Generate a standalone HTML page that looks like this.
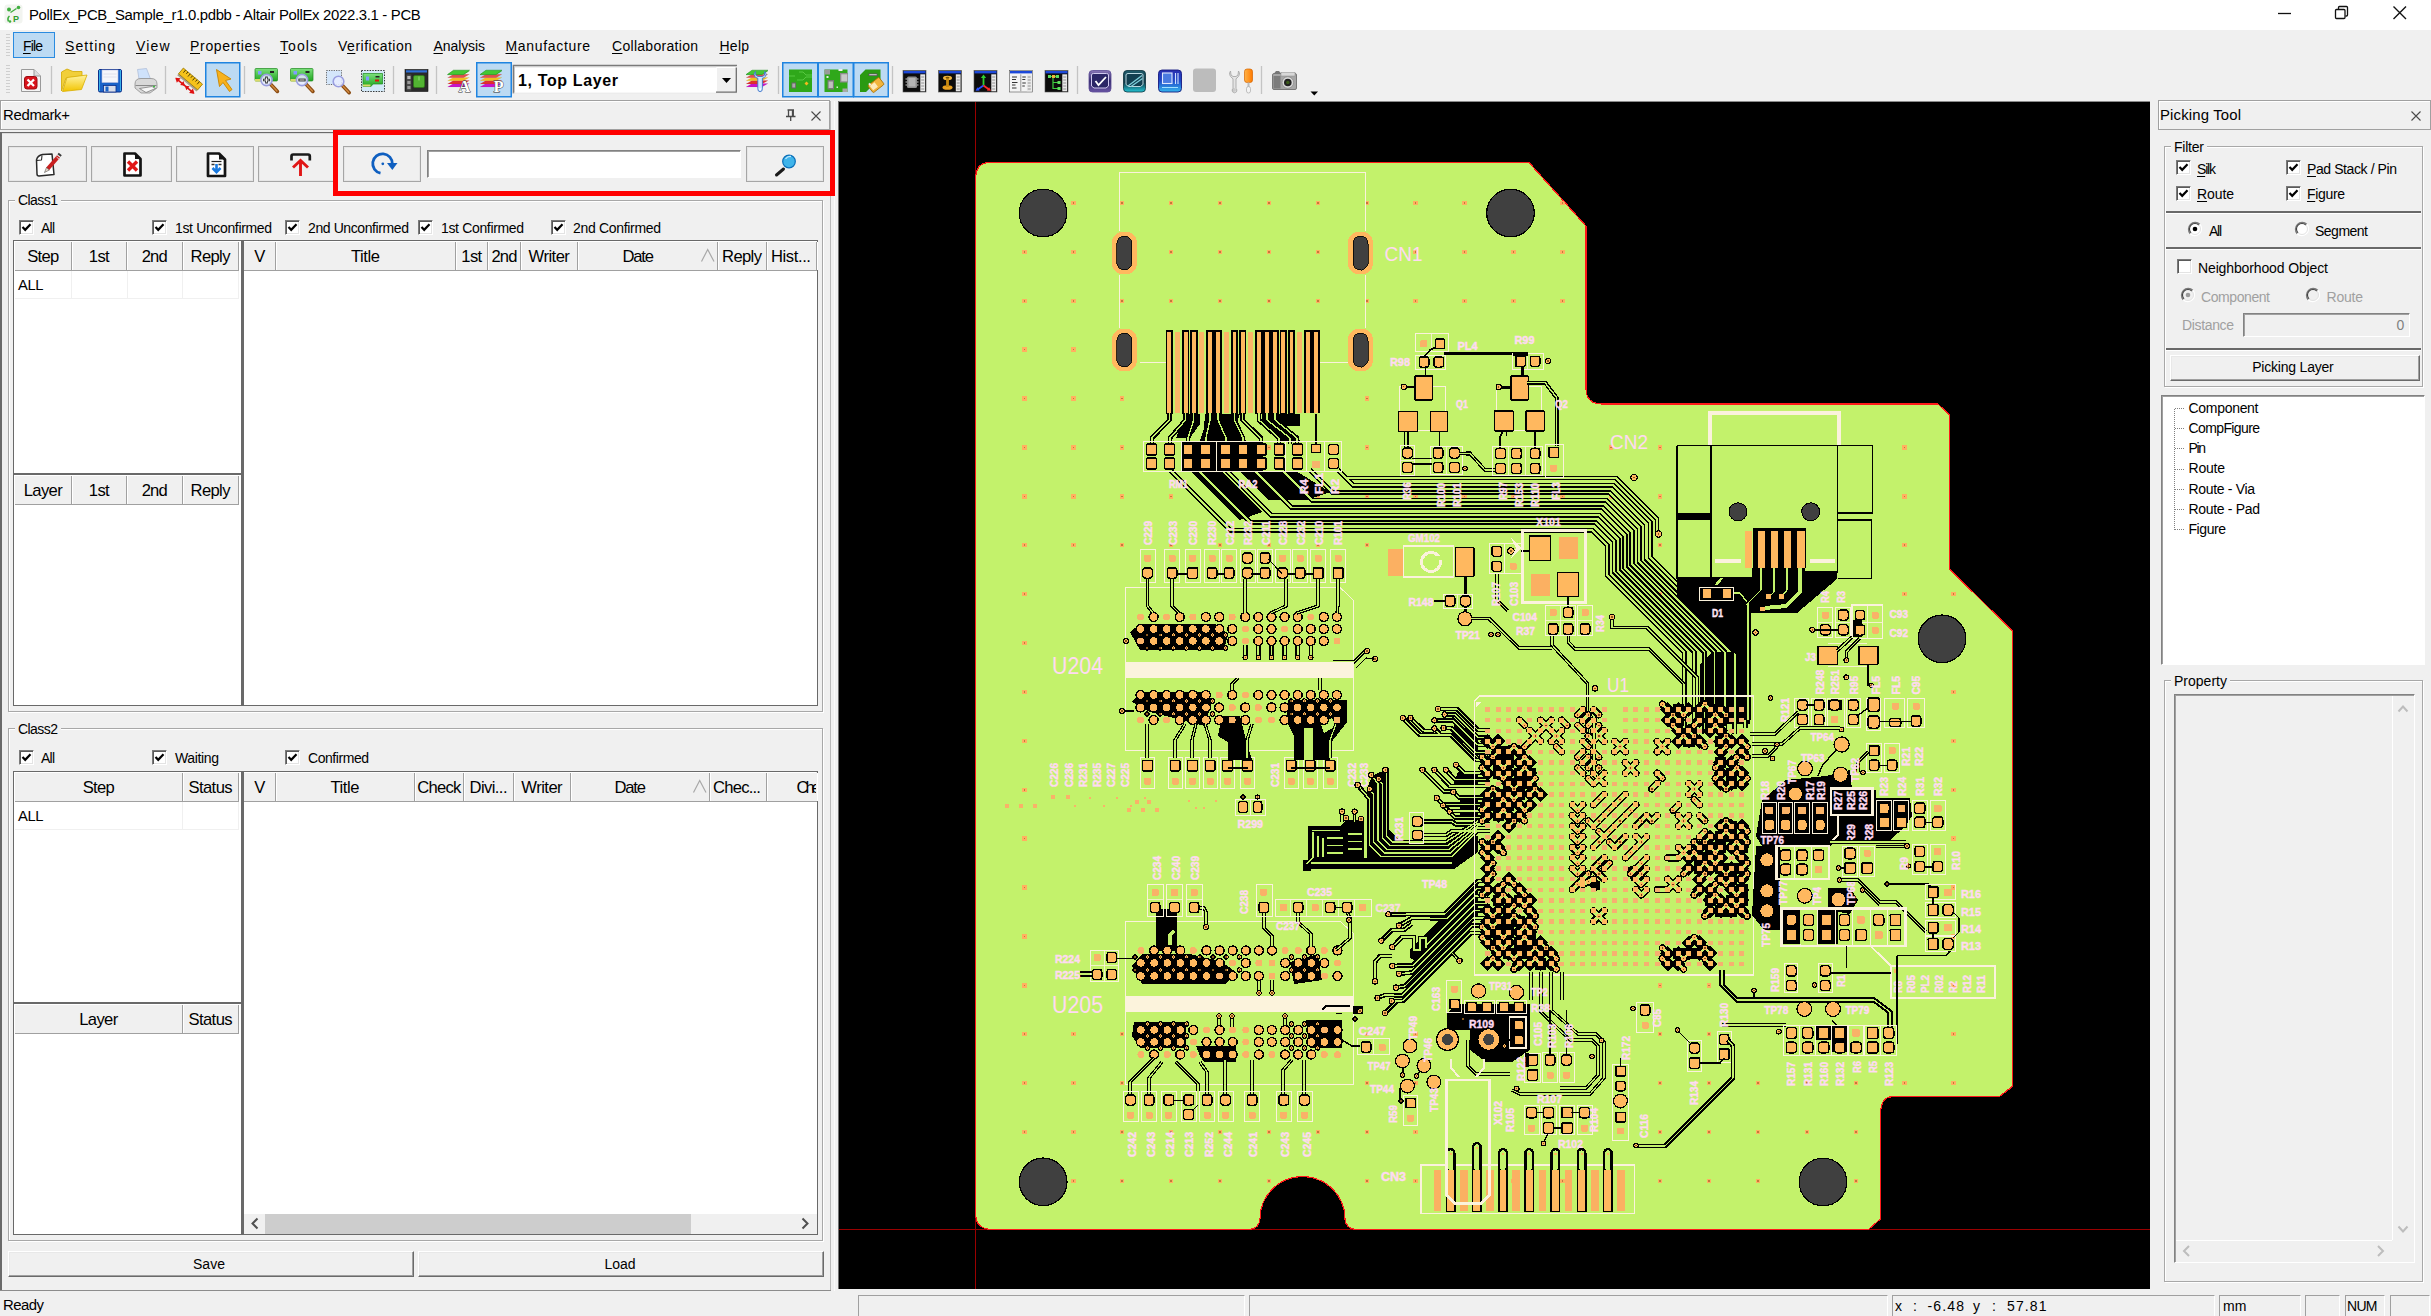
<!DOCTYPE html>
<html><head><meta charset="utf-8"><title>PollEx PCB</title>
<style>
html,body{margin:0;padding:0}
body{width:2431px;height:1316px;position:relative;overflow:hidden;background:#f0f0f0;font-family:"Liberation Sans",sans-serif}
.b{position:absolute;display:block}
.t{position:absolute;white-space:nowrap;line-height:1;font-family:"Liberation Sans",sans-serif}
u{text-decoration:underline;text-underline-offset:1.5px;text-decoration-thickness:1px}
</style></head><body>
<div class="b" style="left:0px;top:0px;width:2431px;height:30px;background:#fff"></div>
<svg class="b" style="left:4px;top:4px" width="20" height="21" viewBox="0 0 20 21">
<rect x="0.5" y="0.5" width="18" height="19" rx="3" fill="#f2f4f0"/>
<circle cx="5" cy="5.5" r="2" fill="#3fae3f"/><circle cx="14.5" cy="3.5" r="1.8" fill="#3fae3f"/>
<path d="M6.5 8.5 L12.5 4.5" stroke="#3fae3f" stroke-width="1.3" fill="none"/>
<path d="M4.5 17.5 q-1.5 -3.5 1 -5.5" stroke="#3fae3f" stroke-width="1.6" fill="none"/>
<circle cx="6" cy="17.5" r="1.3" fill="#3fae3f"/>
<text x="9" y="17.5" font-family="Liberation Sans" font-weight="bold" font-size="9" fill="#2e9e2e">P</text></svg>
<span class="t" style="left:29.00px;top:7.99px;font-size:14.9px;letter-spacing:-0.315px;color:#000;">PollEx_PCB_Sample_r1.0.pdbb - Altair PollEx 2022.3.1 - PCB</span>
<svg class="b" style="left:2270px;top:0" width="150" height="30" viewBox="2270 0 150 30">
<path d="M2278 13.5 H2291" stroke="#111" stroke-width="1.3"/>
<rect x="2335.5" y="9.5" width="9.5" height="9" fill="none" stroke="#111" stroke-width="1.3" rx="1"/>
<path d="M2338.5 9 V7.5 q0 -1 1 -1 H2346.5 q1 0 1 1 V15 q0 1 -1 1 H2345.5" fill="none" stroke="#111" stroke-width="1.3"/>
<path d="M2393.5 6.5 L2406 19 M2406 6.5 L2393.5 19" stroke="#111" stroke-width="1.4"/></svg>
<div class="b" style="left:0px;top:30px;width:2431px;height:71px;background:#f0f0f0"></div>
<div class="b" style="left:6px;top:34px;width:4px;height:22px;background:repeating-linear-gradient(#cfcfcf 0 1px,#f0f0f0 1px 3px)"></div>
<div class="b" style="left:6px;top:65px;width:4px;height:30px;background:repeating-linear-gradient(#cfcfcf 0 1px,#f0f0f0 1px 3px)"></div>
<div class="b" style="left:13px;top:32px;width:40px;height:24px;background:#bcdaf3;border:1px solid #2a8be0"></div>
<span class="t" style="left:23.00px;top:38.75px;font-size:14px;letter-spacing:-0.853px;color:#000;"><u>F</u>ile</span>
<span class="t" style="left:65.00px;top:38.75px;font-size:14px;letter-spacing:1.069px;color:#000;"><u>S</u>etting</span>
<span class="t" style="left:136.00px;top:38.75px;font-size:14px;letter-spacing:1.136px;color:#000;"><u>V</u>iew</span>
<span class="t" style="left:190.00px;top:38.75px;font-size:14px;letter-spacing:0.688px;color:#000;"><u>P</u>roperties</span>
<span class="t" style="left:280.00px;top:38.75px;font-size:14px;letter-spacing:1.079px;color:#000;"><u>T</u>ools</span>
<span class="t" style="left:338.00px;top:38.75px;font-size:14px;letter-spacing:0.502px;color:#000;">V<u>e</u>rification</span>
<span class="t" style="left:433.50px;top:38.75px;font-size:14px;letter-spacing:-0.090px;color:#000;"><u>A</u>nalysis</span>
<span class="t" style="left:505.50px;top:38.75px;font-size:14px;letter-spacing:0.668px;color:#000;"><u>M</u>anufacture</span>
<span class="t" style="left:612.00px;top:38.75px;font-size:14px;letter-spacing:0.292px;color:#000;"><u>C</u>ollaboration</span>
<span class="t" style="left:719.50px;top:38.75px;font-size:14px;letter-spacing:0.236px;color:#000;"><u>H</u>elp</span>
<svg class="b" style="left:0;top:60px" width="1340" height="41" viewBox="0 60 1340 41">
<defs><linearGradient id="gfold" x1="0" y1="0" x2="0" y2="1"><stop offset="0" stop-color="#fff3a0"/><stop offset="1" stop-color="#f2c400"/></linearGradient><linearGradient id="ggrn" x1="0" y1="0" x2="0" y2="1"><stop offset="0" stop-color="#7de07d"/><stop offset="1" stop-color="#1fa51f"/></linearGradient><linearGradient id="gpur" x1="0" y1="0" x2="0" y2="1"><stop offset="0" stop-color="#8a78b8"/><stop offset="0.5" stop-color="#2e2668"/><stop offset="1" stop-color="#6a55a5"/></linearGradient><linearGradient id="gteal" x1="0" y1="0" x2="0" y2="1"><stop offset="0" stop-color="#1f5a6a"/><stop offset="0.55" stop-color="#0e3846"/><stop offset="1" stop-color="#25c5d5"/></linearGradient><linearGradient id="gblue" x1="0" y1="0" x2="0" y2="1"><stop offset="0" stop-color="#2a2fb0"/><stop offset="0.5" stop-color="#1e49c8"/><stop offset="1" stop-color="#35b8ee"/></linearGradient><linearGradient id="gora" x1="0" y1="0" x2="1" y2="0"><stop offset="0" stop-color="#ffb347"/><stop offset="1" stop-color="#ff7a00"/></linearGradient></defs>
<path d="M51.5 66 V94" stroke="#c4c4c4" stroke-width="1.3"/>
<path d="M165.5 66 V94" stroke="#c4c4c4" stroke-width="1.3"/>
<path d="M244.5 66 V94" stroke="#c4c4c4" stroke-width="1.3"/>
<path d="M393.5 66 V94" stroke="#c4c4c4" stroke-width="1.3"/>
<path d="M436.5 66 V94" stroke="#c4c4c4" stroke-width="1.3"/>
<path d="M778.5 66 V94" stroke="#c4c4c4" stroke-width="1.3"/>
<path d="M892.5 66 V94" stroke="#c4c4c4" stroke-width="1.3"/>
<path d="M1077.5 66 V94" stroke="#c4c4c4" stroke-width="1.3"/>
<path d="M1261.5 66 V94" stroke="#c4c4c4" stroke-width="1.3"/>
<rect x="205.75" y="62.75" width="34.0" height="34" fill="#bcdaf3" stroke="#1f84e0" stroke-width="1.5"/>
<rect x="476.75" y="62.75" width="34.5" height="34" fill="#bcdaf3" stroke="#1f84e0" stroke-width="1.5"/>
<rect x="782.75" y="62.75" width="35.0" height="34" fill="#bcdaf3" stroke="#1f84e0" stroke-width="1.5"/>
<rect x="818.25" y="62.75" width="35.0" height="34" fill="#bcdaf3" stroke="#1f84e0" stroke-width="1.5"/>
<rect x="853.75" y="62.75" width="34.5" height="34" fill="#bcdaf3" stroke="#1f84e0" stroke-width="1.5"/>
<path d="M21.5 69.5 H34 L40.5 76 V91.5 H21.5 Z" fill="#f4f4f4" stroke="#9a9a9a"/><path d="M34 69.5 V76 H40.5" fill="#dcdcdc" stroke="#9a9a9a"/><rect x="24.5" y="76.5" width="12.5" height="12.5" rx="2.5" fill="#d9141c" stroke="#9c0a10"/><path d="M27.5 79.5 L34 86 M34 79.5 L27.5 86" stroke="#fff" stroke-width="2.3"/>
<path d="M61.5 91 L61.5 72 L67 69 L73 71.5 L82 71.5 L82 76 L66 78 Z" fill="#f1cf3a" stroke="#d3a800" stroke-width=".8"/><path d="M62.5 91.5 L67 77.5 L87 75 L81.5 89.5 Z" fill="url(#gfold)" stroke="#d9ae00" stroke-width=".8"/>
<rect x="98.5" y="69.5" width="23" height="22.5" rx="1.5" fill="#1a62c8" stroke="#0a2f8a"/><rect x="102" y="70" width="16" height="12.5" fill="#f6f6fb" stroke="#b9bde0" stroke-width=".6"/><path d="M103.5 74 H116.5 M103.5 77 H116.5" stroke="#dcdcea" stroke-width=".8"/><rect x="103.5" y="85.5" width="12.5" height="6.5" fill="#d9dde8" stroke="#0a2f8a" stroke-width=".8"/><rect x="105.5" y="86.5" width="3" height="5" fill="#1a62c8"/><path d="M99.5 70 V91 M120.5 70 V91" stroke="#38b0ea" stroke-width="1"/>
<path d="M139 79 L137.5 69.5 L146.5 68.5 L150.5 79 Z" fill="#cfe2fb" stroke="#a9b9d6" stroke-width=".7"/><path d="M135 84 Q135 78.5 141 78.5 H151 Q157 78.5 157 84 V88 L150 93 H141 L135 88 Z" fill="#d9d9d9" stroke="#8f8f8f" stroke-width=".8"/><path d="M135.5 85.5 H156.5" stroke="#8a8a8a" stroke-width="1"/><path d="M139.5 88.5 L152 86.5 L155.5 88.5 L146 92.5 Z" fill="#f7f7f7" stroke="#707070" stroke-width=".7"/><rect x="153" y="85.8" width="2" height="1.4" fill="#3fc03f"/>
<g transform="rotate(40 189 80)"><rect x="177" y="74.5" width="25" height="7.5" fill="#f5c21a" stroke="#9c7a00" stroke-width=".8"/><path d="M180 74.5 v3.5 M183 74.5 v2.5 M186 74.5 v3.5 M189 74.5 v2.5 M192 74.5 v3.5 M195 74.5 v2.5 M198 74.5 v3.5" stroke="#4a3a00" stroke-width=".9"/><rect x="177" y="82" width="25" height="2" fill="#7a6a4a" opacity=".6"/><path d="M178 87 H201" stroke="#e01010" stroke-width="1.6"/><path d="M177 87 l4.5 -3 v6z M202 87 l-4.5 -3 v6z M189.500 87 l-4 -2.600 v5.200z M189.500 87 l4 -2.600 v5.200z" fill="#e01010"/></g>
<path d="M216.5 69.500 L231 79 L225.500 80.500 L232 89.500 L229.500 91.500 L223 82.500 L219.500 86.500 Z" fill="#f7b21e" stroke="#c88400" stroke-width=".9" stroke-linejoin="round"/>
<rect x="255" y="68.5" width="22.5" height="12.5" rx="1" fill="url(#ggrn)" stroke="#1d8a1d" stroke-width=".7"/><rect x="255" y="79" width="9" height="2.500" fill="#d9d96a"/><rect x="258" y="71" width="3.500" height="3.500" fill="#7f9cff"/><rect x="270" y="71" width="4" height="2" fill="#222"/>
<path d="M270.42 83.92 L277.42 91.42" stroke="#8a4b12" stroke-width="3.6" stroke-linecap="round"/><path d="M271.42 84.92 L276.92 90.92" stroke="#d08a40" stroke-width="1.4" stroke-linecap="round"/><circle cx="266.5" cy="80" r="5.6" fill="#e6ecff" fill-opacity=".88" stroke="#9a9ee0" stroke-width="1.6"/>
<path d="M263.1 80 H269.9 M266.5 76.6 V83.4" stroke="#2b2b2b" stroke-width="2.6"/><path d="M264.1 80 H268.9 M266.5 77.6 V82.4" stroke="#fff" stroke-width=".9"/>
<rect x="290.5" y="68.5" width="22.5" height="12.5" rx="1" fill="url(#ggrn)" stroke="#1d8a1d" stroke-width=".7"/><rect x="290.5" y="79" width="9" height="2.500" fill="#d9d96a"/><rect x="293.5" y="71" width="3.500" height="3.500" fill="#7f9cff"/><rect x="305.5" y="71" width="4" height="2" fill="#222"/>
<path d="M305.92 83.92 L312.92 91.42" stroke="#8a4b12" stroke-width="3.6" stroke-linecap="round"/><path d="M306.92 84.92 L312.42 90.92" stroke="#d08a40" stroke-width="1.4" stroke-linecap="round"/><circle cx="302.0" cy="80" r="5.6" fill="#e6ecff" fill-opacity=".88" stroke="#9a9ee0" stroke-width="1.6"/>
<path d="M298.4 80 H305.6" stroke="#2b2b2b" stroke-width="2.8"/><path d="M299.4 80 H304.6" stroke="#fff" stroke-width=".9"/>
<rect x="326.5" y="70.5" width="15" height="14" fill="#d4e6fa" stroke="#444" stroke-width=".8" stroke-dasharray="1.2 1.200"/>
<path d="M342.21 85.21 L349.21 92.71" stroke="#8a4b12" stroke-width="3.6" stroke-linecap="round"/><path d="M343.21 86.21 L348.71 92.21" stroke="#d08a40" stroke-width="1.4" stroke-linecap="round"/><circle cx="338.5" cy="81.5" r="5.3" fill="#e6ecff" fill-opacity=".88" stroke="#9a9ee0" stroke-width="1.6"/>
<rect x="361.5" y="70.500" width="23" height="21" fill="#d3e9f8" stroke="#222" stroke-width=".9" stroke-dasharray="1.5 1.200"/><path d="M363 73.500 H382.500 V84 H373 L371 86.500 H363 Z" fill="url(#ggrn)" stroke="#1d8a1d" stroke-width=".7"/><rect x="363" y="84.500" width="7.500" height="2" fill="#d9d96a"/><rect x="366" y="76.500" width="3" height="4" fill="#7f9cff"/><rect x="375" y="79.500" width="4" height="2" fill="#e01010"/><rect x="375.500" y="76" width="4" height="1.500" fill="#222"/>
<rect x="405" y="69.500" width="23" height="22" fill="#2a2a2a" stroke="#111" stroke-width=".6"/><rect x="406" y="70.300" width="21" height="2.200" fill="#2f6fd6"/><rect x="406.500" y="74.500" width="4.800" height="16" fill="#4a4a4a"/><rect x="407.300" y="76" width="3.200" height="3" fill="#bbb"/><rect x="407.300" y="81" width="3.200" height="3" fill="#999"/><rect x="407.300" y="86" width="3.200" height="3" fill="#999"/><rect x="413.500" y="75.500" width="11" height="12" rx="1.500" fill="#52b432" stroke="#2c7a14" stroke-width=".7"/><path d="M419 76.500 v4" stroke="#9be07f" stroke-width=".9"/>
<path d="M447.5 87.0 L453.5 83.6 H469.5 L463.5 87.0 Z" fill="#c814c8" stroke="#00000022" stroke-width=".3"/>
<path d="M447.5 83.9 L453.5 80.5 H469.5 L463.5 83.9 Z" fill="#e03030" stroke="#00000022" stroke-width=".3"/>
<path d="M447.5 80.8 L453.5 77.39999999999999 H469.5 L463.5 80.8 Z" fill="#f0c020" stroke="#00000022" stroke-width=".3"/>
<path d="M447.5 77.7 L453.5 74.3 H469.5 L463.5 77.7 Z" fill="#e05050" stroke="#00000022" stroke-width=".3"/>
<path d="M447.5 74.6 L453.5 71.19999999999999 H469.5 L463.5 74.6 Z" fill="#42c832" stroke="#00000022" stroke-width=".3"/>
<path d="M447.5 74.6 L453.5 70.19999999999999 H469.5 L463.5 74.6 Z" fill="#42c832" stroke="#1d8a1d" stroke-width=".5"/>
<text x="458.500" y="92.300" font-family="Liberation Serif" font-weight="bold" font-size="16.500" fill="#fff" stroke="#333" stroke-width=".9" paint-order="stroke">A</text>
<path d="M480 87.0 L486 83.6 H502 L496 87.0 Z" fill="#c814c8" stroke="#00000022" stroke-width=".3"/>
<path d="M480 83.9 L486 80.5 H502 L496 83.9 Z" fill="#e03030" stroke="#00000022" stroke-width=".3"/>
<path d="M480 80.8 L486 77.39999999999999 H502 L496 80.8 Z" fill="#f0c020" stroke="#00000022" stroke-width=".3"/>
<path d="M480 77.7 L486 74.3 H502 L496 77.7 Z" fill="#e05050" stroke="#00000022" stroke-width=".3"/>
<path d="M480 74.6 L486 71.19999999999999 H502 L496 74.6 Z" fill="#42c832" stroke="#00000022" stroke-width=".3"/>
<path d="M480 74.6 L486 70.19999999999999 H502 L496 74.6 Z" fill="#42c832" stroke="#1d8a1d" stroke-width=".5"/>
<text x="493.500" y="92.300" font-family="Liberation Serif" font-weight="bold" font-size="16.500" fill="#fff" stroke="#333" stroke-width=".9" paint-order="stroke">P</text>
<path d="M746 87.0 L752 83.6 H768 L762 87.0 Z" fill="#c814c8" stroke="#00000022" stroke-width=".3"/>
<path d="M746 83.9 L752 80.5 H768 L762 83.9 Z" fill="#e03030" stroke="#00000022" stroke-width=".3"/>
<path d="M746 80.8 L752 77.39999999999999 H768 L762 80.8 Z" fill="#f0c020" stroke="#00000022" stroke-width=".3"/>
<path d="M746 77.7 L752 74.3 H768 L762 77.7 Z" fill="#e05050" stroke="#00000022" stroke-width=".3"/>
<path d="M746 74.6 L752 71.19999999999999 H768 L762 74.6 Z" fill="#42c832" stroke="#00000022" stroke-width=".3"/>
<path d="M746 74.6 L752 70.19999999999999 H768 L762 74.6 Z" fill="#42c832" stroke="#1d8a1d" stroke-width=".5"/>
<path d="M755.500 71.500 q-3 3 .5 6.200 l1.800 .5 v10.500 q0 3 2.300 3 q2.300 0 2.300 -3 v-10.500 l1.800 -.5 q3.500 -3.200 .5 -6.200 l-.3 3.800 -2.300 1.200 h-4 l-2.300 -1.200z" fill="#cfe9ff" stroke="#3f74c8" stroke-width=".9"/><circle cx="760.100" cy="89.200" r="1" fill="#fff"/>
<rect x="789" y="69.500" width="23" height="22.500" fill="#2fa81a"/><path d="M799 72 h4 l3 3 h6 M797 80 h6 l3 -3 h6 M789 76 h6" stroke="#57c840" stroke-width="1" fill="none"/><rect x="791.500" y="82.500" width="4.500" height="6" fill="#666"/><rect x="792.300" y="83.500" width="2.900" height="4" fill="#aaa"/><path d="M806.500 81.500 l2 2 -2 2 -2 -2z" fill="#f5b81e"/>
<rect x="824.500" y="69.500" width="23" height="22.500" fill="#2fa81a"/><rect x="824.500" y="69.500" width="5.500" height="5" fill="#9a9a9a"/><rect x="838.500" y="69" width="4" height="2" fill="#f0f0f0"/><rect x="840" y="73" width="8" height="9.500" fill="#8c8c8c"/><rect x="841.300" y="74.300" width="6" height="7" fill="#c8c8c8"/><rect x="827.500" y="80" width="6.500" height="9.500" fill="#7a7a7a"/><rect x="828.600" y="81.500" width="4.300" height="6.500" fill="#c0c0c0"/><rect x="842.500" y="88.500" width="5" height="3.500" fill="#a8a8a8"/><rect x="826.500" y="76" width="2" height="2" fill="#e8e8e8"/><rect x="836.500" y="86.500" width="1.500" height="1.500" fill="#d8f0d0"/>
<path d="M860 75 L865.500 69.500 H880.500 V86 H872 L866 92 H860 Z" fill="#2a9a12"/><rect x="868.500" y="73.500" width="9" height="2.500" fill="#555"/><rect x="869.300" y="74" width="7.400" height="1.300" fill="#bbb"/><g transform="rotate(-38 876 85)"><rect x="869" y="80.500" width="14" height="9" rx="1.200" fill="#f2b43c" stroke="#a86e00" stroke-width=".8"/><path d="M870.500 82 h6 v5.500 h-6z" fill="#fde9b8"/><rect x="870.500" y="79.500" width="2" height="2.200" fill="#eee"/></g>
<rect x="903" y="70.500" width="23" height="21.500" fill="#0c0c0c" stroke="#555" stroke-width=".6"/><rect x="903.5" y="71" width="22" height="2.400" fill="#1c48d8"/><rect x="920.3" y="74.300" width="4.800" height="17" fill="#e8e8e8"/><path d="M921.2 77 h3 M921.2 80 h3 M921.2 83 h3 M921.2 86 h3 M921.2 89 h3" stroke="#8a8a8a" stroke-width=".9"/>
<rect x="907" y="76.500" width="10" height="11.500" rx="1.500" fill="#8e8e8e"/><rect x="908.5" y="78" width="7" height="8.500" fill="#b4b4b4"/><path d="M905.5 79 h1.500 M905.5 82 h1.500 M905.5 85 h1.500 M917 79 h1.500 M917 82 h1.500 M917 85 h1.500" stroke="#ccc" stroke-width="1"/>
<rect x="938.5" y="70.500" width="23" height="21.500" fill="#0c0c0c" stroke="#555" stroke-width=".6"/><rect x="939.0" y="71" width="22" height="2.400" fill="#1c48d8"/><rect x="955.8" y="74.300" width="4.800" height="17" fill="#e8e8e8"/><path d="M956.7 77 h3 M956.7 80 h3 M956.7 83 h3 M956.7 86 h3 M956.7 89 h3" stroke="#8a8a8a" stroke-width=".9"/>
<ellipse cx="947.5" cy="78" rx="4.500" ry="2.200" fill="#f2b43c"/><ellipse cx="947.5" cy="87.500" rx="5" ry="2.300" fill="#e8a020"/><rect x="946.1" y="78" width="2.800" height="9" fill="#c88a10"/><ellipse cx="947.5" cy="77.600" rx="2" ry=".9" fill="#7a5200"/>
<rect x="974" y="70.500" width="23" height="21.500" fill="#0c0c0c" stroke="#555" stroke-width=".6"/><rect x="974.5" y="71" width="22" height="2.400" fill="#1c48d8"/><rect x="991.3" y="74.300" width="4.800" height="17" fill="#e8e8e8"/><path d="M992.2 77 h3 M992.2 80 h3 M992.2 83 h3 M992.2 86 h3 M992.2 89 h3" stroke="#8a8a8a" stroke-width=".9"/>
<path d="M983.5 85.500 V77" stroke="#2fd02f" stroke-width="1.800"/><path d="M983.5 74.500 l-2.600 3.600 h5.200z" fill="#2fd02f"/><path d="M983.5 85.500 L977.5 89.500" stroke="#2a50ff" stroke-width="1.800"/><path d="M975.5 90.800 l4.200 -.2 -2.300 -3.300z" fill="#2a50ff"/><path d="M983.5 85.500 L989 89.500" stroke="#ff2a2a" stroke-width="1.800"/><path d="M991 90.800 l-4.200 -.2 2.300 -3.300z" fill="#ff2a2a"/>
<rect x="1009.5" y="70.500" width="23" height="21.500" fill="#f4f4f4" stroke="#555" stroke-width=".6"/><rect x="1010.0" y="71" width="22" height="2.400" fill="#1c48d8"/><rect x="1026.8" y="74.300" width="4.800" height="17" fill="#e8e8e8"/><path d="M1027.7 77 h3 M1027.7 80 h3 M1027.7 83 h3 M1027.7 86 h3 M1027.7 89 h3" stroke="#8a8a8a" stroke-width=".9"/>
<rect x="1020.3" y="74.300" width="1" height="17" fill="#999"/><path d="M1012.0 77 h5 M1012.0 79.500 h4 M1012.0 82.500 h5.500 M1012.0 85 h3.500 M1012.0 88 h4.500 M1022.3 77 h3.500 M1022.3 79.500 h3 M1022.3 83 h3.500 M1022.3 86 h2.500" stroke="#333" stroke-width="1.100"/>
<rect x="1045" y="70.500" width="23" height="21.500" fill="#0c0c0c" stroke="#555" stroke-width=".6"/><rect x="1045.5" y="71" width="22" height="2.400" fill="#1c48d8"/><rect x="1062.3" y="74.300" width="4.800" height="17" fill="#e8e8e8"/><path d="M1063.2 77 h3 M1063.2 80 h3 M1063.2 83 h3 M1063.2 86 h3 M1063.2 89 h3" stroke="#8a8a8a" stroke-width=".9"/>
<path d="M1050 76.500 h6 M1053 76.500 v12 h5 M1053 82.500 h5" stroke="#3fd03f" stroke-width="1.200" fill="none"/><rect x="1048" y="75" width="3" height="3" fill="#5fe05f"/><rect x="1052" y="75" width="3.200" height="3" fill="#f2b43c"/><rect x="1056" y="75" width="3" height="3" fill="#5fe05f"/><rect x="1057.5" y="81" width="3" height="3" fill="#5fe05f"/><rect x="1057.5" y="87" width="3" height="3" fill="#5fe05f"/>
<rect x="1089" y="70.500" width="22" height="21.500" rx="3.500" fill="url(#gpur)" stroke="#5a4a95" stroke-width=".8"/><path d="M1091.500 75 q0 -1.500 2 -1.500 h13 q2 0 2 1.500 v11 l-2.500 2 h-12 l-2.500 -2z" fill="#2b2666" stroke="#cfc8ee" stroke-width="1"/><path d="M1095.500 81 l3 4 l7.500 -8" stroke="#fff" stroke-width="1.800" fill="none"/>
<rect x="1123.500" y="70.500" width="22" height="21.500" rx="3.500" fill="url(#gteal)" stroke="#0a2e3a" stroke-width=".8"/><path d="M1126 75 q0 -1.500 2 -1.500 h13 q2 0 2 1.500 v9.500 l-2.500 2 h-12 l-2.500 -2z" fill="#123f50" stroke="#b8d6de" stroke-width="1"/><path d="M1128 86 L1142 75.500 M1131 86.500 L1142.500 78.500" stroke="#7fd0dc" stroke-width="1.300"/>
<rect x="1158.500" y="70" width="23" height="22" rx="3.500" fill="url(#gblue)" stroke="#151a80" stroke-width=".9"/><rect x="1162.500" y="73" width="9.500" height="10.500" fill="#4a7ae0" stroke="#dfe8ff" stroke-width="1.100"/><path d="M1175.500 73 v11 M1178 73 v11" stroke="#cfe0ff" stroke-width="1.100"/><path d="M1162 87.500 h16" stroke="#9fe0ff" stroke-width="1"/>
<rect x="1193" y="68.500" width="23" height="23.500" rx="3" fill="#bcbcbc"/>
<path d="M1230.500 71 q-2.500 3.500 1.500 7 l1 .800 v9.500 q-1.500 1.500 -.5 3.500 q2 2 4 0 q1 -2 -.5 -3.500 v-9.500 l1 -.8 q4 -3.500 1.500 -7 l-.5 4 -2 1.500 h-3 l-2 -1.500z" fill="#e4e4e4" stroke="#a8a8a8" stroke-width=".9"/><circle cx="1234" cy="90" r="1.200" fill="#f0f0f0" stroke="#999" stroke-width=".6"/><rect x="1244.500" y="69" width="8" height="13.500" rx="2.500" fill="url(#gora)" stroke="#d46400" stroke-width=".7"/><rect x="1247.500" y="82.500" width="2" height="4.500" fill="#bbb"/><rect x="1246.500" y="86.500" width="4" height="6.500" rx="2" fill="#f4f4f4" stroke="#aaa" stroke-width=".7"/>
<path d="M1274 73.500 l2 -2.500 h3 l2 2.500z" fill="#777"/><rect x="1272.500" y="73.500" width="24" height="16" rx="1.500" fill="#a6a6a6" stroke="#6e6e6e" stroke-width=".9"/><rect x="1273.500" y="76" width="7" height="12.500" fill="#7c7c7c"/><rect x="1281" y="72.500" width="14" height="3.500" fill="#d8d8d8" stroke="#8a8a8a" stroke-width=".5"/><circle cx="1287.800" cy="82.500" r="5.800" fill="#d9d9d9" stroke="#8a8a8a" stroke-width=".8"/><circle cx="1287.800" cy="82.500" r="3.800" fill="#222"/><circle cx="1287.800" cy="82.500" r="1.800" fill="#3a5a1a"/>
<path d="M1310.500 91.500 h7.500 l-3.750 4z" fill="#000"/>
<rect x="513" y="65" width="224" height="28.500" fill="#fff"/><path d="M513.500 93.500 V65.500 H737" stroke="#7a7a7a" stroke-width="1.600" fill="none"/><path d="M514.500 92.500 V66.800 H736" stroke="#c8c8c8" stroke-width="1" fill="none"/><path d="M513.500 93.200 H737" stroke="#e6e6e6" stroke-width="1"/><rect x="716.500" y="67.500" width="19.500" height="24.500" fill="#f0f0f0"/><path d="M716.500 92 V67.500 H736" stroke="#fff" stroke-width="1" fill="none"/><path d="M716 92.200 H736.300 V67.500" stroke="#6e6e6e" stroke-width="1.300" fill="none"/><path d="M722 78 h9 l-4.500 5z" fill="#000"/>
</svg>
<span class="t" style="left:518.00px;top:73.06px;font-size:16px;letter-spacing:0.631px;color:#000;font-weight:bold;">1, Top Layer</span>
<div class="b" style="left:0px;top:100px;width:828px;height:28px;border:1px solid #a0a0a0;background:#f0f0f0;box-shadow:inset 1px 1px 0 #fff"></div>
<span class="t" style="left:3.00px;top:107.79px;font-size:14.9px;letter-spacing:-0.307px;color:#000;">Redmark+</span>
<svg class="b" style="left:780px;top:104px" width="46" height="22" viewBox="780 104 46 22">
<path d="M787.500 110 h6.500 M788.500 110 v6.500 M792.500 110 v6.500 M793.300 110 v6.500 M786 116.500 h9.500 M790.700 116.500 v4.500" stroke="#4a4a4a" stroke-width="1.300" fill="none"/>
<path d="M811.500 111.500 L820.500 120.500 M820.500 111.500 L811.500 120.500" stroke="#4a4a4a" stroke-width="1.100"/></svg>
<div class="b" style="left:0px;top:132px;width:830px;height:1px;background:#6a6a6a"></div>
<div class="b" style="left:0px;top:132px;width:1.5px;height:1158px;background:#6a6a6a"></div>
<div class="b" style="left:2px;top:133px;width:828px;height:1px;background:#dcdcdc"></div>
<div class="b" style="left:829.5px;top:101px;width:1px;height:1190px;background:#b8b8b8"></div>
<div class="b" style="left:0px;top:1290px;width:831px;height:1px;background:#8c8c8c"></div>
<div class="b" style="left:833.5px;top:101px;width:1px;height:1190px;background:#fafafa"></div>
<div class="b" style="left:8px;top:146px;width:77px;height:34px;border:1px solid #a6a6a6;background:#f0f0f0;box-shadow:inset 0 0 0 1px #e6e6e6"></div>
<div class="b" style="left:91px;top:146px;width:79px;height:34px;border:1px solid #a6a6a6;background:#f0f0f0;box-shadow:inset 0 0 0 1px #e6e6e6"></div>
<div class="b" style="left:176px;top:146px;width:76px;height:34px;border:1px solid #a6a6a6;background:#f0f0f0;box-shadow:inset 0 0 0 1px #e6e6e6"></div>
<div class="b" style="left:258px;top:146px;width:78px;height:34px;border:1px solid #a6a6a6;background:#f0f0f0;box-shadow:inset 0 0 0 1px #e6e6e6"></div>
<div class="b" style="left:343px;top:146px;width:76px;height:34px;border:1px solid #a6a6a6;background:#f0f0f0;box-shadow:inset 0 0 0 1px #e6e6e6"></div>
<div class="b" style="left:746px;top:146px;width:76px;height:34px;border:1px solid #a6a6a6;background:#f0f0f0;box-shadow:inset 0 0 0 1px #e6e6e6"></div>
<div class="b" style="left:427px;top:150px;width:312px;height:26px;border-top:1px solid #828282;border-left:1px solid #828282;border-right:1px solid #fff;border-bottom:1px solid #fff;background:#fff;box-shadow:inset 1px 1px 0 #a0a0a0"></div>
<svg class="b" style="left:0;top:140px" width="830" height="50" viewBox="0 140 830 50">
<g stroke-linejoin="round"><path d="M36.500 160 q1 -4.500 6 -5.500 l9.500 -.5 l2 20.500 l-15 1.500 q-2 0 -2 -2z" fill="#fff" stroke="#2a2a2a" stroke-width="1.500"/>
<path d="M37 160.500 l4.500 -.5 l.5 -4.500" fill="none" stroke="#2a2a2a" stroke-width="1.100"/>
<path d="M58.500 156.500 l-11 12.500" stroke="#c81e1e" stroke-width="4"/><path d="M59 155.500 l1.300 -1.500" stroke="#3a3a3a" stroke-width="4"/><path d="M56.500 157 l3 2.600" stroke="#ddd" stroke-width="1"/>
<path d="M46.500 167.500 l-2 5 l4.800 -2.500z" fill="#e8d8c8" stroke="#555" stroke-width=".6"/></g>
<path d="M124.500 153.500 h10.500 l5.500 5.500 v16.500 h-16z" fill="#fff" stroke="#151515" stroke-width="2.700" stroke-linejoin="round"/><path d="M135 153.500 v5.500 h5.500z" fill="#151515"/>
<path d="M128 161.500 l9 9 M137 161.500 l-9 9" stroke="#e01616" stroke-width="3.400"/>
<path d="M208 153.500 h11 l6 6 v16.500 h-17z" fill="#fff" stroke="#151515" stroke-width="2.700" stroke-linejoin="round"/><path d="M219 153.500 v6 h6z" fill="#151515"/>
<path d="M211.500 161.500 h10" stroke="#222" stroke-width="1.200"/><path d="M211.500 164.500 h3 M218.500 164.500 h3" stroke="#333" stroke-width="1.400"/>
<path d="M216.500 164 v7.500 M212.500 168 l4 4.200 l4 -4.200" stroke="#1a7ae0" stroke-width="2.600" fill="none"/>
<path d="M291.500 160.500 v-4.300 q0 -1.700 1.700 -1.700 h14.900 q1.700 0 1.700 1.700 v4.300" stroke="#1a1a1a" stroke-width="2.700" fill="none"/>
<path d="M300.500 176 v-15 M293 167.500 l7.500 -7 l7.500 7" stroke="#e01616" stroke-width="2.900" fill="none"/>
<path d="M380.500 173.200 A9.800 9.800 0 1 1 392.300 164" stroke="#0f5fc0" stroke-width="2.800" fill="none"/><path d="M387 163 h10.500 l-5.200 7z" fill="#0f5fc0"/><circle cx="382.800" cy="163.800" r="1.400" fill="#0f5fc0"/>
<path d="M776.500 175 l7 -6" stroke="#1a1a1a" stroke-width="3" stroke-linecap="round"/><circle cx="789" cy="161.500" r="6.300" fill="#3fb4ea" stroke="#0a6fb8" stroke-width="1.200"/><path d="M785.500 159 q2 -3 5.500 -2.500" stroke="#bfe8ff" stroke-width="1.300" fill="none"/>
</svg>
<div class="b" style="left:332.5px;top:130px;width:492.5px;height:56px;border:5px solid #ff0000"></div>
<div class="b" style="left:8px;top:200px;width:813px;height:510px;border:1px solid #d0d0d0;box-shadow:inset 1px 1px 0 #fff,1px 1px 0 #fff;border-color:#a8a8a8"></div><div class="b" style="left:15px;top:192px;width:46px;height:16px;background:#f0f0f0"></div><span class="t" style="left:18.00px;top:192.95px;font-size:14px;letter-spacing:-0.559px;color:#000;">Class1</span>
<div class="b" style="left:19px;top:219.5px;width:13px;height:13px;border-top:1px solid #7a7a7a;border-left:1px solid #7a7a7a;border-right:1px solid #fff;border-bottom:1px solid #fff;background:#fff;box-shadow:inset 1px 1px 0 #5a5a5a,inset -1px -1px 0 #e3e3e3"></div><svg class="b" style="left:19px;top:219.5px" width="15" height="15" viewBox="0 0 15 15"><path d="M3.500 7 L6.200 9.800 L11.500 4.300" stroke="#000" stroke-width="2.200" fill="none"/></svg>
<span class="t" style="left:41.00px;top:221.25px;font-size:14px;letter-spacing:-0.779px;color:#000;">All</span>
<div class="b" style="left:152px;top:219.5px;width:13px;height:13px;border-top:1px solid #7a7a7a;border-left:1px solid #7a7a7a;border-right:1px solid #fff;border-bottom:1px solid #fff;background:#fff;box-shadow:inset 1px 1px 0 #5a5a5a,inset -1px -1px 0 #e3e3e3"></div><svg class="b" style="left:152px;top:219.5px" width="15" height="15" viewBox="0 0 15 15"><path d="M3.500 7 L6.200 9.800 L11.500 4.300" stroke="#000" stroke-width="2.200" fill="none"/></svg>
<span class="t" style="left:175.00px;top:221.25px;font-size:14px;letter-spacing:-0.352px;color:#000;">1st Unconfirmed</span>
<div class="b" style="left:285px;top:219.5px;width:13px;height:13px;border-top:1px solid #7a7a7a;border-left:1px solid #7a7a7a;border-right:1px solid #fff;border-bottom:1px solid #fff;background:#fff;box-shadow:inset 1px 1px 0 #5a5a5a,inset -1px -1px 0 #e3e3e3"></div><svg class="b" style="left:285px;top:219.5px" width="15" height="15" viewBox="0 0 15 15"><path d="M3.500 7 L6.200 9.800 L11.500 4.300" stroke="#000" stroke-width="2.200" fill="none"/></svg>
<span class="t" style="left:308.00px;top:221.25px;font-size:14px;letter-spacing:-0.401px;color:#000;">2nd Unconfirmed</span>
<div class="b" style="left:418px;top:219.5px;width:13px;height:13px;border-top:1px solid #7a7a7a;border-left:1px solid #7a7a7a;border-right:1px solid #fff;border-bottom:1px solid #fff;background:#fff;box-shadow:inset 1px 1px 0 #5a5a5a,inset -1px -1px 0 #e3e3e3"></div><svg class="b" style="left:418px;top:219.5px" width="15" height="15" viewBox="0 0 15 15"><path d="M3.500 7 L6.200 9.800 L11.500 4.300" stroke="#000" stroke-width="2.200" fill="none"/></svg>
<span class="t" style="left:441.00px;top:221.25px;font-size:14px;letter-spacing:-0.345px;color:#000;">1st Confirmed</span>
<div class="b" style="left:551px;top:219.5px;width:13px;height:13px;border-top:1px solid #7a7a7a;border-left:1px solid #7a7a7a;border-right:1px solid #fff;border-bottom:1px solid #fff;background:#fff;box-shadow:inset 1px 1px 0 #5a5a5a,inset -1px -1px 0 #e3e3e3"></div><svg class="b" style="left:551px;top:219.5px" width="15" height="15" viewBox="0 0 15 15"><path d="M3.500 7 L6.200 9.800 L11.500 4.300" stroke="#000" stroke-width="2.200" fill="none"/></svg>
<span class="t" style="left:573.00px;top:221.25px;font-size:14px;letter-spacing:-0.319px;color:#000;">2nd Confirmed</span>
<div class="b" style="left:13px;top:240px;width:805px;height:466px;border:1px solid #696969;background:#fff;box-sizing:border-box"></div>
<div class="b" style="left:241px;top:241px;width:2.5px;height:465px;background:#696969"></div>
<div class="b" style="left:14px;top:472.5px;width:227px;height:2.5px;background:#696969"></div>
<div class="b" style="left:15px;top:241px;width:223.5px;height:29.5px;background:#f0f0f0;border-bottom:1px solid #a0a0a0;box-sizing:border-box;box-shadow:inset 0 1px 0 #fff"></div><div class="b" style="left:70.5px;top:242px;width:1px;height:27.5px;background:#a0a0a0"></div><div class="b" style="left:71.5px;top:242px;width:1px;height:27.5px;background:#fff"></div><span class="t" style="left:27.20px;top:248.55px;font-size:16.6px;letter-spacing:-0.683px;color:#000;">Step</span><div class="b" style="left:126px;top:242px;width:1px;height:27.5px;background:#a0a0a0"></div><div class="b" style="left:127px;top:242px;width:1px;height:27.5px;background:#fff"></div><span class="t" style="left:88.84px;top:248.55px;font-size:16.6px;letter-spacing:-0.664px;color:#000;">1st</span><div class="b" style="left:181.5px;top:242px;width:1px;height:27.5px;background:#a0a0a0"></div><div class="b" style="left:182.5px;top:242px;width:1px;height:27.5px;background:#fff"></div><span class="t" style="left:141.73px;top:248.55px;font-size:16.6px;letter-spacing:-0.831px;color:#000;">2nd</span><div class="b" style="left:237.5px;top:242px;width:1px;height:27.5px;background:#a0a0a0"></div><div class="b" style="left:238.5px;top:242px;width:1px;height:27.5px;background:#fff"></div><span class="t" style="left:190.55px;top:248.55px;font-size:16.6px;letter-spacing:-0.637px;color:#000;">Reply</span>
<div class="b" style="left:238.5px;top:241px;width:2.5px;height:30px;background:#fff"></div>
<div class="b" style="left:15px;top:475px;width:223.5px;height:29.5px;background:#f0f0f0;border-bottom:1px solid #a0a0a0;box-sizing:border-box;box-shadow:inset 0 1px 0 #fff"></div><div class="b" style="left:70.5px;top:476px;width:1px;height:27.5px;background:#a0a0a0"></div><div class="b" style="left:71.5px;top:476px;width:1px;height:27.5px;background:#fff"></div><span class="t" style="left:23.73px;top:483.05px;font-size:16.6px;letter-spacing:-0.623px;color:#000;">Layer</span><div class="b" style="left:126px;top:476px;width:1px;height:27.5px;background:#a0a0a0"></div><div class="b" style="left:127px;top:476px;width:1px;height:27.5px;background:#fff"></div><span class="t" style="left:88.84px;top:483.05px;font-size:16.6px;letter-spacing:-0.664px;color:#000;">1st</span><div class="b" style="left:181.5px;top:476px;width:1px;height:27.5px;background:#a0a0a0"></div><div class="b" style="left:182.5px;top:476px;width:1px;height:27.5px;background:#fff"></div><span class="t" style="left:141.73px;top:483.05px;font-size:16.6px;letter-spacing:-0.831px;color:#000;">2nd</span><div class="b" style="left:237.5px;top:476px;width:1px;height:27.5px;background:#a0a0a0"></div><div class="b" style="left:238.5px;top:476px;width:1px;height:27.5px;background:#fff"></div><span class="t" style="left:190.55px;top:483.05px;font-size:16.6px;letter-spacing:-0.637px;color:#000;">Reply</span>
<div class="b" style="left:238.5px;top:475px;width:2.5px;height:30px;background:#fff"></div>
<div class="b" style="left:243.5px;top:241px;width:573.5px;height:29.5px;background:#f0f0f0;border-bottom:1px solid #a0a0a0;box-sizing:border-box;box-shadow:inset 0 1px 0 #fff"></div><div class="b" style="left:274.5px;top:242px;width:1px;height:27.5px;background:#a0a0a0"></div><div class="b" style="left:275.5px;top:242px;width:1px;height:27.5px;background:#fff"></div><span class="t" style="left:254.30px;top:248.55px;font-size:16.6px;letter-spacing:0.000px;color:#000;">V</span><div class="b" style="left:454.5px;top:242px;width:1px;height:27.5px;background:#a0a0a0"></div><div class="b" style="left:455.5px;top:242px;width:1px;height:27.5px;background:#fff"></div><span class="t" style="left:351.05px;top:248.55px;font-size:16.6px;letter-spacing:-0.461px;color:#000;">Title</span><div class="b" style="left:487px;top:242px;width:1px;height:27.5px;background:#a0a0a0"></div><div class="b" style="left:488px;top:242px;width:1px;height:27.5px;background:#fff"></div><span class="t" style="left:461.34px;top:248.55px;font-size:16.6px;letter-spacing:-0.664px;color:#000;">1st</span><div class="b" style="left:520px;top:242px;width:1px;height:27.5px;background:#a0a0a0"></div><div class="b" style="left:521px;top:242px;width:1px;height:27.5px;background:#fff"></div><span class="t" style="left:491.48px;top:248.55px;font-size:16.6px;letter-spacing:-0.831px;color:#000;">2nd</span><div class="b" style="left:576.5px;top:242px;width:1px;height:27.5px;background:#a0a0a0"></div><div class="b" style="left:577.5px;top:242px;width:1px;height:27.5px;background:#fff"></div><span class="t" style="left:528.59px;top:248.55px;font-size:16.6px;letter-spacing:-0.527px;color:#000;">Writer</span><div class="b" style="left:716.5px;top:242px;width:1px;height:27.5px;background:#a0a0a0"></div><div class="b" style="left:717.5px;top:242px;width:1px;height:27.5px;background:#fff"></div><span class="t" style="left:622.50px;top:248.55px;font-size:16.6px;letter-spacing:-1.188px;color:#000;">Date</span><div class="b" style="left:765.5px;top:242px;width:1px;height:27.5px;background:#a0a0a0"></div><div class="b" style="left:766.5px;top:242px;width:1px;height:27.5px;background:#fff"></div><span class="t" style="left:722.05px;top:248.55px;font-size:16.6px;letter-spacing:-0.637px;color:#000;">Reply</span><div class="b" style="left:816px;top:242px;width:1px;height:27.5px;background:#a0a0a0"></div><div class="b" style="left:817px;top:242px;width:1px;height:27.5px;background:#fff"></div><span class="t" style="left:771.00px;top:248.55px;font-size:16.6px;letter-spacing:-0.404px;color:#000;">Hist...</span>
<svg class="b" style="left:700px;top:248px" width="16" height="16" viewBox="700 248 16 16"><path d="M701.500 261.500 L707.700 249.500 L714 261.500" stroke="#a8a8a8" stroke-width="1.200" fill="none"/></svg>
<span class="t" style="left:18.00px;top:277.57px;font-size:14.8px;letter-spacing:-0.417px;color:#000;">ALL</span>
<div class="b" style="left:15px;top:298px;width:224px;height:1px;background:#f0f0f0"></div>
<div class="b" style="left:71px;top:271px;width:1px;height:27px;background:#f0f0f0"></div>
<div class="b" style="left:126.5px;top:271px;width:1px;height:27px;background:#f0f0f0"></div>
<div class="b" style="left:182px;top:271px;width:1px;height:27px;background:#f0f0f0"></div>
<div class="b" style="left:238px;top:271px;width:1px;height:27px;background:#f0f0f0"></div>
<div class="b" style="left:8px;top:728px;width:813px;height:511px;border:1px solid #d0d0d0;box-shadow:inset 1px 1px 0 #fff,1px 1px 0 #fff;border-color:#a8a8a8"></div><div class="b" style="left:15px;top:720px;width:46px;height:16px;background:#f0f0f0"></div><span class="t" style="left:18.00px;top:721.95px;font-size:14px;letter-spacing:-0.559px;color:#000;">Class2</span>
<div class="b" style="left:19px;top:749.5px;width:13px;height:13px;border-top:1px solid #7a7a7a;border-left:1px solid #7a7a7a;border-right:1px solid #fff;border-bottom:1px solid #fff;background:#fff;box-shadow:inset 1px 1px 0 #5a5a5a,inset -1px -1px 0 #e3e3e3"></div><svg class="b" style="left:19px;top:749.5px" width="15" height="15" viewBox="0 0 15 15"><path d="M3.500 7 L6.200 9.800 L11.500 4.300" stroke="#000" stroke-width="2.200" fill="none"/></svg>
<span class="t" style="left:41.00px;top:751.45px;font-size:14px;letter-spacing:-0.779px;color:#000;">All</span>
<div class="b" style="left:152px;top:749.5px;width:13px;height:13px;border-top:1px solid #7a7a7a;border-left:1px solid #7a7a7a;border-right:1px solid #fff;border-bottom:1px solid #fff;background:#fff;box-shadow:inset 1px 1px 0 #5a5a5a,inset -1px -1px 0 #e3e3e3"></div><svg class="b" style="left:152px;top:749.5px" width="15" height="15" viewBox="0 0 15 15"><path d="M3.500 7 L6.200 9.800 L11.500 4.300" stroke="#000" stroke-width="2.200" fill="none"/></svg>
<span class="t" style="left:175.00px;top:751.45px;font-size:14px;letter-spacing:-0.361px;color:#000;">Waiting</span>
<div class="b" style="left:285px;top:749.5px;width:13px;height:13px;border-top:1px solid #7a7a7a;border-left:1px solid #7a7a7a;border-right:1px solid #fff;border-bottom:1px solid #fff;background:#fff;box-shadow:inset 1px 1px 0 #5a5a5a,inset -1px -1px 0 #e3e3e3"></div><svg class="b" style="left:285px;top:749.5px" width="15" height="15" viewBox="0 0 15 15"><path d="M3.500 7 L6.200 9.800 L11.500 4.300" stroke="#000" stroke-width="2.200" fill="none"/></svg>
<span class="t" style="left:308.00px;top:751.45px;font-size:14px;letter-spacing:-0.447px;color:#000;">Confirmed</span>
<div class="b" style="left:13px;top:771px;width:805px;height:464px;border:1px solid #696969;background:#fff;box-sizing:border-box"></div>
<div class="b" style="left:241px;top:772px;width:2.5px;height:462px;background:#696969"></div>
<div class="b" style="left:14px;top:1001.5px;width:227px;height:2.5px;background:#696969"></div>
<div class="b" style="left:15px;top:772px;width:223.5px;height:29.5px;background:#f0f0f0;border-bottom:1px solid #a0a0a0;box-sizing:border-box;box-shadow:inset 0 1px 0 #fff"></div><div class="b" style="left:181.5px;top:773px;width:1px;height:27.5px;background:#a0a0a0"></div><div class="b" style="left:182.5px;top:773px;width:1px;height:27.5px;background:#fff"></div><span class="t" style="left:82.70px;top:779.55px;font-size:16.6px;letter-spacing:-0.683px;color:#000;">Step</span><div class="b" style="left:237.5px;top:773px;width:1px;height:27.5px;background:#a0a0a0"></div><div class="b" style="left:238.5px;top:773px;width:1px;height:27.5px;background:#fff"></div><span class="t" style="left:188.38px;top:779.55px;font-size:16.6px;letter-spacing:-0.565px;color:#000;">Status</span>
<div class="b" style="left:238.5px;top:772px;width:2.5px;height:30px;background:#fff"></div>
<div class="b" style="left:15px;top:1004px;width:223.5px;height:29.5px;background:#f0f0f0;border-bottom:1px solid #a0a0a0;box-sizing:border-box;box-shadow:inset 0 1px 0 #fff"></div><div class="b" style="left:181.5px;top:1005px;width:1px;height:27.5px;background:#a0a0a0"></div><div class="b" style="left:182.5px;top:1005px;width:1px;height:27.5px;background:#fff"></div><span class="t" style="left:79.23px;top:1011.85px;font-size:16.6px;letter-spacing:-0.623px;color:#000;">Layer</span><div class="b" style="left:237.5px;top:1005px;width:1px;height:27.5px;background:#a0a0a0"></div><div class="b" style="left:238.5px;top:1005px;width:1px;height:27.5px;background:#fff"></div><span class="t" style="left:188.38px;top:1011.85px;font-size:16.6px;letter-spacing:-0.565px;color:#000;">Status</span>
<div class="b" style="left:238.5px;top:1004px;width:2.5px;height:30px;background:#fff"></div>
<div class="b" style="left:243.5px;top:772px;width:573.5px;height:29.5px;background:#f0f0f0;border-bottom:1px solid #a0a0a0;box-sizing:border-box;box-shadow:inset 0 1px 0 #fff"></div><div class="b" style="left:274.5px;top:773px;width:1px;height:27.5px;background:#a0a0a0"></div><div class="b" style="left:275.5px;top:773px;width:1px;height:27.5px;background:#fff"></div><span class="t" style="left:254.30px;top:779.55px;font-size:16.6px;letter-spacing:0.000px;color:#000;">V</span><div class="b" style="left:413.5px;top:773px;width:1px;height:27.5px;background:#a0a0a0"></div><div class="b" style="left:414.5px;top:773px;width:1px;height:27.5px;background:#fff"></div><span class="t" style="left:330.55px;top:779.55px;font-size:16.6px;letter-spacing:-0.461px;color:#000;">Title</span><div class="b" style="left:463px;top:773px;width:1px;height:27.5px;background:#a0a0a0"></div><div class="b" style="left:464px;top:773px;width:1px;height:27.5px;background:#fff"></div><span class="t" style="left:417.14px;top:779.55px;font-size:16.6px;letter-spacing:-0.706px;color:#000;">Check</span><div class="b" style="left:512.5px;top:773px;width:1px;height:27.5px;background:#a0a0a0"></div><div class="b" style="left:513.5px;top:773px;width:1px;height:27.5px;background:#fff"></div><span class="t" style="left:469.50px;top:779.55px;font-size:16.6px;letter-spacing:-0.583px;color:#000;">Divi...</span><div class="b" style="left:569.5px;top:773px;width:1px;height:27.5px;background:#a0a0a0"></div><div class="b" style="left:570.5px;top:773px;width:1px;height:27.5px;background:#fff"></div><span class="t" style="left:521.34px;top:779.55px;font-size:16.6px;letter-spacing:-0.527px;color:#000;">Writer</span><div class="b" style="left:708.5px;top:773px;width:1px;height:27.5px;background:#a0a0a0"></div><div class="b" style="left:709.5px;top:773px;width:1px;height:27.5px;background:#fff"></div><span class="t" style="left:614.50px;top:779.55px;font-size:16.6px;letter-spacing:-1.188px;color:#000;">Date</span><div class="b" style="left:765.5px;top:773px;width:1px;height:27.5px;background:#a0a0a0"></div><div class="b" style="left:766.5px;top:773px;width:1px;height:27.5px;background:#fff"></div><span class="t" style="left:713.00px;top:779.55px;font-size:16.6px;letter-spacing:-0.765px;color:#000;">Chec...</span><div class="b" style="left:816px;top:773px;width:1px;height:27.5px;background:#a0a0a0"></div><div class="b" style="left:817px;top:773px;width:1px;height:27.5px;background:#fff"></div>
<div class="b" style="left:790px;top:772px;width:27px;height:29px;overflow:hidden"><span class="t" style="left:6.50px;top:7.55px;font-size:16.6px;letter-spacing:-3.084px;color:#000;">Chec</span></div>
<div class="b" style="left:816px;top:772px;width:1px;height:29px;background:#f0f0f0"></div>
<svg class="b" style="left:692px;top:779px" width="16" height="16" viewBox="692 779 16 16"><path d="M693.500 792.500 L699.700 780.500 L706 792.500" stroke="#a8a8a8" stroke-width="1.200" fill="none"/></svg>
<span class="t" style="left:18.00px;top:809.07px;font-size:14.8px;letter-spacing:-0.417px;color:#000;">ALL</span>
<div class="b" style="left:15px;top:829px;width:224px;height:1px;background:#f0f0f0"></div>
<div class="b" style="left:182px;top:802px;width:1px;height:27px;background:#f0f0f0"></div>
<div class="b" style="left:238px;top:802px;width:1px;height:27px;background:#f0f0f0"></div>
<div class="b" style="left:243.5px;top:1213.5px;width:573.5px;height:20.5px;background:#f0f0f0"></div>
<div class="b" style="left:265px;top:1213.5px;width:426px;height:20.5px;background:#cdcdcd"></div>
<svg class="b" style="left:243px;top:1213px" width="575" height="21" viewBox="243 1213 575 21"><path d="M257.500 1218.500 L252.500 1223.500 L257.500 1228.500 M802.500 1218.500 L807.500 1223.500 L802.500 1228.500" stroke="#505050" stroke-width="2" fill="none"/></svg>
<div class="b" style="left:8px;top:1251px;width:404px;height:24px;border-top:1px solid #fff;border-left:1px solid #fff;border-right:1px solid #6a6a6a;border-bottom:1px solid #6a6a6a;background:#f0f0f0;box-shadow:inset -1px -1px 0 #a0a0a0,inset 1px 1px 0 #e8e8e8"></div>
<div class="b" style="left:418px;top:1251px;width:404px;height:24px;border-top:1px solid #fff;border-left:1px solid #fff;border-right:1px solid #6a6a6a;border-bottom:1px solid #6a6a6a;background:#f0f0f0;box-shadow:inset -1px -1px 0 #a0a0a0,inset 1px 1px 0 #e8e8e8"></div>
<span class="t" style="left:193.04px;top:1256.75px;font-size:14px;letter-spacing:-0.000px;color:#000;">Save</span>
<span class="t" style="left:604.43px;top:1256.75px;font-size:14px;letter-spacing:-0.000px;color:#000;">Load</span>
<div class="b" style="left:2158px;top:100px;width:271px;height:28px;border:1px solid #a0a0a0;background:#f0f0f0;box-shadow:inset 1px 1px 0 #fff"></div>
<span class="t" style="left:2160.00px;top:108.49px;font-size:14.9px;letter-spacing:0.160px;color:#000;">Picking Tool</span>
<svg class="b" style="left:2408px;top:108px" width="16" height="16" viewBox="2408 108 16 16"><path d="M2411.500 111.500 L2420.500 120.500 M2420.500 111.500 L2411.500 120.500" stroke="#4a4a4a" stroke-width="1.100"/></svg>
<div class="b" style="left:2164px;top:146px;width:257px;height:239px;border:1px solid #d0d0d0;box-shadow:inset 1px 1px 0 #fff,1px 1px 0 #fff;border-color:#a8a8a8"></div><div class="b" style="left:2171px;top:138px;width:36px;height:16px;background:#f0f0f0"></div><span class="t" style="left:2174.00px;top:139.65px;font-size:14px;letter-spacing:-0.222px;color:#000;">Filter</span>
<div class="b" style="left:2175.5px;top:160px;width:13px;height:13px;border-top:1px solid #7a7a7a;border-left:1px solid #7a7a7a;border-right:1px solid #fff;border-bottom:1px solid #fff;background:#fff;box-shadow:inset 1px 1px 0 #5a5a5a,inset -1px -1px 0 #e3e3e3"></div><svg class="b" style="left:2175.5px;top:160px" width="15" height="15" viewBox="0 0 15 15"><path d="M3.500 7 L6.200 9.800 L11.500 4.300" stroke="#000" stroke-width="2.200" fill="none"/></svg>
<span class="t" style="left:2197.00px;top:161.75px;font-size:14px;letter-spacing:-1.186px;color:#000;"><u>S</u>ilk</span>
<div class="b" style="left:2285.5px;top:160px;width:13px;height:13px;border-top:1px solid #7a7a7a;border-left:1px solid #7a7a7a;border-right:1px solid #fff;border-bottom:1px solid #fff;background:#fff;box-shadow:inset 1px 1px 0 #5a5a5a,inset -1px -1px 0 #e3e3e3"></div><svg class="b" style="left:2285.5px;top:160px" width="15" height="15" viewBox="0 0 15 15"><path d="M3.500 7 L6.200 9.800 L11.500 4.300" stroke="#000" stroke-width="2.200" fill="none"/></svg>
<span class="t" style="left:2307.00px;top:161.75px;font-size:14px;letter-spacing:-0.408px;color:#000;"><u>P</u>ad Stack / Pin</span>
<div class="b" style="left:2175.5px;top:185.5px;width:13px;height:13px;border-top:1px solid #7a7a7a;border-left:1px solid #7a7a7a;border-right:1px solid #fff;border-bottom:1px solid #fff;background:#fff;box-shadow:inset 1px 1px 0 #5a5a5a,inset -1px -1px 0 #e3e3e3"></div><svg class="b" style="left:2175.5px;top:185.5px" width="15" height="15" viewBox="0 0 15 15"><path d="M3.500 7 L6.200 9.800 L11.500 4.300" stroke="#000" stroke-width="2.200" fill="none"/></svg>
<span class="t" style="left:2197.00px;top:187.25px;font-size:14px;letter-spacing:-0.090px;color:#000;"><u>R</u>oute</span>
<div class="b" style="left:2285.5px;top:185.5px;width:13px;height:13px;border-top:1px solid #7a7a7a;border-left:1px solid #7a7a7a;border-right:1px solid #fff;border-bottom:1px solid #fff;background:#fff;box-shadow:inset 1px 1px 0 #5a5a5a,inset -1px -1px 0 #e3e3e3"></div><svg class="b" style="left:2285.5px;top:185.5px" width="15" height="15" viewBox="0 0 15 15"><path d="M3.500 7 L6.200 9.800 L11.500 4.300" stroke="#000" stroke-width="2.200" fill="none"/></svg>
<span class="t" style="left:2307.00px;top:187.25px;font-size:14px;letter-spacing:-0.337px;color:#000;"><u>F</u>igure</span>
<div class="b" style="left:2166px;top:211px;width:255px;height:2px;background:#696969"></div>
<div class="b" style="left:2166px;top:213px;width:255px;height:1px;background:#fff"></div>
<div class="b" style="left:2166px;top:247px;width:255px;height:2px;background:#696969"></div>
<div class="b" style="left:2166px;top:249px;width:255px;height:1px;background:#fff"></div>
<div class="b" style="left:2166px;top:348px;width:255px;height:2px;background:#696969"></div>
<div class="b" style="left:2166px;top:350px;width:255px;height:1px;background:#fff"></div>
<svg class="b" style="left:2187px;top:220.5px" width="16" height="16" viewBox="0 0 16 16"><circle cx="8" cy="8" r="6.300" fill="#fff"/><path d="M3.200 12.800 A6.800 6.800 0 0 1 12.800 3.200" stroke="#7a7a7a" stroke-width="1.300" fill="none"/><path d="M4.100 11.900 A5.500 5.500 0 0 1 11.900 4.100" stroke="#404040" stroke-width="1.100" fill="none"/><path d="M12.800 3.200 A6.800 6.800 0 0 1 3.200 12.800" stroke="#fff" stroke-width="1.300" fill="none"/><path d="M11.900 4.100 A5.500 5.500 0 0 1 4.100 11.900" stroke="#e3e3e3" stroke-width="1" fill="none"/><circle cx="8" cy="8" r="2.300" fill="#000"/></svg>
<span class="t" style="left:2209.00px;top:223.55px;font-size:14px;letter-spacing:-1.279px;color:#000;">All</span>
<svg class="b" style="left:2293.5px;top:220.5px" width="16" height="16" viewBox="0 0 16 16"><circle cx="8" cy="8" r="6.300" fill="#fff"/><path d="M3.200 12.800 A6.800 6.800 0 0 1 12.800 3.200" stroke="#7a7a7a" stroke-width="1.300" fill="none"/><path d="M4.100 11.900 A5.500 5.500 0 0 1 11.900 4.100" stroke="#404040" stroke-width="1.100" fill="none"/><path d="M12.800 3.200 A6.800 6.800 0 0 1 3.200 12.800" stroke="#fff" stroke-width="1.300" fill="none"/><path d="M11.900 4.100 A5.500 5.500 0 0 1 4.100 11.900" stroke="#e3e3e3" stroke-width="1" fill="none"/></svg>
<span class="t" style="left:2315.00px;top:223.55px;font-size:14px;letter-spacing:-0.506px;color:#000;">Segment</span>
<div class="b" style="left:2176.5px;top:258.5px;width:13px;height:13px;border-top:1px solid #7a7a7a;border-left:1px solid #7a7a7a;border-right:1px solid #fff;border-bottom:1px solid #fff;background:#fff;box-shadow:inset 1px 1px 0 #5a5a5a,inset -1px -1px 0 #e3e3e3"></div>
<span class="t" style="left:2198.00px;top:260.55px;font-size:14px;letter-spacing:-0.128px;color:#000;">Neighborhood Object</span>
<svg class="b" style="left:2179.5px;top:286.8px" width="16" height="16" viewBox="0 0 16 16"><circle cx="8" cy="8" r="6.300" fill="#f0f0f0"/><path d="M3.200 12.800 A6.800 6.800 0 0 1 12.800 3.200" stroke="#7a7a7a" stroke-width="1.300" fill="none"/><path d="M4.100 11.900 A5.500 5.500 0 0 1 11.900 4.100" stroke="#404040" stroke-width="1.100" fill="none"/><path d="M12.800 3.200 A6.800 6.800 0 0 1 3.200 12.800" stroke="#fff" stroke-width="1.300" fill="none"/><path d="M11.900 4.100 A5.500 5.500 0 0 1 4.100 11.900" stroke="#e3e3e3" stroke-width="1" fill="none"/><circle cx="8" cy="8" r="2.300" fill="#9a9a9a"/></svg>
<span class="t" style="left:2201.00px;top:289.75px;font-size:14px;letter-spacing:-0.422px;color:#a0a0a0;">Component</span>
<svg class="b" style="left:2305px;top:286.8px" width="16" height="16" viewBox="0 0 16 16"><circle cx="8" cy="8" r="6.300" fill="#f0f0f0"/><path d="M3.200 12.800 A6.800 6.800 0 0 1 12.800 3.200" stroke="#7a7a7a" stroke-width="1.300" fill="none"/><path d="M4.100 11.900 A5.500 5.500 0 0 1 11.900 4.100" stroke="#404040" stroke-width="1.100" fill="none"/><path d="M12.800 3.200 A6.800 6.800 0 0 1 3.200 12.800" stroke="#fff" stroke-width="1.300" fill="none"/><path d="M11.900 4.100 A5.500 5.500 0 0 1 4.100 11.900" stroke="#e3e3e3" stroke-width="1" fill="none"/></svg>
<span class="t" style="left:2326.50px;top:289.75px;font-size:14px;letter-spacing:-0.215px;color:#a0a0a0;">Route</span>
<span class="t" style="left:2182.00px;top:318.45px;font-size:14px;letter-spacing:-0.353px;color:#a0a0a0;">Distance</span>
<div class="b" style="left:2242.5px;top:313px;width:165.0px;height:22px;border-top:1px solid #828282;border-left:1px solid #828282;border-right:1px solid #fff;border-bottom:1px solid #fff;background:#f0f0f0;box-shadow:inset 1px 1px 0 #a0a0a0"></div>
<span class="t" style="left:2396.50px;top:318.45px;font-size:14px;letter-spacing:0.000px;color:#808080;">0</span>
<div class="b" style="left:2169.5px;top:355px;width:248.5px;height:24px;border-top:1px solid #fff;border-left:1px solid #fff;border-right:1px solid #6a6a6a;border-bottom:1px solid #6a6a6a;background:#f0f0f0;box-shadow:inset -1px -1px 0 #a0a0a0,inset 1px 1px 0 #e8e8e8"></div>
<span class="t" style="left:2252.24px;top:359.75px;font-size:14px;letter-spacing:-0.210px;color:#000;">Picking Layer</span>
<div class="b" style="left:2161px;top:395px;width:262px;height:268px;border-top:1px solid #828282;border-left:1px solid #828282;border-right:1px solid #fff;border-bottom:1px solid #fff;background:#fff;box-shadow:inset 1px 1px 0 #a0a0a0"></div>
<span class="t" style="left:2188.50px;top:400.75px;font-size:14px;letter-spacing:-0.297px;color:#000;">Component</span>
<div class="b" style="left:2175px;top:408.0px;width:10px;height:1px;background:repeating-linear-gradient(90deg,#808080 0 1px,transparent 1px 2px)"></div>
<span class="t" style="left:2188.50px;top:420.95px;font-size:14px;letter-spacing:-0.614px;color:#000;">CompFigure</span>
<div class="b" style="left:2175px;top:428.2px;width:10px;height:1px;background:repeating-linear-gradient(90deg,#808080 0 1px,transparent 1px 2px)"></div>
<span class="t" style="left:2188.50px;top:441.15px;font-size:14px;letter-spacing:-1.367px;color:#000;">Pin</span>
<div class="b" style="left:2175px;top:448.4px;width:10px;height:1px;background:repeating-linear-gradient(90deg,#808080 0 1px,transparent 1px 2px)"></div>
<span class="t" style="left:2188.50px;top:461.35px;font-size:14px;letter-spacing:-0.215px;color:#000;">Route</span>
<div class="b" style="left:2175px;top:468.6px;width:10px;height:1px;background:repeating-linear-gradient(90deg,#808080 0 1px,transparent 1px 2px)"></div>
<span class="t" style="left:2188.50px;top:481.55px;font-size:14px;letter-spacing:-0.328px;color:#000;">Route - Via</span>
<div class="b" style="left:2175px;top:488.8px;width:10px;height:1px;background:repeating-linear-gradient(90deg,#808080 0 1px,transparent 1px 2px)"></div>
<span class="t" style="left:2188.50px;top:501.75px;font-size:14px;letter-spacing:-0.321px;color:#000;">Route - Pad</span>
<div class="b" style="left:2175px;top:509.0px;width:10px;height:1px;background:repeating-linear-gradient(90deg,#808080 0 1px,transparent 1px 2px)"></div>
<span class="t" style="left:2188.50px;top:521.95px;font-size:14px;letter-spacing:-0.437px;color:#000;">Figure</span>
<div class="b" style="left:2175px;top:529.2px;width:10px;height:1px;background:repeating-linear-gradient(90deg,#808080 0 1px,transparent 1px 2px)"></div>
<div class="b" style="left:2174px;top:409px;width:1px;height:121px;background:repeating-linear-gradient(#808080 0 1px,transparent 1px 2px)"></div>
<div class="b" style="left:2164px;top:680px;width:257px;height:600px;border:1px solid #d0d0d0;box-shadow:inset 1px 1px 0 #fff,1px 1px 0 #fff;border-color:#a8a8a8"></div><div class="b" style="left:2171px;top:672px;width:59px;height:16px;background:#f0f0f0"></div><span class="t" style="left:2174.00px;top:674.35px;font-size:14px;letter-spacing:0.013px;color:#000;">Property</span>
<div class="b" style="left:2173.5px;top:694px;width:239.0px;height:567px;border-top:1px solid #828282;border-left:1px solid #828282;border-right:1px solid #fff;border-bottom:1px solid #fff;background:#f0f0f0;box-shadow:inset 1px 1px 0 #a0a0a0"></div>
<div class="b" style="left:2392px;top:696px;width:1px;height:544px;background:#fff"></div>
<div class="b" style="left:2176px;top:1240px;width:216px;height:1px;background:#fff"></div>
<svg class="b" style="left:2170px;top:696px" width="250" height="570" viewBox="2170 696 250 570">
<path d="M2398.500 711.500 L2403 706.500 L2407.500 711.500 M2398.500 1226.500 L2403 1231.500 L2407.500 1226.500 M2189 1246 L2184 1251 L2189 1256 M2378 1246 L2383 1251 L2378 1256" stroke="#bdbdbd" stroke-width="2" fill="none"/></svg>
<span class="t" style="left:3.00px;top:1297.99px;font-size:14.9px;letter-spacing:-0.518px;color:#000;">Ready</span>
<div class="b" style="left:858px;top:1295px;width:387px;height:21px;border-top:1px solid #a0a0a0;border-left:1px solid #a0a0a0;border-right:1px solid #fff;box-sizing:border-box"></div>
<div class="b" style="left:1249px;top:1295px;width:639px;height:21px;border-top:1px solid #a0a0a0;border-left:1px solid #a0a0a0;border-right:1px solid #fff;box-sizing:border-box"></div>
<div class="b" style="left:1891.5px;top:1295px;width:323.5px;height:21px;border-top:1px solid #a0a0a0;border-left:1px solid #a0a0a0;border-right:1px solid #fff;box-sizing:border-box"></div>
<div class="b" style="left:2219px;top:1295px;width:82px;height:21px;border-top:1px solid #a0a0a0;border-left:1px solid #a0a0a0;border-right:1px solid #fff;box-sizing:border-box"></div>
<div class="b" style="left:2305px;top:1295px;width:35px;height:21px;border-top:1px solid #a0a0a0;border-left:1px solid #a0a0a0;border-right:1px solid #fff;box-sizing:border-box"></div>
<div class="b" style="left:2344.5px;top:1295px;width:40.5px;height:21px;border-top:1px solid #a0a0a0;border-left:1px solid #a0a0a0;border-right:1px solid #fff;box-sizing:border-box"></div>
<div class="b" style="left:2389.5px;top:1295px;width:40.5px;height:21px;border-top:1px solid #a0a0a0;border-left:1px solid #a0a0a0;border-right:1px solid #fff;box-sizing:border-box"></div>
<span class="t" style="left:1895.00px;top:1298.75px;font-size:14px;letter-spacing:3.610px;color:#000;">x :</span>
<span class="t" style="left:1927.50px;top:1298.75px;font-size:14px;letter-spacing:1.147px;color:#000;">-6.48</span>
<span class="t" style="left:1973.00px;top:1298.75px;font-size:14px;letter-spacing:4.110px;color:#000;">y :</span>
<span class="t" style="left:2007.00px;top:1298.75px;font-size:14px;letter-spacing:1.116px;color:#000;">57.81</span>
<span class="t" style="left:2223.00px;top:1298.75px;font-size:14px;letter-spacing:0.176px;color:#000;">mm</span>
<span class="t" style="left:2347.00px;top:1298.75px;font-size:14px;letter-spacing:-0.692px;color:#000;">NUM</span>
<svg class="b" style="left:838px;top:101px" width="1312" height="1188" viewBox="838 101 1312 1188" shape-rendering="crispEdges" font-family="Liberation Sans, sans-serif">
<rect x="838" y="101" width="1312" height="1188" fill="#000"/>
<path d="M975.5 101 V1289" stroke="#9a0000" stroke-width="1"/>
<path d="M838 1229.5 H2150" stroke="#9a0000" stroke-width="1"/>
<path d="M989.5 162.5 H1529 L1586 226 V388 Q1586 404 1602 404 H1938 L1949.5 415 V569 L2012.5 631 V1086.5 L1999 1096.7 H1893 Q1880.7 1096.7 1880.7 1113 V1218.8 L1868.4 1229.5 H1356 Q1346 1229 1345 1219 A42.5 42.5 0 0 0 1260 1219 Q1259 1229 1249 1229.5 H992.5 Q975.5 1229.5 975.5 1213 V180 Q975.5 162.5 989.5 162.5 Z" fill="#c3f26b" stroke="#ff1a1a" stroke-width="1.2"/>
<clipPath id="bclip"><path d="M989.5 162.5 H1529 L1586 226 V388 Q1586 404 1602 404 H1938 L1949.5 415 V569 L2012.5 631 V1086.5 L1999 1096.7 H1893 Q1880.7 1096.7 1880.7 1113 V1218.8 L1868.4 1229.5 H1356 Q1346 1229 1345 1219 A42.5 42.5 0 0 0 1260 1219 Q1259 1229 1249 1229.5 H992.5 Q975.5 1229.5 975.5 1213 V180 Q975.5 162.5 989.5 162.5 Z"/></clipPath>
<g clip-path="url(#bclip)">
<path fill="#ffb060" d="M1022.2 200.7h4.4v4.4h-4.4zM1022.2 249.6h4.4v4.4h-4.4zM1022.2 298.5h4.4v4.4h-4.4zM1022.2 347.4h4.4v4.4h-4.4zM1022.2 396.3h4.4v4.4h-4.4zM1022.2 445.2h4.4v4.4h-4.4zM1022.2 494.1h4.4v4.4h-4.4zM1022.2 543h4.4v4.4h-4.4zM1022.2 591.9h4.4v4.4h-4.4zM1022.2 640.8h4.4v4.4h-4.4zM1022.2 689.7h4.4v4.4h-4.4zM1022.2 738.6h4.4v4.4h-4.4zM1022.2 787.5h4.4v4.4h-4.4zM1022.2 836.4h4.4v4.4h-4.4zM1022.2 885.3h4.4v4.4h-4.4zM1022.2 934.2h4.4v4.4h-4.4zM1022.2 983.1h4.4v4.4h-4.4zM1022.2 1032h4.4v4.4h-4.4zM1022.2 1080.9h4.4v4.4h-4.4zM1022.2 1129.8h4.4v4.4h-4.4zM1022.2 1178.7h4.4v4.4h-4.4zM1071.1 200.7h4.4v4.4h-4.4zM1071.1 249.6h4.4v4.4h-4.4zM1071.1 298.5h4.4v4.4h-4.4zM1071.1 347.4h4.4v4.4h-4.4zM1071.1 396.3h4.4v4.4h-4.4zM1071.1 445.2h4.4v4.4h-4.4zM1071.1 494.1h4.4v4.4h-4.4zM1071.1 543h4.4v4.4h-4.4zM1071.1 1032h4.4v4.4h-4.4zM1071.1 1080.9h4.4v4.4h-4.4zM1071.1 1129.8h4.4v4.4h-4.4zM1071.1 1178.7h4.4v4.4h-4.4zM1120 200.7h4.4v4.4h-4.4zM1120 249.6h4.4v4.4h-4.4zM1120 298.5h4.4v4.4h-4.4zM1120 347.4h4.4v4.4h-4.4zM1120 396.3h4.4v4.4h-4.4zM1120 445.2h4.4v4.4h-4.4zM1120 494.1h4.4v4.4h-4.4zM1120 543h4.4v4.4h-4.4zM1120 1032h4.4v4.4h-4.4zM1120 1080.9h4.4v4.4h-4.4zM1120 1129.8h4.4v4.4h-4.4zM1120 1178.7h4.4v4.4h-4.4zM1168.9 200.7h4.4v4.4h-4.4zM1168.9 249.6h4.4v4.4h-4.4zM1168.9 298.5h4.4v4.4h-4.4zM1168.9 347.4h4.4v4.4h-4.4zM1168.9 396.3h4.4v4.4h-4.4zM1168.9 445.2h4.4v4.4h-4.4zM1168.9 494.1h4.4v4.4h-4.4zM1168.9 543h4.4v4.4h-4.4zM1168.9 1129.8h4.4v4.4h-4.4zM1168.9 1178.7h4.4v4.4h-4.4zM1217.8 200.7h4.4v4.4h-4.4zM1217.8 249.6h4.4v4.4h-4.4zM1217.8 298.5h4.4v4.4h-4.4zM1217.8 347.4h4.4v4.4h-4.4zM1217.8 396.3h4.4v4.4h-4.4zM1217.8 445.2h4.4v4.4h-4.4zM1217.8 494.1h4.4v4.4h-4.4zM1217.8 543h4.4v4.4h-4.4zM1217.8 1129.8h4.4v4.4h-4.4zM1217.8 1178.7h4.4v4.4h-4.4zM1266.7 200.7h4.4v4.4h-4.4zM1266.7 249.6h4.4v4.4h-4.4zM1266.7 298.5h4.4v4.4h-4.4zM1266.7 347.4h4.4v4.4h-4.4zM1266.7 396.3h4.4v4.4h-4.4zM1266.7 445.2h4.4v4.4h-4.4zM1266.7 494.1h4.4v4.4h-4.4zM1266.7 543h4.4v4.4h-4.4zM1266.7 1129.8h4.4v4.4h-4.4zM1266.7 1178.7h4.4v4.4h-4.4zM1315.6 200.7h4.4v4.4h-4.4zM1315.6 249.6h4.4v4.4h-4.4zM1315.6 298.5h4.4v4.4h-4.4zM1315.6 347.4h4.4v4.4h-4.4zM1315.6 396.3h4.4v4.4h-4.4zM1315.6 445.2h4.4v4.4h-4.4zM1315.6 494.1h4.4v4.4h-4.4zM1315.6 543h4.4v4.4h-4.4zM1315.6 1129.8h4.4v4.4h-4.4zM1315.6 1178.7h4.4v4.4h-4.4zM1364.5 200.7h4.4v4.4h-4.4zM1364.5 249.6h4.4v4.4h-4.4zM1364.5 298.5h4.4v4.4h-4.4zM1364.5 347.4h4.4v4.4h-4.4zM1364.5 396.3h4.4v4.4h-4.4zM1364.5 445.2h4.4v4.4h-4.4zM1364.5 494.1h4.4v4.4h-4.4zM1364.5 543h4.4v4.4h-4.4zM1364.5 1032h4.4v4.4h-4.4zM1364.5 1080.9h4.4v4.4h-4.4zM1364.5 1129.8h4.4v4.4h-4.4zM1364.5 1178.7h4.4v4.4h-4.4zM1413.4 200.7h4.4v4.4h-4.4zM1413.4 249.6h4.4v4.4h-4.4zM1413.4 298.5h4.4v4.4h-4.4zM1413.4 494.1h4.4v4.4h-4.4zM1413.4 1032h4.4v4.4h-4.4zM1413.4 1080.9h4.4v4.4h-4.4zM1413.4 1129.8h4.4v4.4h-4.4zM1413.4 1178.7h4.4v4.4h-4.4zM1462.3 200.7h4.4v4.4h-4.4zM1462.3 249.6h4.4v4.4h-4.4zM1462.3 298.5h4.4v4.4h-4.4zM1462.3 494.1h4.4v4.4h-4.4zM1462.3 1178.7h4.4v4.4h-4.4zM1511.2 200.7h4.4v4.4h-4.4zM1511.2 249.6h4.4v4.4h-4.4zM1511.2 298.5h4.4v4.4h-4.4zM1511.2 494.1h4.4v4.4h-4.4zM1511.2 1178.7h4.4v4.4h-4.4zM1560.1 200.7h4.4v4.4h-4.4zM1560.1 249.6h4.4v4.4h-4.4zM1560.1 298.5h4.4v4.4h-4.4zM1560.1 494.1h4.4v4.4h-4.4zM1560.1 1178.7h4.4v4.4h-4.4zM1609 200.7h4.4v4.4h-4.4zM1609 249.6h4.4v4.4h-4.4zM1609 298.5h4.4v4.4h-4.4zM1609 347.4h4.4v4.4h-4.4zM1609 396.3h4.4v4.4h-4.4zM1609 445.2h4.4v4.4h-4.4zM1609 494.1h4.4v4.4h-4.4zM1609 1178.7h4.4v4.4h-4.4zM1657.9 200.7h4.4v4.4h-4.4zM1657.9 249.6h4.4v4.4h-4.4zM1657.9 298.5h4.4v4.4h-4.4zM1657.9 347.4h4.4v4.4h-4.4zM1657.9 396.3h4.4v4.4h-4.4zM1657.9 445.2h4.4v4.4h-4.4zM1657.9 494.1h4.4v4.4h-4.4zM1657.9 543h4.4v4.4h-4.4zM1657.9 591.9h4.4v4.4h-4.4zM1657.9 983.1h4.4v4.4h-4.4zM1657.9 1032h4.4v4.4h-4.4zM1657.9 1080.9h4.4v4.4h-4.4zM1657.9 1129.8h4.4v4.4h-4.4zM1657.9 1178.7h4.4v4.4h-4.4zM1706.8 200.7h4.4v4.4h-4.4zM1706.8 249.6h4.4v4.4h-4.4zM1706.8 298.5h4.4v4.4h-4.4zM1706.8 347.4h4.4v4.4h-4.4zM1706.8 396.3h4.4v4.4h-4.4zM1706.8 983.1h4.4v4.4h-4.4zM1706.8 1032h4.4v4.4h-4.4zM1706.8 1080.9h4.4v4.4h-4.4zM1706.8 1129.8h4.4v4.4h-4.4zM1706.8 1178.7h4.4v4.4h-4.4zM1755.7 200.7h4.4v4.4h-4.4zM1755.7 249.6h4.4v4.4h-4.4zM1755.7 298.5h4.4v4.4h-4.4zM1755.7 347.4h4.4v4.4h-4.4zM1755.7 396.3h4.4v4.4h-4.4zM1755.7 1080.9h4.4v4.4h-4.4zM1755.7 1129.8h4.4v4.4h-4.4zM1755.7 1178.7h4.4v4.4h-4.4zM1804.6 200.7h4.4v4.4h-4.4zM1804.6 249.6h4.4v4.4h-4.4zM1804.6 298.5h4.4v4.4h-4.4zM1804.6 347.4h4.4v4.4h-4.4zM1804.6 396.3h4.4v4.4h-4.4zM1804.6 1080.9h4.4v4.4h-4.4zM1804.6 1129.8h4.4v4.4h-4.4zM1804.6 1178.7h4.4v4.4h-4.4zM1853.5 200.7h4.4v4.4h-4.4zM1853.5 249.6h4.4v4.4h-4.4zM1853.5 298.5h4.4v4.4h-4.4zM1853.5 347.4h4.4v4.4h-4.4zM1853.5 396.3h4.4v4.4h-4.4zM1853.5 1080.9h4.4v4.4h-4.4zM1853.5 1129.8h4.4v4.4h-4.4zM1853.5 1178.7h4.4v4.4h-4.4zM1902.4 200.7h4.4v4.4h-4.4zM1902.4 249.6h4.4v4.4h-4.4zM1902.4 298.5h4.4v4.4h-4.4zM1902.4 347.4h4.4v4.4h-4.4zM1902.4 396.3h4.4v4.4h-4.4zM1902.4 445.2h4.4v4.4h-4.4zM1902.4 494.1h4.4v4.4h-4.4zM1902.4 543h4.4v4.4h-4.4zM1902.4 591.9h4.4v4.4h-4.4zM1902.4 1080.9h4.4v4.4h-4.4zM1902.4 1129.8h4.4v4.4h-4.4zM1902.4 1178.7h4.4v4.4h-4.4zM1951.3 200.7h4.4v4.4h-4.4zM1951.3 249.6h4.4v4.4h-4.4zM1951.3 298.5h4.4v4.4h-4.4zM1951.3 347.4h4.4v4.4h-4.4zM1951.3 396.3h4.4v4.4h-4.4zM1951.3 445.2h4.4v4.4h-4.4zM1951.3 494.1h4.4v4.4h-4.4zM1951.3 543h4.4v4.4h-4.4zM1951.3 591.9h4.4v4.4h-4.4zM1951.3 640.8h4.4v4.4h-4.4zM1951.3 689.7h4.4v4.4h-4.4zM1951.3 738.6h4.4v4.4h-4.4zM1951.3 787.5h4.4v4.4h-4.4zM1951.3 836.4h4.4v4.4h-4.4zM1951.3 885.3h4.4v4.4h-4.4zM1951.3 934.2h4.4v4.4h-4.4zM1951.3 983.1h4.4v4.4h-4.4zM1951.3 1032h4.4v4.4h-4.4zM1951.3 1080.9h4.4v4.4h-4.4zM1951.3 1129.8h4.4v4.4h-4.4zM1951.3 1178.7h4.4v4.4h-4.4z"/>
<path fill="#c47a3a" d="M1023.6 202.1h1.6v1.6h-1.6zM1023.6 251h1.6v1.6h-1.6zM1023.6 299.9h1.6v1.6h-1.6zM1023.6 348.8h1.6v1.6h-1.6zM1023.6 397.7h1.6v1.6h-1.6zM1023.6 446.6h1.6v1.6h-1.6zM1023.6 495.5h1.6v1.6h-1.6zM1023.6 544.4h1.6v1.6h-1.6zM1023.6 593.3h1.6v1.6h-1.6zM1023.6 642.2h1.6v1.6h-1.6zM1023.6 691.1h1.6v1.6h-1.6zM1023.6 740h1.6v1.6h-1.6zM1023.6 788.9h1.6v1.6h-1.6zM1023.6 837.8h1.6v1.6h-1.6zM1023.6 886.7h1.6v1.6h-1.6zM1023.6 935.6h1.6v1.6h-1.6zM1023.6 984.5h1.6v1.6h-1.6zM1023.6 1033.4h1.6v1.6h-1.6zM1023.6 1082.3h1.6v1.6h-1.6zM1023.6 1131.2h1.6v1.6h-1.6zM1023.6 1180.1h1.6v1.6h-1.6zM1072.5 202.1h1.6v1.6h-1.6zM1072.5 251h1.6v1.6h-1.6zM1072.5 299.9h1.6v1.6h-1.6zM1072.5 348.8h1.6v1.6h-1.6zM1072.5 397.7h1.6v1.6h-1.6zM1072.5 446.6h1.6v1.6h-1.6zM1072.5 495.5h1.6v1.6h-1.6zM1072.5 544.4h1.6v1.6h-1.6zM1072.5 1033.4h1.6v1.6h-1.6zM1072.5 1082.3h1.6v1.6h-1.6zM1072.5 1131.2h1.6v1.6h-1.6zM1072.5 1180.1h1.6v1.6h-1.6zM1121.4 202.1h1.6v1.6h-1.6zM1121.4 251h1.6v1.6h-1.6zM1121.4 299.9h1.6v1.6h-1.6zM1121.4 348.8h1.6v1.6h-1.6zM1121.4 397.7h1.6v1.6h-1.6zM1121.4 446.6h1.6v1.6h-1.6zM1121.4 495.5h1.6v1.6h-1.6zM1121.4 544.4h1.6v1.6h-1.6zM1121.4 1033.4h1.6v1.6h-1.6zM1121.4 1082.3h1.6v1.6h-1.6zM1121.4 1131.2h1.6v1.6h-1.6zM1121.4 1180.1h1.6v1.6h-1.6zM1170.3 202.1h1.6v1.6h-1.6zM1170.3 251h1.6v1.6h-1.6zM1170.3 299.9h1.6v1.6h-1.6zM1170.3 348.8h1.6v1.6h-1.6zM1170.3 397.7h1.6v1.6h-1.6zM1170.3 446.6h1.6v1.6h-1.6zM1170.3 495.5h1.6v1.6h-1.6zM1170.3 544.4h1.6v1.6h-1.6zM1170.3 1131.2h1.6v1.6h-1.6zM1170.3 1180.1h1.6v1.6h-1.6zM1219.2 202.1h1.6v1.6h-1.6zM1219.2 251h1.6v1.6h-1.6zM1219.2 299.9h1.6v1.6h-1.6zM1219.2 348.8h1.6v1.6h-1.6zM1219.2 397.7h1.6v1.6h-1.6zM1219.2 446.6h1.6v1.6h-1.6zM1219.2 495.5h1.6v1.6h-1.6zM1219.2 544.4h1.6v1.6h-1.6zM1219.2 1131.2h1.6v1.6h-1.6zM1219.2 1180.1h1.6v1.6h-1.6zM1268.1 202.1h1.6v1.6h-1.6zM1268.1 251h1.6v1.6h-1.6zM1268.1 299.9h1.6v1.6h-1.6zM1268.1 348.8h1.6v1.6h-1.6zM1268.1 397.7h1.6v1.6h-1.6zM1268.1 446.6h1.6v1.6h-1.6zM1268.1 495.5h1.6v1.6h-1.6zM1268.1 544.4h1.6v1.6h-1.6zM1268.1 1131.2h1.6v1.6h-1.6zM1268.1 1180.1h1.6v1.6h-1.6zM1317 202.1h1.6v1.6h-1.6zM1317 251h1.6v1.6h-1.6zM1317 299.9h1.6v1.6h-1.6zM1317 348.8h1.6v1.6h-1.6zM1317 397.7h1.6v1.6h-1.6zM1317 446.6h1.6v1.6h-1.6zM1317 495.5h1.6v1.6h-1.6zM1317 544.4h1.6v1.6h-1.6zM1317 1131.2h1.6v1.6h-1.6zM1317 1180.1h1.6v1.6h-1.6zM1365.9 202.1h1.6v1.6h-1.6zM1365.9 251h1.6v1.6h-1.6zM1365.9 299.9h1.6v1.6h-1.6zM1365.9 348.8h1.6v1.6h-1.6zM1365.9 397.7h1.6v1.6h-1.6zM1365.9 446.6h1.6v1.6h-1.6zM1365.9 495.5h1.6v1.6h-1.6zM1365.9 544.4h1.6v1.6h-1.6zM1365.9 1033.4h1.6v1.6h-1.6zM1365.9 1082.3h1.6v1.6h-1.6zM1365.9 1131.2h1.6v1.6h-1.6zM1365.9 1180.1h1.6v1.6h-1.6zM1414.8 202.1h1.6v1.6h-1.6zM1414.8 251h1.6v1.6h-1.6zM1414.8 299.9h1.6v1.6h-1.6zM1414.8 495.5h1.6v1.6h-1.6zM1414.8 1033.4h1.6v1.6h-1.6zM1414.8 1082.3h1.6v1.6h-1.6zM1414.8 1131.2h1.6v1.6h-1.6zM1414.8 1180.1h1.6v1.6h-1.6zM1463.7 202.1h1.6v1.6h-1.6zM1463.7 251h1.6v1.6h-1.6zM1463.7 299.9h1.6v1.6h-1.6zM1463.7 495.5h1.6v1.6h-1.6zM1463.7 1180.1h1.6v1.6h-1.6zM1512.6 202.1h1.6v1.6h-1.6zM1512.6 251h1.6v1.6h-1.6zM1512.6 299.9h1.6v1.6h-1.6zM1512.6 495.5h1.6v1.6h-1.6zM1512.6 1180.1h1.6v1.6h-1.6zM1561.5 202.1h1.6v1.6h-1.6zM1561.5 251h1.6v1.6h-1.6zM1561.5 299.9h1.6v1.6h-1.6zM1561.5 495.5h1.6v1.6h-1.6zM1561.5 1180.1h1.6v1.6h-1.6zM1610.4 202.1h1.6v1.6h-1.6zM1610.4 251h1.6v1.6h-1.6zM1610.4 299.9h1.6v1.6h-1.6zM1610.4 348.8h1.6v1.6h-1.6zM1610.4 397.7h1.6v1.6h-1.6zM1610.4 446.6h1.6v1.6h-1.6zM1610.4 495.5h1.6v1.6h-1.6zM1610.4 1180.1h1.6v1.6h-1.6zM1659.3 202.1h1.6v1.6h-1.6zM1659.3 251h1.6v1.6h-1.6zM1659.3 299.9h1.6v1.6h-1.6zM1659.3 348.8h1.6v1.6h-1.6zM1659.3 397.7h1.6v1.6h-1.6zM1659.3 446.6h1.6v1.6h-1.6zM1659.3 495.5h1.6v1.6h-1.6zM1659.3 544.4h1.6v1.6h-1.6zM1659.3 593.3h1.6v1.6h-1.6zM1659.3 984.5h1.6v1.6h-1.6zM1659.3 1033.4h1.6v1.6h-1.6zM1659.3 1082.3h1.6v1.6h-1.6zM1659.3 1131.2h1.6v1.6h-1.6zM1659.3 1180.1h1.6v1.6h-1.6zM1708.2 202.1h1.6v1.6h-1.6zM1708.2 251h1.6v1.6h-1.6zM1708.2 299.9h1.6v1.6h-1.6zM1708.2 348.8h1.6v1.6h-1.6zM1708.2 397.7h1.6v1.6h-1.6zM1708.2 984.5h1.6v1.6h-1.6zM1708.2 1033.4h1.6v1.6h-1.6zM1708.2 1082.3h1.6v1.6h-1.6zM1708.2 1131.2h1.6v1.6h-1.6zM1708.2 1180.1h1.6v1.6h-1.6zM1757.1 202.1h1.6v1.6h-1.6zM1757.1 251h1.6v1.6h-1.6zM1757.1 299.9h1.6v1.6h-1.6zM1757.1 348.8h1.6v1.6h-1.6zM1757.1 397.7h1.6v1.6h-1.6zM1757.1 1082.3h1.6v1.6h-1.6zM1757.1 1131.2h1.6v1.6h-1.6zM1757.1 1180.1h1.6v1.6h-1.6zM1806 202.1h1.6v1.6h-1.6zM1806 251h1.6v1.6h-1.6zM1806 299.9h1.6v1.6h-1.6zM1806 348.8h1.6v1.6h-1.6zM1806 397.7h1.6v1.6h-1.6zM1806 1082.3h1.6v1.6h-1.6zM1806 1131.2h1.6v1.6h-1.6zM1806 1180.1h1.6v1.6h-1.6zM1854.9 202.1h1.6v1.6h-1.6zM1854.9 251h1.6v1.6h-1.6zM1854.9 299.9h1.6v1.6h-1.6zM1854.9 348.8h1.6v1.6h-1.6zM1854.9 397.7h1.6v1.6h-1.6zM1854.9 1082.3h1.6v1.6h-1.6zM1854.9 1131.2h1.6v1.6h-1.6zM1854.9 1180.1h1.6v1.6h-1.6zM1903.8 202.1h1.6v1.6h-1.6zM1903.8 251h1.6v1.6h-1.6zM1903.8 299.9h1.6v1.6h-1.6zM1903.8 348.8h1.6v1.6h-1.6zM1903.8 397.7h1.6v1.6h-1.6zM1903.8 446.6h1.6v1.6h-1.6zM1903.8 495.5h1.6v1.6h-1.6zM1903.8 544.4h1.6v1.6h-1.6zM1903.8 593.3h1.6v1.6h-1.6zM1903.8 1082.3h1.6v1.6h-1.6zM1903.8 1131.2h1.6v1.6h-1.6zM1903.8 1180.1h1.6v1.6h-1.6zM1952.7 202.1h1.6v1.6h-1.6zM1952.7 251h1.6v1.6h-1.6zM1952.7 299.9h1.6v1.6h-1.6zM1952.7 348.8h1.6v1.6h-1.6zM1952.7 397.7h1.6v1.6h-1.6zM1952.7 446.6h1.6v1.6h-1.6zM1952.7 495.5h1.6v1.6h-1.6zM1952.7 544.4h1.6v1.6h-1.6zM1952.7 593.3h1.6v1.6h-1.6zM1952.7 642.2h1.6v1.6h-1.6zM1952.7 691.1h1.6v1.6h-1.6zM1952.7 740h1.6v1.6h-1.6zM1952.7 788.9h1.6v1.6h-1.6zM1952.7 837.8h1.6v1.6h-1.6zM1952.7 886.7h1.6v1.6h-1.6zM1952.7 935.6h1.6v1.6h-1.6zM1952.7 984.5h1.6v1.6h-1.6zM1952.7 1033.4h1.6v1.6h-1.6zM1952.7 1082.3h1.6v1.6h-1.6zM1952.7 1131.2h1.6v1.6h-1.6zM1952.7 1180.1h1.6v1.6h-1.6z"/>
</g>
<circle cx="1043" cy="213" r="23.8" fill="#404040" stroke="#000" stroke-width="1.2"/>
<circle cx="1510.5" cy="213" r="23.8" fill="#404040" stroke="#000" stroke-width="1.2"/>
<circle cx="1942" cy="638.8" r="23.8" fill="#404040" stroke="#000" stroke-width="1.2"/>
<circle cx="1043.2" cy="1181.8" r="23.8" fill="#404040" stroke="#000" stroke-width="1.2"/>
<circle cx="1823" cy="1182" r="23.8" fill="#404040" stroke="#000" stroke-width="1.2"/>
<polyline points="1119.7,231 1119.7,172.5 1365.5,172.5 1365.5,231" fill="none" stroke="#fbf2dc" stroke-width="1.3" />
<polyline points="1119.7,275 1119.7,328" fill="none" stroke="#fbf2dc" stroke-width="1.3" />
<polyline points="1365.5,275 1365.5,328" fill="none" stroke="#fbf2dc" stroke-width="1.3" />
<polyline points="1140,362.5 1166,362.5" fill="none" stroke="#fbf2dc" stroke-width="1.3" />
<polyline points="1320,362.5 1348,362.5" fill="none" stroke="#fbf2dc" stroke-width="1.3" />
<rect x="1111.9" y="231.7" width="25" height="42.600" rx="11" fill="#ffb85f"/>
<rect x="1116.9" y="236" width="15" height="34" rx="7.500" fill="#404040" stroke="#000" stroke-width=".8"/>
<rect x="1348" y="231.7" width="25" height="42.600" rx="11" fill="#ffb85f"/>
<rect x="1353" y="236" width="15" height="34" rx="7.500" fill="#404040" stroke="#000" stroke-width=".8"/>
<rect x="1111.9" y="328.7" width="25" height="42.600" rx="11" fill="#ffb85f"/>
<rect x="1116.9" y="333" width="15" height="34" rx="7.500" fill="#404040" stroke="#000" stroke-width=".8"/>
<rect x="1348" y="328.7" width="25" height="42.600" rx="11" fill="#ffb85f"/>
<rect x="1353" y="333" width="15" height="34" rx="7.500" fill="#404040" stroke="#000" stroke-width=".8"/>
<text x="1384.5" y="260.5" font-size="21" fill="#ffdaf2" text-anchor="start" textLength="38" lengthAdjust="spacingAndGlyphs" >CN1</text>
<rect x="1165.5" y="330" width="7.6" height="84" fill="#000"/>
<rect x="1167.4" y="331.5" width="3.8" height="81" fill="#ffb85f"/>
<rect x="1174.9" y="331.5" width="5" height="81" fill="#fbb668"/>
<rect x="1181.8" y="330" width="7.6" height="84" fill="#000"/>
<rect x="1183.7" y="331.5" width="3.8" height="81" fill="#ffb85f"/>
<rect x="1189.9" y="330" width="7.6" height="84" fill="#000"/>
<rect x="1191.8" y="331.5" width="3.8" height="81" fill="#ffb85f"/>
<rect x="1199.4" y="331.5" width="5" height="81" fill="#fbb668"/>
<rect x="1206.2" y="330" width="7.6" height="84" fill="#000"/>
<rect x="1208.1" y="331.5" width="3.8" height="81" fill="#ffb85f"/>
<rect x="1214.3" y="330" width="7.6" height="84" fill="#000"/>
<rect x="1216.2" y="331.5" width="3.8" height="81" fill="#ffb85f"/>
<rect x="1223.8" y="331.5" width="5" height="81" fill="#fbb668"/>
<rect x="1230.6" y="330" width="7.6" height="84" fill="#000"/>
<rect x="1232.5" y="331.5" width="3.8" height="81" fill="#ffb85f"/>
<rect x="1238.8" y="330" width="7.6" height="84" fill="#000"/>
<rect x="1240.7" y="331.5" width="3.8" height="81" fill="#ffb85f"/>
<rect x="1248.2" y="331.5" width="5" height="81" fill="#fbb668"/>
<rect x="1255" y="330" width="7.6" height="84" fill="#000"/>
<rect x="1256.9" y="331.5" width="3.8" height="81" fill="#ffb85f"/>
<rect x="1263.2" y="330" width="7.6" height="84" fill="#000"/>
<rect x="1265.1" y="331.5" width="3.8" height="81" fill="#ffb85f"/>
<rect x="1271.3" y="330" width="7.6" height="84" fill="#000"/>
<rect x="1273.2" y="331.5" width="3.8" height="81" fill="#ffb85f"/>
<rect x="1279.5" y="330" width="7.6" height="84" fill="#000"/>
<rect x="1281.4" y="331.5" width="3.8" height="81" fill="#ffb85f"/>
<rect x="1287.6" y="330" width="7.6" height="84" fill="#000"/>
<rect x="1289.5" y="331.5" width="3.8" height="81" fill="#ffb85f"/>
<rect x="1297" y="331.5" width="5" height="81" fill="#fbb668"/>
<rect x="1303.9" y="330" width="7.6" height="84" fill="#000"/>
<rect x="1305.8" y="331.5" width="3.8" height="81" fill="#ffb85f"/>
<rect x="1312" y="330" width="7.6" height="84" fill="#000"/>
<rect x="1313.9" y="331.5" width="3.8" height="81" fill="#ffb85f"/>
<rect x="1304" y="413" width="16" height="12" fill="#c3f26b"/>
<polyline points="1169.3,413 1169.3,420 1152,438 1152,444" fill="none" stroke="#000" stroke-width="4.6" stroke-linejoin="miter" stroke-linecap="butt"/>
<polyline points="1185.6,413 1185.6,420 1170,438 1170,444" fill="none" stroke="#000" stroke-width="4.6" stroke-linejoin="miter" stroke-linecap="butt"/>
<polyline points="1193.7,413 1193.7,420 1188,438 1188,444" fill="none" stroke="#000" stroke-width="4.6" stroke-linejoin="miter" stroke-linecap="butt"/>
<polyline points="1210,413 1210,420 1206,438 1206,444" fill="none" stroke="#000" stroke-width="4.6" stroke-linejoin="miter" stroke-linecap="butt"/>
<polyline points="1218.1,413 1218.1,420 1226,438 1226,444" fill="none" stroke="#000" stroke-width="4.6" stroke-linejoin="miter" stroke-linecap="butt"/>
<polyline points="1234.4,413 1234.4,420 1243,438 1243,444" fill="none" stroke="#000" stroke-width="4.6" stroke-linejoin="miter" stroke-linecap="butt"/>
<polyline points="1242.5,413 1242.5,420 1261,438 1261,444" fill="none" stroke="#000" stroke-width="4.6" stroke-linejoin="miter" stroke-linecap="butt"/>
<polyline points="1258.8,413 1258.8,420 1279,438 1279,444" fill="none" stroke="#000" stroke-width="4.6" stroke-linejoin="miter" stroke-linecap="butt"/>
<polyline points="1267,413 1267,420 1290,438 1290,444" fill="none" stroke="#000" stroke-width="4.6" stroke-linejoin="miter" stroke-linecap="butt"/>
<polyline points="1275.1,413 1275.1,420 1297,438 1297,444" fill="none" stroke="#000" stroke-width="4.6" stroke-linejoin="miter" stroke-linecap="butt"/>
<polygon points="1186,414 1200,414 1200,424 1190,438 1176,438" fill="#000" />
<polygon points="1205,414 1240,414 1236,426 1246,441 1200,441 1204,428" fill="#000" />
<polygon points="1262,414 1300,414 1300,426 1286,426 1300,441 1280,441 1262,424" fill="#000" />
<polyline points="1169.3,413 1169.3,420 1152,438 1152,444" fill="none" stroke="#c3f26b" stroke-width="1.4" stroke-linejoin="miter"/>
<polyline points="1185.6,413 1185.6,420 1170,438 1170,444" fill="none" stroke="#c3f26b" stroke-width="1.4" stroke-linejoin="miter"/>
<polyline points="1193.7,413 1193.7,420 1188,438 1188,444" fill="none" stroke="#c3f26b" stroke-width="1.4" stroke-linejoin="miter"/>
<polyline points="1210,413 1210,420 1206,438 1206,444" fill="none" stroke="#c3f26b" stroke-width="1.4" stroke-linejoin="miter"/>
<polyline points="1218.1,413 1218.1,420 1226,438 1226,444" fill="none" stroke="#c3f26b" stroke-width="1.4" stroke-linejoin="miter"/>
<polyline points="1234.4,413 1234.4,420 1243,438 1243,444" fill="none" stroke="#c3f26b" stroke-width="1.4" stroke-linejoin="miter"/>
<polyline points="1242.5,413 1242.5,420 1261,438 1261,444" fill="none" stroke="#c3f26b" stroke-width="1.4" stroke-linejoin="miter"/>
<polyline points="1258.8,413 1258.8,420 1279,438 1279,444" fill="none" stroke="#c3f26b" stroke-width="1.4" stroke-linejoin="miter"/>
<polyline points="1267,413 1267,420 1290,438 1290,444" fill="none" stroke="#c3f26b" stroke-width="1.4" stroke-linejoin="miter"/>
<polyline points="1275.1,413 1275.1,420 1297,438 1297,444" fill="none" stroke="#c3f26b" stroke-width="1.4" stroke-linejoin="miter"/>
<polygon points="1700,664 1712,652 1750,652 1750,724 1700,724" fill="#000" />
<polyline points="1338,470 1353,485 1613,485 1650,522 1650,557 1745,652 1745,728" fill="none" stroke="#000" stroke-width="5" stroke-linejoin="miter" stroke-linecap="butt"/>
<polyline points="1310,470 1332.5,492.5 1609.5,492.5 1642.8,525.8 1642.8,560 1734.8,652 1734.8,734" fill="none" stroke="#000" stroke-width="5" stroke-linejoin="miter" stroke-linecap="butt"/>
<polyline points="1282,470 1312,500 1606,500 1635.7,529.7 1635.7,563 1724.7,652 1724.7,740" fill="none" stroke="#000" stroke-width="5" stroke-linejoin="miter" stroke-linecap="butt"/>
<polyline points="1254,470 1291.5,507.5 1602.5,507.5 1628.5,533.5 1628.5,566 1714.5,652 1714.5,728" fill="none" stroke="#000" stroke-width="5" stroke-linejoin="miter" stroke-linecap="butt"/>
<polyline points="1226,470 1271,515 1599,515 1621.3,537.3 1621.3,569 1704.3,652 1704.3,734" fill="none" stroke="#000" stroke-width="5" stroke-linejoin="miter" stroke-linecap="butt"/>
<polyline points="1198,470 1250.5,522.5 1595.5,522.5 1614.2,541.2 1614.2,572 1694.2,652 1694.2,740" fill="none" stroke="#000" stroke-width="5" stroke-linejoin="miter" stroke-linecap="butt"/>
<polyline points="1170,470 1230,530 1592,530 1607,545 1607,575 1684,652 1684,728" fill="none" stroke="#000" stroke-width="5" stroke-linejoin="miter" stroke-linecap="butt"/>
<polygon points="1240,471 1296,471 1330,492 1306,500 1268,500" fill="#000" />
<polygon points="1190,471 1222,471 1262,512 1240,520" fill="#000" />
<polyline points="1345,478 1616,478 1657,519 1657,532" fill="none" stroke="#000" stroke-width="4.6" stroke-linejoin="miter" stroke-linecap="butt"/>
<polyline points="1338,470 1353,485 1613,485 1650,522 1650,557 1745,652 1745,728" fill="none" stroke="#c3f26b" stroke-width="1.6" stroke-linejoin="miter"/>
<polyline points="1310,470 1332.5,492.5 1609.5,492.5 1642.8,525.8 1642.8,560 1734.8,652 1734.8,734" fill="none" stroke="#c3f26b" stroke-width="1.6" stroke-linejoin="miter"/>
<polyline points="1282,470 1312,500 1606,500 1635.7,529.7 1635.7,563 1724.7,652 1724.7,740" fill="none" stroke="#c3f26b" stroke-width="1.6" stroke-linejoin="miter"/>
<polyline points="1254,470 1291.5,507.5 1602.5,507.5 1628.5,533.5 1628.5,566 1714.5,652 1714.5,728" fill="none" stroke="#c3f26b" stroke-width="1.6" stroke-linejoin="miter"/>
<polyline points="1226,470 1271,515 1599,515 1621.3,537.3 1621.3,569 1704.3,652 1704.3,734" fill="none" stroke="#c3f26b" stroke-width="1.6" stroke-linejoin="miter"/>
<polyline points="1198,470 1250.5,522.5 1595.5,522.5 1614.2,541.2 1614.2,572 1694.2,652 1694.2,740" fill="none" stroke="#c3f26b" stroke-width="1.6" stroke-linejoin="miter"/>
<polyline points="1170,470 1230,530 1592,530 1607,545 1607,575 1684,652 1684,728" fill="none" stroke="#c3f26b" stroke-width="1.6" stroke-linejoin="miter"/>
<polyline points="1345,478 1616,478 1657,519 1657,532" fill="none" stroke="#c3f26b" stroke-width="1.5" stroke-linejoin="miter"/>
<circle cx="1658.5" cy="534" r="3.7" fill="#000" />
<circle cx="1658.5" cy="534" r="2.6" fill="#ffb85f" />
<circle cx="1658.5" cy="534" r="0.8" fill="#8a5a20" />
<circle cx="1634" cy="477.5" r="3.7" fill="#000" />
<circle cx="1634" cy="477.5" r="2.6" fill="#ffb85f" />
<circle cx="1634" cy="477.5" r="0.8" fill="#8a5a20" />
<rect x="1181" y="441" width="82" height="31" fill="#000"/>
<rect x="1146" y="443.4" width="11.1" height="12.1" rx="1" fill="#000"/>
<rect x="1147.2" y="444.8" width="8.5" height="9.5" rx="0" fill="#ffb85f"/>
<rect x="1146" y="457.4" width="11.1" height="12.1" rx="1" fill="#000"/>
<rect x="1147.2" y="458.8" width="8.5" height="9.5" rx="0" fill="#ffb85f"/>
<rect x="1164" y="443.4" width="11.1" height="12.1" rx="1" fill="#000"/>
<rect x="1165.2" y="444.8" width="8.5" height="9.5" rx="0" fill="#ffb85f"/>
<rect x="1164" y="457.4" width="11.1" height="12.1" rx="1" fill="#000"/>
<rect x="1165.2" y="458.8" width="8.5" height="9.5" rx="0" fill="#ffb85f"/>
<rect x="1182.5" y="443.4" width="11.1" height="12.1" rx="1" fill="#000"/>
<rect x="1183.8" y="444.8" width="8.5" height="9.5" rx="0" fill="#ffb85f"/>
<rect x="1182.5" y="457.4" width="11.1" height="12.1" rx="1" fill="#000"/>
<rect x="1183.8" y="458.8" width="8.5" height="9.5" rx="0" fill="#ffb85f"/>
<rect x="1200" y="443.4" width="11.1" height="12.1" rx="1" fill="#000"/>
<rect x="1201.2" y="444.8" width="8.5" height="9.5" rx="0" fill="#ffb85f"/>
<rect x="1200" y="457.4" width="11.1" height="12.1" rx="1" fill="#000"/>
<rect x="1201.2" y="458.8" width="8.5" height="9.5" rx="0" fill="#ffb85f"/>
<rect x="1220" y="443.4" width="11.1" height="12.1" rx="1" fill="#000"/>
<rect x="1221.2" y="444.8" width="8.5" height="9.5" rx="0" fill="#ffb85f"/>
<rect x="1220" y="457.4" width="11.1" height="12.1" rx="1" fill="#000"/>
<rect x="1221.2" y="458.8" width="8.5" height="9.5" rx="0" fill="#ffb85f"/>
<rect x="1237.5" y="443.4" width="11.1" height="12.1" rx="1" fill="#000"/>
<rect x="1238.8" y="444.8" width="8.5" height="9.5" rx="0" fill="#ffb85f"/>
<rect x="1237.5" y="457.4" width="11.1" height="12.1" rx="1" fill="#000"/>
<rect x="1238.8" y="458.8" width="8.5" height="9.5" rx="0" fill="#ffb85f"/>
<rect x="1255.5" y="443.4" width="11.1" height="12.1" rx="1" fill="#000"/>
<rect x="1256.8" y="444.8" width="8.5" height="9.5" rx="0" fill="#ffb85f"/>
<rect x="1255.5" y="457.4" width="11.1" height="12.1" rx="1" fill="#000"/>
<rect x="1256.8" y="458.8" width="8.5" height="9.5" rx="0" fill="#ffb85f"/>
<rect x="1273.5" y="443.4" width="11.1" height="12.1" rx="1" fill="#000"/>
<rect x="1274.8" y="444.8" width="8.5" height="9.5" rx="0" fill="#ffb85f"/>
<rect x="1273.5" y="457.4" width="11.1" height="12.1" rx="1" fill="#000"/>
<rect x="1274.8" y="458.8" width="8.5" height="9.5" rx="0" fill="#ffb85f"/>
<rect x="1292" y="443.4" width="11.1" height="12.1" rx="1" fill="#000"/>
<rect x="1293.2" y="444.8" width="8.5" height="9.5" rx="0" fill="#ffb85f"/>
<rect x="1292" y="457.4" width="11.1" height="12.1" rx="1" fill="#000"/>
<rect x="1293.2" y="458.8" width="8.5" height="9.5" rx="0" fill="#ffb85f"/>
<rect x="1310.7" y="443.7" width="10.6" height="9.6" rx="1" fill="#000"/>
<rect x="1312" y="445" width="8" height="7" rx="0" fill="#ffb85f"/>
<rect x="1312" y="460.5" width="8" height="7" rx="0" fill="#f7b46c"/>
<rect x="1328" y="443.7" width="11.1" height="11.6" rx="3.5" fill="#000"/>
<rect x="1329.2" y="445" width="8.5" height="9" rx="2.5" fill="#ffb85f"/>
<rect x="1328" y="457.7" width="11.1" height="11.6" rx="3.5" fill="#000"/>
<rect x="1329.2" y="459" width="8.5" height="9" rx="2.5" fill="#ffb85f"/>
<polyline points="1316,414 1316,444" fill="none" stroke="#000" stroke-width="1.5" />
<rect x="1143.5" y="441" width="37.5" height="30.5" fill="none" stroke="#fbf2dc" stroke-width="1"/>
<rect x="1181" y="441" width="35" height="30.5" fill="none" stroke="#fbf2dc" stroke-width="1"/>
<rect x="1216" y="441" width="69" height="30.5" fill="none" stroke="#fbf2dc" stroke-width="1"/>
<rect x="1285" y="441" width="21" height="30.5" fill="none" stroke="#fbf2dc" stroke-width="1"/>
<rect x="1306" y="441" width="18.5" height="30.5" fill="none" stroke="#fbf2dc" stroke-width="1"/>
<rect x="1324.5" y="441" width="16.5" height="30.5" fill="none" stroke="#fbf2dc" stroke-width="1"/>
<text x="1169" y="488" font-size="11.5" fill="#ffdaf2" text-anchor="start" textLength="19" lengthAdjust="spacingAndGlyphs" font-weight="bold" stroke="#ffdaf2" stroke-width=".45" >RM1</text>
<text x="1238.5" y="488" font-size="11.5" fill="#ffdaf2" text-anchor="start" textLength="19" lengthAdjust="spacingAndGlyphs" font-weight="bold" stroke="#ffdaf2" stroke-width=".45" >RA2</text>
<text x="1308" y="494" font-size="10.5" fill="#ffdaf2" text-anchor="start" textLength="15" lengthAdjust="spacingAndGlyphs" transform="rotate(-90 1308 494)" font-weight="bold" stroke="#ffdaf2" stroke-width=".45" >R4</text>
<text x="1323" y="494" font-size="10.5" fill="#ffdaf2" text-anchor="start" textLength="21" lengthAdjust="spacingAndGlyphs" transform="rotate(-90 1323 494)" font-weight="bold" stroke="#ffdaf2" stroke-width=".45" >FL1</text>
<text x="1339" y="494" font-size="10.5" fill="#ffdaf2" text-anchor="start" textLength="15" lengthAdjust="spacingAndGlyphs" transform="rotate(-90 1339 494)" font-weight="bold" stroke="#ffdaf2" stroke-width=".45" >R2</text>
<polyline points="1710,445 1710,413 1839,413 1839,445" fill="none" stroke="#fbf2dc" stroke-width="4" />
<path d="M1677 445.5 H1872.5 V513 H1837.5 V445.5 M1711 445.5 V578 M1677 445.5 V578 H1752 M1677 513.5 H1711 M1677 519.500 H1711 M1837.500 513 V572 H1805 M1838 520 H1871.500 V578.500 H1837.500" stroke="#000" stroke-width="1.300" fill="none"/>
<rect x="1677" y="513.5" width="34" height="6" fill="#000"/>
<circle cx="1738" cy="511.8" r="9" fill="#404040" stroke="#000" stroke-width="1"/>
<circle cx="1810.7" cy="511.8" r="9" fill="#404040" stroke="#000" stroke-width="1"/>
<rect x="1752.5" y="528" width="53" height="40" fill="#000"/>
<path fill="#ffb85f" d="M1745 531h6.5v37h-6.5zM1757.5 530.5h7.3v37h-7.3zM1770.8 530.5h7.3v37h-7.3zM1784 530.5h7.3v37h-7.3zM1797.2 530.5h7.3v37h-7.3z"/>
<path fill="#fbf2dc" d="M1715 559h26v3.6h-26zM1810 559h25v3.6h-25z"/>
<text x="1610" y="449" font-size="21" fill="#ffdaf2" text-anchor="start" textLength="38" lengthAdjust="spacingAndGlyphs" >CN2</text>
<polygon points="1677,578 1752,578 1752,568 1805,568 1805,572 1837,572 1837,579 1797,613 1751,613 1751,720 1741,720 1741,660 1677,596" fill="#000" />
<polyline points="1761,568 1761,590 1748,603 1748,720" fill="none" stroke="#c3f26b" stroke-width="1.3" />
<polyline points="1761,590 1746,605" fill="none" stroke="#c3f26b" stroke-width="1.3" />
<polyline points="1774,568 1774,592 1770,596" fill="none" stroke="#c3f26b" stroke-width="1.3" />
<polyline points="1787,568 1787,590 1783,595" fill="none" stroke="#c3f26b" stroke-width="1.3" />
<polyline points="1800,568 1800,592 1786,606 1765,608" fill="none" stroke="#c3f26b" stroke-width="4" />
<polyline points="1722,578 1716,585" fill="none" stroke="#c3f26b" stroke-width="2.5" />
<path fill="#ffb85f" d="M1766.3 594.3h4.4v4.4h-4.4zM1779.3 594.3h4.4v4.4h-4.4zM1760.3 606.8h4.4v4.4h-4.4z"/>
<rect x="1700" y="587" width="34" height="13" fill="#000"/>
<rect x="1703.2" y="589" width="7.5" height="9" rx="0" fill="#ffb85f"/>
<rect x="1723.2" y="589" width="7.5" height="9" rx="0" fill="#ffb85f"/>
<rect x="1699.5" y="587" width="34" height="13.5" fill="none" stroke="#fbf2dc" stroke-width="1"/>
<polyline points="1733.5,593 1740,593 1747,602" fill="none" stroke="#c3f26b" stroke-width="1.3" />
<text x="1712" y="616.5" font-size="11" fill="#ffe6f5" text-anchor="start" textLength="11" lengthAdjust="spacingAndGlyphs" font-weight="bold" stroke="#ffe6f5" stroke-width=".45" >D1</text>
<circle cx="1755.5" cy="632.5" r="3.4" fill="#000" />
<circle cx="1755.5" cy="632.5" r="2.3" fill="#ffb85f" />
<circle cx="1755.5" cy="632.5" r="0.8" fill="#8a5a20" />
<rect x="1415.5" y="333" width="32.5" height="18" fill="none" stroke="#fbf2dc" stroke-width="1"/>
<polyline points="1431.5,333 1431.5,351" fill="none" stroke="#fbf2dc" stroke-width="0.8" />
<rect x="1420.3" y="340.2" width="7" height="7" rx="1" fill="#f9b268"/>
<rect x="1434.7" y="338.4" width="10.6" height="10.6" rx="1.5" fill="#000"/>
<rect x="1436" y="339.7" width="8" height="8" rx="0.5" fill="#ffb85f"/>
<rect x="1415.5" y="355.5" width="30" height="13.5" fill="none" stroke="#fbf2dc" stroke-width="1"/>
<rect x="1418.5" y="356.2" width="11.1" height="11.6" rx="3.6" fill="#000"/>
<rect x="1419.8" y="357.5" width="8.5" height="9" rx="2.6" fill="#ffb85f"/>
<rect x="1433.2" y="356.2" width="11.1" height="11.6" rx="3.6" fill="#000"/>
<rect x="1434.5" y="357.5" width="8.5" height="9" rx="2.6" fill="#ffb85f"/>
<polyline points="1424,357 1430,350 1436,347" fill="none" stroke="#000" stroke-width="1.5" />
<text x="1457.5" y="350" font-size="11.5" fill="#ffdaf2" text-anchor="start" textLength="20" lengthAdjust="spacingAndGlyphs" font-weight="bold" stroke="#ffdaf2" stroke-width=".45" >PL4</text>
<text x="1390" y="366" font-size="11.5" fill="#ffdaf2" text-anchor="start" textLength="20" lengthAdjust="spacingAndGlyphs" font-weight="bold" stroke="#ffdaf2" stroke-width=".45" >R98</text>
<polyline points="1444,353.5 1514,353.5" fill="none" stroke="#000" stroke-width="2.2" />
<polyline points="1425.5,366 1425.5,378" fill="none" stroke="#000" stroke-width="1.6" />
<rect x="1399" y="386" width="46.8" height="44" fill="none" stroke="#fbf2dc" stroke-width="1"/>
<rect x="1414.2" y="375.4" width="19.1" height="25.1" rx="1" fill="#000"/>
<rect x="1415.5" y="376.8" width="16.5" height="22.5" rx="0" fill="#ffb85f"/>
<circle cx="1403.8" cy="386.8" r="3.3" fill="#000" />
<circle cx="1403.8" cy="386.8" r="2.2" fill="#ffb85f" />
<circle cx="1403.8" cy="386.8" r="0.8" fill="#8a5a20" />
<polyline points="1406,387 1416,387" fill="none" stroke="#000" stroke-width="2.5" />
<rect x="1398" y="410.9" width="20.1" height="21.1" rx="1" fill="#000"/>
<rect x="1399.2" y="412.2" width="17.5" height="18.5" rx="0" fill="#ffb85f"/>
<rect x="1429.5" y="410.9" width="18.6" height="21.1" rx="1" fill="#000"/>
<rect x="1430.8" y="412.2" width="16" height="18.5" rx="0" fill="#ffb85f"/>
<text x="1456" y="407.5" font-size="11.5" fill="#ffdaf2" text-anchor="start" textLength="12" lengthAdjust="spacingAndGlyphs" font-weight="bold" stroke="#ffdaf2" stroke-width=".45" >Q1</text>
<polyline points="1408,431 1408,448" fill="none" stroke="#000" stroke-width="1.6" />
<polyline points="1404.5,431 1404.5,448" fill="none" stroke="#000" stroke-width="1.2" />
<polyline points="1439.5,431 1439.5,448" fill="none" stroke="#000" stroke-width="1.6" />
<rect x="1512" y="353" width="31" height="16" fill="none" stroke="#fbf2dc" stroke-width="1"/>
<polyline points="1527.5,353 1527.5,369" fill="none" stroke="#fbf2dc" stroke-width="0.8" />
<rect x="1515.2" y="355.5" width="10.6" height="11.6" rx="1.5" fill="#000"/>
<rect x="1516.5" y="356.8" width="8" height="9" rx="0.5" fill="#ffb85f"/>
<rect x="1529.5" y="355.5" width="11.1" height="11.6" rx="3.6" fill="#000"/>
<rect x="1530.8" y="356.8" width="8.5" height="9" rx="2.6" fill="#ffb85f"/>
<circle cx="1548" cy="361" r="3.1" fill="#000" />
<circle cx="1548" cy="361" r="2" fill="#ffb85f" />
<circle cx="1548" cy="361" r="0.8" fill="#8a5a20" />
<rect x="1513" y="352" width="15" height="4" fill="#000"/>
<text x="1514.5" y="343.8" font-size="11.5" fill="#ffdaf2" text-anchor="start" textLength="20" lengthAdjust="spacingAndGlyphs" font-weight="bold" stroke="#ffdaf2" stroke-width=".45" >R99</text>
<polyline points="1522.5,366 1522.5,377" fill="none" stroke="#000" stroke-width="2.2" />
<rect x="1496" y="386" width="45" height="44" fill="none" stroke="#fbf2dc" stroke-width="1"/>
<rect x="1510.2" y="375.4" width="18.6" height="25.1" rx="1" fill="#000"/>
<rect x="1511.5" y="376.8" width="16" height="22.5" rx="0" fill="#ffb85f"/>
<circle cx="1498.8" cy="387" r="3.3" fill="#000" />
<circle cx="1498.8" cy="387" r="2.2" fill="#ffb85f" />
<circle cx="1498.8" cy="387" r="0.8" fill="#8a5a20" />
<polyline points="1501,387.3 1512,387.3" fill="none" stroke="#000" stroke-width="2.5" />
<polyline points="1527,382.5 1545,382.5 1556.5,397.5 1556.5,446" fill="none" stroke="#000" stroke-width="4" stroke-linejoin="miter" stroke-linecap="butt"/>
<polyline points="1527,382.5 1545,382.5 1556.5,397.5 1556.5,446" fill="none" stroke="#c3f26b" stroke-width="1.4" stroke-linejoin="miter"/>
<rect x="1493.5" y="410.4" width="20.6" height="21.1" rx="1" fill="#000"/>
<rect x="1494.8" y="411.8" width="18" height="18.5" rx="0" fill="#ffb85f"/>
<rect x="1525.2" y="410.4" width="19.6" height="21.1" rx="1" fill="#000"/>
<rect x="1526.5" y="411.8" width="17" height="18.5" rx="0" fill="#ffb85f"/>
<text x="1555" y="407.5" font-size="11.5" fill="#ffdaf2" text-anchor="start" textLength="13" lengthAdjust="spacingAndGlyphs" font-weight="bold" stroke="#ffdaf2" stroke-width=".45" >Q2</text>
<polyline points="1503,431 1500,437 1500,448" fill="none" stroke="#000" stroke-width="1.5" />
<polyline points="1506.5,431 1506.5,436" fill="none" stroke="#000" stroke-width="1.2" />
<polyline points="1535,431 1535,448" fill="none" stroke="#000" stroke-width="1.6" />
<rect x="1400.5" y="445.5" width="14" height="29.5" fill="none" stroke="#fbf2dc" stroke-width="1"/>
<polyline points="1400.5,460.2 1414.5,460.2" fill="none" stroke="#fbf2dc" stroke-width="0.8" />
<rect x="1402" y="447.2" width="11.1" height="11.6" rx="3.6" fill="#000"/>
<rect x="1403.2" y="448.5" width="8.5" height="9" rx="2.6" fill="#ffb85f"/>
<rect x="1402" y="461.7" width="11.1" height="11.6" rx="3.6" fill="#000"/>
<rect x="1403.2" y="463" width="8.5" height="9" rx="2.6" fill="#ffb85f"/>
<rect x="1430.5" y="446" width="31.5" height="28.5" fill="none" stroke="#fbf2dc" stroke-width="1"/>
<polyline points="1446.5,446 1446.5,474.5" fill="none" stroke="#fbf2dc" stroke-width="0.8" />
<rect x="1432.5" y="447.2" width="11.1" height="11.6" rx="3.6" fill="#000"/>
<rect x="1433.8" y="448.5" width="8.5" height="9" rx="2.6" fill="#ffb85f"/>
<rect x="1432.5" y="461.7" width="11.1" height="11.6" rx="3.6" fill="#000"/>
<rect x="1433.8" y="463" width="8.5" height="9" rx="2.6" fill="#ffb85f"/>
<rect x="1449" y="447.2" width="11.1" height="11.6" rx="3.6" fill="#000"/>
<rect x="1450.2" y="448.5" width="8.5" height="9" rx="2.6" fill="#ffb85f"/>
<rect x="1449" y="461.7" width="11.1" height="11.6" rx="3.6" fill="#000"/>
<rect x="1450.2" y="463" width="8.5" height="9" rx="2.6" fill="#ffb85f"/>
<circle cx="1468.5" cy="453.5" r="2.9" fill="#000" />
<circle cx="1468.5" cy="453.5" r="1.8" fill="#ffb85f" />
<circle cx="1468.5" cy="453.5" r="0.8" fill="#8a5a20" />
<circle cx="1465" cy="468.5" r="2.9" fill="#000" />
<circle cx="1465" cy="468.5" r="1.8" fill="#ffb85f" />
<circle cx="1465" cy="468.5" r="0.8" fill="#8a5a20" />
<polyline points="1412,458.5 1432,458.5" fill="none" stroke="#000" stroke-width="1.6" />
<polyline points="1412,464 1432,464" fill="none" stroke="#000" stroke-width="1.3" />
<polyline points="1459,453.5 1470,453.5 1485,470 1497,470" fill="none" stroke="#000" stroke-width="3.6" stroke-linejoin="miter" stroke-linecap="butt"/>
<polyline points="1459,453.5 1470,453.5 1485,470 1497,470" fill="none" stroke="#c3f26b" stroke-width="1.2" stroke-linejoin="miter"/>
<rect x="1492.5" y="446" width="50" height="29" fill="none" stroke="#fbf2dc" stroke-width="1"/>
<polyline points="1508.5,446 1508.5,475" fill="none" stroke="#fbf2dc" stroke-width="0.8" />
<polyline points="1525.5,446 1525.5,475" fill="none" stroke="#fbf2dc" stroke-width="0.8" />
<rect x="1495" y="447.7" width="11.1" height="11.6" rx="3.6" fill="#000"/>
<rect x="1496.2" y="449" width="8.5" height="9" rx="2.6" fill="#ffb85f"/>
<rect x="1495" y="462.7" width="11.1" height="11.6" rx="3.6" fill="#000"/>
<rect x="1496.2" y="464" width="8.5" height="9" rx="2.6" fill="#ffb85f"/>
<rect x="1510.8" y="447.7" width="11.1" height="11.6" rx="3.6" fill="#000"/>
<rect x="1512" y="449" width="8.5" height="9" rx="2.6" fill="#ffb85f"/>
<rect x="1510.8" y="462.7" width="11.1" height="11.6" rx="3.6" fill="#000"/>
<rect x="1512" y="464" width="8.5" height="9" rx="2.6" fill="#ffb85f"/>
<rect x="1529.5" y="447.7" width="11.1" height="11.6" rx="3.6" fill="#000"/>
<rect x="1530.8" y="449" width="8.5" height="9" rx="2.6" fill="#ffb85f"/>
<rect x="1529.5" y="462.7" width="11.1" height="11.6" rx="3.6" fill="#000"/>
<rect x="1530.8" y="464" width="8.5" height="9" rx="2.6" fill="#ffb85f"/>
<rect x="1545" y="444.5" width="18.8" height="32.5" fill="none" stroke="#fbf2dc" stroke-width="1"/>
<rect x="1548.2" y="446.9" width="11.1" height="11.1" rx="1.5" fill="#000"/>
<rect x="1549.5" y="448.2" width="8.5" height="8.5" rx="0.5" fill="#ffb85f"/>
<rect x="1550.3" y="464.5" width="7" height="7" rx="1" fill="#f9b268"/>
<text x="1411" y="500" font-size="11" fill="#ffdaf2" text-anchor="start" textLength="18" lengthAdjust="spacingAndGlyphs" transform="rotate(-90 1411 500)" font-weight="bold" stroke="#ffdaf2" stroke-width=".45" >R36</text>
<text x="1444.5" y="507" font-size="11" fill="#ffdaf2" text-anchor="start" textLength="24" lengthAdjust="spacingAndGlyphs" transform="rotate(-90 1444.5 507)" font-weight="bold" stroke="#ffdaf2" stroke-width=".45" >R100</text>
<text x="1460.5" y="507" font-size="11" fill="#ffdaf2" text-anchor="start" textLength="24" lengthAdjust="spacingAndGlyphs" transform="rotate(-90 1460.5 507)" font-weight="bold" stroke="#ffdaf2" stroke-width=".45" >R101</text>
<text x="1507" y="500" font-size="11" fill="#ffdaf2" text-anchor="start" textLength="18" lengthAdjust="spacingAndGlyphs" transform="rotate(-90 1507 500)" font-weight="bold" stroke="#ffdaf2" stroke-width=".45" >R97</text>
<text x="1523" y="507" font-size="11" fill="#ffdaf2" text-anchor="start" textLength="24" lengthAdjust="spacingAndGlyphs" transform="rotate(-90 1523 507)" font-weight="bold" stroke="#ffdaf2" stroke-width=".45" >R153</text>
<text x="1539" y="507" font-size="11" fill="#ffdaf2" text-anchor="start" textLength="24" lengthAdjust="spacingAndGlyphs" transform="rotate(-90 1539 507)" font-weight="bold" stroke="#ffdaf2" stroke-width=".45" >R110</text>
<text x="1560" y="500" font-size="11" fill="#ffdaf2" text-anchor="start" textLength="18" lengthAdjust="spacingAndGlyphs" transform="rotate(-90 1560 500)" font-weight="bold" stroke="#ffdaf2" stroke-width=".45" >FL3</text>
<rect x="1388" y="548.8" width="15.8" height="27.5" fill="#fbb062"/>
<rect x="1403.8" y="546" width="50" height="31" fill="none" stroke="#fbf2dc" stroke-width="1.1"/>
<circle cx="1431" cy="562" r="9.5" fill="none" stroke="#fbf2dc" stroke-width="3"/>
<rect x="1437" y="556" width="6" height="4" fill="#c3f26b"/>
<rect x="1454.5" y="547" width="20.1" height="30.1" rx="1" fill="#000"/>
<rect x="1455.8" y="548.2" width="17.5" height="27.5" rx="0" fill="#ffb85f"/>
<text x="1408" y="542" font-size="11.5" fill="#ffdaf2" text-anchor="start" textLength="32" lengthAdjust="spacingAndGlyphs" font-weight="bold" stroke="#ffdaf2" stroke-width=".45" >GM102</text>
<polyline points="1465.5,576 1465.5,613" fill="none" stroke="#000" stroke-width="2.2" />
<rect x="1443" y="594.5" width="29.5" height="13.5" fill="none" stroke="#fbf2dc" stroke-width="1"/>
<polyline points="1457.5,594.5 1457.5,608" fill="none" stroke="#fbf2dc" stroke-width="0.8" />
<rect x="1444.5" y="595.2" width="11.1" height="11.6" rx="3.6" fill="#000"/>
<rect x="1445.8" y="596.5" width="8.5" height="9" rx="2.6" fill="#ffb85f"/>
<rect x="1460" y="595.2" width="11.1" height="11.6" rx="3.6" fill="#000"/>
<rect x="1461.2" y="596.5" width="8.5" height="9" rx="2.6" fill="#ffb85f"/>
<polyline points="1434,601 1445,601" fill="none" stroke="#000" stroke-width="1.2" />
<text x="1408.5" y="606" font-size="11.5" fill="#ffdaf2" text-anchor="start" textLength="25" lengthAdjust="spacingAndGlyphs" font-weight="bold" stroke="#ffdaf2" stroke-width=".45" >R148</text>
<circle cx="1465" cy="618.8" r="7.7" fill="#000" />
<circle cx="1465" cy="618.8" r="6.5" fill="#ffb85f" />
<text x="1455.5" y="638.8" font-size="11.5" fill="#ffdaf2" text-anchor="start" textLength="24.5" lengthAdjust="spacingAndGlyphs" font-weight="bold" stroke="#ffdaf2" stroke-width=".45" >TP21</text>
<circle cx="1491" cy="634.5" r="2.9" fill="#000" />
<circle cx="1491" cy="634.5" r="1.8" fill="#ffb85f" />
<circle cx="1491" cy="634.5" r="0.8" fill="#8a5a20" />
<circle cx="1498" cy="634.5" r="2.9" fill="#000" />
<circle cx="1498" cy="634.5" r="1.8" fill="#ffb85f" />
<circle cx="1498" cy="634.5" r="0.8" fill="#8a5a20" />
<polyline points="1471,618.5 1489,618.5 1519,648 1552,648" fill="none" stroke="#000" stroke-width="3.6" stroke-linejoin="miter" stroke-linecap="butt"/>
<polyline points="1552,634 1552,645 1587.5,683.5 1587.5,748" fill="none" stroke="#000" stroke-width="3.6" stroke-linejoin="miter" stroke-linecap="butt"/>
<polyline points="1568.5,634 1568.5,642 1575,649 1649,649 1684,684 1684,712" fill="none" stroke="#000" stroke-width="3.6" stroke-linejoin="miter" stroke-linecap="butt"/>
<polyline points="1612,620 1612,627.5 1647,627.5 1697,677.5 1697,712" fill="none" stroke="#000" stroke-width="3.6" stroke-linejoin="miter" stroke-linecap="butt"/>
<polyline points="1497,573 1497,600 1508,611" fill="none" stroke="#000" stroke-width="3.2" stroke-linejoin="miter" stroke-linecap="butt"/>
<polyline points="1471,618.5 1489,618.5 1519,648 1552,648" fill="none" stroke="#c3f26b" stroke-width="1.2" stroke-linejoin="miter"/>
<polyline points="1552,634 1552,645 1587.5,683.5 1587.5,748" fill="none" stroke="#c3f26b" stroke-width="1.2" stroke-linejoin="miter"/>
<polyline points="1568.5,634 1568.5,642 1575,649 1649,649 1684,684 1684,712" fill="none" stroke="#c3f26b" stroke-width="1.2" stroke-linejoin="miter"/>
<polyline points="1612,620 1612,627.5 1647,627.5 1697,677.5 1697,712" fill="none" stroke="#c3f26b" stroke-width="1.2" stroke-linejoin="miter"/>
<polyline points="1497,573 1497,600 1508,611" fill="none" stroke="#c3f26b" stroke-width="1.2" stroke-linejoin="miter"/>
<circle cx="1612" cy="617" r="3.3" fill="#000" />
<circle cx="1612" cy="617" r="2.2" fill="#ffb85f" />
<circle cx="1612" cy="617" r="0.8" fill="#8a5a20" />
<circle cx="1595" cy="688.3" r="3.3" fill="#000" />
<circle cx="1595" cy="688.3" r="2.2" fill="#ffb85f" />
<circle cx="1595" cy="688.3" r="0.8" fill="#8a5a20" />
<rect x="1522.5" y="530" width="62.5" height="72" fill="none" stroke="#fbf2dc" stroke-width="3"/>
<rect x="1528.7" y="535.2" width="22.6" height="25.6" rx="1" fill="#000"/>
<rect x="1530" y="536.5" width="20" height="23" rx="0" fill="#ffb85f"/>
<rect x="1558.5" y="537" width="19" height="22" rx="0" fill="#fbb062"/>
<rect x="1530.5" y="573.5" width="19" height="22" rx="0" fill="#fbb062"/>
<rect x="1556.7" y="571.7" width="22.6" height="25.6" rx="1" fill="#000"/>
<rect x="1558" y="573" width="20" height="23" rx="0" fill="#ffb85f"/>
<text x="1536" y="526" font-size="11.5" fill="#ffdaf2" text-anchor="start" textLength="25" lengthAdjust="spacingAndGlyphs" font-weight="bold" stroke="#ffdaf2" stroke-width=".45" >X101</text>
<polyline points="1568,596 1568,608" fill="none" stroke="#000" stroke-width="1.8" />
<polyline points="1521,551 1530,551" fill="none" stroke="#000" stroke-width="1.4" />
<rect x="1489.5" y="543.8" width="15" height="30" fill="none" stroke="#fbf2dc" stroke-width="1"/>
<rect x="1504.5" y="543.8" width="17.5" height="30" fill="none" stroke="#fbf2dc" stroke-width="1"/>
<rect x="1491.2" y="545.5" width="11.1" height="11.6" rx="3.6" fill="#000"/>
<rect x="1492.5" y="546.8" width="8.5" height="9" rx="2.6" fill="#ffb85f"/>
<rect x="1491.2" y="560.5" width="11.1" height="11.6" rx="3.6" fill="#000"/>
<rect x="1492.5" y="561.8" width="8.5" height="9" rx="2.6" fill="#ffb85f"/>
<circle cx="1511" cy="551" r="3.7" fill="#000" />
<circle cx="1511" cy="551" r="2.6" fill="#ffb85f" />
<circle cx="1511" cy="551" r="0.8" fill="#8a5a20" />
<rect x="1509.5" y="562.5" width="7" height="7" rx="1" fill="#f9b268"/>
<polygon points="1511,538 1521,548 1511,558 1516,548" fill="#fbf2dc" />
<text x="1500" y="606" font-size="11" fill="#ffdaf2" text-anchor="start" textLength="24" lengthAdjust="spacingAndGlyphs" transform="rotate(-90 1500 606)" font-weight="bold" stroke="#ffdaf2" stroke-width=".45" >R107</text>
<text x="1518" y="606" font-size="11" fill="#ffdaf2" text-anchor="start" textLength="24" lengthAdjust="spacingAndGlyphs" transform="rotate(-90 1518 606)" font-weight="bold" stroke="#ffdaf2" stroke-width=".45" >C103</text>
<rect x="1545" y="605" width="30" height="30" fill="none" stroke="#fbf2dc" stroke-width="1"/>
<polyline points="1545,620 1575,620" fill="none" stroke="#fbf2dc" stroke-width="0.8" />
<polyline points="1560.5,605 1560.5,635" fill="none" stroke="#fbf2dc" stroke-width="0.8" />
<rect x="1577.5" y="605" width="15" height="30" fill="none" stroke="#fbf2dc" stroke-width="1"/>
<polyline points="1577.5,620 1592.5,620" fill="none" stroke="#fbf2dc" stroke-width="0.8" />
<rect x="1549.5" y="609" width="7" height="7" rx="1" fill="#f9b268"/>
<rect x="1562.5" y="606.7" width="11.1" height="11.6" rx="3.6" fill="#000"/>
<rect x="1563.8" y="608" width="8.5" height="9" rx="2.6" fill="#ffb85f"/>
<rect x="1581.5" y="609" width="7" height="7" rx="1" fill="#f9b268"/>
<rect x="1547.5" y="623.2" width="11.1" height="11.6" rx="3.6" fill="#000"/>
<rect x="1548.8" y="624.5" width="8.5" height="9" rx="2.6" fill="#ffb85f"/>
<rect x="1562.5" y="623.2" width="11.1" height="11.6" rx="3.6" fill="#000"/>
<rect x="1563.8" y="624.5" width="8.5" height="9" rx="2.6" fill="#ffb85f"/>
<rect x="1579.5" y="623.2" width="11.1" height="11.6" rx="3.6" fill="#000"/>
<rect x="1580.8" y="624.5" width="8.5" height="9" rx="2.6" fill="#ffb85f"/>
<text x="1512.5" y="620.5" font-size="11.5" fill="#ffdaf2" text-anchor="start" textLength="24.5" lengthAdjust="spacingAndGlyphs" font-weight="bold" stroke="#ffdaf2" stroke-width=".45" >C104</text>
<text x="1516" y="635" font-size="11.5" fill="#ffdaf2" text-anchor="start" textLength="19" lengthAdjust="spacingAndGlyphs" font-weight="bold" stroke="#ffdaf2" stroke-width=".45" >R37</text>
<text x="1604" y="632" font-size="11" fill="#ffdaf2" text-anchor="start" textLength="17" lengthAdjust="spacingAndGlyphs" transform="rotate(-90 1604 632)" font-weight="bold" stroke="#ffdaf2" stroke-width=".45" >R34</text>
<text x="1607" y="692" font-size="21" fill="#ffdaf2" text-anchor="start" textLength="22" lengthAdjust="spacingAndGlyphs" >U1</text>
<rect x="1140" y="549.5" width="15" height="32.5" fill="none" stroke="#fbf2dc" stroke-width="1"/>
<rect x="1144" y="554.5" width="7" height="7" rx="1" fill="#f9b268"/>
<rect x="1142" y="567.2" width="11.1" height="11.6" rx="3.6" fill="#000"/>
<rect x="1143.2" y="568.5" width="8.5" height="9" rx="2.6" fill="#ffb85f"/>
<rect x="1164.5" y="549.5" width="15" height="32.5" fill="none" stroke="#fbf2dc" stroke-width="1"/>
<rect x="1168.5" y="554.5" width="7" height="7" rx="1" fill="#f9b268"/>
<rect x="1166.5" y="567.2" width="11.1" height="11.6" rx="3.6" fill="#000"/>
<rect x="1167.8" y="568.5" width="8.5" height="9" rx="2.6" fill="#ffb85f"/>
<rect x="1185" y="549.5" width="15" height="32.5" fill="none" stroke="#fbf2dc" stroke-width="1"/>
<rect x="1189" y="554.5" width="7" height="7" rx="1" fill="#f9b268"/>
<rect x="1187" y="567.2" width="11.1" height="11.6" rx="1.5" fill="#000"/>
<rect x="1188.2" y="568.5" width="8.5" height="9" rx="0.5" fill="#ffb85f"/>
<rect x="1204.5" y="549.5" width="15" height="32.5" fill="none" stroke="#fbf2dc" stroke-width="1"/>
<rect x="1208.5" y="554.5" width="7" height="7" rx="1" fill="#f9b268"/>
<rect x="1206.5" y="567.2" width="11.1" height="11.6" rx="3.6" fill="#000"/>
<rect x="1207.8" y="568.5" width="8.5" height="9" rx="2.6" fill="#ffb85f"/>
<rect x="1221.5" y="549.5" width="15" height="32.5" fill="none" stroke="#fbf2dc" stroke-width="1"/>
<rect x="1225.5" y="554.5" width="7" height="7" rx="1" fill="#f9b268"/>
<rect x="1223.5" y="567.2" width="11.1" height="11.6" rx="3.6" fill="#000"/>
<rect x="1224.8" y="568.5" width="8.5" height="9" rx="2.6" fill="#ffb85f"/>
<rect x="1240" y="549.5" width="15" height="32.5" fill="none" stroke="#fbf2dc" stroke-width="1"/>
<rect x="1242" y="552.2" width="11.1" height="11.6" rx="3.6" fill="#000"/>
<rect x="1243.2" y="553.5" width="8.5" height="9" rx="2.6" fill="#ffb85f"/>
<rect x="1242" y="567.2" width="11.1" height="11.6" rx="3.6" fill="#000"/>
<rect x="1243.2" y="568.5" width="8.5" height="9" rx="2.6" fill="#ffb85f"/>
<rect x="1257.5" y="549.5" width="15" height="32.5" fill="none" stroke="#fbf2dc" stroke-width="1"/>
<rect x="1259.5" y="552.2" width="11.1" height="11.6" rx="3.6" fill="#000"/>
<rect x="1260.8" y="553.5" width="8.5" height="9" rx="2.6" fill="#ffb85f"/>
<rect x="1259.5" y="567.2" width="11.1" height="11.6" rx="3.6" fill="#000"/>
<rect x="1260.8" y="568.5" width="8.5" height="9" rx="2.6" fill="#ffb85f"/>
<rect x="1275" y="549.5" width="15" height="32.5" fill="none" stroke="#fbf2dc" stroke-width="1"/>
<rect x="1279" y="554.5" width="7" height="7" rx="1" fill="#f9b268"/>
<rect x="1277" y="567.2" width="11.1" height="11.6" rx="3.6" fill="#000"/>
<rect x="1278.2" y="568.5" width="8.5" height="9" rx="2.6" fill="#ffb85f"/>
<rect x="1292.5" y="549.5" width="15" height="32.5" fill="none" stroke="#fbf2dc" stroke-width="1"/>
<rect x="1296.5" y="554.5" width="7" height="7" rx="1" fill="#f9b268"/>
<rect x="1294.5" y="567.2" width="11.1" height="11.6" rx="3.6" fill="#000"/>
<rect x="1295.8" y="568.5" width="8.5" height="9" rx="2.6" fill="#ffb85f"/>
<rect x="1310.5" y="549.5" width="15" height="32.5" fill="none" stroke="#fbf2dc" stroke-width="1"/>
<rect x="1314.5" y="554.5" width="7" height="7" rx="1" fill="#f9b268"/>
<rect x="1312.5" y="567.2" width="11.1" height="11.6" rx="1.5" fill="#000"/>
<rect x="1313.8" y="568.5" width="8.5" height="9" rx="0.5" fill="#ffb85f"/>
<rect x="1330.5" y="549.5" width="15" height="32.5" fill="none" stroke="#fbf2dc" stroke-width="1"/>
<rect x="1334.5" y="554.5" width="7" height="7" rx="1" fill="#f9b268"/>
<rect x="1332.5" y="567.2" width="11.1" height="11.6" rx="1.5" fill="#000"/>
<rect x="1333.8" y="568.5" width="8.5" height="9" rx="0.5" fill="#ffb85f"/>
<polyline points="1176,574 1188,574" fill="none" stroke="#000" stroke-width="2" />
<polyline points="1216,574 1225,574" fill="none" stroke="#000" stroke-width="1.6" />
<polyline points="1251,574 1261,574" fill="none" stroke="#000" stroke-width="1.6" />
<polyline points="1287,574 1296,574" fill="none" stroke="#000" stroke-width="1.6" />
<polyline points="1304,574 1314,574" fill="none" stroke="#000" stroke-width="1.6" />
<polyline points="1268,559 1275,566 1282,574" fill="none" stroke="#000" stroke-width="1.3" />
<text x="1152" y="545" font-size="11" fill="#ffdaf2" text-anchor="start" textLength="24" lengthAdjust="spacingAndGlyphs" transform="rotate(-90 1152 545)" font-weight="bold" stroke="#ffdaf2" stroke-width=".45" >C229</text>
<text x="1177" y="545" font-size="11" fill="#ffdaf2" text-anchor="start" textLength="24" lengthAdjust="spacingAndGlyphs" transform="rotate(-90 1177 545)" font-weight="bold" stroke="#ffdaf2" stroke-width=".45" >C233</text>
<text x="1197" y="545" font-size="11" fill="#ffdaf2" text-anchor="start" textLength="24" lengthAdjust="spacingAndGlyphs" transform="rotate(-90 1197 545)" font-weight="bold" stroke="#ffdaf2" stroke-width=".45" >C230</text>
<text x="1216" y="545" font-size="11" fill="#ffdaf2" text-anchor="start" textLength="24" lengthAdjust="spacingAndGlyphs" transform="rotate(-90 1216 545)" font-weight="bold" stroke="#ffdaf2" stroke-width=".45" >R230</text>
<text x="1234" y="545" font-size="11" fill="#ffdaf2" text-anchor="start" textLength="24" lengthAdjust="spacingAndGlyphs" transform="rotate(-90 1234 545)" font-weight="bold" stroke="#ffdaf2" stroke-width=".45" >C212</text>
<text x="1252" y="545" font-size="11" fill="#ffdaf2" text-anchor="start" textLength="24" lengthAdjust="spacingAndGlyphs" transform="rotate(-90 1252 545)" font-weight="bold" stroke="#ffdaf2" stroke-width=".45" >R232</text>
<text x="1270" y="545" font-size="11" fill="#ffdaf2" text-anchor="start" textLength="24" lengthAdjust="spacingAndGlyphs" transform="rotate(-90 1270 545)" font-weight="bold" stroke="#ffdaf2" stroke-width=".45" >C211</text>
<text x="1287" y="545" font-size="11" fill="#ffdaf2" text-anchor="start" textLength="24" lengthAdjust="spacingAndGlyphs" transform="rotate(-90 1287 545)" font-weight="bold" stroke="#ffdaf2" stroke-width=".45" >C228</text>
<text x="1305" y="545" font-size="11" fill="#ffdaf2" text-anchor="start" textLength="24" lengthAdjust="spacingAndGlyphs" transform="rotate(-90 1305 545)" font-weight="bold" stroke="#ffdaf2" stroke-width=".45" >C232</text>
<text x="1323" y="545" font-size="11" fill="#ffdaf2" text-anchor="start" textLength="24" lengthAdjust="spacingAndGlyphs" transform="rotate(-90 1323 545)" font-weight="bold" stroke="#ffdaf2" stroke-width=".45" >C210</text>
<text x="1342" y="545" font-size="11" fill="#ffdaf2" text-anchor="start" textLength="24" lengthAdjust="spacingAndGlyphs" transform="rotate(-90 1342 545)" font-weight="bold" stroke="#ffdaf2" stroke-width=".45" >R101</text>
<rect x="1140.5" y="757" width="14" height="31" fill="none" stroke="#fbf2dc" stroke-width="1"/>
<rect x="1142" y="759.5" width="11.1" height="12.1" rx="1.5" fill="#000"/>
<rect x="1143.2" y="760.8" width="8.5" height="9.5" rx="0.5" fill="#ffb85f"/>
<rect x="1144" y="777.5" width="7" height="7" rx="1" fill="#f9b268"/>
<rect x="1168" y="757" width="14" height="31" fill="none" stroke="#fbf2dc" stroke-width="1"/>
<rect x="1169.5" y="759.5" width="11.1" height="12.1" rx="1.5" fill="#000"/>
<rect x="1170.8" y="760.8" width="8.5" height="9.5" rx="0.5" fill="#ffb85f"/>
<rect x="1171.5" y="777.5" width="7" height="7" rx="1" fill="#f9b268"/>
<rect x="1185.5" y="757" width="14" height="31" fill="none" stroke="#fbf2dc" stroke-width="1"/>
<rect x="1187" y="759.5" width="11.1" height="12.1" rx="1.5" fill="#000"/>
<rect x="1188.2" y="760.8" width="8.5" height="9.5" rx="0.5" fill="#ffb85f"/>
<rect x="1189" y="777.5" width="7" height="7" rx="1" fill="#f9b268"/>
<rect x="1203" y="757" width="14" height="31" fill="none" stroke="#fbf2dc" stroke-width="1"/>
<rect x="1204.5" y="759.5" width="11.1" height="12.1" rx="1.5" fill="#000"/>
<rect x="1205.8" y="760.8" width="8.5" height="9.5" rx="0.5" fill="#ffb85f"/>
<rect x="1206.5" y="777.5" width="7" height="7" rx="1" fill="#f9b268"/>
<rect x="1220.5" y="757" width="14" height="31" fill="none" stroke="#fbf2dc" stroke-width="1"/>
<rect x="1222" y="759.5" width="11.1" height="12.1" rx="1.5" fill="#000"/>
<rect x="1223.2" y="760.8" width="8.5" height="9.5" rx="0.5" fill="#ffb85f"/>
<rect x="1224" y="777.5" width="7" height="7" rx="1" fill="#f9b268"/>
<rect x="1240.5" y="757" width="14" height="31" fill="none" stroke="#fbf2dc" stroke-width="1"/>
<rect x="1242" y="759.5" width="11.1" height="12.1" rx="1.5" fill="#000"/>
<rect x="1243.2" y="760.8" width="8.5" height="9.5" rx="0.5" fill="#ffb85f"/>
<rect x="1244" y="777.5" width="7" height="7" rx="1" fill="#f9b268"/>
<rect x="1284" y="757" width="14" height="31" fill="none" stroke="#fbf2dc" stroke-width="1"/>
<rect x="1285.5" y="759.5" width="11.1" height="12.1" rx="1.5" fill="#000"/>
<rect x="1286.8" y="760.8" width="8.5" height="9.5" rx="0.5" fill="#ffb85f"/>
<rect x="1287.5" y="777.5" width="7" height="7" rx="1" fill="#f9b268"/>
<rect x="1303" y="757" width="14" height="31" fill="none" stroke="#fbf2dc" stroke-width="1"/>
<rect x="1304.5" y="759.5" width="11.1" height="12.1" rx="1.5" fill="#000"/>
<rect x="1305.8" y="760.8" width="8.5" height="9.5" rx="0.5" fill="#ffb85f"/>
<rect x="1306.5" y="777.5" width="7" height="7" rx="1" fill="#f9b268"/>
<rect x="1323" y="757" width="14" height="31" fill="none" stroke="#fbf2dc" stroke-width="1"/>
<rect x="1324.5" y="759.5" width="11.1" height="12.1" rx="1.5" fill="#000"/>
<rect x="1325.8" y="760.8" width="8.5" height="9.5" rx="0.5" fill="#ffb85f"/>
<rect x="1326.5" y="777.5" width="7" height="7" rx="1" fill="#f9b268"/>
<polyline points="1227.5,768 1247.5,768" fill="none" stroke="#000" stroke-width="2" />
<polyline points="1291,768 1330,768" fill="none" stroke="#000" stroke-width="2" />
<text x="1058" y="787" font-size="11" fill="#ffdaf2" text-anchor="start" textLength="24" lengthAdjust="spacingAndGlyphs" transform="rotate(-90 1058 787)" font-weight="bold" stroke="#ffdaf2" stroke-width=".45" >C226</text>
<text x="1073" y="787" font-size="11" fill="#ffdaf2" text-anchor="start" textLength="24" lengthAdjust="spacingAndGlyphs" transform="rotate(-90 1073 787)" font-weight="bold" stroke="#ffdaf2" stroke-width=".45" >C236</text>
<text x="1087" y="787" font-size="11" fill="#ffdaf2" text-anchor="start" textLength="24" lengthAdjust="spacingAndGlyphs" transform="rotate(-90 1087 787)" font-weight="bold" stroke="#ffdaf2" stroke-width=".45" >R231</text>
<text x="1101" y="787" font-size="11" fill="#ffdaf2" text-anchor="start" textLength="24" lengthAdjust="spacingAndGlyphs" transform="rotate(-90 1101 787)" font-weight="bold" stroke="#ffdaf2" stroke-width=".45" >R235</text>
<text x="1115" y="787" font-size="11" fill="#ffdaf2" text-anchor="start" textLength="24" lengthAdjust="spacingAndGlyphs" transform="rotate(-90 1115 787)" font-weight="bold" stroke="#ffdaf2" stroke-width=".45" >C227</text>
<text x="1129" y="787" font-size="11" fill="#ffdaf2" text-anchor="start" textLength="24" lengthAdjust="spacingAndGlyphs" transform="rotate(-90 1129 787)" font-weight="bold" stroke="#ffdaf2" stroke-width=".45" >C225</text>
<text x="1278.5" y="787" font-size="11" fill="#ffdaf2" text-anchor="start" textLength="24" lengthAdjust="spacingAndGlyphs" transform="rotate(-90 1278.5 787)" font-weight="bold" stroke="#ffdaf2" stroke-width=".45" >C231</text>
<text x="1356" y="787" font-size="11" fill="#ffdaf2" text-anchor="start" textLength="24" lengthAdjust="spacingAndGlyphs" transform="rotate(-90 1356 787)" font-weight="bold" stroke="#ffdaf2" stroke-width=".45" >C232</text>
<text x="1368" y="787" font-size="11" fill="#ffdaf2" text-anchor="start" textLength="24" lengthAdjust="spacingAndGlyphs" transform="rotate(-90 1368 787)" font-weight="bold" stroke="#ffdaf2" stroke-width=".45" >C233</text>
<rect x="1235" y="799" width="15" height="16" fill="none" stroke="#fbf2dc" stroke-width="1"/>
<rect x="1250" y="799" width="15" height="16" fill="none" stroke="#fbf2dc" stroke-width="1"/>
<rect x="1238" y="800.7" width="10.1" height="12.6" rx="3.6" fill="#000"/>
<rect x="1239.2" y="802" width="7.5" height="10" rx="2.6" fill="#ffb85f"/>
<rect x="1252.5" y="800.7" width="10.1" height="12.6" rx="3.6" fill="#000"/>
<rect x="1253.8" y="802" width="7.5" height="10" rx="2.6" fill="#ffb85f"/>
<circle cx="1243" cy="797" r="2.6" fill="#000" />
<circle cx="1243" cy="797" r="1.5" fill="#ffb85f" />
<circle cx="1243" cy="797" r="0.8" fill="#8a5a20" />
<circle cx="1257.5" cy="797" r="2.6" fill="#000" />
<circle cx="1257.5" cy="797" r="1.5" fill="#ffb85f" />
<circle cx="1257.5" cy="797" r="0.8" fill="#8a5a20" />
<text x="1237.5" y="827.5" font-size="11.5" fill="#ffdaf2" text-anchor="start" textLength="25.5" lengthAdjust="spacingAndGlyphs" font-weight="bold" stroke="#ffdaf2" stroke-width=".45" >R299</text>
<path fill="#f9b268" d="M1051.4 795.4h3.2v3.2h-3.2zM1066.4 795.4h3.2v3.2h-3.2zM1005.4 804.4h3.2v3.2h-3.2zM1019.4 804.4h3.2v3.2h-3.2zM1033.4 804.4h3.2v3.2h-3.2zM1135.4 800.4h3.2v3.2h-3.2zM1147.4 800.4h3.2v3.2h-3.2zM1127.4 808.4h3.2v3.2h-3.2zM1141.4 808.4h3.2v3.2h-3.2zM1155.4 808.4h3.2v3.2h-3.2zM1073.6 804.6h2.8v2.8h-2.8zM1088.6 796.6h2.8v2.8h-2.8zM1102.6 804.6h2.8v2.8h-2.8zM1115.6 796.6h2.8v2.8h-2.8zM1129.6 804.6h2.8v2.8h-2.8zM1143.6 796.6h2.8v2.8h-2.8zM1187.6 799.6h2.8v2.8h-2.8zM1202.6 806.6h2.8v2.8h-2.8zM1214.6 799.6h2.8v2.8h-2.8zM1194.6 806.6h2.8v2.8h-2.8z"/>
<path d="M1125 587.5 H1340 L1353.8 600.5 V750.5 H1125 Z" fill="none" stroke="#fbf2dc" stroke-width="1"/>
<text x="1052" y="674" font-size="23" fill="#ffdaf2" text-anchor="start" textLength="51" lengthAdjust="spacingAndGlyphs" >U204</text>
<polygon points="1130,632 1140,624 1215,624 1228,634 1224,650 1140,650" fill="#000" />
<polygon points="1252,612 1350,612 1350,646 1310,646 1300,636 1252,636" fill="#000" opacity="0"/>
<circle cx="1153.6" cy="617" r="5.2" fill="#000" />
<circle cx="1179.8" cy="617" r="5.2" fill="#000" />
<circle cx="1206" cy="617" r="5.2" fill="#000" />
<circle cx="1219.1" cy="617" r="5.2" fill="#000" />
<circle cx="1245.3" cy="617" r="5.2" fill="#000" />
<circle cx="1258.4" cy="617" r="5.2" fill="#000" />
<circle cx="1271.5" cy="617" r="5.2" fill="#000" />
<circle cx="1284.6" cy="617" r="5.2" fill="#000" />
<circle cx="1297.7" cy="617" r="5.2" fill="#000" />
<circle cx="1323.9" cy="617" r="5.2" fill="#000" />
<circle cx="1337" cy="617" r="5.2" fill="#000" />
<circle cx="1140.5" cy="617" r="3.5" fill="#f9b268" />
<circle cx="1153.6" cy="617" r="3.7" fill="#ffb85f" />
<circle cx="1166.7" cy="617" r="3.5" fill="#f9b268" />
<circle cx="1179.8" cy="617" r="3.7" fill="#ffb85f" />
<circle cx="1192.9" cy="617" r="3.5" fill="#f9b268" />
<circle cx="1206" cy="617" r="3.7" fill="#ffb85f" />
<circle cx="1219.1" cy="617" r="3.7" fill="#ffb85f" />
<circle cx="1232.2" cy="617" r="3.5" fill="#f9b268" />
<circle cx="1245.3" cy="617" r="3.7" fill="#ffb85f" />
<circle cx="1258.4" cy="617" r="3.7" fill="#ffb85f" />
<circle cx="1271.5" cy="617" r="3.7" fill="#ffb85f" />
<circle cx="1284.6" cy="617" r="3.7" fill="#ffb85f" />
<circle cx="1297.7" cy="617" r="3.7" fill="#ffb85f" />
<circle cx="1310.8" cy="617" r="3.5" fill="#f9b268" />
<circle cx="1323.9" cy="617" r="3.7" fill="#ffb85f" />
<circle cx="1337" cy="617" r="3.7" fill="#ffb85f" />
<circle cx="1140.5" cy="629" r="5.2" fill="#000" />
<circle cx="1153.6" cy="629" r="5.2" fill="#000" />
<circle cx="1166.7" cy="629" r="5.2" fill="#000" />
<circle cx="1179.8" cy="629" r="5.2" fill="#000" />
<circle cx="1192.9" cy="629" r="5.2" fill="#000" />
<circle cx="1206" cy="629" r="5.2" fill="#000" />
<circle cx="1219.1" cy="629" r="5.2" fill="#000" />
<circle cx="1232.2" cy="629" r="5.2" fill="#000" />
<circle cx="1258.4" cy="629" r="5.2" fill="#000" />
<circle cx="1271.5" cy="629" r="5.2" fill="#000" />
<circle cx="1297.7" cy="629" r="5.2" fill="#000" />
<circle cx="1310.8" cy="629" r="5.2" fill="#000" />
<circle cx="1323.9" cy="629" r="5.2" fill="#000" />
<circle cx="1337" cy="629" r="5.2" fill="#000" />
<circle cx="1140.5" cy="629" r="3.7" fill="#ffb85f" />
<circle cx="1153.6" cy="629" r="3.7" fill="#ffb85f" />
<circle cx="1166.7" cy="629" r="3.7" fill="#ffb85f" />
<circle cx="1179.8" cy="629" r="3.7" fill="#ffb85f" />
<circle cx="1192.9" cy="629" r="3.7" fill="#ffb85f" />
<circle cx="1206" cy="629" r="3.7" fill="#ffb85f" />
<circle cx="1219.1" cy="629" r="3.7" fill="#ffb85f" />
<circle cx="1232.2" cy="629" r="3.7" fill="#ffb85f" />
<circle cx="1245.3" cy="629" r="3.5" fill="#f9b268" />
<circle cx="1258.4" cy="629" r="3.7" fill="#ffb85f" />
<circle cx="1271.5" cy="629" r="3.7" fill="#ffb85f" />
<circle cx="1284.6" cy="629" r="3.5" fill="#f9b268" />
<circle cx="1297.7" cy="629" r="3.7" fill="#ffb85f" />
<circle cx="1310.8" cy="629" r="3.7" fill="#ffb85f" />
<circle cx="1323.9" cy="629" r="3.7" fill="#ffb85f" />
<circle cx="1337" cy="629" r="3.7" fill="#ffb85f" />
<circle cx="1153.6" cy="641" r="5.2" fill="#000" />
<circle cx="1166.7" cy="641" r="5.2" fill="#000" />
<circle cx="1179.8" cy="641" r="5.2" fill="#000" />
<circle cx="1192.9" cy="641" r="5.2" fill="#000" />
<circle cx="1206" cy="641" r="5.2" fill="#000" />
<circle cx="1219.1" cy="641" r="5.2" fill="#000" />
<circle cx="1232.2" cy="641" r="5.2" fill="#000" />
<circle cx="1258.4" cy="641" r="5.2" fill="#000" />
<circle cx="1271.5" cy="641" r="5.2" fill="#000" />
<circle cx="1284.6" cy="641" r="5.2" fill="#000" />
<circle cx="1297.7" cy="641" r="5.2" fill="#000" />
<circle cx="1310.8" cy="641" r="5.2" fill="#000" />
<circle cx="1323.9" cy="641" r="5.2" fill="#000" />
<circle cx="1140.5" cy="641" r="3.5" fill="#f9b268" />
<circle cx="1153.6" cy="641" r="3.7" fill="#ffb85f" />
<circle cx="1166.7" cy="641" r="3.7" fill="#ffb85f" />
<circle cx="1179.8" cy="641" r="3.7" fill="#ffb85f" />
<circle cx="1192.9" cy="641" r="3.7" fill="#ffb85f" />
<circle cx="1206" cy="641" r="3.7" fill="#ffb85f" />
<circle cx="1219.1" cy="641" r="3.7" fill="#ffb85f" />
<circle cx="1232.2" cy="641" r="3.7" fill="#ffb85f" />
<circle cx="1245.3" cy="641" r="3.5" fill="#f9b268" />
<circle cx="1258.4" cy="641" r="3.7" fill="#ffb85f" />
<circle cx="1271.5" cy="641" r="3.7" fill="#ffb85f" />
<circle cx="1284.6" cy="641" r="3.7" fill="#ffb85f" />
<circle cx="1297.7" cy="641" r="3.7" fill="#ffb85f" />
<circle cx="1310.8" cy="641" r="3.7" fill="#ffb85f" />
<circle cx="1323.9" cy="641" r="3.7" fill="#ffb85f" />
<circle cx="1337" cy="641" r="3.5" fill="#f9b268" />
<circle cx="1147" cy="635" r="2.7" fill="#000" />
<circle cx="1147" cy="635" r="1.6" fill="#ffb85f" />
<circle cx="1147" cy="635" r="0.8" fill="#8a5a20" />
<circle cx="1147" cy="648" r="2.7" fill="#000" />
<circle cx="1147" cy="648" r="1.6" fill="#ffb85f" />
<circle cx="1147" cy="648" r="0.8" fill="#8a5a20" />
<circle cx="1160.1" cy="635" r="2.7" fill="#000" />
<circle cx="1160.1" cy="635" r="1.6" fill="#ffb85f" />
<circle cx="1160.1" cy="635" r="0.8" fill="#8a5a20" />
<circle cx="1160.1" cy="648" r="2.7" fill="#000" />
<circle cx="1160.1" cy="648" r="1.6" fill="#ffb85f" />
<circle cx="1160.1" cy="648" r="0.8" fill="#8a5a20" />
<circle cx="1173.2" cy="635" r="2.7" fill="#000" />
<circle cx="1173.2" cy="635" r="1.6" fill="#ffb85f" />
<circle cx="1173.2" cy="635" r="0.8" fill="#8a5a20" />
<circle cx="1173.2" cy="648" r="2.7" fill="#000" />
<circle cx="1173.2" cy="648" r="1.6" fill="#ffb85f" />
<circle cx="1173.2" cy="648" r="0.8" fill="#8a5a20" />
<circle cx="1186.3" cy="635" r="2.7" fill="#000" />
<circle cx="1186.3" cy="635" r="1.6" fill="#ffb85f" />
<circle cx="1186.3" cy="635" r="0.8" fill="#8a5a20" />
<circle cx="1186.3" cy="648" r="2.7" fill="#000" />
<circle cx="1186.3" cy="648" r="1.6" fill="#ffb85f" />
<circle cx="1186.3" cy="648" r="0.8" fill="#8a5a20" />
<circle cx="1199.4" cy="635" r="2.7" fill="#000" />
<circle cx="1199.4" cy="635" r="1.6" fill="#ffb85f" />
<circle cx="1199.4" cy="635" r="0.8" fill="#8a5a20" />
<circle cx="1199.4" cy="648" r="2.7" fill="#000" />
<circle cx="1199.4" cy="648" r="1.6" fill="#ffb85f" />
<circle cx="1199.4" cy="648" r="0.8" fill="#8a5a20" />
<circle cx="1212.5" cy="635" r="2.7" fill="#000" />
<circle cx="1212.5" cy="635" r="1.6" fill="#ffb85f" />
<circle cx="1212.5" cy="635" r="0.8" fill="#8a5a20" />
<circle cx="1212.5" cy="648" r="2.7" fill="#000" />
<circle cx="1212.5" cy="648" r="1.6" fill="#ffb85f" />
<circle cx="1212.5" cy="648" r="0.8" fill="#8a5a20" />
<circle cx="1225.6" cy="635" r="2.7" fill="#000" />
<circle cx="1225.6" cy="635" r="1.6" fill="#ffb85f" />
<circle cx="1225.6" cy="635" r="0.8" fill="#8a5a20" />
<circle cx="1225.6" cy="648" r="2.7" fill="#000" />
<circle cx="1225.6" cy="648" r="1.6" fill="#ffb85f" />
<circle cx="1225.6" cy="648" r="0.8" fill="#8a5a20" />
<circle cx="1126" cy="641" r="2.9" fill="#000" />
<circle cx="1126" cy="641" r="1.8" fill="#ffb85f" />
<circle cx="1126" cy="641" r="0.8" fill="#8a5a20" />
<polyline points="1243.7,645 1243.7,657" fill="none" stroke="#000" stroke-width="1.3" />
<polyline points="1246.9,645 1246.9,657" fill="none" stroke="#000" stroke-width="1.3" />
<circle cx="1245.3" cy="657.5" r="2.8" fill="#000" />
<circle cx="1245.3" cy="657.5" r="1.7" fill="#ffb85f" />
<circle cx="1245.3" cy="657.5" r="0.8" fill="#8a5a20" />
<polyline points="1256.8,645 1256.8,657" fill="none" stroke="#000" stroke-width="1.3" />
<polyline points="1260,645 1260,657" fill="none" stroke="#000" stroke-width="1.3" />
<circle cx="1258.4" cy="657.5" r="2.8" fill="#000" />
<circle cx="1258.4" cy="657.5" r="1.7" fill="#ffb85f" />
<circle cx="1258.4" cy="657.5" r="0.8" fill="#8a5a20" />
<polyline points="1269.9,645 1269.9,657" fill="none" stroke="#000" stroke-width="1.3" />
<polyline points="1273.1,645 1273.1,657" fill="none" stroke="#000" stroke-width="1.3" />
<circle cx="1271.5" cy="657.5" r="2.8" fill="#000" />
<circle cx="1271.5" cy="657.5" r="1.7" fill="#ffb85f" />
<circle cx="1271.5" cy="657.5" r="0.8" fill="#8a5a20" />
<polyline points="1283,645 1283,657" fill="none" stroke="#000" stroke-width="1.3" />
<polyline points="1286.2,645 1286.2,657" fill="none" stroke="#000" stroke-width="1.3" />
<circle cx="1284.6" cy="657.5" r="2.8" fill="#000" />
<circle cx="1284.6" cy="657.5" r="1.7" fill="#ffb85f" />
<circle cx="1284.6" cy="657.5" r="0.8" fill="#8a5a20" />
<polyline points="1296.1,645 1296.1,657" fill="none" stroke="#000" stroke-width="1.3" />
<polyline points="1299.3,645 1299.3,657" fill="none" stroke="#000" stroke-width="1.3" />
<circle cx="1297.7" cy="657.5" r="2.8" fill="#000" />
<circle cx="1297.7" cy="657.5" r="1.7" fill="#ffb85f" />
<circle cx="1297.7" cy="657.5" r="0.8" fill="#8a5a20" />
<polyline points="1309.2,645 1309.2,657" fill="none" stroke="#000" stroke-width="1.3" />
<polyline points="1312.4,645 1312.4,657" fill="none" stroke="#000" stroke-width="1.3" />
<circle cx="1310.8" cy="657.5" r="2.8" fill="#000" />
<circle cx="1310.8" cy="657.5" r="1.7" fill="#ffb85f" />
<circle cx="1310.8" cy="657.5" r="0.8" fill="#8a5a20" />
<polyline points="1147.5,579 1147.5,606 1153,613" fill="none" stroke="#000" stroke-width="3.4" stroke-linejoin="miter" stroke-linecap="butt"/>
<polyline points="1172,579 1172,606 1179,613" fill="none" stroke="#000" stroke-width="3.4" stroke-linejoin="miter" stroke-linecap="butt"/>
<polyline points="1245,579 1245,606 1245,613" fill="none" stroke="#000" stroke-width="3.4" stroke-linejoin="miter" stroke-linecap="butt"/>
<polyline points="1286,579 1286,606 1271,613" fill="none" stroke="#000" stroke-width="3.4" stroke-linejoin="miter" stroke-linecap="butt"/>
<polyline points="1318,579 1318,606 1297,613" fill="none" stroke="#000" stroke-width="3.4" stroke-linejoin="miter" stroke-linecap="butt"/>
<polyline points="1338,579 1338,606 1337,613" fill="none" stroke="#000" stroke-width="3.4" stroke-linejoin="miter" stroke-linecap="butt"/>
<polyline points="1147.5,579 1147.5,606 1153,613" fill="none" stroke="#c3f26b" stroke-width="1.1" stroke-linejoin="miter"/>
<polyline points="1172,579 1172,606 1179,613" fill="none" stroke="#c3f26b" stroke-width="1.1" stroke-linejoin="miter"/>
<polyline points="1245,579 1245,606 1245,613" fill="none" stroke="#c3f26b" stroke-width="1.1" stroke-linejoin="miter"/>
<polyline points="1286,579 1286,606 1271,613" fill="none" stroke="#c3f26b" stroke-width="1.1" stroke-linejoin="miter"/>
<polyline points="1318,579 1318,606 1297,613" fill="none" stroke="#c3f26b" stroke-width="1.1" stroke-linejoin="miter"/>
<polyline points="1338,579 1338,606 1337,613" fill="none" stroke="#c3f26b" stroke-width="1.1" stroke-linejoin="miter"/>
<polygon points="1132,702 1140,692 1205,692 1212,700 1205,726 1150,712" fill="#000" />
<polygon points="1222,716 1240,716 1246,740 1252,760 1228,760 1228,742 1218,736" fill="#000" />
<polygon points="1288,700 1347,700 1347,722 1330,744 1330,760 1294,760 1294,736 1286,720" fill="#000" />
<polygon points="1304,728 1313,728 1313,760 1304,760" fill="#c3f26b" />
<polygon points="1320,722 1332,718 1336,726 1324,733" fill="#c3f26b" />
<circle cx="1140.5" cy="695" r="5.2" fill="#000" />
<circle cx="1153.6" cy="695" r="5.2" fill="#000" />
<circle cx="1166.7" cy="695" r="5.2" fill="#000" />
<circle cx="1179.8" cy="695" r="5.2" fill="#000" />
<circle cx="1192.9" cy="695" r="5.2" fill="#000" />
<circle cx="1206" cy="695" r="5.2" fill="#000" />
<circle cx="1232.2" cy="695" r="5.2" fill="#000" />
<circle cx="1258.4" cy="695" r="5.2" fill="#000" />
<circle cx="1271.5" cy="695" r="5.2" fill="#000" />
<circle cx="1284.6" cy="695" r="5.2" fill="#000" />
<circle cx="1297.7" cy="695" r="5.2" fill="#000" />
<circle cx="1310.8" cy="695" r="5.2" fill="#000" />
<circle cx="1323.9" cy="695" r="5.2" fill="#000" />
<circle cx="1337" cy="695" r="5.2" fill="#000" />
<circle cx="1140.5" cy="695" r="3.7" fill="#ffb85f" />
<circle cx="1153.6" cy="695" r="3.7" fill="#ffb85f" />
<circle cx="1166.7" cy="695" r="3.7" fill="#ffb85f" />
<circle cx="1179.8" cy="695" r="3.7" fill="#ffb85f" />
<circle cx="1192.9" cy="695" r="3.7" fill="#ffb85f" />
<circle cx="1206" cy="695" r="3.7" fill="#ffb85f" />
<circle cx="1219.1" cy="695" r="3.5" fill="#f9b268" />
<circle cx="1232.2" cy="695" r="3.7" fill="#ffb85f" />
<circle cx="1245.3" cy="695" r="3.5" fill="#f9b268" />
<circle cx="1258.4" cy="695" r="3.7" fill="#ffb85f" />
<circle cx="1271.5" cy="695" r="3.7" fill="#ffb85f" />
<circle cx="1284.6" cy="695" r="3.7" fill="#ffb85f" />
<circle cx="1297.7" cy="695" r="3.7" fill="#ffb85f" />
<circle cx="1310.8" cy="695" r="3.7" fill="#ffb85f" />
<circle cx="1323.9" cy="695" r="3.7" fill="#ffb85f" />
<circle cx="1337" cy="695" r="3.7" fill="#ffb85f" />
<circle cx="1140.5" cy="707.5" r="5.2" fill="#000" />
<circle cx="1153.6" cy="707.5" r="5.2" fill="#000" />
<circle cx="1166.7" cy="707.5" r="5.2" fill="#000" />
<circle cx="1179.8" cy="707.5" r="5.2" fill="#000" />
<circle cx="1192.9" cy="707.5" r="5.2" fill="#000" />
<circle cx="1206" cy="707.5" r="5.2" fill="#000" />
<circle cx="1219.1" cy="707.5" r="5.2" fill="#000" />
<circle cx="1245.3" cy="707.5" r="5.2" fill="#000" />
<circle cx="1271.5" cy="707.5" r="5.2" fill="#000" />
<circle cx="1284.6" cy="707.5" r="5.2" fill="#000" />
<circle cx="1297.7" cy="707.5" r="5.2" fill="#000" />
<circle cx="1310.8" cy="707.5" r="5.2" fill="#000" />
<circle cx="1323.9" cy="707.5" r="5.2" fill="#000" />
<circle cx="1337" cy="707.5" r="5.2" fill="#000" />
<circle cx="1140.5" cy="707.5" r="3.7" fill="#ffb85f" />
<circle cx="1153.6" cy="707.5" r="3.7" fill="#ffb85f" />
<circle cx="1166.7" cy="707.5" r="3.7" fill="#ffb85f" />
<circle cx="1179.8" cy="707.5" r="3.7" fill="#ffb85f" />
<circle cx="1192.9" cy="707.5" r="3.7" fill="#ffb85f" />
<circle cx="1206" cy="707.5" r="3.7" fill="#ffb85f" />
<circle cx="1219.1" cy="707.5" r="3.7" fill="#ffb85f" />
<circle cx="1232.2" cy="707.5" r="3.5" fill="#f9b268" />
<circle cx="1245.3" cy="707.5" r="3.7" fill="#ffb85f" />
<circle cx="1258.4" cy="707.5" r="3.5" fill="#f9b268" />
<circle cx="1271.5" cy="707.5" r="3.7" fill="#ffb85f" />
<circle cx="1284.6" cy="707.5" r="3.7" fill="#ffb85f" />
<circle cx="1297.7" cy="707.5" r="3.7" fill="#ffb85f" />
<circle cx="1310.8" cy="707.5" r="3.7" fill="#ffb85f" />
<circle cx="1323.9" cy="707.5" r="3.7" fill="#ffb85f" />
<circle cx="1337" cy="707.5" r="3.7" fill="#ffb85f" />
<circle cx="1153.6" cy="720" r="5.2" fill="#000" />
<circle cx="1179.8" cy="720" r="5.2" fill="#000" />
<circle cx="1192.9" cy="720" r="5.2" fill="#000" />
<circle cx="1206" cy="720" r="5.2" fill="#000" />
<circle cx="1219.1" cy="720" r="5.2" fill="#000" />
<circle cx="1245.3" cy="720" r="5.2" fill="#000" />
<circle cx="1284.6" cy="720" r="5.2" fill="#000" />
<circle cx="1297.7" cy="720" r="5.2" fill="#000" />
<circle cx="1310.8" cy="720" r="5.2" fill="#000" />
<circle cx="1323.9" cy="720" r="5.2" fill="#000" />
<circle cx="1140.5" cy="720" r="3.5" fill="#f9b268" />
<circle cx="1153.6" cy="720" r="3.7" fill="#ffb85f" />
<circle cx="1166.7" cy="720" r="3.5" fill="#f9b268" />
<circle cx="1179.8" cy="720" r="3.7" fill="#ffb85f" />
<circle cx="1192.9" cy="720" r="3.7" fill="#ffb85f" />
<circle cx="1206" cy="720" r="3.7" fill="#ffb85f" />
<circle cx="1219.1" cy="720" r="3.7" fill="#ffb85f" />
<circle cx="1232.2" cy="720" r="3.5" fill="#f9b268" />
<circle cx="1245.3" cy="720" r="3.7" fill="#ffb85f" />
<circle cx="1258.4" cy="720" r="3.5" fill="#f9b268" />
<circle cx="1271.5" cy="720" r="3.5" fill="#f9b268" />
<circle cx="1284.6" cy="720" r="3.7" fill="#ffb85f" />
<circle cx="1297.7" cy="720" r="3.7" fill="#ffb85f" />
<circle cx="1310.8" cy="720" r="3.7" fill="#ffb85f" />
<circle cx="1323.9" cy="720" r="3.7" fill="#ffb85f" />
<circle cx="1337" cy="720" r="3.5" fill="#f9b268" />
<circle cx="1147" cy="701" r="2.7" fill="#000" />
<circle cx="1147" cy="701" r="1.6" fill="#ffb85f" />
<circle cx="1147" cy="701" r="0.8" fill="#8a5a20" />
<circle cx="1147" cy="714" r="2.7" fill="#000" />
<circle cx="1147" cy="714" r="1.6" fill="#ffb85f" />
<circle cx="1147" cy="714" r="0.8" fill="#8a5a20" />
<circle cx="1160.1" cy="701" r="2.7" fill="#000" />
<circle cx="1160.1" cy="701" r="1.6" fill="#ffb85f" />
<circle cx="1160.1" cy="701" r="0.8" fill="#8a5a20" />
<circle cx="1160.1" cy="714" r="2.7" fill="#000" />
<circle cx="1160.1" cy="714" r="1.6" fill="#ffb85f" />
<circle cx="1160.1" cy="714" r="0.8" fill="#8a5a20" />
<circle cx="1173.2" cy="701" r="2.7" fill="#000" />
<circle cx="1173.2" cy="701" r="1.6" fill="#ffb85f" />
<circle cx="1173.2" cy="701" r="0.8" fill="#8a5a20" />
<circle cx="1173.2" cy="714" r="2.7" fill="#000" />
<circle cx="1173.2" cy="714" r="1.6" fill="#ffb85f" />
<circle cx="1173.2" cy="714" r="0.8" fill="#8a5a20" />
<circle cx="1186.3" cy="701" r="2.7" fill="#000" />
<circle cx="1186.3" cy="701" r="1.6" fill="#ffb85f" />
<circle cx="1186.3" cy="701" r="0.8" fill="#8a5a20" />
<circle cx="1186.3" cy="714" r="2.7" fill="#000" />
<circle cx="1186.3" cy="714" r="1.6" fill="#ffb85f" />
<circle cx="1186.3" cy="714" r="0.8" fill="#8a5a20" />
<circle cx="1199.4" cy="701" r="2.7" fill="#000" />
<circle cx="1199.4" cy="701" r="1.6" fill="#ffb85f" />
<circle cx="1199.4" cy="701" r="0.8" fill="#8a5a20" />
<circle cx="1199.4" cy="714" r="2.7" fill="#000" />
<circle cx="1199.4" cy="714" r="1.6" fill="#ffb85f" />
<circle cx="1199.4" cy="714" r="0.8" fill="#8a5a20" />
<circle cx="1212.5" cy="701" r="2.7" fill="#000" />
<circle cx="1212.5" cy="701" r="1.6" fill="#ffb85f" />
<circle cx="1212.5" cy="701" r="0.8" fill="#8a5a20" />
<circle cx="1212.5" cy="714" r="2.7" fill="#000" />
<circle cx="1212.5" cy="714" r="1.6" fill="#ffb85f" />
<circle cx="1212.5" cy="714" r="0.8" fill="#8a5a20" />
<circle cx="1291.1" cy="701" r="2.7" fill="#000" />
<circle cx="1291.1" cy="701" r="1.6" fill="#ffb85f" />
<circle cx="1291.1" cy="701" r="0.8" fill="#8a5a20" />
<circle cx="1291.1" cy="714" r="2.7" fill="#000" />
<circle cx="1291.1" cy="714" r="1.6" fill="#ffb85f" />
<circle cx="1291.1" cy="714" r="0.8" fill="#8a5a20" />
<circle cx="1304.2" cy="701" r="2.7" fill="#000" />
<circle cx="1304.2" cy="701" r="1.6" fill="#ffb85f" />
<circle cx="1304.2" cy="701" r="0.8" fill="#8a5a20" />
<circle cx="1304.2" cy="714" r="2.7" fill="#000" />
<circle cx="1304.2" cy="714" r="1.6" fill="#ffb85f" />
<circle cx="1304.2" cy="714" r="0.8" fill="#8a5a20" />
<circle cx="1317.3" cy="701" r="2.7" fill="#000" />
<circle cx="1317.3" cy="701" r="1.6" fill="#ffb85f" />
<circle cx="1317.3" cy="701" r="0.8" fill="#8a5a20" />
<circle cx="1317.3" cy="714" r="2.7" fill="#000" />
<circle cx="1317.3" cy="714" r="1.6" fill="#ffb85f" />
<circle cx="1317.3" cy="714" r="0.8" fill="#8a5a20" />
<circle cx="1330.4" cy="701" r="2.7" fill="#000" />
<circle cx="1330.4" cy="701" r="1.6" fill="#ffb85f" />
<circle cx="1330.4" cy="701" r="0.8" fill="#8a5a20" />
<circle cx="1330.4" cy="714" r="2.7" fill="#000" />
<circle cx="1330.4" cy="714" r="1.6" fill="#ffb85f" />
<circle cx="1330.4" cy="714" r="0.8" fill="#8a5a20" />
<circle cx="1122" cy="711" r="2.9" fill="#000" />
<circle cx="1122" cy="711" r="1.8" fill="#ffb85f" />
<circle cx="1122" cy="711" r="0.8" fill="#8a5a20" />
<polyline points="1124,711 1134,711" fill="none" stroke="#000" stroke-width="1.2" />
<polyline points="1147,724 1147,740 1147,758" fill="none" stroke="#000" stroke-width="3.4" stroke-linejoin="miter" stroke-linecap="butt"/>
<polyline points="1185,724 1175,740 1175,758" fill="none" stroke="#000" stroke-width="3.4" stroke-linejoin="miter" stroke-linecap="butt"/>
<polyline points="1196,724 1192,740 1192,758" fill="none" stroke="#000" stroke-width="3.4" stroke-linejoin="miter" stroke-linecap="butt"/>
<polyline points="1205,724 1210,740 1210,758" fill="none" stroke="#000" stroke-width="3.4" stroke-linejoin="miter" stroke-linecap="butt"/>
<polyline points="1252,724 1247,740 1247,758" fill="none" stroke="#000" stroke-width="3.4" stroke-linejoin="miter" stroke-linecap="butt"/>
<polyline points="1336,724 1330,740 1330,758" fill="none" stroke="#000" stroke-width="3.4" stroke-linejoin="miter" stroke-linecap="butt"/>
<polyline points="1222,662 1222,678" fill="none" stroke="#000" stroke-width="3.2" stroke-linejoin="miter" stroke-linecap="butt"/>
<polyline points="1238,678 1232,684 1232,690" fill="none" stroke="#000" stroke-width="3.2" stroke-linejoin="miter" stroke-linecap="butt"/>
<polyline points="1320,678 1320,690" fill="none" stroke="#000" stroke-width="3.2" stroke-linejoin="miter" stroke-linecap="butt"/>
<polyline points="1147,724 1147,740 1147,758" fill="none" stroke="#c3f26b" stroke-width="1.1" stroke-linejoin="miter"/>
<polyline points="1185,724 1175,740 1175,758" fill="none" stroke="#c3f26b" stroke-width="1.1" stroke-linejoin="miter"/>
<polyline points="1196,724 1192,740 1192,758" fill="none" stroke="#c3f26b" stroke-width="1.1" stroke-linejoin="miter"/>
<polyline points="1205,724 1210,740 1210,758" fill="none" stroke="#c3f26b" stroke-width="1.1" stroke-linejoin="miter"/>
<polyline points="1252,724 1247,740 1247,758" fill="none" stroke="#c3f26b" stroke-width="1.1" stroke-linejoin="miter"/>
<polyline points="1336,724 1330,740 1330,758" fill="none" stroke="#c3f26b" stroke-width="1.1" stroke-linejoin="miter"/>
<polyline points="1222,662 1222,678" fill="none" stroke="#c3f26b" stroke-width="1.1" stroke-linejoin="miter"/>
<polyline points="1238,678 1232,684 1232,690" fill="none" stroke="#c3f26b" stroke-width="1.1" stroke-linejoin="miter"/>
<polyline points="1320,678 1320,690" fill="none" stroke="#c3f26b" stroke-width="1.1" stroke-linejoin="miter"/>
<polyline points="1333,662 1354,662 1366,650" fill="none" stroke="#000" stroke-width="3.2" stroke-linejoin="miter" stroke-linecap="butt"/>
<polyline points="1333,662 1354,662 1366,650" fill="none" stroke="#c3f26b" stroke-width="1.1" stroke-linejoin="miter"/>
<circle cx="1367" cy="651" r="3.1" fill="#000" />
<circle cx="1367" cy="651" r="2" fill="#ffb85f" />
<circle cx="1367" cy="651" r="0.8" fill="#8a5a20" />
<circle cx="1375" cy="659" r="3.1" fill="#000" />
<circle cx="1375" cy="659" r="2" fill="#ffb85f" />
<circle cx="1375" cy="659" r="0.8" fill="#8a5a20" />
<polyline points="1356,668 1366,658 1374,659" fill="none" stroke="#000" stroke-width="1.3" />
<rect x="1125" y="662" width="229" height="16" fill="#fcf3dc"/>
<path d="M1125 921 H1340 L1353.8 934 V1084 H1125 Z" fill="none" stroke="#fbf2dc" stroke-width="1"/>
<text x="1052" y="1012.5" font-size="23" fill="#ffdaf2" text-anchor="start" textLength="51" lengthAdjust="spacingAndGlyphs" >U205</text>
<polygon points="1132,966 1142,954 1190,954 1222,962 1236,972 1226,984 1142,984" fill="#000" />
<polygon points="1290,962 1318,954 1322,980 1294,984" fill="#000" />
<rect x="1156" y="909" width="21" height="42" fill="#000"/>
<polyline points="1170,945 1170,935 1174,931" fill="none" stroke="#c3f26b" stroke-width="4" />
<circle cx="1154.1" cy="950.5" r="5.2" fill="#000" />
<circle cx="1167.2" cy="950.5" r="5.2" fill="#000" />
<circle cx="1180.3" cy="950.5" r="5.2" fill="#000" />
<circle cx="1206.5" cy="950.5" r="5.2" fill="#000" />
<circle cx="1219.6" cy="950.5" r="5.2" fill="#000" />
<circle cx="1232.7" cy="950.5" r="5.2" fill="#000" />
<circle cx="1245.8" cy="950.5" r="5.2" fill="#000" />
<circle cx="1258.9" cy="950.5" r="5.2" fill="#000" />
<circle cx="1272" cy="950.5" r="5.2" fill="#000" />
<circle cx="1311.3" cy="950.5" r="5.2" fill="#000" />
<circle cx="1337.5" cy="950.5" r="5.2" fill="#000" />
<circle cx="1141" cy="950.5" r="3.5" fill="#f9b268" />
<circle cx="1154.1" cy="950.5" r="3.7" fill="#ffb85f" />
<circle cx="1167.2" cy="950.5" r="3.7" fill="#ffb85f" />
<circle cx="1180.3" cy="950.5" r="3.7" fill="#ffb85f" />
<circle cx="1193.4" cy="950.5" r="3.5" fill="#f9b268" />
<circle cx="1206.5" cy="950.5" r="3.7" fill="#ffb85f" />
<circle cx="1219.6" cy="950.5" r="3.7" fill="#ffb85f" />
<circle cx="1232.7" cy="950.5" r="3.7" fill="#ffb85f" />
<circle cx="1245.8" cy="950.5" r="3.7" fill="#ffb85f" />
<circle cx="1258.9" cy="950.5" r="3.7" fill="#ffb85f" />
<circle cx="1272" cy="950.5" r="3.7" fill="#ffb85f" />
<circle cx="1285.1" cy="950.5" r="3.5" fill="#f9b268" />
<circle cx="1298.2" cy="950.5" r="3.5" fill="#f9b268" />
<circle cx="1311.3" cy="950.5" r="3.7" fill="#ffb85f" />
<circle cx="1324.4" cy="950.5" r="3.5" fill="#f9b268" />
<circle cx="1337.5" cy="950.5" r="3.7" fill="#ffb85f" />
<circle cx="1141" cy="963" r="5.2" fill="#000" />
<circle cx="1154.1" cy="963" r="5.2" fill="#000" />
<circle cx="1167.2" cy="963" r="5.2" fill="#000" />
<circle cx="1180.3" cy="963" r="5.2" fill="#000" />
<circle cx="1193.4" cy="963" r="5.2" fill="#000" />
<circle cx="1206.5" cy="963" r="5.2" fill="#000" />
<circle cx="1219.6" cy="963" r="5.2" fill="#000" />
<circle cx="1245.8" cy="963" r="5.2" fill="#000" />
<circle cx="1285.1" cy="963" r="5.2" fill="#000" />
<circle cx="1298.2" cy="963" r="5.2" fill="#000" />
<circle cx="1311.3" cy="963" r="5.2" fill="#000" />
<circle cx="1324.4" cy="963" r="5.2" fill="#000" />
<circle cx="1141" cy="963" r="3.7" fill="#ffb85f" />
<circle cx="1154.1" cy="963" r="3.7" fill="#ffb85f" />
<circle cx="1167.2" cy="963" r="3.7" fill="#ffb85f" />
<circle cx="1180.3" cy="963" r="3.7" fill="#ffb85f" />
<circle cx="1193.4" cy="963" r="3.7" fill="#ffb85f" />
<circle cx="1206.5" cy="963" r="3.7" fill="#ffb85f" />
<circle cx="1219.6" cy="963" r="3.7" fill="#ffb85f" />
<circle cx="1232.7" cy="963" r="3.5" fill="#f9b268" />
<circle cx="1245.8" cy="963" r="3.7" fill="#ffb85f" />
<circle cx="1258.9" cy="963" r="3.5" fill="#f9b268" />
<circle cx="1272" cy="963" r="3.5" fill="#f9b268" />
<circle cx="1285.1" cy="963" r="3.7" fill="#ffb85f" />
<circle cx="1298.2" cy="963" r="3.7" fill="#ffb85f" />
<circle cx="1311.3" cy="963" r="3.7" fill="#ffb85f" />
<circle cx="1324.4" cy="963" r="3.7" fill="#ffb85f" />
<circle cx="1337.5" cy="963" r="3.5" fill="#f9b268" />
<circle cx="1141" cy="976" r="5.2" fill="#000" />
<circle cx="1154.1" cy="976" r="5.2" fill="#000" />
<circle cx="1167.2" cy="976" r="5.2" fill="#000" />
<circle cx="1180.3" cy="976" r="5.2" fill="#000" />
<circle cx="1193.4" cy="976" r="5.2" fill="#000" />
<circle cx="1206.5" cy="976" r="5.2" fill="#000" />
<circle cx="1232.7" cy="976" r="5.2" fill="#000" />
<circle cx="1245.8" cy="976" r="5.2" fill="#000" />
<circle cx="1258.9" cy="976" r="5.2" fill="#000" />
<circle cx="1285.1" cy="976" r="5.2" fill="#000" />
<circle cx="1298.2" cy="976" r="5.2" fill="#000" />
<circle cx="1311.3" cy="976" r="5.2" fill="#000" />
<circle cx="1337.5" cy="976" r="5.2" fill="#000" />
<circle cx="1141" cy="976" r="3.7" fill="#ffb85f" />
<circle cx="1154.1" cy="976" r="3.7" fill="#ffb85f" />
<circle cx="1167.2" cy="976" r="3.7" fill="#ffb85f" />
<circle cx="1180.3" cy="976" r="3.7" fill="#ffb85f" />
<circle cx="1193.4" cy="976" r="3.7" fill="#ffb85f" />
<circle cx="1206.5" cy="976" r="3.7" fill="#ffb85f" />
<circle cx="1219.6" cy="976" r="3.5" fill="#f9b268" />
<circle cx="1232.7" cy="976" r="3.7" fill="#ffb85f" />
<circle cx="1245.8" cy="976" r="3.7" fill="#ffb85f" />
<circle cx="1258.9" cy="976" r="3.7" fill="#ffb85f" />
<circle cx="1272" cy="976" r="3.5" fill="#f9b268" />
<circle cx="1285.1" cy="976" r="3.7" fill="#ffb85f" />
<circle cx="1298.2" cy="976" r="3.7" fill="#ffb85f" />
<circle cx="1311.3" cy="976" r="3.7" fill="#ffb85f" />
<circle cx="1324.4" cy="976" r="3.5" fill="#f9b268" />
<circle cx="1337.5" cy="976" r="3.7" fill="#ffb85f" />
<circle cx="1147.5" cy="957" r="2.7" fill="#000" />
<circle cx="1147.5" cy="957" r="1.6" fill="#ffb85f" />
<circle cx="1147.5" cy="957" r="0.8" fill="#8a5a20" />
<circle cx="1147.5" cy="970" r="2.7" fill="#000" />
<circle cx="1147.5" cy="970" r="1.6" fill="#ffb85f" />
<circle cx="1147.5" cy="970" r="0.8" fill="#8a5a20" />
<circle cx="1160.6" cy="957" r="2.7" fill="#000" />
<circle cx="1160.6" cy="957" r="1.6" fill="#ffb85f" />
<circle cx="1160.6" cy="957" r="0.8" fill="#8a5a20" />
<circle cx="1160.6" cy="970" r="2.7" fill="#000" />
<circle cx="1160.6" cy="970" r="1.6" fill="#ffb85f" />
<circle cx="1160.6" cy="970" r="0.8" fill="#8a5a20" />
<circle cx="1173.7" cy="957" r="2.7" fill="#000" />
<circle cx="1173.7" cy="957" r="1.6" fill="#ffb85f" />
<circle cx="1173.7" cy="957" r="0.8" fill="#8a5a20" />
<circle cx="1173.7" cy="970" r="2.7" fill="#000" />
<circle cx="1173.7" cy="970" r="1.6" fill="#ffb85f" />
<circle cx="1173.7" cy="970" r="0.8" fill="#8a5a20" />
<circle cx="1186.8" cy="957" r="2.7" fill="#000" />
<circle cx="1186.8" cy="957" r="1.6" fill="#ffb85f" />
<circle cx="1186.8" cy="957" r="0.8" fill="#8a5a20" />
<circle cx="1186.8" cy="970" r="2.7" fill="#000" />
<circle cx="1186.8" cy="970" r="1.6" fill="#ffb85f" />
<circle cx="1186.8" cy="970" r="0.8" fill="#8a5a20" />
<circle cx="1199.9" cy="957" r="2.7" fill="#000" />
<circle cx="1199.9" cy="957" r="1.6" fill="#ffb85f" />
<circle cx="1199.9" cy="957" r="0.8" fill="#8a5a20" />
<circle cx="1199.9" cy="970" r="2.7" fill="#000" />
<circle cx="1199.9" cy="970" r="1.6" fill="#ffb85f" />
<circle cx="1199.9" cy="970" r="0.8" fill="#8a5a20" />
<circle cx="1213" cy="957" r="2.7" fill="#000" />
<circle cx="1213" cy="957" r="1.6" fill="#ffb85f" />
<circle cx="1213" cy="957" r="0.8" fill="#8a5a20" />
<circle cx="1213" cy="970" r="2.7" fill="#000" />
<circle cx="1213" cy="970" r="1.6" fill="#ffb85f" />
<circle cx="1213" cy="970" r="0.8" fill="#8a5a20" />
<circle cx="1226.1" cy="957" r="2.7" fill="#000" />
<circle cx="1226.1" cy="957" r="1.6" fill="#ffb85f" />
<circle cx="1226.1" cy="957" r="0.8" fill="#8a5a20" />
<circle cx="1226.1" cy="970" r="2.7" fill="#000" />
<circle cx="1226.1" cy="970" r="1.6" fill="#ffb85f" />
<circle cx="1226.1" cy="970" r="0.8" fill="#8a5a20" />
<circle cx="1239.2" cy="957" r="2.7" fill="#000" />
<circle cx="1239.2" cy="957" r="1.6" fill="#ffb85f" />
<circle cx="1239.2" cy="957" r="0.8" fill="#8a5a20" />
<circle cx="1239.2" cy="970" r="2.7" fill="#000" />
<circle cx="1239.2" cy="970" r="1.6" fill="#ffb85f" />
<circle cx="1239.2" cy="970" r="0.8" fill="#8a5a20" />
<circle cx="1291.6" cy="957" r="2.7" fill="#000" />
<circle cx="1291.6" cy="957" r="1.6" fill="#ffb85f" />
<circle cx="1291.6" cy="957" r="0.8" fill="#8a5a20" />
<circle cx="1291.6" cy="970" r="2.7" fill="#000" />
<circle cx="1291.6" cy="970" r="1.6" fill="#ffb85f" />
<circle cx="1291.6" cy="970" r="0.8" fill="#8a5a20" />
<circle cx="1304.7" cy="957" r="2.7" fill="#000" />
<circle cx="1304.7" cy="957" r="1.6" fill="#ffb85f" />
<circle cx="1304.7" cy="957" r="0.8" fill="#8a5a20" />
<circle cx="1304.7" cy="970" r="2.7" fill="#000" />
<circle cx="1304.7" cy="970" r="1.6" fill="#ffb85f" />
<circle cx="1304.7" cy="970" r="0.8" fill="#8a5a20" />
<circle cx="1317.8" cy="957" r="2.7" fill="#000" />
<circle cx="1317.8" cy="957" r="1.6" fill="#ffb85f" />
<circle cx="1317.8" cy="957" r="0.8" fill="#8a5a20" />
<circle cx="1317.8" cy="970" r="2.7" fill="#000" />
<circle cx="1317.8" cy="970" r="1.6" fill="#ffb85f" />
<circle cx="1317.8" cy="970" r="0.8" fill="#8a5a20" />
<circle cx="1135" cy="957" r="2.7" fill="#000" />
<circle cx="1135" cy="957" r="1.6" fill="#ffb85f" />
<circle cx="1135" cy="957" r="0.8" fill="#8a5a20" />
<circle cx="1135" cy="970" r="2.7" fill="#000" />
<circle cx="1135" cy="970" r="1.6" fill="#ffb85f" />
<circle cx="1135" cy="970" r="0.8" fill="#8a5a20" />
<polyline points="1257.4,980 1257.4,992" fill="none" stroke="#000" stroke-width="1.3" />
<polyline points="1260.6,980 1260.6,992" fill="none" stroke="#000" stroke-width="1.3" />
<circle cx="1259" cy="993" r="2.8" fill="#000" />
<circle cx="1259" cy="993" r="1.7" fill="#ffb85f" />
<circle cx="1259" cy="993" r="0.8" fill="#8a5a20" />
<polyline points="1270.4,980 1270.4,992" fill="none" stroke="#000" stroke-width="1.3" />
<polyline points="1273.6,980 1273.6,992" fill="none" stroke="#000" stroke-width="1.3" />
<circle cx="1272" cy="993" r="2.8" fill="#000" />
<circle cx="1272" cy="993" r="1.7" fill="#ffb85f" />
<circle cx="1272" cy="993" r="0.8" fill="#8a5a20" />
<polyline points="1194,908 1204,908 1206,912 1206,924" fill="none" stroke="#000" stroke-width="3.4" stroke-linejoin="miter" stroke-linecap="butt"/>
<polyline points="1264,912 1264,928 1272,936 1272,946" fill="none" stroke="#000" stroke-width="3.4" stroke-linejoin="miter" stroke-linecap="butt"/>
<polyline points="1298,912 1298,922 1311,934 1311,947" fill="none" stroke="#000" stroke-width="3.4" stroke-linejoin="miter" stroke-linecap="butt"/>
<polyline points="1347,912 1350,918 1350,938 1336,950" fill="none" stroke="#000" stroke-width="3.4" stroke-linejoin="miter" stroke-linecap="butt"/>
<polyline points="1194,908 1204,908 1206,912 1206,924" fill="none" stroke="#c3f26b" stroke-width="1.1" stroke-linejoin="miter"/>
<polyline points="1264,912 1264,928 1272,936 1272,946" fill="none" stroke="#c3f26b" stroke-width="1.1" stroke-linejoin="miter"/>
<polyline points="1298,912 1298,922 1311,934 1311,947" fill="none" stroke="#c3f26b" stroke-width="1.1" stroke-linejoin="miter"/>
<polyline points="1347,912 1350,918 1350,938 1336,950" fill="none" stroke="#c3f26b" stroke-width="1.1" stroke-linejoin="miter"/>
<circle cx="1206" cy="927" r="3.1" fill="#000" />
<circle cx="1206" cy="927" r="2" fill="#ffb85f" />
<circle cx="1206" cy="927" r="0.8" fill="#8a5a20" />
<circle cx="1349" cy="920" r="2.9" fill="#000" />
<circle cx="1349" cy="920" r="1.8" fill="#ffb85f" />
<circle cx="1349" cy="920" r="0.8" fill="#8a5a20" />
<polygon points="1134,1022 1186,1022 1186,1048 1140,1048 1132,1036" fill="#000" />
<polygon points="1196,1046 1236,1046 1236,1062 1204,1062 1200,1056" fill="#000" />
<polygon points="1306,1020 1342,1020 1342,1048 1310,1048" fill="#000" />
<circle cx="1141" cy="1030" r="5.2" fill="#000" />
<circle cx="1154.1" cy="1030" r="5.2" fill="#000" />
<circle cx="1167.2" cy="1030" r="5.2" fill="#000" />
<circle cx="1180.3" cy="1030" r="5.2" fill="#000" />
<circle cx="1193.4" cy="1030" r="5.2" fill="#000" />
<circle cx="1219.6" cy="1030" r="5.2" fill="#000" />
<circle cx="1258.9" cy="1030" r="5.2" fill="#000" />
<circle cx="1272" cy="1030" r="5.2" fill="#000" />
<circle cx="1285.1" cy="1030" r="5.2" fill="#000" />
<circle cx="1298.2" cy="1030" r="5.2" fill="#000" />
<circle cx="1311.3" cy="1030" r="5.2" fill="#000" />
<circle cx="1337.5" cy="1030" r="5.2" fill="#000" />
<circle cx="1141" cy="1030" r="3.7" fill="#ffb85f" />
<circle cx="1154.1" cy="1030" r="3.7" fill="#ffb85f" />
<circle cx="1167.2" cy="1030" r="3.7" fill="#ffb85f" />
<circle cx="1180.3" cy="1030" r="3.7" fill="#ffb85f" />
<circle cx="1193.4" cy="1030" r="3.7" fill="#ffb85f" />
<circle cx="1206.5" cy="1030" r="3.5" fill="#f9b268" />
<circle cx="1219.6" cy="1030" r="3.7" fill="#ffb85f" />
<circle cx="1232.7" cy="1030" r="3.5" fill="#f9b268" />
<circle cx="1245.8" cy="1030" r="3.5" fill="#f9b268" />
<circle cx="1258.9" cy="1030" r="3.7" fill="#ffb85f" />
<circle cx="1272" cy="1030" r="3.7" fill="#ffb85f" />
<circle cx="1285.1" cy="1030" r="3.7" fill="#ffb85f" />
<circle cx="1298.2" cy="1030" r="3.7" fill="#ffb85f" />
<circle cx="1311.3" cy="1030" r="3.7" fill="#ffb85f" />
<circle cx="1324.4" cy="1030" r="3.5" fill="#f9b268" />
<circle cx="1337.5" cy="1030" r="3.7" fill="#ffb85f" />
<circle cx="1141" cy="1042" r="5.2" fill="#000" />
<circle cx="1154.1" cy="1042" r="5.2" fill="#000" />
<circle cx="1167.2" cy="1042" r="5.2" fill="#000" />
<circle cx="1180.3" cy="1042" r="5.2" fill="#000" />
<circle cx="1206.5" cy="1042" r="5.2" fill="#000" />
<circle cx="1219.6" cy="1042" r="5.2" fill="#000" />
<circle cx="1232.7" cy="1042" r="5.2" fill="#000" />
<circle cx="1258.9" cy="1042" r="5.2" fill="#000" />
<circle cx="1272" cy="1042" r="5.2" fill="#000" />
<circle cx="1285.1" cy="1042" r="5.2" fill="#000" />
<circle cx="1298.2" cy="1042" r="5.2" fill="#000" />
<circle cx="1311.3" cy="1042" r="5.2" fill="#000" />
<circle cx="1324.4" cy="1042" r="5.2" fill="#000" />
<circle cx="1337.5" cy="1042" r="5.2" fill="#000" />
<circle cx="1141" cy="1042" r="3.7" fill="#ffb85f" />
<circle cx="1154.1" cy="1042" r="3.7" fill="#ffb85f" />
<circle cx="1167.2" cy="1042" r="3.7" fill="#ffb85f" />
<circle cx="1180.3" cy="1042" r="3.7" fill="#ffb85f" />
<circle cx="1193.4" cy="1042" r="3.5" fill="#f9b268" />
<circle cx="1206.5" cy="1042" r="3.7" fill="#ffb85f" />
<circle cx="1219.6" cy="1042" r="3.7" fill="#ffb85f" />
<circle cx="1232.7" cy="1042" r="3.7" fill="#ffb85f" />
<circle cx="1245.8" cy="1042" r="3.5" fill="#f9b268" />
<circle cx="1258.9" cy="1042" r="3.7" fill="#ffb85f" />
<circle cx="1272" cy="1042" r="3.7" fill="#ffb85f" />
<circle cx="1285.1" cy="1042" r="3.7" fill="#ffb85f" />
<circle cx="1298.2" cy="1042" r="3.7" fill="#ffb85f" />
<circle cx="1311.3" cy="1042" r="3.7" fill="#ffb85f" />
<circle cx="1324.4" cy="1042" r="3.7" fill="#ffb85f" />
<circle cx="1337.5" cy="1042" r="3.7" fill="#ffb85f" />
<circle cx="1154.1" cy="1054.5" r="5.2" fill="#000" />
<circle cx="1180.3" cy="1054.5" r="5.2" fill="#000" />
<circle cx="1206.5" cy="1054.5" r="5.2" fill="#000" />
<circle cx="1219.6" cy="1054.5" r="5.2" fill="#000" />
<circle cx="1232.7" cy="1054.5" r="5.2" fill="#000" />
<circle cx="1258.9" cy="1054.5" r="5.2" fill="#000" />
<circle cx="1285.1" cy="1054.5" r="5.2" fill="#000" />
<circle cx="1298.2" cy="1054.5" r="5.2" fill="#000" />
<circle cx="1311.3" cy="1054.5" r="5.2" fill="#000" />
<circle cx="1141" cy="1054.5" r="3.5" fill="#f9b268" />
<circle cx="1154.1" cy="1054.5" r="3.7" fill="#ffb85f" />
<circle cx="1167.2" cy="1054.5" r="3.5" fill="#f9b268" />
<circle cx="1180.3" cy="1054.5" r="3.7" fill="#ffb85f" />
<circle cx="1193.4" cy="1054.5" r="3.5" fill="#f9b268" />
<circle cx="1206.5" cy="1054.5" r="3.7" fill="#ffb85f" />
<circle cx="1219.6" cy="1054.5" r="3.7" fill="#ffb85f" />
<circle cx="1232.7" cy="1054.5" r="3.7" fill="#ffb85f" />
<circle cx="1245.8" cy="1054.5" r="3.5" fill="#f9b268" />
<circle cx="1258.9" cy="1054.5" r="3.7" fill="#ffb85f" />
<circle cx="1272" cy="1054.5" r="3.5" fill="#f9b268" />
<circle cx="1285.1" cy="1054.5" r="3.7" fill="#ffb85f" />
<circle cx="1298.2" cy="1054.5" r="3.7" fill="#ffb85f" />
<circle cx="1311.3" cy="1054.5" r="3.7" fill="#ffb85f" />
<circle cx="1324.4" cy="1054.5" r="3.5" fill="#f9b268" />
<circle cx="1337.5" cy="1054.5" r="3.5" fill="#f9b268" />
<circle cx="1147.5" cy="1024" r="2.7" fill="#000" />
<circle cx="1147.5" cy="1024" r="1.6" fill="#ffb85f" />
<circle cx="1147.5" cy="1024" r="0.8" fill="#8a5a20" />
<circle cx="1147.5" cy="1036" r="2.7" fill="#000" />
<circle cx="1147.5" cy="1036" r="1.6" fill="#ffb85f" />
<circle cx="1147.5" cy="1036" r="0.8" fill="#8a5a20" />
<circle cx="1147.5" cy="1048" r="2.7" fill="#000" />
<circle cx="1147.5" cy="1048" r="1.6" fill="#ffb85f" />
<circle cx="1147.5" cy="1048" r="0.8" fill="#8a5a20" />
<circle cx="1160.6" cy="1024" r="2.7" fill="#000" />
<circle cx="1160.6" cy="1024" r="1.6" fill="#ffb85f" />
<circle cx="1160.6" cy="1024" r="0.8" fill="#8a5a20" />
<circle cx="1160.6" cy="1036" r="2.7" fill="#000" />
<circle cx="1160.6" cy="1036" r="1.6" fill="#ffb85f" />
<circle cx="1160.6" cy="1036" r="0.8" fill="#8a5a20" />
<circle cx="1160.6" cy="1048" r="2.7" fill="#000" />
<circle cx="1160.6" cy="1048" r="1.6" fill="#ffb85f" />
<circle cx="1160.6" cy="1048" r="0.8" fill="#8a5a20" />
<circle cx="1173.7" cy="1024" r="2.7" fill="#000" />
<circle cx="1173.7" cy="1024" r="1.6" fill="#ffb85f" />
<circle cx="1173.7" cy="1024" r="0.8" fill="#8a5a20" />
<circle cx="1173.7" cy="1036" r="2.7" fill="#000" />
<circle cx="1173.7" cy="1036" r="1.6" fill="#ffb85f" />
<circle cx="1173.7" cy="1036" r="0.8" fill="#8a5a20" />
<circle cx="1173.7" cy="1048" r="2.7" fill="#000" />
<circle cx="1173.7" cy="1048" r="1.6" fill="#ffb85f" />
<circle cx="1173.7" cy="1048" r="0.8" fill="#8a5a20" />
<circle cx="1186.8" cy="1024" r="2.7" fill="#000" />
<circle cx="1186.8" cy="1024" r="1.6" fill="#ffb85f" />
<circle cx="1186.8" cy="1024" r="0.8" fill="#8a5a20" />
<circle cx="1186.8" cy="1036" r="2.7" fill="#000" />
<circle cx="1186.8" cy="1036" r="1.6" fill="#ffb85f" />
<circle cx="1186.8" cy="1036" r="0.8" fill="#8a5a20" />
<circle cx="1186.8" cy="1048" r="2.7" fill="#000" />
<circle cx="1186.8" cy="1048" r="1.6" fill="#ffb85f" />
<circle cx="1186.8" cy="1048" r="0.8" fill="#8a5a20" />
<circle cx="1291.6" cy="1024" r="2.7" fill="#000" />
<circle cx="1291.6" cy="1024" r="1.6" fill="#ffb85f" />
<circle cx="1291.6" cy="1024" r="0.8" fill="#8a5a20" />
<circle cx="1291.6" cy="1036" r="2.7" fill="#000" />
<circle cx="1291.6" cy="1036" r="1.6" fill="#ffb85f" />
<circle cx="1291.6" cy="1036" r="0.8" fill="#8a5a20" />
<circle cx="1291.6" cy="1048" r="2.7" fill="#000" />
<circle cx="1291.6" cy="1048" r="1.6" fill="#ffb85f" />
<circle cx="1291.6" cy="1048" r="0.8" fill="#8a5a20" />
<circle cx="1304.7" cy="1024" r="2.7" fill="#000" />
<circle cx="1304.7" cy="1024" r="1.6" fill="#ffb85f" />
<circle cx="1304.7" cy="1024" r="0.8" fill="#8a5a20" />
<circle cx="1304.7" cy="1036" r="2.7" fill="#000" />
<circle cx="1304.7" cy="1036" r="1.6" fill="#ffb85f" />
<circle cx="1304.7" cy="1036" r="0.8" fill="#8a5a20" />
<circle cx="1304.7" cy="1048" r="2.7" fill="#000" />
<circle cx="1304.7" cy="1048" r="1.6" fill="#ffb85f" />
<circle cx="1304.7" cy="1048" r="0.8" fill="#8a5a20" />
<circle cx="1317.8" cy="1024" r="2.7" fill="#000" />
<circle cx="1317.8" cy="1024" r="1.6" fill="#ffb85f" />
<circle cx="1317.8" cy="1024" r="0.8" fill="#8a5a20" />
<circle cx="1317.8" cy="1036" r="2.7" fill="#000" />
<circle cx="1317.8" cy="1036" r="1.6" fill="#ffb85f" />
<circle cx="1317.8" cy="1036" r="0.8" fill="#8a5a20" />
<circle cx="1317.8" cy="1048" r="2.7" fill="#000" />
<circle cx="1317.8" cy="1048" r="1.6" fill="#ffb85f" />
<circle cx="1317.8" cy="1048" r="0.8" fill="#8a5a20" />
<polyline points="1217.4,1016 1217.4,1027" fill="none" stroke="#000" stroke-width="1.3" />
<polyline points="1220.6,1016 1220.6,1027" fill="none" stroke="#000" stroke-width="1.3" />
<circle cx="1219" cy="1016" r="2.8" fill="#000" />
<circle cx="1219" cy="1016" r="1.7" fill="#ffb85f" />
<circle cx="1219" cy="1016" r="0.8" fill="#8a5a20" />
<polyline points="1230.4,1016 1230.4,1027" fill="none" stroke="#000" stroke-width="1.3" />
<polyline points="1233.6,1016 1233.6,1027" fill="none" stroke="#000" stroke-width="1.3" />
<circle cx="1232" cy="1016" r="2.8" fill="#000" />
<circle cx="1232" cy="1016" r="1.7" fill="#ffb85f" />
<circle cx="1232" cy="1016" r="0.8" fill="#8a5a20" />
<polyline points="1283.4,1016 1283.4,1027" fill="none" stroke="#000" stroke-width="1.3" />
<polyline points="1286.6,1016 1286.6,1027" fill="none" stroke="#000" stroke-width="1.3" />
<circle cx="1285" cy="1016" r="2.8" fill="#000" />
<circle cx="1285" cy="1016" r="1.7" fill="#ffb85f" />
<circle cx="1285" cy="1016" r="0.8" fill="#8a5a20" />
<polyline points="1154,1058 1130,1082 1130,1094" fill="none" stroke="#000" stroke-width="3.4" stroke-linejoin="miter" stroke-linecap="butt"/>
<polyline points="1162,1062 1149,1078 1149,1094" fill="none" stroke="#000" stroke-width="3.4" stroke-linejoin="miter" stroke-linecap="butt"/>
<polyline points="1176,1062 1198,1084 1198,1094" fill="none" stroke="#000" stroke-width="3.4" stroke-linejoin="miter" stroke-linecap="butt"/>
<polyline points="1200,1062 1207,1072 1207,1094" fill="none" stroke="#000" stroke-width="3.4" stroke-linejoin="miter" stroke-linecap="butt"/>
<polyline points="1225,1060 1225,1094" fill="none" stroke="#000" stroke-width="3.4" stroke-linejoin="miter" stroke-linecap="butt"/>
<polyline points="1252,1060 1252,1094" fill="none" stroke="#000" stroke-width="3.4" stroke-linejoin="miter" stroke-linecap="butt"/>
<polyline points="1292,1060 1283,1070 1283,1094" fill="none" stroke="#000" stroke-width="3.4" stroke-linejoin="miter" stroke-linecap="butt"/>
<polyline points="1304,1060 1304,1094" fill="none" stroke="#000" stroke-width="3.4" stroke-linejoin="miter" stroke-linecap="butt"/>
<polyline points="1336,1012 1342,1012" fill="none" stroke="#000" stroke-width="3" stroke-linejoin="miter" stroke-linecap="butt"/>
<polyline points="1154,1058 1130,1082 1130,1094" fill="none" stroke="#c3f26b" stroke-width="1.1" stroke-linejoin="miter"/>
<polyline points="1162,1062 1149,1078 1149,1094" fill="none" stroke="#c3f26b" stroke-width="1.1" stroke-linejoin="miter"/>
<polyline points="1176,1062 1198,1084 1198,1094" fill="none" stroke="#c3f26b" stroke-width="1.1" stroke-linejoin="miter"/>
<polyline points="1200,1062 1207,1072 1207,1094" fill="none" stroke="#c3f26b" stroke-width="1.1" stroke-linejoin="miter"/>
<polyline points="1225,1060 1225,1094" fill="none" stroke="#c3f26b" stroke-width="1.1" stroke-linejoin="miter"/>
<polyline points="1252,1060 1252,1094" fill="none" stroke="#c3f26b" stroke-width="1.1" stroke-linejoin="miter"/>
<polyline points="1292,1060 1283,1070 1283,1094" fill="none" stroke="#c3f26b" stroke-width="1.1" stroke-linejoin="miter"/>
<polyline points="1304,1060 1304,1094" fill="none" stroke="#c3f26b" stroke-width="1.1" stroke-linejoin="miter"/>
<polyline points="1336,1012 1342,1012" fill="none" stroke="#c3f26b" stroke-width="1" stroke-linejoin="miter"/>
<rect x="1125" y="995.5" width="229" height="16" fill="#fcf3dc"/>
<rect x="1353" y="1006" width="10" height="8" fill="#000"/>
<circle cx="1360" cy="1011" r="3.1" fill="#000" />
<circle cx="1360" cy="1011" r="2" fill="#ffb85f" />
<circle cx="1360" cy="1011" r="0.8" fill="#8a5a20" />
<circle cx="1355" cy="1019" r="2.7" fill="#000" />
<circle cx="1355" cy="1019" r="1.6" fill="#ffb85f" />
<circle cx="1355" cy="1019" r="0.8" fill="#8a5a20" />
<polyline points="1322,1010 1326,1006 1350,1006" fill="none" stroke="#000" stroke-width="2" />
<rect x="1147" y="884" width="16" height="32" fill="none" stroke="#fbf2dc" stroke-width="1"/>
<polyline points="1147,899 1163,899" fill="none" stroke="#fbf2dc" stroke-width="0.8" />
<rect x="1151.5" y="889" width="7" height="7" rx="1" fill="#f9b268"/>
<rect x="1149.5" y="901.7" width="11.1" height="11.6" rx="3.6" fill="#000"/>
<rect x="1150.8" y="903" width="8.5" height="9" rx="2.6" fill="#ffb85f"/>
<rect x="1166.5" y="884" width="16" height="32" fill="none" stroke="#fbf2dc" stroke-width="1"/>
<polyline points="1166.5,899 1182.5,899" fill="none" stroke="#fbf2dc" stroke-width="0.8" />
<rect x="1171" y="889" width="7" height="7" rx="1" fill="#f9b268"/>
<rect x="1169" y="901.7" width="11.1" height="11.6" rx="3.6" fill="#000"/>
<rect x="1170.2" y="903" width="8.5" height="9" rx="2.6" fill="#ffb85f"/>
<rect x="1186" y="884" width="16" height="32" fill="none" stroke="#fbf2dc" stroke-width="1"/>
<polyline points="1186,899 1202,899" fill="none" stroke="#fbf2dc" stroke-width="0.8" />
<rect x="1190.5" y="889" width="7" height="7" rx="1" fill="#f9b268"/>
<rect x="1188.5" y="901.7" width="11.1" height="11.6" rx="3.6" fill="#000"/>
<rect x="1189.8" y="903" width="8.5" height="9" rx="2.6" fill="#ffb85f"/>
<rect x="1256" y="884" width="16" height="32" fill="none" stroke="#fbf2dc" stroke-width="1"/>
<rect x="1260.3" y="888.5" width="7" height="7" rx="1" fill="#f9b268"/>
<rect x="1258.2" y="901.7" width="11.1" height="11.6" rx="3.6" fill="#000"/>
<rect x="1259.5" y="903" width="8.5" height="9" rx="2.6" fill="#ffb85f"/>
<rect x="1275" y="899" width="96" height="17" fill="none" stroke="#fbf2dc" stroke-width="1"/>
<polyline points="1290.5,899 1290.5,916" fill="none" stroke="#fbf2dc" stroke-width="0.8" />
<polyline points="1306.5,899 1306.5,916" fill="none" stroke="#fbf2dc" stroke-width="0.8" />
<polyline points="1322.5,899 1322.5,916" fill="none" stroke="#fbf2dc" stroke-width="0.8" />
<polyline points="1338.5,899 1338.5,916" fill="none" stroke="#fbf2dc" stroke-width="0.8" />
<polyline points="1354.5,899 1354.5,916" fill="none" stroke="#fbf2dc" stroke-width="0.8" />
<rect x="1280.3" y="904" width="7" height="7" rx="1" fill="#f9b268"/>
<rect x="1292.5" y="901.7" width="11.1" height="11.6" rx="3.6" fill="#000"/>
<rect x="1293.8" y="903" width="8.5" height="9" rx="2.6" fill="#ffb85f"/>
<rect x="1311.5" y="904" width="7" height="7" rx="1" fill="#f9b268"/>
<rect x="1324.5" y="901.7" width="11.1" height="11.6" rx="3.6" fill="#000"/>
<rect x="1325.8" y="903" width="8.5" height="9" rx="2.6" fill="#ffb85f"/>
<rect x="1341.5" y="901.7" width="11.1" height="11.6" rx="3.6" fill="#000"/>
<rect x="1342.8" y="903" width="8.5" height="9" rx="2.6" fill="#ffb85f"/>
<rect x="1359" y="904" width="7" height="7" rx="1" fill="#f9b268"/>
<polyline points="1334,907.5 1343,907.5" fill="none" stroke="#000" stroke-width="1.6" />
<text x="1307" y="896" font-size="11.5" fill="#ffdaf2" text-anchor="start" textLength="25" lengthAdjust="spacingAndGlyphs" font-weight="bold" stroke="#ffdaf2" stroke-width=".45" >C235</text>
<text x="1375.5" y="912" font-size="11.5" fill="#ffdaf2" text-anchor="start" textLength="25" lengthAdjust="spacingAndGlyphs" font-weight="bold" stroke="#ffdaf2" stroke-width=".45" opacity=".9">C237</text>
<text x="1276" y="930" font-size="11" fill="#ffdaf2" text-anchor="start" textLength="24" lengthAdjust="spacingAndGlyphs" font-weight="bold" stroke="#ffdaf2" stroke-width=".45" >C237</text>
<text x="1248" y="914" font-size="11" fill="#ffdaf2" text-anchor="start" textLength="24" lengthAdjust="spacingAndGlyphs" transform="rotate(-90 1248 914)" font-weight="bold" stroke="#ffdaf2" stroke-width=".45" >C238</text>
<text x="1161" y="880" font-size="11" fill="#ffdaf2" text-anchor="start" textLength="24" lengthAdjust="spacingAndGlyphs" transform="rotate(-90 1161 880)" font-weight="bold" stroke="#ffdaf2" stroke-width=".45" >C234</text>
<text x="1180" y="880" font-size="11" fill="#ffdaf2" text-anchor="start" textLength="24" lengthAdjust="spacingAndGlyphs" transform="rotate(-90 1180 880)" font-weight="bold" stroke="#ffdaf2" stroke-width=".45" >C240</text>
<text x="1199" y="880" font-size="11" fill="#ffdaf2" text-anchor="start" textLength="24" lengthAdjust="spacingAndGlyphs" transform="rotate(-90 1199 880)" font-weight="bold" stroke="#ffdaf2" stroke-width=".45" >C239</text>
<rect x="1090" y="950" width="28.8" height="31" fill="none" stroke="#fbf2dc" stroke-width="1"/>
<polyline points="1090,965.5 1118.8,965.5" fill="none" stroke="#fbf2dc" stroke-width="0.8" />
<polyline points="1104.5,950 1104.5,981" fill="none" stroke="#fbf2dc" stroke-width="0.8" />
<rect x="1093.5" y="954" width="7" height="7" rx="1" fill="#f9b268"/>
<rect x="1106.2" y="951.7" width="11.1" height="11.6" rx="3.6" fill="#000"/>
<rect x="1107.5" y="953" width="8.5" height="9" rx="2.6" fill="#ffb85f"/>
<rect x="1091.5" y="968.7" width="11.1" height="11.6" rx="3.6" fill="#000"/>
<rect x="1092.8" y="970" width="8.5" height="9" rx="2.6" fill="#ffb85f"/>
<rect x="1106.2" y="968.7" width="11.1" height="11.6" rx="3.6" fill="#000"/>
<rect x="1107.5" y="970" width="8.5" height="9" rx="2.6" fill="#ffb85f"/>
<polyline points="1116,958.5 1135,958.5" fill="none" stroke="#000" stroke-width="1.6" />
<polyline points="1080,972 1092,972" fill="none" stroke="#000" stroke-width="1.2" />
<polyline points="1080,976 1092,976" fill="none" stroke="#000" stroke-width="1.2" />
<text x="1055" y="962.5" font-size="11.5" fill="#ffdaf2" text-anchor="start" textLength="25" lengthAdjust="spacingAndGlyphs" font-weight="bold" stroke="#ffdaf2" stroke-width=".45" >R224</text>
<text x="1055" y="978.8" font-size="11.5" fill="#ffdaf2" text-anchor="start" textLength="25" lengthAdjust="spacingAndGlyphs" font-weight="bold" stroke="#ffdaf2" stroke-width=".45" >R225</text>
<rect x="1123" y="1091" width="15" height="30.5" fill="none" stroke="#fbf2dc" stroke-width="1"/>
<rect x="1125" y="1094.2" width="11.1" height="11.6" rx="3.6" fill="#000"/>
<rect x="1126.2" y="1095.5" width="8.5" height="9" rx="2.6" fill="#ffb85f"/>
<rect x="1127" y="1111.5" width="7" height="7" rx="1" fill="#f9b268"/>
<rect x="1141.5" y="1091" width="15" height="30.5" fill="none" stroke="#fbf2dc" stroke-width="1"/>
<rect x="1143.5" y="1094.2" width="11.1" height="11.6" rx="3.6" fill="#000"/>
<rect x="1144.8" y="1095.5" width="8.5" height="9" rx="2.6" fill="#ffb85f"/>
<rect x="1145.5" y="1111.5" width="7" height="7" rx="1" fill="#f9b268"/>
<rect x="1161.3" y="1091" width="15" height="30.5" fill="none" stroke="#fbf2dc" stroke-width="1"/>
<rect x="1163.2" y="1094.2" width="11.1" height="11.6" rx="3.6" fill="#000"/>
<rect x="1164.5" y="1095.5" width="8.5" height="9" rx="2.6" fill="#ffb85f"/>
<rect x="1165.3" y="1111.5" width="7" height="7" rx="1" fill="#f9b268"/>
<rect x="1181.3" y="1091" width="15" height="30.5" fill="none" stroke="#fbf2dc" stroke-width="1"/>
<rect x="1183.2" y="1094.2" width="11.1" height="11.6" rx="3.6" fill="#000"/>
<rect x="1184.5" y="1095.5" width="8.5" height="9" rx="2.6" fill="#ffb85f"/>
<rect x="1185.3" y="1111.5" width="7" height="7" rx="1" fill="#f9b268"/>
<rect x="1199.5" y="1091" width="15" height="30.5" fill="none" stroke="#fbf2dc" stroke-width="1"/>
<rect x="1201.5" y="1094.2" width="11.1" height="11.6" rx="3.6" fill="#000"/>
<rect x="1202.8" y="1095.5" width="8.5" height="9" rx="2.6" fill="#ffb85f"/>
<rect x="1203.5" y="1111.5" width="7" height="7" rx="1" fill="#f9b268"/>
<rect x="1218" y="1091" width="15" height="30.5" fill="none" stroke="#fbf2dc" stroke-width="1"/>
<rect x="1220" y="1094.2" width="11.1" height="11.6" rx="3.6" fill="#000"/>
<rect x="1221.2" y="1095.5" width="8.5" height="9" rx="2.6" fill="#ffb85f"/>
<rect x="1222" y="1111.5" width="7" height="7" rx="1" fill="#f9b268"/>
<rect x="1244.5" y="1091" width="15" height="30.5" fill="none" stroke="#fbf2dc" stroke-width="1"/>
<rect x="1246.5" y="1094.2" width="11.1" height="11.6" rx="3.6" fill="#000"/>
<rect x="1247.8" y="1095.5" width="8.5" height="9" rx="2.6" fill="#ffb85f"/>
<rect x="1248.5" y="1111.5" width="7" height="7" rx="1" fill="#f9b268"/>
<rect x="1276.3" y="1091" width="15" height="30.5" fill="none" stroke="#fbf2dc" stroke-width="1"/>
<rect x="1278.2" y="1094.2" width="11.1" height="11.6" rx="3.6" fill="#000"/>
<rect x="1279.5" y="1095.5" width="8.5" height="9" rx="2.6" fill="#ffb85f"/>
<rect x="1280.3" y="1111.5" width="7" height="7" rx="1" fill="#f9b268"/>
<rect x="1297" y="1091" width="15" height="30.5" fill="none" stroke="#fbf2dc" stroke-width="1"/>
<rect x="1299" y="1094.2" width="11.1" height="11.6" rx="3.6" fill="#000"/>
<rect x="1300.2" y="1095.5" width="8.5" height="9" rx="2.6" fill="#ffb85f"/>
<rect x="1301" y="1111.5" width="7" height="7" rx="1" fill="#f9b268"/>
<polyline points="1174,1100.5 1184,1100.5" fill="none" stroke="#000" stroke-width="1.6" />
<rect x="1183" y="1108.7" width="11.1" height="11.6" rx="3.6" fill="#000"/>
<rect x="1184.2" y="1110" width="8.5" height="9" rx="2.6" fill="#ffb85f"/>
<polyline points="1192,1111 1198,1105" fill="none" stroke="#000" stroke-width="1.3" />
<text x="1136" y="1157" font-size="11" fill="#ffdaf2" text-anchor="start" textLength="25" lengthAdjust="spacingAndGlyphs" transform="rotate(-90 1136 1157)" font-weight="bold" stroke="#ffdaf2" stroke-width=".45" >C242</text>
<text x="1155" y="1157" font-size="11" fill="#ffdaf2" text-anchor="start" textLength="25" lengthAdjust="spacingAndGlyphs" transform="rotate(-90 1155 1157)" font-weight="bold" stroke="#ffdaf2" stroke-width=".45" >C243</text>
<text x="1174" y="1157" font-size="11" fill="#ffdaf2" text-anchor="start" textLength="25" lengthAdjust="spacingAndGlyphs" transform="rotate(-90 1174 1157)" font-weight="bold" stroke="#ffdaf2" stroke-width=".45" >C214</text>
<text x="1193" y="1157" font-size="11" fill="#ffdaf2" text-anchor="start" textLength="25" lengthAdjust="spacingAndGlyphs" transform="rotate(-90 1193 1157)" font-weight="bold" stroke="#ffdaf2" stroke-width=".45" >C213</text>
<text x="1213" y="1157" font-size="11" fill="#ffdaf2" text-anchor="start" textLength="25" lengthAdjust="spacingAndGlyphs" transform="rotate(-90 1213 1157)" font-weight="bold" stroke="#ffdaf2" stroke-width=".45" >R252</text>
<text x="1232" y="1157" font-size="11" fill="#ffdaf2" text-anchor="start" textLength="25" lengthAdjust="spacingAndGlyphs" transform="rotate(-90 1232 1157)" font-weight="bold" stroke="#ffdaf2" stroke-width=".45" >C244</text>
<text x="1257" y="1157" font-size="11" fill="#ffdaf2" text-anchor="start" textLength="25" lengthAdjust="spacingAndGlyphs" transform="rotate(-90 1257 1157)" font-weight="bold" stroke="#ffdaf2" stroke-width=".45" >C241</text>
<text x="1288.5" y="1157" font-size="11" fill="#ffdaf2" text-anchor="start" textLength="25" lengthAdjust="spacingAndGlyphs" transform="rotate(-90 1288.5 1157)" font-weight="bold" stroke="#ffdaf2" stroke-width=".45" >C243</text>
<text x="1311" y="1157" font-size="11" fill="#ffdaf2" text-anchor="start" textLength="25" lengthAdjust="spacingAndGlyphs" transform="rotate(-90 1311 1157)" font-weight="bold" stroke="#ffdaf2" stroke-width=".45" >C245</text>
<rect x="1357.5" y="1038.8" width="32" height="15.7" fill="none" stroke="#fbf2dc" stroke-width="1"/>
<polyline points="1373.5,1038.8 1373.5,1054.5" fill="none" stroke="#fbf2dc" stroke-width="0.8" />
<rect x="1360.5" y="1041.2" width="11.1" height="11.6" rx="3.6" fill="#000"/>
<rect x="1361.8" y="1042.5" width="8.5" height="9" rx="2.6" fill="#ffb85f"/>
<rect x="1378.5" y="1043.5" width="7" height="7" rx="1" fill="#f9b268"/>
<polyline points="1342,1040 1352,1046 1360,1046" fill="none" stroke="#000" stroke-width="1.4" />
<text x="1358.8" y="1035" font-size="11.5" fill="#ffdaf2" text-anchor="start" textLength="27" lengthAdjust="spacingAndGlyphs" font-weight="bold" stroke="#ffdaf2" stroke-width=".45" >C247</text>
<circle cx="1410" cy="1046" r="7.5" fill="#000" />
<circle cx="1410" cy="1046" r="6.3" fill="#ffb85f" />
<circle cx="1402.5" cy="1061" r="7.5" fill="#000" />
<circle cx="1402.5" cy="1061" r="6.3" fill="#ffb85f" />
<circle cx="1424" cy="1065.5" r="7.5" fill="#000" />
<circle cx="1424" cy="1065.5" r="6.3" fill="#ffb85f" />
<circle cx="1407.5" cy="1086" r="7.5" fill="#000" />
<circle cx="1407.5" cy="1086" r="6.3" fill="#ffb85f" />
<circle cx="1433.8" cy="1082" r="7.5" fill="#000" />
<circle cx="1433.8" cy="1082" r="6.3" fill="#ffb85f" />
<polyline points="1403,1068 1403,1078" fill="none" stroke="#000" stroke-width="1.4" />
<polyline points="1420,1071 1416,1076" fill="none" stroke="#000" stroke-width="1.4" />
<circle cx="1402.5" cy="1075" r="2.7" fill="#000" />
<circle cx="1402.5" cy="1075" r="1.6" fill="#ffb85f" />
<circle cx="1402.5" cy="1075" r="0.8" fill="#8a5a20" />
<circle cx="1416.5" cy="1076" r="2.7" fill="#000" />
<circle cx="1416.5" cy="1076" r="1.6" fill="#ffb85f" />
<circle cx="1416.5" cy="1076" r="0.8" fill="#8a5a20" />
<text x="1367.5" y="1069.5" font-size="11.5" fill="#ffdaf2" text-anchor="start" textLength="23" lengthAdjust="spacingAndGlyphs" font-weight="bold" stroke="#ffdaf2" stroke-width=".45" >TP47</text>
<text x="1370" y="1092.5" font-size="11.5" fill="#ffdaf2" text-anchor="start" textLength="24" lengthAdjust="spacingAndGlyphs" font-weight="bold" stroke="#ffdaf2" stroke-width=".45" >TP44</text>
<text x="1417" y="1040" font-size="11" fill="#ffdaf2" text-anchor="start" textLength="24" lengthAdjust="spacingAndGlyphs" transform="rotate(-90 1417 1040)" font-weight="bold" stroke="#ffdaf2" stroke-width=".45" >TP49</text>
<text x="1432" y="1062" font-size="11" fill="#ffdaf2" text-anchor="start" textLength="24" lengthAdjust="spacingAndGlyphs" transform="rotate(-90 1432 1062)" font-weight="bold" stroke="#ffdaf2" stroke-width=".45" >TP46</text>
<text x="1438" y="1112" font-size="11" fill="#ffdaf2" text-anchor="start" textLength="24" lengthAdjust="spacingAndGlyphs" transform="rotate(-90 1438 1112)" font-weight="bold" stroke="#ffdaf2" stroke-width=".45" >TP43</text>
<rect x="1403.5" y="1095" width="14" height="30.5" fill="none" stroke="#fbf2dc" stroke-width="1"/>
<rect x="1405.2" y="1097.7" width="10.6" height="10.6" rx="1.5" fill="#000"/>
<rect x="1406.5" y="1099" width="8" height="8" rx="0.5" fill="#ffb85f"/>
<rect x="1407" y="1114.5" width="7" height="7" rx="1" fill="#f9b268"/>
<circle cx="1401" cy="1101" r="2.7" fill="#000" />
<circle cx="1401" cy="1101" r="1.6" fill="#ffb85f" />
<circle cx="1401" cy="1101" r="0.8" fill="#8a5a20" />
<polyline points="1400,1088 1400,1100" fill="none" stroke="#000" stroke-width="1.3" />
<text x="1397" y="1123" font-size="11" fill="#ffdaf2" text-anchor="start" textLength="18" lengthAdjust="spacingAndGlyphs" transform="rotate(-90 1397 1123)" font-weight="bold" stroke="#ffdaf2" stroke-width=".45" >R59</text>
<polyline points="1438,709 1457,709 1478,730 1490,730" fill="none" stroke="#000" stroke-width="4.6" stroke-linejoin="miter" stroke-linecap="butt"/>
<polyline points="1444.7,714.5 1455,714.5 1478,737.5 1490,737.5" fill="none" stroke="#000" stroke-width="4.6" stroke-linejoin="miter" stroke-linecap="butt"/>
<polyline points="1434.4,720.4 1453,720.4 1478,745 1490,745" fill="none" stroke="#000" stroke-width="4.6" stroke-linejoin="miter" stroke-linecap="butt"/>
<polyline points="1443.5,728 1451,728 1476,752.5 1490,752.5" fill="none" stroke="#000" stroke-width="4.6" stroke-linejoin="miter" stroke-linecap="butt"/>
<polyline points="1402.8,718 1420,735 1451,735 1476,760 1490,760" fill="none" stroke="#000" stroke-width="4.6" stroke-linejoin="miter" stroke-linecap="butt"/>
<polyline points="1410.5,718 1424,731 1434,731" fill="none" stroke="#000" stroke-width="4.6" stroke-linejoin="miter" stroke-linecap="butt"/>
<polyline points="1434.4,728.5 1440,734" fill="none" stroke="#000" stroke-width="4.6" stroke-linejoin="miter" stroke-linecap="butt"/>
<polygon points="1452,716 1478,740 1478,758 1456,736" fill="#000" />
<polyline points="1456,764.8 1464,773 1490,773" fill="none" stroke="#000" stroke-width="4.6" stroke-linejoin="miter" stroke-linecap="butt"/>
<polyline points="1445.8,769.8 1455,779.5 1490,779.5" fill="none" stroke="#000" stroke-width="4.6" stroke-linejoin="miter" stroke-linecap="butt"/>
<polyline points="1434.4,769.8 1450,786 1490,786" fill="none" stroke="#000" stroke-width="4.6" stroke-linejoin="miter" stroke-linecap="butt"/>
<polyline points="1422.5,769.8 1444,791.5 1452,791.5" fill="none" stroke="#000" stroke-width="4.6" stroke-linejoin="miter" stroke-linecap="butt"/>
<polygon points="1458,772 1478,772 1478,788 1452,788" fill="#000" />
<polyline points="1453.4,792 1459,797.5 1490,797.5" fill="none" stroke="#000" stroke-width="4.6" stroke-linejoin="miter" stroke-linecap="butt"/>
<polyline points="1436.7,798 1443,804.5 1490,804.5" fill="none" stroke="#000" stroke-width="4.6" stroke-linejoin="miter" stroke-linecap="butt"/>
<polyline points="1443.2,805.5 1449,811 1490,811" fill="none" stroke="#000" stroke-width="4.6" stroke-linejoin="miter" stroke-linecap="butt"/>
<polyline points="1449.6,811.6 1455,817.5 1490,817.5" fill="none" stroke="#000" stroke-width="4.6" stroke-linejoin="miter" stroke-linecap="butt"/>
<polygon points="1460,799 1478,799 1478,816 1460,816" fill="#000" />
<polyline points="1421,821.5 1452,821.5 1456,824.5 1490,824.5" fill="none" stroke="#000" stroke-width="4.6" stroke-linejoin="miter" stroke-linecap="butt"/>
<polyline points="1421,835 1446,835 1452,831 1490,831" fill="none" stroke="#000" stroke-width="4.6" stroke-linejoin="miter" stroke-linecap="butt"/>
<polygon points="1366.5,790 1372,776 1389,768 1389,830 1400,841 1452,841 1470,836 1478,836 1478,852 1454,869 1308,869 1308,858 1366.5,858" fill="#000" />
<polyline points="1357.6,785 1369.3,798.7 1369.3,844.4 1381.3,856.4 1452,856.4 1478,830.4 1490,830.4" fill="none" stroke="#000" stroke-width="4.6" stroke-linejoin="miter" stroke-linecap="butt"/>
<polyline points="1369.8,789 1373.6,794.8 1373.6,842.3 1384.1,852.8 1450.5,852.8 1478,828 1490,828" fill="none" stroke="#000" stroke-width="4.6" stroke-linejoin="miter" stroke-linecap="butt"/>
<polyline points="1371.3,775 1378,783.7 1378,840.2 1387,849.2 1449,849.2 1478,825.6 1490,825.6" fill="none" stroke="#000" stroke-width="4.6" stroke-linejoin="miter" stroke-linecap="butt"/>
<polyline points="1378.9,779 1382.4,784.5 1382.4,838.1 1389.9,845.6 1447.5,845.6 1478,823.2 1490,823.2" fill="none" stroke="#000" stroke-width="4.6" stroke-linejoin="miter" stroke-linecap="butt"/>
<polyline points="1385.3,770 1386.7,773.4 1386.7,836 1392.7,842 1446,842 1478,820.8 1490,820.8" fill="none" stroke="#000" stroke-width="4.6" stroke-linejoin="miter" stroke-linecap="butt"/>
<polygon points="1308,826 1340,826 1346,820 1364,820 1364,869 1308,869" fill="#000" />
<rect x="1303" y="860" width="8" height="11" fill="#000"/>
<polyline points="1342,811.6 1342,822" fill="none" stroke="#000" stroke-width="3.6" stroke-linejoin="miter" stroke-linecap="butt"/>
<polyline points="1354.6,811.6 1354.6,822" fill="none" stroke="#000" stroke-width="3.6" stroke-linejoin="miter" stroke-linecap="butt"/>
<polygon points="1478,884 1478,916 1428,966 1410,958 1410,949 1438,921 1452,921 1452,910" fill="#000" />
<polyline points="1490,881 1478,881 1445,914 1388.4,914.3" fill="none" stroke="#000" stroke-width="4.6" stroke-linejoin="miter" stroke-linecap="butt"/>
<polyline points="1490,888.4 1477,888.4 1447,918.4 1412,918 1399,925.6" fill="none" stroke="#000" stroke-width="4.6" stroke-linejoin="miter" stroke-linecap="butt"/>
<polyline points="1490,895.8 1476,895.8 1426,945.8 1426,948 1426,938 1420,938 1420,950 1414,950 1414,937 1402,937 1392.3,947.2" fill="none" stroke="#000" stroke-width="4.6" stroke-linejoin="miter" stroke-linecap="butt"/>
<polyline points="1490,903.2 1475,903.2 1413,965.2 1392.3,966" fill="none" stroke="#000" stroke-width="4.6" stroke-linejoin="miter" stroke-linecap="butt"/>
<polyline points="1490,910.6 1474,910.6 1412,972.6 1399,973.7" fill="none" stroke="#000" stroke-width="4.6" stroke-linejoin="miter" stroke-linecap="butt"/>
<polyline points="1490,918 1473,918 1405,986 1396,987.6" fill="none" stroke="#000" stroke-width="4.6" stroke-linejoin="miter" stroke-linecap="butt"/>
<polyline points="1490,925.4 1472,925.4 1402,995.4 1385,995 1377.5,998" fill="none" stroke="#000" stroke-width="4.6" stroke-linejoin="miter" stroke-linecap="butt"/>
<polyline points="1490,932.8 1471,932.8 1403,1000.8 1391.7,1001" fill="none" stroke="#000" stroke-width="4.6" stroke-linejoin="miter" stroke-linecap="butt"/>
<polyline points="1385,1013 1397,1001" fill="none" stroke="#000" stroke-width="4.6" stroke-linejoin="miter" stroke-linecap="butt"/>
<polyline points="1381.3,940.7 1392,930 1404,930 1412,924" fill="none" stroke="#000" stroke-width="4.6" stroke-linejoin="miter" stroke-linecap="butt"/>
<polyline points="1375,981.4 1375,962 1380,956 1392,956" fill="none" stroke="#000" stroke-width="4.6" stroke-linejoin="miter" stroke-linecap="butt"/>
<polyline points="1459.5,960.8 1452,953" fill="none" stroke="#000" stroke-width="3.6" stroke-linejoin="miter" stroke-linecap="butt"/>
<polyline points="1438,709 1457,709 1478,730 1490,730" fill="none" stroke="#c3f26b" stroke-width="1.4" stroke-linejoin="miter"/>
<polyline points="1444.7,714.5 1455,714.5 1478,737.5 1490,737.5" fill="none" stroke="#c3f26b" stroke-width="1.4" stroke-linejoin="miter"/>
<polyline points="1434.4,720.4 1453,720.4 1478,745 1490,745" fill="none" stroke="#c3f26b" stroke-width="1.4" stroke-linejoin="miter"/>
<polyline points="1443.5,728 1451,728 1476,752.5 1490,752.5" fill="none" stroke="#c3f26b" stroke-width="1.4" stroke-linejoin="miter"/>
<polyline points="1402.8,718 1420,735 1451,735 1476,760 1490,760" fill="none" stroke="#c3f26b" stroke-width="1.4" stroke-linejoin="miter"/>
<polyline points="1410.5,718 1424,731 1434,731" fill="none" stroke="#c3f26b" stroke-width="1.4" stroke-linejoin="miter"/>
<polyline points="1434.4,728.5 1440,734" fill="none" stroke="#c3f26b" stroke-width="1.4" stroke-linejoin="miter"/>
<polyline points="1456,764.8 1464,773 1490,773" fill="none" stroke="#c3f26b" stroke-width="1.4" stroke-linejoin="miter"/>
<polyline points="1445.8,769.8 1455,779.5 1490,779.5" fill="none" stroke="#c3f26b" stroke-width="1.4" stroke-linejoin="miter"/>
<polyline points="1434.4,769.8 1450,786 1490,786" fill="none" stroke="#c3f26b" stroke-width="1.4" stroke-linejoin="miter"/>
<polyline points="1422.5,769.8 1444,791.5 1452,791.5" fill="none" stroke="#c3f26b" stroke-width="1.4" stroke-linejoin="miter"/>
<polyline points="1453.4,792 1459,797.5 1490,797.5" fill="none" stroke="#c3f26b" stroke-width="1.4" stroke-linejoin="miter"/>
<polyline points="1436.7,798 1443,804.5 1490,804.5" fill="none" stroke="#c3f26b" stroke-width="1.4" stroke-linejoin="miter"/>
<polyline points="1443.2,805.5 1449,811 1490,811" fill="none" stroke="#c3f26b" stroke-width="1.4" stroke-linejoin="miter"/>
<polyline points="1449.6,811.6 1455,817.5 1490,817.5" fill="none" stroke="#c3f26b" stroke-width="1.4" stroke-linejoin="miter"/>
<polyline points="1421,821.5 1452,821.5 1456,824.5 1490,824.5" fill="none" stroke="#c3f26b" stroke-width="1.4" stroke-linejoin="miter"/>
<polyline points="1421,835 1446,835 1452,831 1490,831" fill="none" stroke="#c3f26b" stroke-width="1.4" stroke-linejoin="miter"/>
<polyline points="1357.6,785 1369.3,798.7 1369.3,844.4 1381.3,856.4 1452,856.4 1478,830.4 1490,830.4" fill="none" stroke="#c3f26b" stroke-width="1.4" stroke-linejoin="miter"/>
<polyline points="1369.8,789 1373.6,794.8 1373.6,842.3 1384.1,852.8 1450.5,852.8 1478,828 1490,828" fill="none" stroke="#c3f26b" stroke-width="1.4" stroke-linejoin="miter"/>
<polyline points="1371.3,775 1378,783.7 1378,840.2 1387,849.2 1449,849.2 1478,825.6 1490,825.6" fill="none" stroke="#c3f26b" stroke-width="1.4" stroke-linejoin="miter"/>
<polyline points="1378.9,779 1382.4,784.5 1382.4,838.1 1389.9,845.6 1447.5,845.6 1478,823.2 1490,823.2" fill="none" stroke="#c3f26b" stroke-width="1.4" stroke-linejoin="miter"/>
<polyline points="1385.3,770 1386.7,773.4 1386.7,836 1392.7,842 1446,842 1478,820.8 1490,820.8" fill="none" stroke="#c3f26b" stroke-width="1.4" stroke-linejoin="miter"/>
<polyline points="1312,830.5 1340,830.5" fill="none" stroke="#c3f26b" stroke-width="1.3" stroke-linejoin="miter"/>
<polyline points="1327,838 1343,838" fill="none" stroke="#c3f26b" stroke-width="1.3" stroke-linejoin="miter"/>
<polyline points="1327,845.5 1343,845.5" fill="none" stroke="#c3f26b" stroke-width="1.3" stroke-linejoin="miter"/>
<polyline points="1327,853 1343,853" fill="none" stroke="#c3f26b" stroke-width="1.3" stroke-linejoin="miter"/>
<polyline points="1348,834 1362,834" fill="none" stroke="#c3f26b" stroke-width="1.3" stroke-linejoin="miter"/>
<polyline points="1348,841.5 1362,841.5" fill="none" stroke="#c3f26b" stroke-width="1.3" stroke-linejoin="miter"/>
<polyline points="1348,849 1362,849" fill="none" stroke="#c3f26b" stroke-width="1.3" stroke-linejoin="miter"/>
<polyline points="1311,863 1452,863" fill="none" stroke="#c3f26b" stroke-width="1.3" stroke-linejoin="miter"/>
<polyline points="1313,832 1313,858 1306,864" fill="none" stroke="#c3f26b" stroke-width="1.3" stroke-linejoin="miter"/>
<polyline points="1318,836 1318,857" fill="none" stroke="#c3f26b" stroke-width="1.3" stroke-linejoin="miter"/>
<polyline points="1323,838 1323,857" fill="none" stroke="#c3f26b" stroke-width="1.3" stroke-linejoin="miter"/>
<polyline points="1342,811.6 1342,822" fill="none" stroke="#c3f26b" stroke-width="1.2" stroke-linejoin="miter"/>
<polyline points="1354.6,811.6 1354.6,822" fill="none" stroke="#c3f26b" stroke-width="1.2" stroke-linejoin="miter"/>
<polyline points="1490,881 1478,881 1445,914 1388.4,914.3" fill="none" stroke="#c3f26b" stroke-width="1.4" stroke-linejoin="miter"/>
<polyline points="1490,888.4 1477,888.4 1447,918.4 1412,918 1399,925.6" fill="none" stroke="#c3f26b" stroke-width="1.4" stroke-linejoin="miter"/>
<polyline points="1490,895.8 1476,895.8 1426,945.8 1426,948 1426,938 1420,938 1420,950 1414,950 1414,937 1402,937 1392.3,947.2" fill="none" stroke="#c3f26b" stroke-width="1.4" stroke-linejoin="miter"/>
<polyline points="1490,903.2 1475,903.2 1413,965.2 1392.3,966" fill="none" stroke="#c3f26b" stroke-width="1.4" stroke-linejoin="miter"/>
<polyline points="1490,910.6 1474,910.6 1412,972.6 1399,973.7" fill="none" stroke="#c3f26b" stroke-width="1.4" stroke-linejoin="miter"/>
<polyline points="1490,918 1473,918 1405,986 1396,987.6" fill="none" stroke="#c3f26b" stroke-width="1.4" stroke-linejoin="miter"/>
<polyline points="1490,925.4 1472,925.4 1402,995.4 1385,995 1377.5,998" fill="none" stroke="#c3f26b" stroke-width="1.4" stroke-linejoin="miter"/>
<polyline points="1490,932.8 1471,932.8 1403,1000.8 1391.7,1001" fill="none" stroke="#c3f26b" stroke-width="1.4" stroke-linejoin="miter"/>
<polyline points="1385,1013 1397,1001" fill="none" stroke="#c3f26b" stroke-width="1.4" stroke-linejoin="miter"/>
<polyline points="1381.3,940.7 1392,930 1404,930 1412,924" fill="none" stroke="#c3f26b" stroke-width="1.4" stroke-linejoin="miter"/>
<polyline points="1375,981.4 1375,962 1380,956 1392,956" fill="none" stroke="#c3f26b" stroke-width="1.4" stroke-linejoin="miter"/>
<polyline points="1459.5,960.8 1452,953" fill="none" stroke="#c3f26b" stroke-width="1.2" stroke-linejoin="miter"/>
<circle cx="1438" cy="709" r="3.2" fill="#000" />
<circle cx="1438" cy="709" r="2.1" fill="#ffb85f" />
<circle cx="1438" cy="709" r="0.8" fill="#8a5a20" />
<circle cx="1444.7" cy="714.5" r="3.2" fill="#000" />
<circle cx="1444.7" cy="714.5" r="2.1" fill="#ffb85f" />
<circle cx="1444.7" cy="714.5" r="0.8" fill="#8a5a20" />
<circle cx="1434.4" cy="720.4" r="3.2" fill="#000" />
<circle cx="1434.4" cy="720.4" r="2.1" fill="#ffb85f" />
<circle cx="1434.4" cy="720.4" r="0.8" fill="#8a5a20" />
<circle cx="1443.5" cy="728" r="3.2" fill="#000" />
<circle cx="1443.5" cy="728" r="2.1" fill="#ffb85f" />
<circle cx="1443.5" cy="728" r="0.8" fill="#8a5a20" />
<circle cx="1402.8" cy="718" r="3.2" fill="#000" />
<circle cx="1402.8" cy="718" r="2.1" fill="#ffb85f" />
<circle cx="1402.8" cy="718" r="0.8" fill="#8a5a20" />
<circle cx="1410.5" cy="718" r="3.2" fill="#000" />
<circle cx="1410.5" cy="718" r="2.1" fill="#ffb85f" />
<circle cx="1410.5" cy="718" r="0.8" fill="#8a5a20" />
<circle cx="1434.4" cy="728.5" r="3.2" fill="#000" />
<circle cx="1434.4" cy="728.5" r="2.1" fill="#ffb85f" />
<circle cx="1434.4" cy="728.5" r="0.8" fill="#8a5a20" />
<circle cx="1456" cy="764.8" r="3.2" fill="#000" />
<circle cx="1456" cy="764.8" r="2.1" fill="#ffb85f" />
<circle cx="1456" cy="764.8" r="0.8" fill="#8a5a20" />
<circle cx="1445.8" cy="769.8" r="3.2" fill="#000" />
<circle cx="1445.8" cy="769.8" r="2.1" fill="#ffb85f" />
<circle cx="1445.8" cy="769.8" r="0.8" fill="#8a5a20" />
<circle cx="1434.4" cy="769.8" r="3.2" fill="#000" />
<circle cx="1434.4" cy="769.8" r="2.1" fill="#ffb85f" />
<circle cx="1434.4" cy="769.8" r="0.8" fill="#8a5a20" />
<circle cx="1422.5" cy="769.8" r="3.2" fill="#000" />
<circle cx="1422.5" cy="769.8" r="2.1" fill="#ffb85f" />
<circle cx="1422.5" cy="769.8" r="0.8" fill="#8a5a20" />
<circle cx="1453.4" cy="792" r="3.2" fill="#000" />
<circle cx="1453.4" cy="792" r="2.1" fill="#ffb85f" />
<circle cx="1453.4" cy="792" r="0.8" fill="#8a5a20" />
<circle cx="1436.7" cy="798" r="3.2" fill="#000" />
<circle cx="1436.7" cy="798" r="2.1" fill="#ffb85f" />
<circle cx="1436.7" cy="798" r="0.8" fill="#8a5a20" />
<circle cx="1443.2" cy="805.5" r="3.2" fill="#000" />
<circle cx="1443.2" cy="805.5" r="2.1" fill="#ffb85f" />
<circle cx="1443.2" cy="805.5" r="0.8" fill="#8a5a20" />
<circle cx="1449.6" cy="811.6" r="3.2" fill="#000" />
<circle cx="1449.6" cy="811.6" r="2.1" fill="#ffb85f" />
<circle cx="1449.6" cy="811.6" r="0.8" fill="#8a5a20" />
<circle cx="1357.6" cy="785" r="3.2" fill="#000" />
<circle cx="1357.6" cy="785" r="2.1" fill="#ffb85f" />
<circle cx="1357.6" cy="785" r="0.8" fill="#8a5a20" />
<circle cx="1369.8" cy="789" r="3.2" fill="#000" />
<circle cx="1369.8" cy="789" r="2.1" fill="#ffb85f" />
<circle cx="1369.8" cy="789" r="0.8" fill="#8a5a20" />
<circle cx="1371.3" cy="775" r="3.2" fill="#000" />
<circle cx="1371.3" cy="775" r="2.1" fill="#ffb85f" />
<circle cx="1371.3" cy="775" r="0.8" fill="#8a5a20" />
<circle cx="1378.9" cy="779" r="3.2" fill="#000" />
<circle cx="1378.9" cy="779" r="2.1" fill="#ffb85f" />
<circle cx="1378.9" cy="779" r="0.8" fill="#8a5a20" />
<circle cx="1385.3" cy="770" r="3.2" fill="#000" />
<circle cx="1385.3" cy="770" r="2.1" fill="#ffb85f" />
<circle cx="1385.3" cy="770" r="0.8" fill="#8a5a20" />
<circle cx="1342" cy="811.6" r="3.2" fill="#000" />
<circle cx="1342" cy="811.6" r="2.1" fill="#ffb85f" />
<circle cx="1342" cy="811.6" r="0.8" fill="#8a5a20" />
<circle cx="1354.6" cy="811.6" r="3.2" fill="#000" />
<circle cx="1354.6" cy="811.6" r="2.1" fill="#ffb85f" />
<circle cx="1354.6" cy="811.6" r="0.8" fill="#8a5a20" />
<circle cx="1346" cy="818" r="3.2" fill="#000" />
<circle cx="1346" cy="818" r="2.1" fill="#ffb85f" />
<circle cx="1346" cy="818" r="0.8" fill="#8a5a20" />
<circle cx="1361" cy="819" r="3.2" fill="#000" />
<circle cx="1361" cy="819" r="2.1" fill="#ffb85f" />
<circle cx="1361" cy="819" r="0.8" fill="#8a5a20" />
<circle cx="1388.4" cy="914.3" r="3.2" fill="#000" />
<circle cx="1388.4" cy="914.3" r="2.1" fill="#ffb85f" />
<circle cx="1388.4" cy="914.3" r="0.8" fill="#8a5a20" />
<circle cx="1399" cy="925.6" r="3.2" fill="#000" />
<circle cx="1399" cy="925.6" r="2.1" fill="#ffb85f" />
<circle cx="1399" cy="925.6" r="0.8" fill="#8a5a20" />
<circle cx="1392.3" cy="947.2" r="3.2" fill="#000" />
<circle cx="1392.3" cy="947.2" r="2.1" fill="#ffb85f" />
<circle cx="1392.3" cy="947.2" r="0.8" fill="#8a5a20" />
<circle cx="1392.3" cy="966" r="3.2" fill="#000" />
<circle cx="1392.3" cy="966" r="2.1" fill="#ffb85f" />
<circle cx="1392.3" cy="966" r="0.8" fill="#8a5a20" />
<circle cx="1399" cy="973.7" r="3.2" fill="#000" />
<circle cx="1399" cy="973.7" r="2.1" fill="#ffb85f" />
<circle cx="1399" cy="973.7" r="0.8" fill="#8a5a20" />
<circle cx="1396" cy="987.6" r="3.2" fill="#000" />
<circle cx="1396" cy="987.6" r="2.1" fill="#ffb85f" />
<circle cx="1396" cy="987.6" r="0.8" fill="#8a5a20" />
<circle cx="1377.5" cy="998" r="3.2" fill="#000" />
<circle cx="1377.5" cy="998" r="2.1" fill="#ffb85f" />
<circle cx="1377.5" cy="998" r="0.8" fill="#8a5a20" />
<circle cx="1391.7" cy="1001" r="3.2" fill="#000" />
<circle cx="1391.7" cy="1001" r="2.1" fill="#ffb85f" />
<circle cx="1391.7" cy="1001" r="0.8" fill="#8a5a20" />
<circle cx="1385" cy="1013" r="3.2" fill="#000" />
<circle cx="1385" cy="1013" r="2.1" fill="#ffb85f" />
<circle cx="1385" cy="1013" r="0.8" fill="#8a5a20" />
<circle cx="1381.3" cy="940.7" r="3.2" fill="#000" />
<circle cx="1381.3" cy="940.7" r="2.1" fill="#ffb85f" />
<circle cx="1381.3" cy="940.7" r="0.8" fill="#8a5a20" />
<circle cx="1375" cy="981.4" r="3.2" fill="#000" />
<circle cx="1375" cy="981.4" r="2.1" fill="#ffb85f" />
<circle cx="1375" cy="981.4" r="0.8" fill="#8a5a20" />
<circle cx="1459.5" cy="960.8" r="3.2" fill="#000" />
<circle cx="1459.5" cy="960.8" r="2.1" fill="#ffb85f" />
<circle cx="1459.5" cy="960.8" r="0.8" fill="#8a5a20" />
<text x="1422" y="888" font-size="11.5" fill="#ffdaf2" text-anchor="start" textLength="25" lengthAdjust="spacingAndGlyphs" font-weight="bold" stroke="#ffdaf2" stroke-width=".45" >TP48</text>
<text x="1403" y="841" font-size="11" fill="#ffdaf2" text-anchor="start" textLength="24" lengthAdjust="spacingAndGlyphs" transform="rotate(-90 1403 841)" font-weight="bold" stroke="#ffdaf2" stroke-width=".45" >R231</text>
<rect x="1409.8" y="812.8" width="13.9" height="30.7" fill="none" stroke="#fbf2dc" stroke-width="1.2"/>
<rect x="1411.6" y="816" width="11.6" height="11.1" rx="4" fill="#000"/>
<rect x="1412.9" y="817.2" width="9" height="8.5" rx="3" fill="#ffb85f"/>
<rect x="1411.6" y="829.5" width="11.6" height="11.1" rx="4" fill="#000"/>
<rect x="1412.9" y="830.8" width="9" height="8.5" rx="3" fill="#ffb85f"/>
<path d="M1479.5 696 H1753.8 V975 H1474.5 V701 Z" fill="none" stroke="#fbf2dc" stroke-width="1.1"/>
<polygon points="1476,702 1481,702 1476,707" fill="#fbf2dc" />
<polygon points="1660.2,709.5 1667.7,702 1675.2,709.5 1667.7,717" fill="#000" />
<polygon points="1670.8,709.5 1678.3,702 1685.8,709.5 1678.3,717" fill="#000" />
<rect x="1672.7" y="703.9" width="11.2" height="11.2" fill="#000"/>
<polygon points="1681.4,709.5 1688.9,702 1696.4,709.5 1688.9,717" fill="#000" />
<polygon points="1692,709.5 1699.5,702 1707,709.5 1699.5,717" fill="#000" />
<polygon points="1702.6,709.5 1710.1,702 1717.6,709.5 1710.1,717" fill="#000" />
<rect x="1704.5" y="703.9" width="11.2" height="11.2" fill="#000"/>
<polygon points="1713.2,709.5 1720.7,702 1728.2,709.5 1720.7,717" fill="#000" />
<polygon points="1660.2,720.1 1667.7,712.6 1675.2,720.1 1667.7,727.6" fill="#000" />
<polygon points="1670.8,720.1 1678.3,712.6 1685.8,720.1 1678.3,727.6" fill="#000" />
<rect x="1672.7" y="714.5" width="11.2" height="11.2" fill="#000"/>
<polygon points="1692,720.1 1699.5,712.6 1707,720.1 1699.5,727.6" fill="#000" />
<polygon points="1702.6,720.1 1710.1,712.6 1717.6,720.1 1710.1,727.6" fill="#000" />
<rect x="1704.5" y="714.5" width="11.2" height="11.2" fill="#000"/>
<polygon points="1713.2,720.1 1720.7,712.6 1728.2,720.1 1720.7,727.6" fill="#000" />
<rect x="1715.1" y="714.5" width="11.2" height="11.2" fill="#000"/>
<polygon points="1670.8,730.7 1678.3,723.2 1685.8,730.7 1678.3,738.2" fill="#000" />
<polygon points="1681.4,730.7 1688.9,723.2 1696.4,730.7 1688.9,738.2" fill="#000" />
<polygon points="1702.6,730.7 1710.1,723.2 1717.6,730.7 1710.1,738.2" fill="#000" />
<polygon points="1713.2,730.7 1720.7,723.2 1728.2,730.7 1720.7,738.2" fill="#000" />
<polygon points="1480,741.3 1487.5,733.8 1495,741.3 1487.5,748.8" fill="#000" />
<polygon points="1490.6,741.3 1498.1,733.8 1505.6,741.3 1498.1,748.8" fill="#000" />
<polygon points="1670.8,741.3 1678.3,733.8 1685.8,741.3 1678.3,748.8" fill="#000" />
<polygon points="1681.4,741.3 1688.9,733.8 1696.4,741.3 1688.9,748.8" fill="#000" />
<rect x="1683.3" y="735.7" width="11.2" height="11.2" fill="#000"/>
<polygon points="1692,741.3 1699.5,733.8 1707,741.3 1699.5,748.8" fill="#000" />
<polygon points="1713.2,741.3 1720.7,733.8 1728.2,741.3 1720.7,748.8" fill="#000" />
<rect x="1715.1" y="735.7" width="11.2" height="11.2" fill="#000"/>
<polygon points="1723.8,741.3 1731.3,733.8 1738.8,741.3 1731.3,748.8" fill="#000" />
<polygon points="1734.4,741.3 1741.9,733.8 1749.4,741.3 1741.9,748.8" fill="#000" />
<polygon points="1490.6,751.9 1498.1,744.4 1505.6,751.9 1498.1,759.4" fill="#000" />
<rect x="1492.5" y="746.3" width="11.2" height="11.2" fill="#000"/>
<polygon points="1501.2,751.9 1508.7,744.4 1516.2,751.9 1508.7,759.4" fill="#000" />
<rect x="1503.1" y="746.3" width="11.2" height="11.2" fill="#000"/>
<polygon points="1511.8,751.9 1519.3,744.4 1526.8,751.9 1519.3,759.4" fill="#000" />
<polygon points="1713.2,751.9 1720.7,744.4 1728.2,751.9 1720.7,759.4" fill="#000" />
<polygon points="1734.4,751.9 1741.9,744.4 1749.4,751.9 1741.9,759.4" fill="#000" />
<polygon points="1480,762.5 1487.5,755 1495,762.5 1487.5,770" fill="#000" />
<polygon points="1490.6,762.5 1498.1,755 1505.6,762.5 1498.1,770" fill="#000" />
<rect x="1492.5" y="756.9" width="11.2" height="11.2" fill="#000"/>
<polygon points="1501.2,762.5 1508.7,755 1516.2,762.5 1508.7,770" fill="#000" />
<rect x="1503.1" y="756.9" width="11.2" height="11.2" fill="#000"/>
<polygon points="1511.8,762.5 1519.3,755 1526.8,762.5 1519.3,770" fill="#000" />
<polygon points="1522.4,762.5 1529.9,755 1537.4,762.5 1529.9,770" fill="#000" />
<polygon points="1713.2,762.5 1720.7,755 1728.2,762.5 1720.7,770" fill="#000" />
<rect x="1715.1" y="756.9" width="11.2" height="11.2" fill="#000"/>
<polygon points="1723.8,762.5 1731.3,755 1738.8,762.5 1731.3,770" fill="#000" />
<polygon points="1480,773.1 1487.5,765.6 1495,773.1 1487.5,780.6" fill="#000" />
<polygon points="1490.6,773.1 1498.1,765.6 1505.6,773.1 1498.1,780.6" fill="#000" />
<rect x="1492.5" y="767.5" width="11.2" height="11.2" fill="#000"/>
<polygon points="1501.2,773.1 1508.7,765.6 1516.2,773.1 1508.7,780.6" fill="#000" />
<polygon points="1511.8,773.1 1519.3,765.6 1526.8,773.1 1519.3,780.6" fill="#000" />
<rect x="1513.7" y="767.5" width="11.2" height="11.2" fill="#000"/>
<polygon points="1522.4,773.1 1529.9,765.6 1537.4,773.1 1529.9,780.6" fill="#000" />
<rect x="1524.3" y="767.5" width="11.2" height="11.2" fill="#000"/>
<polygon points="1713.2,773.1 1720.7,765.6 1728.2,773.1 1720.7,780.6" fill="#000" />
<polygon points="1723.8,773.1 1731.3,765.6 1738.8,773.1 1731.3,780.6" fill="#000" />
<rect x="1725.7" y="767.5" width="11.2" height="11.2" fill="#000"/>
<polygon points="1734.4,773.1 1741.9,765.6 1749.4,773.1 1741.9,780.6" fill="#000" />
<polygon points="1501.2,783.7 1508.7,776.2 1516.2,783.7 1508.7,791.2" fill="#000" />
<rect x="1503.1" y="778.1" width="11.2" height="11.2" fill="#000"/>
<polygon points="1511.8,783.7 1519.3,776.2 1526.8,783.7 1519.3,791.2" fill="#000" />
<rect x="1513.7" y="778.1" width="11.2" height="11.2" fill="#000"/>
<polygon points="1522.4,783.7 1529.9,776.2 1537.4,783.7 1529.9,791.2" fill="#000" />
<rect x="1524.3" y="778.1" width="11.2" height="11.2" fill="#000"/>
<polygon points="1713.2,783.7 1720.7,776.2 1728.2,783.7 1720.7,791.2" fill="#000" />
<polygon points="1723.8,783.7 1731.3,776.2 1738.8,783.7 1731.3,791.2" fill="#000" />
<rect x="1725.7" y="778.1" width="11.2" height="11.2" fill="#000"/>
<polygon points="1734.4,783.7 1741.9,776.2 1749.4,783.7 1741.9,791.2" fill="#000" />
<polygon points="1480,794.3 1487.5,786.8 1495,794.3 1487.5,801.8" fill="#000" />
<polygon points="1490.6,794.3 1498.1,786.8 1505.6,794.3 1498.1,801.8" fill="#000" />
<rect x="1492.5" y="788.7" width="11.2" height="11.2" fill="#000"/>
<polygon points="1501.2,794.3 1508.7,786.8 1516.2,794.3 1508.7,801.8" fill="#000" />
<rect x="1503.1" y="788.7" width="11.2" height="11.2" fill="#000"/>
<polygon points="1511.8,794.3 1519.3,786.8 1526.8,794.3 1519.3,801.8" fill="#000" />
<rect x="1513.7" y="788.7" width="11.2" height="11.2" fill="#000"/>
<polygon points="1522.4,794.3 1529.9,786.8 1537.4,794.3 1529.9,801.8" fill="#000" />
<polygon points="1533,794.3 1540.5,786.8 1548,794.3 1540.5,801.8" fill="#000" />
<polygon points="1480,804.9 1487.5,797.4 1495,804.9 1487.5,812.4" fill="#000" />
<rect x="1481.9" y="799.3" width="11.2" height="11.2" fill="#000"/>
<polygon points="1490.6,804.9 1498.1,797.4 1505.6,804.9 1498.1,812.4" fill="#000" />
<rect x="1492.5" y="799.3" width="11.2" height="11.2" fill="#000"/>
<polygon points="1501.2,804.9 1508.7,797.4 1516.2,804.9 1508.7,812.4" fill="#000" />
<rect x="1503.1" y="799.3" width="11.2" height="11.2" fill="#000"/>
<polygon points="1511.8,804.9 1519.3,797.4 1526.8,804.9 1519.3,812.4" fill="#000" />
<polygon points="1522.4,804.9 1529.9,797.4 1537.4,804.9 1529.9,812.4" fill="#000" />
<polygon points="1480,815.5 1487.5,808 1495,815.5 1487.5,823" fill="#000" />
<polygon points="1490.6,815.5 1498.1,808 1505.6,815.5 1498.1,823" fill="#000" />
<rect x="1492.5" y="809.9" width="11.2" height="11.2" fill="#000"/>
<polygon points="1501.2,815.5 1508.7,808 1516.2,815.5 1508.7,823" fill="#000" />
<polygon points="1511.8,815.5 1519.3,808 1526.8,815.5 1519.3,823" fill="#000" />
<polygon points="1501.2,826.1 1508.7,818.6 1516.2,826.1 1508.7,833.6" fill="#000" />
<polygon points="1713.2,826.1 1720.7,818.6 1728.2,826.1 1720.7,833.6" fill="#000" />
<polygon points="1723.8,826.1 1731.3,818.6 1738.8,826.1 1731.3,833.6" fill="#000" />
<rect x="1725.7" y="820.5" width="11.2" height="11.2" fill="#000"/>
<polygon points="1734.4,826.1 1741.9,818.6 1749.4,826.1 1741.9,833.6" fill="#000" />
<polygon points="1490.6,836.7 1498.1,829.2 1505.6,836.7 1498.1,844.2" fill="#000" />
<polygon points="1702.6,836.7 1710.1,829.2 1717.6,836.7 1710.1,844.2" fill="#000" />
<polygon points="1713.2,836.7 1720.7,829.2 1728.2,836.7 1720.7,844.2" fill="#000" />
<rect x="1715.1" y="831.1" width="11.2" height="11.2" fill="#000"/>
<polygon points="1723.8,836.7 1731.3,829.2 1738.8,836.7 1731.3,844.2" fill="#000" />
<rect x="1725.7" y="831.1" width="11.2" height="11.2" fill="#000"/>
<polygon points="1734.4,836.7 1741.9,829.2 1749.4,836.7 1741.9,844.2" fill="#000" />
<polygon points="1480,847.3 1487.5,839.8 1495,847.3 1487.5,854.8" fill="#000" />
<polygon points="1490.6,847.3 1498.1,839.8 1505.6,847.3 1498.1,854.8" fill="#000" />
<polygon points="1692,847.3 1699.5,839.8 1707,847.3 1699.5,854.8" fill="#000" />
<polygon points="1702.6,847.3 1710.1,839.8 1717.6,847.3 1710.1,854.8" fill="#000" />
<rect x="1704.5" y="841.7" width="11.2" height="11.2" fill="#000"/>
<polygon points="1713.2,847.3 1720.7,839.8 1728.2,847.3 1720.7,854.8" fill="#000" />
<rect x="1715.1" y="841.7" width="11.2" height="11.2" fill="#000"/>
<polygon points="1723.8,847.3 1731.3,839.8 1738.8,847.3 1731.3,854.8" fill="#000" />
<polygon points="1734.4,847.3 1741.9,839.8 1749.4,847.3 1741.9,854.8" fill="#000" />
<rect x="1736.3" y="841.7" width="11.2" height="11.2" fill="#000"/>
<polygon points="1480,857.9 1487.5,850.4 1495,857.9 1487.5,865.4" fill="#000" />
<polygon points="1681.4,857.9 1688.9,850.4 1696.4,857.9 1688.9,865.4" fill="#000" />
<polygon points="1692,857.9 1699.5,850.4 1707,857.9 1699.5,865.4" fill="#000" />
<rect x="1693.9" y="852.3" width="11.2" height="11.2" fill="#000"/>
<polygon points="1702.6,857.9 1710.1,850.4 1717.6,857.9 1710.1,865.4" fill="#000" />
<rect x="1704.5" y="852.3" width="11.2" height="11.2" fill="#000"/>
<polygon points="1713.2,857.9 1720.7,850.4 1728.2,857.9 1720.7,865.4" fill="#000" />
<polygon points="1734.4,857.9 1741.9,850.4 1749.4,857.9 1741.9,865.4" fill="#000" />
<polygon points="1480,868.5 1487.5,861 1495,868.5 1487.5,876" fill="#000" />
<polygon points="1681.4,868.5 1688.9,861 1696.4,868.5 1688.9,876" fill="#000" />
<polygon points="1692,868.5 1699.5,861 1707,868.5 1699.5,876" fill="#000" />
<rect x="1693.9" y="862.9" width="11.2" height="11.2" fill="#000"/>
<polygon points="1702.6,868.5 1710.1,861 1717.6,868.5 1710.1,876" fill="#000" />
<polygon points="1713.2,868.5 1720.7,861 1728.2,868.5 1720.7,876" fill="#000" />
<rect x="1715.1" y="862.9" width="11.2" height="11.2" fill="#000"/>
<polygon points="1723.8,868.5 1731.3,861 1738.8,868.5 1731.3,876" fill="#000" />
<rect x="1725.7" y="862.9" width="11.2" height="11.2" fill="#000"/>
<polygon points="1734.4,868.5 1741.9,861 1749.4,868.5 1741.9,876" fill="#000" />
<rect x="1736.3" y="862.9" width="11.2" height="11.2" fill="#000"/>
<polygon points="1480,879.1 1487.5,871.6 1495,879.1 1487.5,886.6" fill="#000" />
<polygon points="1501.2,879.1 1508.7,871.6 1516.2,879.1 1508.7,886.6" fill="#000" />
<polygon points="1692,879.1 1699.5,871.6 1707,879.1 1699.5,886.6" fill="#000" />
<polygon points="1713.2,879.1 1720.7,871.6 1728.2,879.1 1720.7,886.6" fill="#000" />
<polygon points="1723.8,879.1 1731.3,871.6 1738.8,879.1 1731.3,886.6" fill="#000" />
<rect x="1725.7" y="873.5" width="11.2" height="11.2" fill="#000"/>
<polygon points="1734.4,879.1 1741.9,871.6 1749.4,879.1 1741.9,886.6" fill="#000" />
<polygon points="1480,889.7 1487.5,882.2 1495,889.7 1487.5,897.2" fill="#000" />
<polygon points="1490.6,889.7 1498.1,882.2 1505.6,889.7 1498.1,897.2" fill="#000" />
<polygon points="1511.8,889.7 1519.3,882.2 1526.8,889.7 1519.3,897.2" fill="#000" />
<polygon points="1692,889.7 1699.5,882.2 1707,889.7 1699.5,897.2" fill="#000" />
<polygon points="1702.6,889.7 1710.1,882.2 1717.6,889.7 1710.1,897.2" fill="#000" />
<polygon points="1723.8,889.7 1731.3,882.2 1738.8,889.7 1731.3,897.2" fill="#000" />
<polygon points="1734.4,889.7 1741.9,882.2 1749.4,889.7 1741.9,897.2" fill="#000" />
<rect x="1736.3" y="884.1" width="11.2" height="11.2" fill="#000"/>
<polygon points="1490.6,900.3 1498.1,892.8 1505.6,900.3 1498.1,907.8" fill="#000" />
<rect x="1492.5" y="894.7" width="11.2" height="11.2" fill="#000"/>
<polygon points="1501.2,900.3 1508.7,892.8 1516.2,900.3 1508.7,907.8" fill="#000" />
<polygon points="1511.8,900.3 1519.3,892.8 1526.8,900.3 1519.3,907.8" fill="#000" />
<rect x="1513.7" y="894.7" width="11.2" height="11.2" fill="#000"/>
<polygon points="1522.4,900.3 1529.9,892.8 1537.4,900.3 1529.9,907.8" fill="#000" />
<polygon points="1702.6,900.3 1710.1,892.8 1717.6,900.3 1710.1,907.8" fill="#000" />
<rect x="1704.5" y="894.7" width="11.2" height="11.2" fill="#000"/>
<polygon points="1713.2,900.3 1720.7,892.8 1728.2,900.3 1720.7,907.8" fill="#000" />
<polygon points="1723.8,900.3 1731.3,892.8 1738.8,900.3 1731.3,907.8" fill="#000" />
<rect x="1725.7" y="894.7" width="11.2" height="11.2" fill="#000"/>
<polygon points="1734.4,900.3 1741.9,892.8 1749.4,900.3 1741.9,907.8" fill="#000" />
<rect x="1736.3" y="894.7" width="11.2" height="11.2" fill="#000"/>
<polygon points="1480,910.9 1487.5,903.4 1495,910.9 1487.5,918.4" fill="#000" />
<polygon points="1490.6,910.9 1498.1,903.4 1505.6,910.9 1498.1,918.4" fill="#000" />
<polygon points="1501.2,910.9 1508.7,903.4 1516.2,910.9 1508.7,918.4" fill="#000" />
<rect x="1503.1" y="905.3" width="11.2" height="11.2" fill="#000"/>
<polygon points="1522.4,910.9 1529.9,903.4 1537.4,910.9 1529.9,918.4" fill="#000" />
<polygon points="1702.6,910.9 1710.1,903.4 1717.6,910.9 1710.1,918.4" fill="#000" />
<polygon points="1713.2,910.9 1720.7,903.4 1728.2,910.9 1720.7,918.4" fill="#000" />
<rect x="1715.1" y="905.3" width="11.2" height="11.2" fill="#000"/>
<polygon points="1723.8,910.9 1731.3,903.4 1738.8,910.9 1731.3,918.4" fill="#000" />
<rect x="1725.7" y="905.3" width="11.2" height="11.2" fill="#000"/>
<polygon points="1734.4,910.9 1741.9,903.4 1749.4,910.9 1741.9,918.4" fill="#000" />
<polygon points="1480,921.5 1487.5,914 1495,921.5 1487.5,929" fill="#000" />
<polygon points="1490.6,921.5 1498.1,914 1505.6,921.5 1498.1,929" fill="#000" />
<rect x="1492.5" y="915.9" width="11.2" height="11.2" fill="#000"/>
<polygon points="1501.2,921.5 1508.7,914 1516.2,921.5 1508.7,929" fill="#000" />
<rect x="1503.1" y="915.9" width="11.2" height="11.2" fill="#000"/>
<polygon points="1511.8,921.5 1519.3,914 1526.8,921.5 1519.3,929" fill="#000" />
<rect x="1513.7" y="915.9" width="11.2" height="11.2" fill="#000"/>
<polygon points="1522.4,921.5 1529.9,914 1537.4,921.5 1529.9,929" fill="#000" />
<polygon points="1480,932.1 1487.5,924.6 1495,932.1 1487.5,939.6" fill="#000" />
<rect x="1481.9" y="926.5" width="11.2" height="11.2" fill="#000"/>
<polygon points="1490.6,932.1 1498.1,924.6 1505.6,932.1 1498.1,939.6" fill="#000" />
<rect x="1492.5" y="926.5" width="11.2" height="11.2" fill="#000"/>
<polygon points="1501.2,932.1 1508.7,924.6 1516.2,932.1 1508.7,939.6" fill="#000" />
<rect x="1503.1" y="926.5" width="11.2" height="11.2" fill="#000"/>
<polygon points="1511.8,932.1 1519.3,924.6 1526.8,932.1 1519.3,939.6" fill="#000" />
<polygon points="1522.4,932.1 1529.9,924.6 1537.4,932.1 1529.9,939.6" fill="#000" />
<rect x="1524.3" y="926.5" width="11.2" height="11.2" fill="#000"/>
<polygon points="1480,942.7 1487.5,935.2 1495,942.7 1487.5,950.2" fill="#000" />
<polygon points="1490.6,942.7 1498.1,935.2 1505.6,942.7 1498.1,950.2" fill="#000" />
<rect x="1492.5" y="937.1" width="11.2" height="11.2" fill="#000"/>
<polygon points="1501.2,942.7 1508.7,935.2 1516.2,942.7 1508.7,950.2" fill="#000" />
<polygon points="1511.8,942.7 1519.3,935.2 1526.8,942.7 1519.3,950.2" fill="#000" />
<rect x="1513.7" y="937.1" width="11.2" height="11.2" fill="#000"/>
<polygon points="1522.4,942.7 1529.9,935.2 1537.4,942.7 1529.9,950.2" fill="#000" />
<rect x="1524.3" y="937.1" width="11.2" height="11.2" fill="#000"/>
<polygon points="1533,942.7 1540.5,935.2 1548,942.7 1540.5,950.2" fill="#000" />
<polygon points="1681.4,942.7 1688.9,935.2 1696.4,942.7 1688.9,950.2" fill="#000" />
<polygon points="1692,942.7 1699.5,935.2 1707,942.7 1699.5,950.2" fill="#000" />
<polygon points="1490.6,953.3 1498.1,945.8 1505.6,953.3 1498.1,960.8" fill="#000" />
<polygon points="1501.2,953.3 1508.7,945.8 1516.2,953.3 1508.7,960.8" fill="#000" />
<rect x="1503.1" y="947.7" width="11.2" height="11.2" fill="#000"/>
<polygon points="1511.8,953.3 1519.3,945.8 1526.8,953.3 1519.3,960.8" fill="#000" />
<rect x="1513.7" y="947.7" width="11.2" height="11.2" fill="#000"/>
<polygon points="1522.4,953.3 1529.9,945.8 1537.4,953.3 1529.9,960.8" fill="#000" />
<rect x="1524.3" y="947.7" width="11.2" height="11.2" fill="#000"/>
<polygon points="1533,953.3 1540.5,945.8 1548,953.3 1540.5,960.8" fill="#000" />
<polygon points="1543.6,953.3 1551.1,945.8 1558.6,953.3 1551.1,960.8" fill="#000" />
<polygon points="1660.2,953.3 1667.7,945.8 1675.2,953.3 1667.7,960.8" fill="#000" />
<polygon points="1670.8,953.3 1678.3,945.8 1685.8,953.3 1678.3,960.8" fill="#000" />
<rect x="1672.7" y="947.7" width="11.2" height="11.2" fill="#000"/>
<polygon points="1681.4,953.3 1688.9,945.8 1696.4,953.3 1688.9,960.8" fill="#000" />
<rect x="1683.3" y="947.7" width="11.2" height="11.2" fill="#000"/>
<polygon points="1692,953.3 1699.5,945.8 1707,953.3 1699.5,960.8" fill="#000" />
<rect x="1693.9" y="947.7" width="11.2" height="11.2" fill="#000"/>
<polygon points="1702.6,953.3 1710.1,945.8 1717.6,953.3 1710.1,960.8" fill="#000" />
<polygon points="1480,963.9 1487.5,956.4 1495,963.9 1487.5,971.4" fill="#000" />
<polygon points="1490.6,963.9 1498.1,956.4 1505.6,963.9 1498.1,971.4" fill="#000" />
<polygon points="1511.8,963.9 1519.3,956.4 1526.8,963.9 1519.3,971.4" fill="#000" />
<polygon points="1522.4,963.9 1529.9,956.4 1537.4,963.9 1529.9,971.4" fill="#000" />
<polygon points="1533,963.9 1540.5,956.4 1548,963.9 1540.5,971.4" fill="#000" />
<rect x="1534.9" y="958.3" width="11.2" height="11.2" fill="#000"/>
<polygon points="1543.6,963.9 1551.1,956.4 1558.6,963.9 1551.1,971.4" fill="#000" />
<polygon points="1660.2,963.9 1667.7,956.4 1675.2,963.9 1667.7,971.4" fill="#000" />
<polygon points="1670.8,963.9 1678.3,956.4 1685.8,963.9 1678.3,971.4" fill="#000" />
<polygon points="1702.6,963.9 1710.1,956.4 1717.6,963.9 1710.1,971.4" fill="#000" />
<polygon points="1593.5,879.1 1599.9,881.2 1599.9,889.7 1593.5,891.8 1589.3,885.5" fill="#000" />
<polygon points="1625.3,868.5 1635.9,864.3 1642.3,872.7 1631.7,881.2" fill="#000" />
<path d="M1667.7 709.5 L1662.4 704.2" stroke="#000" stroke-width="7.4" stroke-linecap="round"/>
<path d="M1678.3 709.5 L1683.6 714.8" stroke="#000" stroke-width="7.4" stroke-linecap="round"/>
<path d="M1688.9 709.5 L1683.6 714.8" stroke="#000" stroke-width="7.4" stroke-linecap="round"/>
<path d="M1699.5 709.5 L1704.8 704.2" stroke="#000" stroke-width="7.4" stroke-linecap="round"/>
<path d="M1710.1 709.5 L1704.8 704.2" stroke="#000" stroke-width="7.4" stroke-linecap="round"/>
<path d="M1720.7 709.5 L1726 714.8" stroke="#000" stroke-width="7.4" stroke-linecap="round"/>
<path d="M1667.7 720.1 L1673 714.8" stroke="#000" stroke-width="7.4" stroke-linecap="round"/>
<path d="M1678.3 720.1 L1673 714.8" stroke="#000" stroke-width="7.4" stroke-linecap="round"/>
<path d="M1699.5 720.1 L1694.2 725.4" stroke="#000" stroke-width="7.4" stroke-linecap="round"/>
<path d="M1710.1 720.1 L1715.4 714.8" stroke="#000" stroke-width="7.4" stroke-linecap="round"/>
<path d="M1720.7 720.1 L1715.4 714.8" stroke="#000" stroke-width="7.4" stroke-linecap="round"/>
<path d="M1678.3 730.7 L1673 725.4" stroke="#000" stroke-width="7.4" stroke-linecap="round"/>
<path d="M1688.9 730.7 L1694.2 736" stroke="#000" stroke-width="7.4" stroke-linecap="round"/>
<path d="M1710.1 730.7 L1715.4 725.4" stroke="#000" stroke-width="7.4" stroke-linecap="round"/>
<path d="M1720.7 730.7 L1715.4 725.4" stroke="#000" stroke-width="7.4" stroke-linecap="round"/>
<path d="M1487.5 741.3 L1492.8 746.6" stroke="#000" stroke-width="7.4" stroke-linecap="round"/>
<path d="M1498.1 741.3 L1492.8 746.6" stroke="#000" stroke-width="7.4" stroke-linecap="round"/>
<path d="M1678.3 741.3 L1683.6 736" stroke="#000" stroke-width="7.4" stroke-linecap="round"/>
<path d="M1688.9 741.3 L1683.6 736" stroke="#000" stroke-width="7.4" stroke-linecap="round"/>
<path d="M1699.5 741.3 L1704.8 746.6" stroke="#000" stroke-width="7.4" stroke-linecap="round"/>
<path d="M1720.7 741.3 L1726 736" stroke="#000" stroke-width="7.4" stroke-linecap="round"/>
<path d="M1731.3 741.3 L1726 736" stroke="#000" stroke-width="7.4" stroke-linecap="round"/>
<path d="M1741.9 741.3 L1747.2 746.6" stroke="#000" stroke-width="7.4" stroke-linecap="round"/>
<path d="M1498.1 751.9 L1492.8 757.2" stroke="#000" stroke-width="7.4" stroke-linecap="round"/>
<path d="M1508.7 751.9 L1514 746.6" stroke="#000" stroke-width="7.4" stroke-linecap="round"/>
<path d="M1519.3 751.9 L1514 746.6" stroke="#000" stroke-width="7.4" stroke-linecap="round"/>
<path d="M1720.7 751.9 L1726 746.6" stroke="#000" stroke-width="7.4" stroke-linecap="round"/>
<path d="M1741.9 751.9 L1747.2 757.2" stroke="#000" stroke-width="7.4" stroke-linecap="round"/>
<path d="M1487.5 762.5 L1482.2 757.2" stroke="#000" stroke-width="7.4" stroke-linecap="round"/>
<path d="M1498.1 762.5 L1503.4 767.8" stroke="#000" stroke-width="7.4" stroke-linecap="round"/>
<path d="M1508.7 762.5 L1503.4 767.8" stroke="#000" stroke-width="7.4" stroke-linecap="round"/>
<path d="M1519.3 762.5 L1524.6 757.2" stroke="#000" stroke-width="7.4" stroke-linecap="round"/>
<path d="M1529.9 762.5 L1524.6 757.2" stroke="#000" stroke-width="7.4" stroke-linecap="round"/>
<path d="M1720.7 762.5 L1715.4 767.8" stroke="#000" stroke-width="7.4" stroke-linecap="round"/>
<path d="M1731.3 762.5 L1736.6 757.2" stroke="#000" stroke-width="7.4" stroke-linecap="round"/>
<path d="M1487.5 773.1 L1482.2 767.8" stroke="#000" stroke-width="7.4" stroke-linecap="round"/>
<path d="M1498.1 773.1 L1503.4 778.4" stroke="#000" stroke-width="7.4" stroke-linecap="round"/>
<path d="M1508.7 773.1 L1503.4 778.4" stroke="#000" stroke-width="7.4" stroke-linecap="round"/>
<path d="M1519.3 773.1 L1524.6 767.8" stroke="#000" stroke-width="7.4" stroke-linecap="round"/>
<path d="M1529.9 773.1 L1524.6 767.8" stroke="#000" stroke-width="7.4" stroke-linecap="round"/>
<path d="M1720.7 773.1 L1715.4 778.4" stroke="#000" stroke-width="7.4" stroke-linecap="round"/>
<path d="M1731.3 773.1 L1736.6 767.8" stroke="#000" stroke-width="7.4" stroke-linecap="round"/>
<path d="M1741.9 773.1 L1736.6 767.8" stroke="#000" stroke-width="7.4" stroke-linecap="round"/>
<path d="M1508.7 783.7 L1514 789" stroke="#000" stroke-width="7.4" stroke-linecap="round"/>
<path d="M1519.3 783.7 L1514 789" stroke="#000" stroke-width="7.4" stroke-linecap="round"/>
<path d="M1529.9 783.7 L1535.2 778.4" stroke="#000" stroke-width="7.4" stroke-linecap="round"/>
<path d="M1720.7 783.7 L1726 789" stroke="#000" stroke-width="7.4" stroke-linecap="round"/>
<path d="M1731.3 783.7 L1726 789" stroke="#000" stroke-width="7.4" stroke-linecap="round"/>
<path d="M1741.9 783.7 L1747.2 778.4" stroke="#000" stroke-width="7.4" stroke-linecap="round"/>
<path d="M1487.5 794.3 L1492.8 789" stroke="#000" stroke-width="7.4" stroke-linecap="round"/>
<path d="M1498.1 794.3 L1492.8 789" stroke="#000" stroke-width="7.4" stroke-linecap="round"/>
<path d="M1508.7 794.3 L1514 799.6" stroke="#000" stroke-width="7.4" stroke-linecap="round"/>
<path d="M1519.3 794.3 L1514 799.6" stroke="#000" stroke-width="7.4" stroke-linecap="round"/>
<path d="M1529.9 794.3 L1535.2 789" stroke="#000" stroke-width="7.4" stroke-linecap="round"/>
<path d="M1540.5 794.3 L1535.2 789" stroke="#000" stroke-width="7.4" stroke-linecap="round"/>
<path d="M1487.5 804.9 L1482.2 810.2" stroke="#000" stroke-width="7.4" stroke-linecap="round"/>
<path d="M1498.1 804.9 L1503.4 799.6" stroke="#000" stroke-width="7.4" stroke-linecap="round"/>
<path d="M1508.7 804.9 L1503.4 799.6" stroke="#000" stroke-width="7.4" stroke-linecap="round"/>
<path d="M1519.3 804.9 L1524.6 810.2" stroke="#000" stroke-width="7.4" stroke-linecap="round"/>
<path d="M1529.9 804.9 L1524.6 810.2" stroke="#000" stroke-width="7.4" stroke-linecap="round"/>
<path d="M1487.5 815.5 L1482.2 820.8" stroke="#000" stroke-width="7.4" stroke-linecap="round"/>
<path d="M1498.1 815.5 L1503.4 810.2" stroke="#000" stroke-width="7.4" stroke-linecap="round"/>
<path d="M1508.7 815.5 L1503.4 810.2" stroke="#000" stroke-width="7.4" stroke-linecap="round"/>
<path d="M1519.3 815.5 L1524.6 820.8" stroke="#000" stroke-width="7.4" stroke-linecap="round"/>
<path d="M1508.7 826.1 L1514 820.8" stroke="#000" stroke-width="7.4" stroke-linecap="round"/>
<path d="M1720.7 826.1 L1726 820.8" stroke="#000" stroke-width="7.4" stroke-linecap="round"/>
<path d="M1731.3 826.1 L1726 820.8" stroke="#000" stroke-width="7.4" stroke-linecap="round"/>
<path d="M1741.9 826.1 L1747.2 831.4" stroke="#000" stroke-width="7.4" stroke-linecap="round"/>
<path d="M1498.1 836.7 L1492.8 842" stroke="#000" stroke-width="7.4" stroke-linecap="round"/>
<path d="M1710.1 836.7 L1704.8 842" stroke="#000" stroke-width="7.4" stroke-linecap="round"/>
<path d="M1720.7 836.7 L1726 831.4" stroke="#000" stroke-width="7.4" stroke-linecap="round"/>
<path d="M1731.3 836.7 L1726 831.4" stroke="#000" stroke-width="7.4" stroke-linecap="round"/>
<path d="M1741.9 836.7 L1747.2 842" stroke="#000" stroke-width="7.4" stroke-linecap="round"/>
<path d="M1487.5 847.3 L1482.2 842" stroke="#000" stroke-width="7.4" stroke-linecap="round"/>
<path d="M1498.1 847.3 L1503.4 852.6" stroke="#000" stroke-width="7.4" stroke-linecap="round"/>
<path d="M1699.5 847.3 L1694.2 842" stroke="#000" stroke-width="7.4" stroke-linecap="round"/>
<path d="M1710.1 847.3 L1715.4 852.6" stroke="#000" stroke-width="7.4" stroke-linecap="round"/>
<path d="M1720.7 847.3 L1715.4 852.6" stroke="#000" stroke-width="7.4" stroke-linecap="round"/>
<path d="M1731.3 847.3 L1736.6 842" stroke="#000" stroke-width="7.4" stroke-linecap="round"/>
<path d="M1741.9 847.3 L1736.6 842" stroke="#000" stroke-width="7.4" stroke-linecap="round"/>
<path d="M1487.5 857.9 L1482.2 852.6" stroke="#000" stroke-width="7.4" stroke-linecap="round"/>
<path d="M1688.9 857.9 L1694.2 852.6" stroke="#000" stroke-width="7.4" stroke-linecap="round"/>
<path d="M1699.5 857.9 L1694.2 852.6" stroke="#000" stroke-width="7.4" stroke-linecap="round"/>
<path d="M1710.1 857.9 L1715.4 863.2" stroke="#000" stroke-width="7.4" stroke-linecap="round"/>
<path d="M1720.7 857.9 L1715.4 863.2" stroke="#000" stroke-width="7.4" stroke-linecap="round"/>
<path d="M1741.9 857.9 L1736.6 852.6" stroke="#000" stroke-width="7.4" stroke-linecap="round"/>
<path d="M1487.5 868.5 L1492.8 863.2" stroke="#000" stroke-width="7.4" stroke-linecap="round"/>
<path d="M1688.9 868.5 L1683.6 873.8" stroke="#000" stroke-width="7.4" stroke-linecap="round"/>
<path d="M1699.5 868.5 L1704.8 863.2" stroke="#000" stroke-width="7.4" stroke-linecap="round"/>
<path d="M1710.1 868.5 L1704.8 863.2" stroke="#000" stroke-width="7.4" stroke-linecap="round"/>
<path d="M1720.7 868.5 L1726 873.8" stroke="#000" stroke-width="7.4" stroke-linecap="round"/>
<path d="M1731.3 868.5 L1726 873.8" stroke="#000" stroke-width="7.4" stroke-linecap="round"/>
<path d="M1741.9 868.5 L1747.2 863.2" stroke="#000" stroke-width="7.4" stroke-linecap="round"/>
<path d="M1487.5 879.1 L1492.8 873.8" stroke="#000" stroke-width="7.4" stroke-linecap="round"/>
<path d="M1508.7 879.1 L1514 884.4" stroke="#000" stroke-width="7.4" stroke-linecap="round"/>
<path d="M1699.5 879.1 L1704.8 873.8" stroke="#000" stroke-width="7.4" stroke-linecap="round"/>
<path d="M1720.7 879.1 L1726 884.4" stroke="#000" stroke-width="7.4" stroke-linecap="round"/>
<path d="M1731.3 879.1 L1726 884.4" stroke="#000" stroke-width="7.4" stroke-linecap="round"/>
<path d="M1741.9 879.1 L1747.2 873.8" stroke="#000" stroke-width="7.4" stroke-linecap="round"/>
<path d="M1487.5 889.7 L1482.2 895" stroke="#000" stroke-width="7.4" stroke-linecap="round"/>
<path d="M1498.1 889.7 L1503.4 884.4" stroke="#000" stroke-width="7.4" stroke-linecap="round"/>
<path d="M1519.3 889.7 L1524.6 895" stroke="#000" stroke-width="7.4" stroke-linecap="round"/>
<path d="M1699.5 889.7 L1694.2 895" stroke="#000" stroke-width="7.4" stroke-linecap="round"/>
<path d="M1710.1 889.7 L1715.4 884.4" stroke="#000" stroke-width="7.4" stroke-linecap="round"/>
<path d="M1731.3 889.7 L1736.6 895" stroke="#000" stroke-width="7.4" stroke-linecap="round"/>
<path d="M1741.9 889.7 L1736.6 895" stroke="#000" stroke-width="7.4" stroke-linecap="round"/>
<path d="M1498.1 900.3 L1503.4 895" stroke="#000" stroke-width="7.4" stroke-linecap="round"/>
<path d="M1508.7 900.3 L1503.4 895" stroke="#000" stroke-width="7.4" stroke-linecap="round"/>
<path d="M1519.3 900.3 L1524.6 905.6" stroke="#000" stroke-width="7.4" stroke-linecap="round"/>
<path d="M1529.9 900.3 L1524.6 905.6" stroke="#000" stroke-width="7.4" stroke-linecap="round"/>
<path d="M1710.1 900.3 L1715.4 895" stroke="#000" stroke-width="7.4" stroke-linecap="round"/>
<path d="M1720.7 900.3 L1715.4 895" stroke="#000" stroke-width="7.4" stroke-linecap="round"/>
<path d="M1731.3 900.3 L1736.6 905.6" stroke="#000" stroke-width="7.4" stroke-linecap="round"/>
<path d="M1741.9 900.3 L1736.6 905.6" stroke="#000" stroke-width="7.4" stroke-linecap="round"/>
<path d="M1487.5 910.9 L1492.8 916.2" stroke="#000" stroke-width="7.4" stroke-linecap="round"/>
<path d="M1498.1 910.9 L1492.8 916.2" stroke="#000" stroke-width="7.4" stroke-linecap="round"/>
<path d="M1508.7 910.9 L1514 905.6" stroke="#000" stroke-width="7.4" stroke-linecap="round"/>
<path d="M1529.9 910.9 L1535.2 916.2" stroke="#000" stroke-width="7.4" stroke-linecap="round"/>
<path d="M1710.1 910.9 L1704.8 916.2" stroke="#000" stroke-width="7.4" stroke-linecap="round"/>
<path d="M1720.7 910.9 L1726 905.6" stroke="#000" stroke-width="7.4" stroke-linecap="round"/>
<path d="M1731.3 910.9 L1726 905.6" stroke="#000" stroke-width="7.4" stroke-linecap="round"/>
<path d="M1741.9 910.9 L1747.2 916.2" stroke="#000" stroke-width="7.4" stroke-linecap="round"/>
<path d="M1487.5 921.5 L1492.8 926.8" stroke="#000" stroke-width="7.4" stroke-linecap="round"/>
<path d="M1498.1 921.5 L1492.8 926.8" stroke="#000" stroke-width="7.4" stroke-linecap="round"/>
<path d="M1508.7 921.5 L1514 916.2" stroke="#000" stroke-width="7.4" stroke-linecap="round"/>
<path d="M1519.3 921.5 L1514 916.2" stroke="#000" stroke-width="7.4" stroke-linecap="round"/>
<path d="M1529.9 921.5 L1535.2 926.8" stroke="#000" stroke-width="7.4" stroke-linecap="round"/>
<path d="M1487.5 932.1 L1482.2 926.8" stroke="#000" stroke-width="7.4" stroke-linecap="round"/>
<path d="M1498.1 932.1 L1503.4 937.4" stroke="#000" stroke-width="7.4" stroke-linecap="round"/>
<path d="M1508.7 932.1 L1503.4 937.4" stroke="#000" stroke-width="7.4" stroke-linecap="round"/>
<path d="M1519.3 932.1 L1524.6 926.8" stroke="#000" stroke-width="7.4" stroke-linecap="round"/>
<path d="M1529.9 932.1 L1524.6 926.8" stroke="#000" stroke-width="7.4" stroke-linecap="round"/>
<path d="M1487.5 942.7 L1482.2 937.4" stroke="#000" stroke-width="7.4" stroke-linecap="round"/>
<path d="M1498.1 942.7 L1503.4 948" stroke="#000" stroke-width="7.4" stroke-linecap="round"/>
<path d="M1508.7 942.7 L1503.4 948" stroke="#000" stroke-width="7.4" stroke-linecap="round"/>
<path d="M1519.3 942.7 L1524.6 937.4" stroke="#000" stroke-width="7.4" stroke-linecap="round"/>
<path d="M1529.9 942.7 L1524.6 937.4" stroke="#000" stroke-width="7.4" stroke-linecap="round"/>
<path d="M1540.5 942.7 L1545.8 948" stroke="#000" stroke-width="7.4" stroke-linecap="round"/>
<path d="M1688.9 942.7 L1694.2 937.4" stroke="#000" stroke-width="7.4" stroke-linecap="round"/>
<path d="M1699.5 942.7 L1694.2 937.4" stroke="#000" stroke-width="7.4" stroke-linecap="round"/>
<path d="M1498.1 953.3 L1492.8 948" stroke="#000" stroke-width="7.4" stroke-linecap="round"/>
<path d="M1508.7 953.3 L1514 958.6" stroke="#000" stroke-width="7.4" stroke-linecap="round"/>
<path d="M1519.3 953.3 L1514 958.6" stroke="#000" stroke-width="7.4" stroke-linecap="round"/>
<path d="M1529.9 953.3 L1535.2 948" stroke="#000" stroke-width="7.4" stroke-linecap="round"/>
<path d="M1540.5 953.3 L1535.2 948" stroke="#000" stroke-width="7.4" stroke-linecap="round"/>
<path d="M1551.1 953.3 L1556.4 958.6" stroke="#000" stroke-width="7.4" stroke-linecap="round"/>
<path d="M1667.7 953.3 L1662.4 948" stroke="#000" stroke-width="7.4" stroke-linecap="round"/>
<path d="M1678.3 953.3 L1683.6 958.6" stroke="#000" stroke-width="7.4" stroke-linecap="round"/>
<path d="M1688.9 953.3 L1683.6 958.6" stroke="#000" stroke-width="7.4" stroke-linecap="round"/>
<path d="M1699.5 953.3 L1704.8 948" stroke="#000" stroke-width="7.4" stroke-linecap="round"/>
<path d="M1710.1 953.3 L1704.8 948" stroke="#000" stroke-width="7.4" stroke-linecap="round"/>
<path d="M1487.5 963.9 L1492.8 958.6" stroke="#000" stroke-width="7.4" stroke-linecap="round"/>
<path d="M1498.1 963.9 L1492.8 958.6" stroke="#000" stroke-width="7.4" stroke-linecap="round"/>
<path d="M1519.3 963.9 L1514 969.2" stroke="#000" stroke-width="7.4" stroke-linecap="round"/>
<path d="M1529.9 963.9 L1535.2 958.6" stroke="#000" stroke-width="7.4" stroke-linecap="round"/>
<path d="M1540.5 963.9 L1535.2 958.6" stroke="#000" stroke-width="7.4" stroke-linecap="round"/>
<path d="M1551.1 963.9 L1556.4 969.2" stroke="#000" stroke-width="7.4" stroke-linecap="round"/>
<path d="M1667.7 963.9 L1662.4 958.6" stroke="#000" stroke-width="7.4" stroke-linecap="round"/>
<path d="M1678.3 963.9 L1683.6 969.2" stroke="#000" stroke-width="7.4" stroke-linecap="round"/>
<path d="M1710.1 963.9 L1704.8 958.6" stroke="#000" stroke-width="7.4" stroke-linecap="round"/>
<path d="M1572.3 804.9 L1577.6 810.2" stroke="#000" stroke-width="7.2" stroke-linecap="round"/>
<path d="M1582.9 804.9 L1577.6 810.2" stroke="#000" stroke-width="7.2" stroke-linecap="round"/>
<path d="M1572.3 815.5 L1577.6 820.8" stroke="#000" stroke-width="7.2" stroke-linecap="round"/>
<path d="M1582.9 815.5 L1577.6 820.8" stroke="#000" stroke-width="7.2" stroke-linecap="round"/>
<path d="M1572.3 826.1 L1577.6 831.4" stroke="#000" stroke-width="7.2" stroke-linecap="round"/>
<path d="M1582.9 826.1 L1577.6 831.4" stroke="#000" stroke-width="7.2" stroke-linecap="round"/>
<path d="M1572.3 836.7 L1577.6 842" stroke="#000" stroke-width="7.2" stroke-linecap="round"/>
<path d="M1582.9 836.7 L1577.6 842" stroke="#000" stroke-width="7.2" stroke-linecap="round"/>
<path d="M1572.3 847.3 L1577.6 852.6" stroke="#000" stroke-width="7.2" stroke-linecap="round"/>
<path d="M1582.9 847.3 L1577.6 852.6" stroke="#000" stroke-width="7.2" stroke-linecap="round"/>
<path d="M1572.3 857.9 L1577.6 863.2" stroke="#000" stroke-width="7.2" stroke-linecap="round"/>
<path d="M1582.9 857.9 L1577.6 863.2" stroke="#000" stroke-width="7.2" stroke-linecap="round"/>
<path d="M1572.3 868.5 L1577.6 873.8" stroke="#000" stroke-width="7.2" stroke-linecap="round"/>
<path d="M1582.9 868.5 L1577.6 873.8" stroke="#000" stroke-width="7.2" stroke-linecap="round"/>
<path d="M1593.5 804.9 L1604.1 794.3" stroke="#000" stroke-width="7.2" stroke-linecap="round"/>
<path d="M1593.5 826.1 L1625.3 794.3" stroke="#000" stroke-width="7.2" stroke-linecap="round"/>
<path d="M1593.5 847.3 L1635.9 804.9" stroke="#000" stroke-width="7.2" stroke-linecap="round"/>
<path d="M1614.7 847.3 L1625.3 836.7" stroke="#000" stroke-width="7.2" stroke-linecap="round"/>
<path d="M1635.9 826.1 L1646.5 815.5" stroke="#000" stroke-width="7.2" stroke-linecap="round"/>
<path d="M1625.3 857.9 L1646.5 836.7" stroke="#000" stroke-width="7.2" stroke-linecap="round"/>
<path d="M1635.9 868.5 L1646.5 857.9" stroke="#000" stroke-width="7.2" stroke-linecap="round"/>
<path d="M1630.6 873.8 L1646.5 857.9" stroke="#000" stroke-width="7.2" stroke-linecap="round"/>
<path d="M1635.9 879.1 L1646.5 868.5" stroke="#000" stroke-width="7.2" stroke-linecap="round"/>
<path d="M1593.5 868.5 L1604.1 857.9" stroke="#000" stroke-width="7.2" stroke-linecap="round"/>
<path d="M1593.5 868.5 L1604.1 879.1" stroke="#000" stroke-width="7.2" stroke-linecap="round"/>
<path d="M1572.3 889.7 L1588.2 873.8" stroke="#000" stroke-width="7.2" stroke-linecap="round"/>
<path d="M1582.9 884.4 L1593.5 879.1" stroke="#000" stroke-width="7.2" stroke-linecap="round"/>
<path d="M1635.9 879.1 L1641.2 884.4" stroke="#000" stroke-width="7.2" stroke-linecap="round"/>
<path d="M1646.5 879.1 L1641.2 884.4" stroke="#000" stroke-width="7.2" stroke-linecap="round"/>
<path d="M1635.9 889.7 L1641.2 895" stroke="#000" stroke-width="7.2" stroke-linecap="round"/>
<path d="M1646.5 889.7 L1641.2 895" stroke="#000" stroke-width="7.2" stroke-linecap="round"/>
<path d="M1646.5 815.5 L1651.8 820.8" stroke="#000" stroke-width="7.2" stroke-linecap="round"/>
<path d="M1657.1 815.5 L1651.8 820.8" stroke="#000" stroke-width="7.2" stroke-linecap="round"/>
<path d="M1593.5 773.1 L1598.8 778.4" stroke="#000" stroke-width="7.2" stroke-linecap="round"/>
<path d="M1604.1 773.1 L1598.8 778.4" stroke="#000" stroke-width="7.2" stroke-linecap="round"/>
<path d="M1593.5 783.7 L1598.8 778.4" stroke="#000" stroke-width="7.2" stroke-linecap="round"/>
<path d="M1604.1 783.7 L1598.8 778.4" stroke="#000" stroke-width="7.2" stroke-linecap="round"/>
<path d="M1593.5 910.9 L1598.8 916.2" stroke="#000" stroke-width="7.2" stroke-linecap="round"/>
<path d="M1604.1 910.9 L1598.8 916.2" stroke="#000" stroke-width="7.2" stroke-linecap="round"/>
<path d="M1593.5 921.5 L1598.8 916.2" stroke="#000" stroke-width="7.2" stroke-linecap="round"/>
<path d="M1604.1 921.5 L1598.8 916.2" stroke="#000" stroke-width="7.2" stroke-linecap="round"/>
<path d="M1667.7 879.1 L1673 884.4" stroke="#000" stroke-width="7.2" stroke-linecap="round"/>
<path d="M1678.3 879.1 L1673 884.4" stroke="#000" stroke-width="7.2" stroke-linecap="round"/>
<path d="M1667.7 889.7 L1673 884.4" stroke="#000" stroke-width="7.2" stroke-linecap="round"/>
<path d="M1678.3 889.7 L1673 884.4" stroke="#000" stroke-width="7.2" stroke-linecap="round"/>
<path d="M1678.3 847.3 L1683.6 852.6" stroke="#000" stroke-width="7.2" stroke-linecap="round"/>
<path d="M1688.9 847.3 L1683.6 852.6" stroke="#000" stroke-width="7.2" stroke-linecap="round"/>
<path d="M1678.3 857.9 L1683.6 852.6" stroke="#000" stroke-width="7.2" stroke-linecap="round"/>
<path d="M1688.9 857.9 L1683.6 852.6" stroke="#000" stroke-width="7.2" stroke-linecap="round"/>
<path d="M1593.5 730.7 L1598.8 736" stroke="#000" stroke-width="7.2" stroke-linecap="round"/>
<path d="M1604.1 730.7 L1598.8 736" stroke="#000" stroke-width="7.2" stroke-linecap="round"/>
<path d="M1593.5 741.3 L1598.8 736" stroke="#000" stroke-width="7.2" stroke-linecap="round"/>
<path d="M1604.1 741.3 L1598.8 736" stroke="#000" stroke-width="7.2" stroke-linecap="round"/>
<path d="M1625.3 762.5 L1630.6 767.8" stroke="#000" stroke-width="7.2" stroke-linecap="round"/>
<path d="M1635.9 762.5 L1630.6 767.8" stroke="#000" stroke-width="7.2" stroke-linecap="round"/>
<path d="M1625.3 773.1 L1630.6 767.8" stroke="#000" stroke-width="7.2" stroke-linecap="round"/>
<path d="M1635.9 773.1 L1630.6 767.8" stroke="#000" stroke-width="7.2" stroke-linecap="round"/>
<path d="M1529.9 730.7 L1535.2 736" stroke="#000" stroke-width="7.2" stroke-linecap="round"/>
<path d="M1540.5 730.7 L1535.2 736" stroke="#000" stroke-width="7.2" stroke-linecap="round"/>
<path d="M1529.9 741.3 L1535.2 736" stroke="#000" stroke-width="7.2" stroke-linecap="round"/>
<path d="M1540.5 741.3 L1535.2 736" stroke="#000" stroke-width="7.2" stroke-linecap="round"/>
<path d="M1551.1 730.7 L1556.4 736" stroke="#000" stroke-width="7.2" stroke-linecap="round"/>
<path d="M1561.7 730.7 L1556.4 736" stroke="#000" stroke-width="7.2" stroke-linecap="round"/>
<path d="M1551.1 741.3 L1556.4 736" stroke="#000" stroke-width="7.2" stroke-linecap="round"/>
<path d="M1561.7 741.3 L1556.4 736" stroke="#000" stroke-width="7.2" stroke-linecap="round"/>
<path d="M1540.5 720.1 L1545.8 725.4" stroke="#000" stroke-width="7.2" stroke-linecap="round"/>
<path d="M1551.1 720.1 L1545.8 725.4" stroke="#000" stroke-width="7.2" stroke-linecap="round"/>
<path d="M1540.5 730.7 L1545.8 725.4" stroke="#000" stroke-width="7.2" stroke-linecap="round"/>
<path d="M1551.1 730.7 L1545.8 725.4" stroke="#000" stroke-width="7.2" stroke-linecap="round"/>
<path d="M1678.3 815.5 L1683.6 820.8" stroke="#000" stroke-width="7.2" stroke-linecap="round"/>
<path d="M1688.9 815.5 L1683.6 820.8" stroke="#000" stroke-width="7.2" stroke-linecap="round"/>
<path d="M1678.3 826.1 L1683.6 820.8" stroke="#000" stroke-width="7.2" stroke-linecap="round"/>
<path d="M1688.9 826.1 L1683.6 820.8" stroke="#000" stroke-width="7.2" stroke-linecap="round"/>
<path d="M1688.9 783.7 L1694.2 789" stroke="#000" stroke-width="7.2" stroke-linecap="round"/>
<path d="M1699.5 783.7 L1694.2 789" stroke="#000" stroke-width="7.2" stroke-linecap="round"/>
<path d="M1688.9 794.3 L1694.2 789" stroke="#000" stroke-width="7.2" stroke-linecap="round"/>
<path d="M1699.5 794.3 L1694.2 789" stroke="#000" stroke-width="7.2" stroke-linecap="round"/>
<path d="M1657.1 741.3 L1662.4 746.6" stroke="#000" stroke-width="7.2" stroke-linecap="round"/>
<path d="M1667.7 741.3 L1662.4 746.6" stroke="#000" stroke-width="7.2" stroke-linecap="round"/>
<path d="M1657.1 751.9 L1662.4 746.6" stroke="#000" stroke-width="7.2" stroke-linecap="round"/>
<path d="M1667.7 751.9 L1662.4 746.6" stroke="#000" stroke-width="7.2" stroke-linecap="round"/>
<path d="M1614.7 741.3 L1620 746.6" stroke="#000" stroke-width="7.2" stroke-linecap="round"/>
<path d="M1625.3 741.3 L1620 746.6" stroke="#000" stroke-width="7.2" stroke-linecap="round"/>
<path d="M1614.7 751.9 L1620 746.6" stroke="#000" stroke-width="7.2" stroke-linecap="round"/>
<path d="M1625.3 751.9 L1620 746.6" stroke="#000" stroke-width="7.2" stroke-linecap="round"/>
<path d="M1657.1 889.7 L1667.7 889.7" stroke="#000" stroke-width="7.2" stroke-linecap="round"/>
<path d="M1667.7 857.9 L1678.3 857.9" stroke="#000" stroke-width="7.2" stroke-linecap="round"/>
<path d="M1582.9 709.5 L1577.6 714.8" stroke="#000" stroke-width="7.2" stroke-linecap="round"/>
<path d="M1593.5 709.5 L1598.8 714.8" stroke="#000" stroke-width="7.2" stroke-linecap="round"/>
<path d="M1519.3 720.1 L1524.6 725.4" stroke="#000" stroke-width="7.2" stroke-linecap="round"/>
<path d="M1551.1 720.1 L1545.8 725.4" stroke="#000" stroke-width="7.2" stroke-linecap="round"/>
<path d="M1561.7 720.1 L1567 725.4" stroke="#000" stroke-width="7.2" stroke-linecap="round"/>
<path d="M1582.9 720.1 L1588.2 714.8" stroke="#000" stroke-width="7.2" stroke-linecap="round"/>
<path d="M1593.5 720.1 L1588.2 725.4" stroke="#000" stroke-width="7.2" stroke-linecap="round"/>
<path d="M1582.9 730.7 L1577.6 725.4" stroke="#000" stroke-width="7.2" stroke-linecap="round"/>
<path d="M1593.5 730.7 L1598.8 725.4" stroke="#000" stroke-width="7.2" stroke-linecap="round"/>
<path d="M1529.9 741.3 L1524.6 746.6" stroke="#000" stroke-width="7.2" stroke-linecap="round"/>
<path d="M1582.9 741.3 L1588.2 746.6" stroke="#000" stroke-width="7.2" stroke-linecap="round"/>
<path d="M1593.5 741.3 L1588.2 736" stroke="#000" stroke-width="7.2" stroke-linecap="round"/>
<path d="M1561.7 751.9 L1556.4 746.6" stroke="#000" stroke-width="7.2" stroke-linecap="round"/>
<path d="M1582.9 751.9 L1577.6 757.2" stroke="#000" stroke-width="7.2" stroke-linecap="round"/>
<path d="M1593.5 751.9 L1598.8 757.2" stroke="#000" stroke-width="7.2" stroke-linecap="round"/>
<path d="M1582.9 762.5 L1588.2 757.2" stroke="#000" stroke-width="7.2" stroke-linecap="round"/>
<path d="M1593.5 762.5 L1588.2 767.8" stroke="#000" stroke-width="7.2" stroke-linecap="round"/>
<path d="M1582.9 773.1 L1577.6 767.8" stroke="#000" stroke-width="7.2" stroke-linecap="round"/>
<path d="M1593.5 773.1 L1598.8 767.8" stroke="#000" stroke-width="7.2" stroke-linecap="round"/>
<path d="M1657.1 773.1 L1662.4 778.4" stroke="#000" stroke-width="7.2" stroke-linecap="round"/>
<path d="M1593.5 783.7 L1588.2 778.4" stroke="#000" stroke-width="7.2" stroke-linecap="round"/>
<path d="M1657.1 783.7 L1651.8 789" stroke="#000" stroke-width="7.2" stroke-linecap="round"/>
<path d="M1678.3 804.9 L1673 810.2" stroke="#000" stroke-width="7.2" stroke-linecap="round"/>
<path d="M1699.5 804.9 L1694.2 799.6" stroke="#000" stroke-width="7.2" stroke-linecap="round"/>
<path d="M1646.5 815.5 L1641.2 820.8" stroke="#000" stroke-width="7.2" stroke-linecap="round"/>
<path d="M1688.9 815.5 L1683.6 820.8" stroke="#000" stroke-width="7.2" stroke-linecap="round"/>
<path d="M1699.5 815.5 L1704.8 820.8" stroke="#000" stroke-width="7.2" stroke-linecap="round"/>
<path d="M1593.5 826.1 L1588.2 820.8" stroke="#000" stroke-width="7.2" stroke-linecap="round"/>
<path d="M1614.7 826.1 L1609.4 831.4" stroke="#000" stroke-width="7.2" stroke-linecap="round"/>
<path d="M1604.1 836.7 L1598.8 831.4" stroke="#000" stroke-width="7.2" stroke-linecap="round"/>
<path d="M1635.9 836.7 L1641.2 842" stroke="#000" stroke-width="7.2" stroke-linecap="round"/>
<path d="M1699.5 836.7 L1704.8 831.4" stroke="#000" stroke-width="7.2" stroke-linecap="round"/>
<path d="M1614.7 847.3 L1609.4 842" stroke="#000" stroke-width="7.2" stroke-linecap="round"/>
<path d="M1604.1 868.5 L1609.4 863.2" stroke="#000" stroke-width="7.2" stroke-linecap="round"/>
<path d="M1667.7 709.5 L1662.4 704.2" stroke="#c3f26b" stroke-width="2.4" stroke-linecap="round"/>
<path d="M1678.3 709.5 L1683.6 714.8" stroke="#c3f26b" stroke-width="2.4" stroke-linecap="round"/>
<path d="M1688.9 709.5 L1683.6 714.8" stroke="#c3f26b" stroke-width="2.4" stroke-linecap="round"/>
<path d="M1699.5 709.5 L1704.8 704.2" stroke="#c3f26b" stroke-width="2.4" stroke-linecap="round"/>
<path d="M1710.1 709.5 L1704.8 704.2" stroke="#c3f26b" stroke-width="2.4" stroke-linecap="round"/>
<path d="M1720.7 709.5 L1726 714.8" stroke="#c3f26b" stroke-width="2.4" stroke-linecap="round"/>
<path d="M1667.7 720.1 L1673 714.8" stroke="#c3f26b" stroke-width="2.4" stroke-linecap="round"/>
<path d="M1678.3 720.1 L1673 714.8" stroke="#c3f26b" stroke-width="2.4" stroke-linecap="round"/>
<path d="M1699.5 720.1 L1694.2 725.4" stroke="#c3f26b" stroke-width="2.4" stroke-linecap="round"/>
<path d="M1710.1 720.1 L1715.4 714.8" stroke="#c3f26b" stroke-width="2.4" stroke-linecap="round"/>
<path d="M1720.7 720.1 L1715.4 714.8" stroke="#c3f26b" stroke-width="2.4" stroke-linecap="round"/>
<path d="M1678.3 730.7 L1673 725.4" stroke="#c3f26b" stroke-width="2.4" stroke-linecap="round"/>
<path d="M1688.9 730.7 L1694.2 736" stroke="#c3f26b" stroke-width="2.4" stroke-linecap="round"/>
<path d="M1710.1 730.7 L1715.4 725.4" stroke="#c3f26b" stroke-width="2.4" stroke-linecap="round"/>
<path d="M1720.7 730.7 L1715.4 725.4" stroke="#c3f26b" stroke-width="2.4" stroke-linecap="round"/>
<path d="M1487.5 741.3 L1492.8 746.6" stroke="#c3f26b" stroke-width="2.4" stroke-linecap="round"/>
<path d="M1498.1 741.3 L1492.8 746.6" stroke="#c3f26b" stroke-width="2.4" stroke-linecap="round"/>
<path d="M1678.3 741.3 L1683.6 736" stroke="#c3f26b" stroke-width="2.4" stroke-linecap="round"/>
<path d="M1688.9 741.3 L1683.6 736" stroke="#c3f26b" stroke-width="2.4" stroke-linecap="round"/>
<path d="M1699.5 741.3 L1704.8 746.6" stroke="#c3f26b" stroke-width="2.4" stroke-linecap="round"/>
<path d="M1720.7 741.3 L1726 736" stroke="#c3f26b" stroke-width="2.4" stroke-linecap="round"/>
<path d="M1731.3 741.3 L1726 736" stroke="#c3f26b" stroke-width="2.4" stroke-linecap="round"/>
<path d="M1741.9 741.3 L1747.2 746.6" stroke="#c3f26b" stroke-width="2.4" stroke-linecap="round"/>
<path d="M1498.1 751.9 L1492.8 757.2" stroke="#c3f26b" stroke-width="2.4" stroke-linecap="round"/>
<path d="M1508.7 751.9 L1514 746.6" stroke="#c3f26b" stroke-width="2.4" stroke-linecap="round"/>
<path d="M1519.3 751.9 L1514 746.6" stroke="#c3f26b" stroke-width="2.4" stroke-linecap="round"/>
<path d="M1720.7 751.9 L1726 746.6" stroke="#c3f26b" stroke-width="2.4" stroke-linecap="round"/>
<path d="M1741.9 751.9 L1747.2 757.2" stroke="#c3f26b" stroke-width="2.4" stroke-linecap="round"/>
<path d="M1487.5 762.5 L1482.2 757.2" stroke="#c3f26b" stroke-width="2.4" stroke-linecap="round"/>
<path d="M1498.1 762.5 L1503.4 767.8" stroke="#c3f26b" stroke-width="2.4" stroke-linecap="round"/>
<path d="M1508.7 762.5 L1503.4 767.8" stroke="#c3f26b" stroke-width="2.4" stroke-linecap="round"/>
<path d="M1519.3 762.5 L1524.6 757.2" stroke="#c3f26b" stroke-width="2.4" stroke-linecap="round"/>
<path d="M1529.9 762.5 L1524.6 757.2" stroke="#c3f26b" stroke-width="2.4" stroke-linecap="round"/>
<path d="M1720.7 762.5 L1715.4 767.8" stroke="#c3f26b" stroke-width="2.4" stroke-linecap="round"/>
<path d="M1731.3 762.5 L1736.6 757.2" stroke="#c3f26b" stroke-width="2.4" stroke-linecap="round"/>
<path d="M1487.5 773.1 L1482.2 767.8" stroke="#c3f26b" stroke-width="2.4" stroke-linecap="round"/>
<path d="M1498.1 773.1 L1503.4 778.4" stroke="#c3f26b" stroke-width="2.4" stroke-linecap="round"/>
<path d="M1508.7 773.1 L1503.4 778.4" stroke="#c3f26b" stroke-width="2.4" stroke-linecap="round"/>
<path d="M1519.3 773.1 L1524.6 767.8" stroke="#c3f26b" stroke-width="2.4" stroke-linecap="round"/>
<path d="M1529.9 773.1 L1524.6 767.8" stroke="#c3f26b" stroke-width="2.4" stroke-linecap="round"/>
<path d="M1720.7 773.1 L1715.4 778.4" stroke="#c3f26b" stroke-width="2.4" stroke-linecap="round"/>
<path d="M1731.3 773.1 L1736.6 767.8" stroke="#c3f26b" stroke-width="2.4" stroke-linecap="round"/>
<path d="M1741.9 773.1 L1736.6 767.8" stroke="#c3f26b" stroke-width="2.4" stroke-linecap="round"/>
<path d="M1508.7 783.7 L1514 789" stroke="#c3f26b" stroke-width="2.4" stroke-linecap="round"/>
<path d="M1519.3 783.7 L1514 789" stroke="#c3f26b" stroke-width="2.4" stroke-linecap="round"/>
<path d="M1529.9 783.7 L1535.2 778.4" stroke="#c3f26b" stroke-width="2.4" stroke-linecap="round"/>
<path d="M1720.7 783.7 L1726 789" stroke="#c3f26b" stroke-width="2.4" stroke-linecap="round"/>
<path d="M1731.3 783.7 L1726 789" stroke="#c3f26b" stroke-width="2.4" stroke-linecap="round"/>
<path d="M1741.9 783.7 L1747.2 778.4" stroke="#c3f26b" stroke-width="2.4" stroke-linecap="round"/>
<path d="M1487.5 794.3 L1492.8 789" stroke="#c3f26b" stroke-width="2.4" stroke-linecap="round"/>
<path d="M1498.1 794.3 L1492.8 789" stroke="#c3f26b" stroke-width="2.4" stroke-linecap="round"/>
<path d="M1508.7 794.3 L1514 799.6" stroke="#c3f26b" stroke-width="2.4" stroke-linecap="round"/>
<path d="M1519.3 794.3 L1514 799.6" stroke="#c3f26b" stroke-width="2.4" stroke-linecap="round"/>
<path d="M1529.9 794.3 L1535.2 789" stroke="#c3f26b" stroke-width="2.4" stroke-linecap="round"/>
<path d="M1540.5 794.3 L1535.2 789" stroke="#c3f26b" stroke-width="2.4" stroke-linecap="round"/>
<path d="M1487.5 804.9 L1482.2 810.2" stroke="#c3f26b" stroke-width="2.4" stroke-linecap="round"/>
<path d="M1498.1 804.9 L1503.4 799.6" stroke="#c3f26b" stroke-width="2.4" stroke-linecap="round"/>
<path d="M1508.7 804.9 L1503.4 799.6" stroke="#c3f26b" stroke-width="2.4" stroke-linecap="round"/>
<path d="M1519.3 804.9 L1524.6 810.2" stroke="#c3f26b" stroke-width="2.4" stroke-linecap="round"/>
<path d="M1529.9 804.9 L1524.6 810.2" stroke="#c3f26b" stroke-width="2.4" stroke-linecap="round"/>
<path d="M1487.5 815.5 L1482.2 820.8" stroke="#c3f26b" stroke-width="2.4" stroke-linecap="round"/>
<path d="M1498.1 815.5 L1503.4 810.2" stroke="#c3f26b" stroke-width="2.4" stroke-linecap="round"/>
<path d="M1508.7 815.5 L1503.4 810.2" stroke="#c3f26b" stroke-width="2.4" stroke-linecap="round"/>
<path d="M1519.3 815.5 L1524.6 820.8" stroke="#c3f26b" stroke-width="2.4" stroke-linecap="round"/>
<path d="M1508.7 826.1 L1514 820.8" stroke="#c3f26b" stroke-width="2.4" stroke-linecap="round"/>
<path d="M1720.7 826.1 L1726 820.8" stroke="#c3f26b" stroke-width="2.4" stroke-linecap="round"/>
<path d="M1731.3 826.1 L1726 820.8" stroke="#c3f26b" stroke-width="2.4" stroke-linecap="round"/>
<path d="M1741.9 826.1 L1747.2 831.4" stroke="#c3f26b" stroke-width="2.4" stroke-linecap="round"/>
<path d="M1498.1 836.7 L1492.8 842" stroke="#c3f26b" stroke-width="2.4" stroke-linecap="round"/>
<path d="M1710.1 836.7 L1704.8 842" stroke="#c3f26b" stroke-width="2.4" stroke-linecap="round"/>
<path d="M1720.7 836.7 L1726 831.4" stroke="#c3f26b" stroke-width="2.4" stroke-linecap="round"/>
<path d="M1731.3 836.7 L1726 831.4" stroke="#c3f26b" stroke-width="2.4" stroke-linecap="round"/>
<path d="M1741.9 836.7 L1747.2 842" stroke="#c3f26b" stroke-width="2.4" stroke-linecap="round"/>
<path d="M1487.5 847.3 L1482.2 842" stroke="#c3f26b" stroke-width="2.4" stroke-linecap="round"/>
<path d="M1498.1 847.3 L1503.4 852.6" stroke="#c3f26b" stroke-width="2.4" stroke-linecap="round"/>
<path d="M1699.5 847.3 L1694.2 842" stroke="#c3f26b" stroke-width="2.4" stroke-linecap="round"/>
<path d="M1710.1 847.3 L1715.4 852.6" stroke="#c3f26b" stroke-width="2.4" stroke-linecap="round"/>
<path d="M1720.7 847.3 L1715.4 852.6" stroke="#c3f26b" stroke-width="2.4" stroke-linecap="round"/>
<path d="M1731.3 847.3 L1736.6 842" stroke="#c3f26b" stroke-width="2.4" stroke-linecap="round"/>
<path d="M1741.9 847.3 L1736.6 842" stroke="#c3f26b" stroke-width="2.4" stroke-linecap="round"/>
<path d="M1487.5 857.9 L1482.2 852.6" stroke="#c3f26b" stroke-width="2.4" stroke-linecap="round"/>
<path d="M1688.9 857.9 L1694.2 852.6" stroke="#c3f26b" stroke-width="2.4" stroke-linecap="round"/>
<path d="M1699.5 857.9 L1694.2 852.6" stroke="#c3f26b" stroke-width="2.4" stroke-linecap="round"/>
<path d="M1710.1 857.9 L1715.4 863.2" stroke="#c3f26b" stroke-width="2.4" stroke-linecap="round"/>
<path d="M1720.7 857.9 L1715.4 863.2" stroke="#c3f26b" stroke-width="2.4" stroke-linecap="round"/>
<path d="M1741.9 857.9 L1736.6 852.6" stroke="#c3f26b" stroke-width="2.4" stroke-linecap="round"/>
<path d="M1487.5 868.5 L1492.8 863.2" stroke="#c3f26b" stroke-width="2.4" stroke-linecap="round"/>
<path d="M1688.9 868.5 L1683.6 873.8" stroke="#c3f26b" stroke-width="2.4" stroke-linecap="round"/>
<path d="M1699.5 868.5 L1704.8 863.2" stroke="#c3f26b" stroke-width="2.4" stroke-linecap="round"/>
<path d="M1710.1 868.5 L1704.8 863.2" stroke="#c3f26b" stroke-width="2.4" stroke-linecap="round"/>
<path d="M1720.7 868.5 L1726 873.8" stroke="#c3f26b" stroke-width="2.4" stroke-linecap="round"/>
<path d="M1731.3 868.5 L1726 873.8" stroke="#c3f26b" stroke-width="2.4" stroke-linecap="round"/>
<path d="M1741.9 868.5 L1747.2 863.2" stroke="#c3f26b" stroke-width="2.4" stroke-linecap="round"/>
<path d="M1487.5 879.1 L1492.8 873.8" stroke="#c3f26b" stroke-width="2.4" stroke-linecap="round"/>
<path d="M1508.7 879.1 L1514 884.4" stroke="#c3f26b" stroke-width="2.4" stroke-linecap="round"/>
<path d="M1699.5 879.1 L1704.8 873.8" stroke="#c3f26b" stroke-width="2.4" stroke-linecap="round"/>
<path d="M1720.7 879.1 L1726 884.4" stroke="#c3f26b" stroke-width="2.4" stroke-linecap="round"/>
<path d="M1731.3 879.1 L1726 884.4" stroke="#c3f26b" stroke-width="2.4" stroke-linecap="round"/>
<path d="M1741.9 879.1 L1747.2 873.8" stroke="#c3f26b" stroke-width="2.4" stroke-linecap="round"/>
<path d="M1487.5 889.7 L1482.2 895" stroke="#c3f26b" stroke-width="2.4" stroke-linecap="round"/>
<path d="M1498.1 889.7 L1503.4 884.4" stroke="#c3f26b" stroke-width="2.4" stroke-linecap="round"/>
<path d="M1519.3 889.7 L1524.6 895" stroke="#c3f26b" stroke-width="2.4" stroke-linecap="round"/>
<path d="M1699.5 889.7 L1694.2 895" stroke="#c3f26b" stroke-width="2.4" stroke-linecap="round"/>
<path d="M1710.1 889.7 L1715.4 884.4" stroke="#c3f26b" stroke-width="2.4" stroke-linecap="round"/>
<path d="M1731.3 889.7 L1736.6 895" stroke="#c3f26b" stroke-width="2.4" stroke-linecap="round"/>
<path d="M1741.9 889.7 L1736.6 895" stroke="#c3f26b" stroke-width="2.4" stroke-linecap="round"/>
<path d="M1498.1 900.3 L1503.4 895" stroke="#c3f26b" stroke-width="2.4" stroke-linecap="round"/>
<path d="M1508.7 900.3 L1503.4 895" stroke="#c3f26b" stroke-width="2.4" stroke-linecap="round"/>
<path d="M1519.3 900.3 L1524.6 905.6" stroke="#c3f26b" stroke-width="2.4" stroke-linecap="round"/>
<path d="M1529.9 900.3 L1524.6 905.6" stroke="#c3f26b" stroke-width="2.4" stroke-linecap="round"/>
<path d="M1710.1 900.3 L1715.4 895" stroke="#c3f26b" stroke-width="2.4" stroke-linecap="round"/>
<path d="M1720.7 900.3 L1715.4 895" stroke="#c3f26b" stroke-width="2.4" stroke-linecap="round"/>
<path d="M1731.3 900.3 L1736.6 905.6" stroke="#c3f26b" stroke-width="2.4" stroke-linecap="round"/>
<path d="M1741.9 900.3 L1736.6 905.6" stroke="#c3f26b" stroke-width="2.4" stroke-linecap="round"/>
<path d="M1487.5 910.9 L1492.8 916.2" stroke="#c3f26b" stroke-width="2.4" stroke-linecap="round"/>
<path d="M1498.1 910.9 L1492.8 916.2" stroke="#c3f26b" stroke-width="2.4" stroke-linecap="round"/>
<path d="M1508.7 910.9 L1514 905.6" stroke="#c3f26b" stroke-width="2.4" stroke-linecap="round"/>
<path d="M1529.9 910.9 L1535.2 916.2" stroke="#c3f26b" stroke-width="2.4" stroke-linecap="round"/>
<path d="M1710.1 910.9 L1704.8 916.2" stroke="#c3f26b" stroke-width="2.4" stroke-linecap="round"/>
<path d="M1720.7 910.9 L1726 905.6" stroke="#c3f26b" stroke-width="2.4" stroke-linecap="round"/>
<path d="M1731.3 910.9 L1726 905.6" stroke="#c3f26b" stroke-width="2.4" stroke-linecap="round"/>
<path d="M1741.9 910.9 L1747.2 916.2" stroke="#c3f26b" stroke-width="2.4" stroke-linecap="round"/>
<path d="M1487.5 921.5 L1492.8 926.8" stroke="#c3f26b" stroke-width="2.4" stroke-linecap="round"/>
<path d="M1498.1 921.5 L1492.8 926.8" stroke="#c3f26b" stroke-width="2.4" stroke-linecap="round"/>
<path d="M1508.7 921.5 L1514 916.2" stroke="#c3f26b" stroke-width="2.4" stroke-linecap="round"/>
<path d="M1519.3 921.5 L1514 916.2" stroke="#c3f26b" stroke-width="2.4" stroke-linecap="round"/>
<path d="M1529.9 921.5 L1535.2 926.8" stroke="#c3f26b" stroke-width="2.4" stroke-linecap="round"/>
<path d="M1487.5 932.1 L1482.2 926.8" stroke="#c3f26b" stroke-width="2.4" stroke-linecap="round"/>
<path d="M1498.1 932.1 L1503.4 937.4" stroke="#c3f26b" stroke-width="2.4" stroke-linecap="round"/>
<path d="M1508.7 932.1 L1503.4 937.4" stroke="#c3f26b" stroke-width="2.4" stroke-linecap="round"/>
<path d="M1519.3 932.1 L1524.6 926.8" stroke="#c3f26b" stroke-width="2.4" stroke-linecap="round"/>
<path d="M1529.9 932.1 L1524.6 926.8" stroke="#c3f26b" stroke-width="2.4" stroke-linecap="round"/>
<path d="M1487.5 942.7 L1482.2 937.4" stroke="#c3f26b" stroke-width="2.4" stroke-linecap="round"/>
<path d="M1498.1 942.7 L1503.4 948" stroke="#c3f26b" stroke-width="2.4" stroke-linecap="round"/>
<path d="M1508.7 942.7 L1503.4 948" stroke="#c3f26b" stroke-width="2.4" stroke-linecap="round"/>
<path d="M1519.3 942.7 L1524.6 937.4" stroke="#c3f26b" stroke-width="2.4" stroke-linecap="round"/>
<path d="M1529.9 942.7 L1524.6 937.4" stroke="#c3f26b" stroke-width="2.4" stroke-linecap="round"/>
<path d="M1540.5 942.7 L1545.8 948" stroke="#c3f26b" stroke-width="2.4" stroke-linecap="round"/>
<path d="M1688.9 942.7 L1694.2 937.4" stroke="#c3f26b" stroke-width="2.4" stroke-linecap="round"/>
<path d="M1699.5 942.7 L1694.2 937.4" stroke="#c3f26b" stroke-width="2.4" stroke-linecap="round"/>
<path d="M1498.1 953.3 L1492.8 948" stroke="#c3f26b" stroke-width="2.4" stroke-linecap="round"/>
<path d="M1508.7 953.3 L1514 958.6" stroke="#c3f26b" stroke-width="2.4" stroke-linecap="round"/>
<path d="M1519.3 953.3 L1514 958.6" stroke="#c3f26b" stroke-width="2.4" stroke-linecap="round"/>
<path d="M1529.9 953.3 L1535.2 948" stroke="#c3f26b" stroke-width="2.4" stroke-linecap="round"/>
<path d="M1540.5 953.3 L1535.2 948" stroke="#c3f26b" stroke-width="2.4" stroke-linecap="round"/>
<path d="M1551.1 953.3 L1556.4 958.6" stroke="#c3f26b" stroke-width="2.4" stroke-linecap="round"/>
<path d="M1667.7 953.3 L1662.4 948" stroke="#c3f26b" stroke-width="2.4" stroke-linecap="round"/>
<path d="M1678.3 953.3 L1683.6 958.6" stroke="#c3f26b" stroke-width="2.4" stroke-linecap="round"/>
<path d="M1688.9 953.3 L1683.6 958.6" stroke="#c3f26b" stroke-width="2.4" stroke-linecap="round"/>
<path d="M1699.5 953.3 L1704.8 948" stroke="#c3f26b" stroke-width="2.4" stroke-linecap="round"/>
<path d="M1710.1 953.3 L1704.8 948" stroke="#c3f26b" stroke-width="2.4" stroke-linecap="round"/>
<path d="M1487.5 963.9 L1492.8 958.6" stroke="#c3f26b" stroke-width="2.4" stroke-linecap="round"/>
<path d="M1498.1 963.9 L1492.8 958.6" stroke="#c3f26b" stroke-width="2.4" stroke-linecap="round"/>
<path d="M1519.3 963.9 L1514 969.2" stroke="#c3f26b" stroke-width="2.4" stroke-linecap="round"/>
<path d="M1529.9 963.9 L1535.2 958.6" stroke="#c3f26b" stroke-width="2.4" stroke-linecap="round"/>
<path d="M1540.5 963.9 L1535.2 958.6" stroke="#c3f26b" stroke-width="2.4" stroke-linecap="round"/>
<path d="M1551.1 963.9 L1556.4 969.2" stroke="#c3f26b" stroke-width="2.4" stroke-linecap="round"/>
<path d="M1667.7 963.9 L1662.4 958.6" stroke="#c3f26b" stroke-width="2.4" stroke-linecap="round"/>
<path d="M1678.3 963.9 L1683.6 969.2" stroke="#c3f26b" stroke-width="2.4" stroke-linecap="round"/>
<path d="M1710.1 963.9 L1704.8 958.6" stroke="#c3f26b" stroke-width="2.4" stroke-linecap="round"/>
<path d="M1572.3 804.9 L1577.6 810.2" stroke="#c3f26b" stroke-width="4" stroke-linecap="round"/>
<path d="M1582.9 804.9 L1577.6 810.2" stroke="#c3f26b" stroke-width="4" stroke-linecap="round"/>
<path d="M1572.3 815.5 L1577.6 820.8" stroke="#c3f26b" stroke-width="4" stroke-linecap="round"/>
<path d="M1582.9 815.5 L1577.6 820.8" stroke="#c3f26b" stroke-width="4" stroke-linecap="round"/>
<path d="M1572.3 826.1 L1577.6 831.4" stroke="#c3f26b" stroke-width="4" stroke-linecap="round"/>
<path d="M1582.9 826.1 L1577.6 831.4" stroke="#c3f26b" stroke-width="4" stroke-linecap="round"/>
<path d="M1572.3 836.7 L1577.6 842" stroke="#c3f26b" stroke-width="4" stroke-linecap="round"/>
<path d="M1582.9 836.7 L1577.6 842" stroke="#c3f26b" stroke-width="4" stroke-linecap="round"/>
<path d="M1572.3 847.3 L1577.6 852.6" stroke="#c3f26b" stroke-width="4" stroke-linecap="round"/>
<path d="M1582.9 847.3 L1577.6 852.6" stroke="#c3f26b" stroke-width="4" stroke-linecap="round"/>
<path d="M1572.3 857.9 L1577.6 863.2" stroke="#c3f26b" stroke-width="4" stroke-linecap="round"/>
<path d="M1582.9 857.9 L1577.6 863.2" stroke="#c3f26b" stroke-width="4" stroke-linecap="round"/>
<path d="M1572.3 868.5 L1577.6 873.8" stroke="#c3f26b" stroke-width="4" stroke-linecap="round"/>
<path d="M1582.9 868.5 L1577.6 873.8" stroke="#c3f26b" stroke-width="4" stroke-linecap="round"/>
<path d="M1593.5 804.9 L1604.1 794.3" stroke="#c3f26b" stroke-width="4" stroke-linecap="round"/>
<path d="M1593.5 826.1 L1625.3 794.3" stroke="#c3f26b" stroke-width="4" stroke-linecap="round"/>
<path d="M1593.5 847.3 L1635.9 804.9" stroke="#c3f26b" stroke-width="4" stroke-linecap="round"/>
<path d="M1614.7 847.3 L1625.3 836.7" stroke="#c3f26b" stroke-width="4" stroke-linecap="round"/>
<path d="M1635.9 826.1 L1646.5 815.5" stroke="#c3f26b" stroke-width="4" stroke-linecap="round"/>
<path d="M1625.3 857.9 L1646.5 836.7" stroke="#c3f26b" stroke-width="4" stroke-linecap="round"/>
<path d="M1635.9 868.5 L1646.5 857.9" stroke="#c3f26b" stroke-width="4" stroke-linecap="round"/>
<path d="M1630.6 873.8 L1646.5 857.9" stroke="#c3f26b" stroke-width="4" stroke-linecap="round"/>
<path d="M1635.9 879.1 L1646.5 868.5" stroke="#c3f26b" stroke-width="4" stroke-linecap="round"/>
<path d="M1593.5 868.5 L1604.1 857.9" stroke="#c3f26b" stroke-width="4" stroke-linecap="round"/>
<path d="M1593.5 868.5 L1604.1 879.1" stroke="#c3f26b" stroke-width="4" stroke-linecap="round"/>
<path d="M1572.3 889.7 L1588.2 873.8" stroke="#c3f26b" stroke-width="4" stroke-linecap="round"/>
<path d="M1582.9 884.4 L1593.5 879.1" stroke="#c3f26b" stroke-width="4" stroke-linecap="round"/>
<path d="M1635.9 879.1 L1641.2 884.4" stroke="#c3f26b" stroke-width="4" stroke-linecap="round"/>
<path d="M1646.5 879.1 L1641.2 884.4" stroke="#c3f26b" stroke-width="4" stroke-linecap="round"/>
<path d="M1635.9 889.7 L1641.2 895" stroke="#c3f26b" stroke-width="4" stroke-linecap="round"/>
<path d="M1646.5 889.7 L1641.2 895" stroke="#c3f26b" stroke-width="4" stroke-linecap="round"/>
<path d="M1646.5 815.5 L1651.8 820.8" stroke="#c3f26b" stroke-width="4" stroke-linecap="round"/>
<path d="M1657.1 815.5 L1651.8 820.8" stroke="#c3f26b" stroke-width="4" stroke-linecap="round"/>
<path d="M1593.5 773.1 L1598.8 778.4" stroke="#c3f26b" stroke-width="4" stroke-linecap="round"/>
<path d="M1604.1 773.1 L1598.8 778.4" stroke="#c3f26b" stroke-width="4" stroke-linecap="round"/>
<path d="M1593.5 783.7 L1598.8 778.4" stroke="#c3f26b" stroke-width="4" stroke-linecap="round"/>
<path d="M1604.1 783.7 L1598.8 778.4" stroke="#c3f26b" stroke-width="4" stroke-linecap="round"/>
<path d="M1593.5 910.9 L1598.8 916.2" stroke="#c3f26b" stroke-width="4" stroke-linecap="round"/>
<path d="M1604.1 910.9 L1598.8 916.2" stroke="#c3f26b" stroke-width="4" stroke-linecap="round"/>
<path d="M1593.5 921.5 L1598.8 916.2" stroke="#c3f26b" stroke-width="4" stroke-linecap="round"/>
<path d="M1604.1 921.5 L1598.8 916.2" stroke="#c3f26b" stroke-width="4" stroke-linecap="round"/>
<path d="M1667.7 879.1 L1673 884.4" stroke="#c3f26b" stroke-width="4" stroke-linecap="round"/>
<path d="M1678.3 879.1 L1673 884.4" stroke="#c3f26b" stroke-width="4" stroke-linecap="round"/>
<path d="M1667.7 889.7 L1673 884.4" stroke="#c3f26b" stroke-width="4" stroke-linecap="round"/>
<path d="M1678.3 889.7 L1673 884.4" stroke="#c3f26b" stroke-width="4" stroke-linecap="round"/>
<path d="M1678.3 847.3 L1683.6 852.6" stroke="#c3f26b" stroke-width="4" stroke-linecap="round"/>
<path d="M1688.9 847.3 L1683.6 852.6" stroke="#c3f26b" stroke-width="4" stroke-linecap="round"/>
<path d="M1678.3 857.9 L1683.6 852.6" stroke="#c3f26b" stroke-width="4" stroke-linecap="round"/>
<path d="M1688.9 857.9 L1683.6 852.6" stroke="#c3f26b" stroke-width="4" stroke-linecap="round"/>
<path d="M1593.5 730.7 L1598.8 736" stroke="#c3f26b" stroke-width="4" stroke-linecap="round"/>
<path d="M1604.1 730.7 L1598.8 736" stroke="#c3f26b" stroke-width="4" stroke-linecap="round"/>
<path d="M1593.5 741.3 L1598.8 736" stroke="#c3f26b" stroke-width="4" stroke-linecap="round"/>
<path d="M1604.1 741.3 L1598.8 736" stroke="#c3f26b" stroke-width="4" stroke-linecap="round"/>
<path d="M1625.3 762.5 L1630.6 767.8" stroke="#c3f26b" stroke-width="4" stroke-linecap="round"/>
<path d="M1635.9 762.5 L1630.6 767.8" stroke="#c3f26b" stroke-width="4" stroke-linecap="round"/>
<path d="M1625.3 773.1 L1630.6 767.8" stroke="#c3f26b" stroke-width="4" stroke-linecap="round"/>
<path d="M1635.9 773.1 L1630.6 767.8" stroke="#c3f26b" stroke-width="4" stroke-linecap="round"/>
<path d="M1529.9 730.7 L1535.2 736" stroke="#c3f26b" stroke-width="4" stroke-linecap="round"/>
<path d="M1540.5 730.7 L1535.2 736" stroke="#c3f26b" stroke-width="4" stroke-linecap="round"/>
<path d="M1529.9 741.3 L1535.2 736" stroke="#c3f26b" stroke-width="4" stroke-linecap="round"/>
<path d="M1540.5 741.3 L1535.2 736" stroke="#c3f26b" stroke-width="4" stroke-linecap="round"/>
<path d="M1551.1 730.7 L1556.4 736" stroke="#c3f26b" stroke-width="4" stroke-linecap="round"/>
<path d="M1561.7 730.7 L1556.4 736" stroke="#c3f26b" stroke-width="4" stroke-linecap="round"/>
<path d="M1551.1 741.3 L1556.4 736" stroke="#c3f26b" stroke-width="4" stroke-linecap="round"/>
<path d="M1561.7 741.3 L1556.4 736" stroke="#c3f26b" stroke-width="4" stroke-linecap="round"/>
<path d="M1540.5 720.1 L1545.8 725.4" stroke="#c3f26b" stroke-width="4" stroke-linecap="round"/>
<path d="M1551.1 720.1 L1545.8 725.4" stroke="#c3f26b" stroke-width="4" stroke-linecap="round"/>
<path d="M1540.5 730.7 L1545.8 725.4" stroke="#c3f26b" stroke-width="4" stroke-linecap="round"/>
<path d="M1551.1 730.7 L1545.8 725.4" stroke="#c3f26b" stroke-width="4" stroke-linecap="round"/>
<path d="M1678.3 815.5 L1683.6 820.8" stroke="#c3f26b" stroke-width="4" stroke-linecap="round"/>
<path d="M1688.9 815.5 L1683.6 820.8" stroke="#c3f26b" stroke-width="4" stroke-linecap="round"/>
<path d="M1678.3 826.1 L1683.6 820.8" stroke="#c3f26b" stroke-width="4" stroke-linecap="round"/>
<path d="M1688.9 826.1 L1683.6 820.8" stroke="#c3f26b" stroke-width="4" stroke-linecap="round"/>
<path d="M1688.9 783.7 L1694.2 789" stroke="#c3f26b" stroke-width="4" stroke-linecap="round"/>
<path d="M1699.5 783.7 L1694.2 789" stroke="#c3f26b" stroke-width="4" stroke-linecap="round"/>
<path d="M1688.9 794.3 L1694.2 789" stroke="#c3f26b" stroke-width="4" stroke-linecap="round"/>
<path d="M1699.5 794.3 L1694.2 789" stroke="#c3f26b" stroke-width="4" stroke-linecap="round"/>
<path d="M1657.1 741.3 L1662.4 746.6" stroke="#c3f26b" stroke-width="4" stroke-linecap="round"/>
<path d="M1667.7 741.3 L1662.4 746.6" stroke="#c3f26b" stroke-width="4" stroke-linecap="round"/>
<path d="M1657.1 751.9 L1662.4 746.6" stroke="#c3f26b" stroke-width="4" stroke-linecap="round"/>
<path d="M1667.7 751.9 L1662.4 746.6" stroke="#c3f26b" stroke-width="4" stroke-linecap="round"/>
<path d="M1614.7 741.3 L1620 746.6" stroke="#c3f26b" stroke-width="4" stroke-linecap="round"/>
<path d="M1625.3 741.3 L1620 746.6" stroke="#c3f26b" stroke-width="4" stroke-linecap="round"/>
<path d="M1614.7 751.9 L1620 746.6" stroke="#c3f26b" stroke-width="4" stroke-linecap="round"/>
<path d="M1625.3 751.9 L1620 746.6" stroke="#c3f26b" stroke-width="4" stroke-linecap="round"/>
<path d="M1657.1 889.7 L1667.7 889.7" stroke="#c3f26b" stroke-width="4" stroke-linecap="round"/>
<path d="M1667.7 857.9 L1678.3 857.9" stroke="#c3f26b" stroke-width="4" stroke-linecap="round"/>
<path d="M1582.9 709.5 L1577.6 714.8" stroke="#c3f26b" stroke-width="4" stroke-linecap="round"/>
<path d="M1593.5 709.5 L1598.8 714.8" stroke="#c3f26b" stroke-width="4" stroke-linecap="round"/>
<path d="M1519.3 720.1 L1524.6 725.4" stroke="#c3f26b" stroke-width="4" stroke-linecap="round"/>
<path d="M1551.1 720.1 L1545.8 725.4" stroke="#c3f26b" stroke-width="4" stroke-linecap="round"/>
<path d="M1561.7 720.1 L1567 725.4" stroke="#c3f26b" stroke-width="4" stroke-linecap="round"/>
<path d="M1582.9 720.1 L1588.2 714.8" stroke="#c3f26b" stroke-width="4" stroke-linecap="round"/>
<path d="M1593.5 720.1 L1588.2 725.4" stroke="#c3f26b" stroke-width="4" stroke-linecap="round"/>
<path d="M1582.9 730.7 L1577.6 725.4" stroke="#c3f26b" stroke-width="4" stroke-linecap="round"/>
<path d="M1593.5 730.7 L1598.8 725.4" stroke="#c3f26b" stroke-width="4" stroke-linecap="round"/>
<path d="M1529.9 741.3 L1524.6 746.6" stroke="#c3f26b" stroke-width="4" stroke-linecap="round"/>
<path d="M1582.9 741.3 L1588.2 746.6" stroke="#c3f26b" stroke-width="4" stroke-linecap="round"/>
<path d="M1593.5 741.3 L1588.2 736" stroke="#c3f26b" stroke-width="4" stroke-linecap="round"/>
<path d="M1561.7 751.9 L1556.4 746.6" stroke="#c3f26b" stroke-width="4" stroke-linecap="round"/>
<path d="M1582.9 751.9 L1577.6 757.2" stroke="#c3f26b" stroke-width="4" stroke-linecap="round"/>
<path d="M1593.5 751.9 L1598.8 757.2" stroke="#c3f26b" stroke-width="4" stroke-linecap="round"/>
<path d="M1582.9 762.5 L1588.2 757.2" stroke="#c3f26b" stroke-width="4" stroke-linecap="round"/>
<path d="M1593.5 762.5 L1588.2 767.8" stroke="#c3f26b" stroke-width="4" stroke-linecap="round"/>
<path d="M1582.9 773.1 L1577.6 767.8" stroke="#c3f26b" stroke-width="4" stroke-linecap="round"/>
<path d="M1593.5 773.1 L1598.8 767.8" stroke="#c3f26b" stroke-width="4" stroke-linecap="round"/>
<path d="M1657.1 773.1 L1662.4 778.4" stroke="#c3f26b" stroke-width="4" stroke-linecap="round"/>
<path d="M1593.5 783.7 L1588.2 778.4" stroke="#c3f26b" stroke-width="4" stroke-linecap="round"/>
<path d="M1657.1 783.7 L1651.8 789" stroke="#c3f26b" stroke-width="4" stroke-linecap="round"/>
<path d="M1678.3 804.9 L1673 810.2" stroke="#c3f26b" stroke-width="4" stroke-linecap="round"/>
<path d="M1699.5 804.9 L1694.2 799.6" stroke="#c3f26b" stroke-width="4" stroke-linecap="round"/>
<path d="M1646.5 815.5 L1641.2 820.8" stroke="#c3f26b" stroke-width="4" stroke-linecap="round"/>
<path d="M1688.9 815.5 L1683.6 820.8" stroke="#c3f26b" stroke-width="4" stroke-linecap="round"/>
<path d="M1699.5 815.5 L1704.8 820.8" stroke="#c3f26b" stroke-width="4" stroke-linecap="round"/>
<path d="M1593.5 826.1 L1588.2 820.8" stroke="#c3f26b" stroke-width="4" stroke-linecap="round"/>
<path d="M1614.7 826.1 L1609.4 831.4" stroke="#c3f26b" stroke-width="4" stroke-linecap="round"/>
<path d="M1604.1 836.7 L1598.8 831.4" stroke="#c3f26b" stroke-width="4" stroke-linecap="round"/>
<path d="M1635.9 836.7 L1641.2 842" stroke="#c3f26b" stroke-width="4" stroke-linecap="round"/>
<path d="M1699.5 836.7 L1704.8 831.4" stroke="#c3f26b" stroke-width="4" stroke-linecap="round"/>
<path d="M1614.7 847.3 L1609.4 842" stroke="#c3f26b" stroke-width="4" stroke-linecap="round"/>
<path d="M1604.1 868.5 L1609.4 863.2" stroke="#c3f26b" stroke-width="4" stroke-linecap="round"/>
<polyline points="1594,716 1594,770 1598,776" fill="none" stroke="#000" stroke-width="3.2" stroke-linejoin="miter" stroke-linecap="butt"/>
<polyline points="1594,716 1594,770 1598,776" fill="none" stroke="#c3f26b" stroke-width="1.1" stroke-linejoin="miter"/>
<path fill="#f6b070" d="M1485 707.3h5v4.4h-5zM1495.6 707.3h5v4.4h-5zM1506.2 707.3h5v4.4h-5zM1516.8 707.3h5v4.4h-5zM1527.4 707.3h5v4.4h-5zM1538 707.3h5v4.4h-5zM1548.6 707.3h5v4.4h-5zM1559.2 707.3h5v4.4h-5zM1569.8 707.3h5v4.4h-5zM1601.6 707.3h5v4.4h-5zM1622.8 707.3h5v4.4h-5zM1633.4 707.3h5v4.4h-5zM1644 707.3h5v4.4h-5zM1654.6 707.3h5v4.4h-5zM1728.8 707.3h5v4.4h-5zM1739.4 707.3h5v4.4h-5zM1485 717.9h5v4.4h-5zM1495.6 717.9h5v4.4h-5zM1506.2 717.9h5v4.4h-5zM1527.4 717.9h5v4.4h-5zM1538 717.9h5v4.4h-5zM1569.8 717.9h5v4.4h-5zM1601.6 717.9h5v4.4h-5zM1622.8 717.9h5v4.4h-5zM1633.4 717.9h5v4.4h-5zM1644 717.9h5v4.4h-5zM1654.6 717.9h5v4.4h-5zM1686.4 717.9h5v4.4h-5zM1728.8 717.9h5v4.4h-5zM1739.4 717.9h5v4.4h-5zM1485 728.5h5v4.4h-5zM1495.6 728.5h5v4.4h-5zM1506.2 728.5h5v4.4h-5zM1516.8 728.5h5v4.4h-5zM1527.4 728.5h5v4.4h-5zM1538 728.5h5v4.4h-5zM1548.6 728.5h5v4.4h-5zM1559.2 728.5h5v4.4h-5zM1569.8 728.5h5v4.4h-5zM1601.6 728.5h5v4.4h-5zM1622.8 728.5h5v4.4h-5zM1633.4 728.5h5v4.4h-5zM1644 728.5h5v4.4h-5zM1654.6 728.5h5v4.4h-5zM1665.2 728.5h5v4.4h-5zM1697 728.5h5v4.4h-5zM1728.8 728.5h5v4.4h-5zM1739.4 728.5h5v4.4h-5zM1506.2 739.1h5v4.4h-5zM1516.8 739.1h5v4.4h-5zM1538 739.1h5v4.4h-5zM1548.6 739.1h5v4.4h-5zM1559.2 739.1h5v4.4h-5zM1569.8 739.1h5v4.4h-5zM1601.6 739.1h5v4.4h-5zM1612.2 739.1h5v4.4h-5zM1622.8 739.1h5v4.4h-5zM1633.4 739.1h5v4.4h-5zM1644 739.1h5v4.4h-5zM1654.6 739.1h5v4.4h-5zM1665.2 739.1h5v4.4h-5zM1707.6 739.1h5v4.4h-5zM1485 749.7h5v4.4h-5zM1527.4 749.7h5v4.4h-5zM1538 749.7h5v4.4h-5zM1548.6 749.7h5v4.4h-5zM1569.8 749.7h5v4.4h-5zM1601.6 749.7h5v4.4h-5zM1612.2 749.7h5v4.4h-5zM1622.8 749.7h5v4.4h-5zM1633.4 749.7h5v4.4h-5zM1644 749.7h5v4.4h-5zM1654.6 749.7h5v4.4h-5zM1665.2 749.7h5v4.4h-5zM1675.8 749.7h5v4.4h-5zM1686.4 749.7h5v4.4h-5zM1697 749.7h5v4.4h-5zM1707.6 749.7h5v4.4h-5zM1728.8 749.7h5v4.4h-5zM1538 760.3h5v4.4h-5zM1548.6 760.3h5v4.4h-5zM1559.2 760.3h5v4.4h-5zM1569.8 760.3h5v4.4h-5zM1601.6 760.3h5v4.4h-5zM1612.2 760.3h5v4.4h-5zM1622.8 760.3h5v4.4h-5zM1633.4 760.3h5v4.4h-5zM1644 760.3h5v4.4h-5zM1654.6 760.3h5v4.4h-5zM1665.2 760.3h5v4.4h-5zM1675.8 760.3h5v4.4h-5zM1686.4 760.3h5v4.4h-5zM1697 760.3h5v4.4h-5zM1707.6 760.3h5v4.4h-5zM1739.4 760.3h5v4.4h-5zM1538 770.9h5v4.4h-5zM1548.6 770.9h5v4.4h-5zM1559.2 770.9h5v4.4h-5zM1569.8 770.9h5v4.4h-5zM1601.6 770.9h5v4.4h-5zM1612.2 770.9h5v4.4h-5zM1622.8 770.9h5v4.4h-5zM1633.4 770.9h5v4.4h-5zM1644 770.9h5v4.4h-5zM1665.2 770.9h5v4.4h-5zM1675.8 770.9h5v4.4h-5zM1686.4 770.9h5v4.4h-5zM1697 770.9h5v4.4h-5zM1707.6 770.9h5v4.4h-5zM1485 781.5h5v4.4h-5zM1495.6 781.5h5v4.4h-5zM1538 781.5h5v4.4h-5zM1548.6 781.5h5v4.4h-5zM1559.2 781.5h5v4.4h-5zM1569.8 781.5h5v4.4h-5zM1580.4 781.5h5v4.4h-5zM1601.6 781.5h5v4.4h-5zM1612.2 781.5h5v4.4h-5zM1622.8 781.5h5v4.4h-5zM1633.4 781.5h5v4.4h-5zM1644 781.5h5v4.4h-5zM1665.2 781.5h5v4.4h-5zM1675.8 781.5h5v4.4h-5zM1686.4 781.5h5v4.4h-5zM1697 781.5h5v4.4h-5zM1707.6 781.5h5v4.4h-5zM1548.6 792.1h5v4.4h-5zM1559.2 792.1h5v4.4h-5zM1569.8 792.1h5v4.4h-5zM1580.4 792.1h5v4.4h-5zM1591 792.1h5v4.4h-5zM1601.6 792.1h5v4.4h-5zM1612.2 792.1h5v4.4h-5zM1622.8 792.1h5v4.4h-5zM1633.4 792.1h5v4.4h-5zM1644 792.1h5v4.4h-5zM1654.6 792.1h5v4.4h-5zM1665.2 792.1h5v4.4h-5zM1675.8 792.1h5v4.4h-5zM1686.4 792.1h5v4.4h-5zM1697 792.1h5v4.4h-5zM1707.6 792.1h5v4.4h-5zM1718.2 792.1h5v4.4h-5zM1728.8 792.1h5v4.4h-5zM1739.4 792.1h5v4.4h-5zM1538 802.7h5v4.4h-5zM1548.6 802.7h5v4.4h-5zM1559.2 802.7h5v4.4h-5zM1569.8 802.7h5v4.4h-5zM1580.4 802.7h5v4.4h-5zM1591 802.7h5v4.4h-5zM1601.6 802.7h5v4.4h-5zM1612.2 802.7h5v4.4h-5zM1622.8 802.7h5v4.4h-5zM1633.4 802.7h5v4.4h-5zM1644 802.7h5v4.4h-5zM1654.6 802.7h5v4.4h-5zM1665.2 802.7h5v4.4h-5zM1686.4 802.7h5v4.4h-5zM1707.6 802.7h5v4.4h-5zM1718.2 802.7h5v4.4h-5zM1728.8 802.7h5v4.4h-5zM1739.4 802.7h5v4.4h-5zM1527.4 813.3h5v4.4h-5zM1538 813.3h5v4.4h-5zM1548.6 813.3h5v4.4h-5zM1559.2 813.3h5v4.4h-5zM1569.8 813.3h5v4.4h-5zM1580.4 813.3h5v4.4h-5zM1591 813.3h5v4.4h-5zM1601.6 813.3h5v4.4h-5zM1612.2 813.3h5v4.4h-5zM1622.8 813.3h5v4.4h-5zM1633.4 813.3h5v4.4h-5zM1654.6 813.3h5v4.4h-5zM1665.2 813.3h5v4.4h-5zM1675.8 813.3h5v4.4h-5zM1707.6 813.3h5v4.4h-5zM1718.2 813.3h5v4.4h-5zM1728.8 813.3h5v4.4h-5zM1739.4 813.3h5v4.4h-5zM1485 823.9h5v4.4h-5zM1495.6 823.9h5v4.4h-5zM1516.8 823.9h5v4.4h-5zM1527.4 823.9h5v4.4h-5zM1538 823.9h5v4.4h-5zM1548.6 823.9h5v4.4h-5zM1559.2 823.9h5v4.4h-5zM1569.8 823.9h5v4.4h-5zM1580.4 823.9h5v4.4h-5zM1601.6 823.9h5v4.4h-5zM1622.8 823.9h5v4.4h-5zM1633.4 823.9h5v4.4h-5zM1644 823.9h5v4.4h-5zM1654.6 823.9h5v4.4h-5zM1665.2 823.9h5v4.4h-5zM1675.8 823.9h5v4.4h-5zM1686.4 823.9h5v4.4h-5zM1697 823.9h5v4.4h-5zM1707.6 823.9h5v4.4h-5zM1485 834.5h5v4.4h-5zM1506.2 834.5h5v4.4h-5zM1516.8 834.5h5v4.4h-5zM1527.4 834.5h5v4.4h-5zM1538 834.5h5v4.4h-5zM1548.6 834.5h5v4.4h-5zM1559.2 834.5h5v4.4h-5zM1569.8 834.5h5v4.4h-5zM1580.4 834.5h5v4.4h-5zM1591 834.5h5v4.4h-5zM1612.2 834.5h5v4.4h-5zM1622.8 834.5h5v4.4h-5zM1644 834.5h5v4.4h-5zM1654.6 834.5h5v4.4h-5zM1665.2 834.5h5v4.4h-5zM1675.8 834.5h5v4.4h-5zM1686.4 834.5h5v4.4h-5zM1506.2 845.1h5v4.4h-5zM1516.8 845.1h5v4.4h-5zM1527.4 845.1h5v4.4h-5zM1538 845.1h5v4.4h-5zM1548.6 845.1h5v4.4h-5zM1559.2 845.1h5v4.4h-5zM1569.8 845.1h5v4.4h-5zM1580.4 845.1h5v4.4h-5zM1591 845.1h5v4.4h-5zM1601.6 845.1h5v4.4h-5zM1622.8 845.1h5v4.4h-5zM1633.4 845.1h5v4.4h-5zM1644 845.1h5v4.4h-5zM1654.6 845.1h5v4.4h-5zM1665.2 845.1h5v4.4h-5zM1675.8 845.1h5v4.4h-5zM1686.4 845.1h5v4.4h-5zM1495.6 855.7h5v4.4h-5zM1506.2 855.7h5v4.4h-5zM1516.8 855.7h5v4.4h-5zM1527.4 855.7h5v4.4h-5zM1538 855.7h5v4.4h-5zM1548.6 855.7h5v4.4h-5zM1559.2 855.7h5v4.4h-5zM1569.8 855.7h5v4.4h-5zM1580.4 855.7h5v4.4h-5zM1591 855.7h5v4.4h-5zM1601.6 855.7h5v4.4h-5zM1612.2 855.7h5v4.4h-5zM1622.8 855.7h5v4.4h-5zM1633.4 855.7h5v4.4h-5zM1644 855.7h5v4.4h-5zM1654.6 855.7h5v4.4h-5zM1665.2 855.7h5v4.4h-5zM1675.8 855.7h5v4.4h-5zM1728.8 855.7h5v4.4h-5zM1495.6 866.3h5v4.4h-5zM1506.2 866.3h5v4.4h-5zM1516.8 866.3h5v4.4h-5zM1527.4 866.3h5v4.4h-5zM1538 866.3h5v4.4h-5zM1548.6 866.3h5v4.4h-5zM1559.2 866.3h5v4.4h-5zM1569.8 866.3h5v4.4h-5zM1580.4 866.3h5v4.4h-5zM1591 866.3h5v4.4h-5zM1612.2 866.3h5v4.4h-5zM1622.8 866.3h5v4.4h-5zM1633.4 866.3h5v4.4h-5zM1644 866.3h5v4.4h-5zM1654.6 866.3h5v4.4h-5zM1665.2 866.3h5v4.4h-5zM1675.8 866.3h5v4.4h-5zM1495.6 876.9h5v4.4h-5zM1516.8 876.9h5v4.4h-5zM1527.4 876.9h5v4.4h-5zM1538 876.9h5v4.4h-5zM1548.6 876.9h5v4.4h-5zM1559.2 876.9h5v4.4h-5zM1569.8 876.9h5v4.4h-5zM1580.4 876.9h5v4.4h-5zM1591 876.9h5v4.4h-5zM1601.6 876.9h5v4.4h-5zM1612.2 876.9h5v4.4h-5zM1622.8 876.9h5v4.4h-5zM1633.4 876.9h5v4.4h-5zM1644 876.9h5v4.4h-5zM1654.6 876.9h5v4.4h-5zM1665.2 876.9h5v4.4h-5zM1675.8 876.9h5v4.4h-5zM1686.4 876.9h5v4.4h-5zM1707.6 876.9h5v4.4h-5zM1506.2 887.5h5v4.4h-5zM1527.4 887.5h5v4.4h-5zM1538 887.5h5v4.4h-5zM1548.6 887.5h5v4.4h-5zM1559.2 887.5h5v4.4h-5zM1569.8 887.5h5v4.4h-5zM1580.4 887.5h5v4.4h-5zM1591 887.5h5v4.4h-5zM1601.6 887.5h5v4.4h-5zM1612.2 887.5h5v4.4h-5zM1622.8 887.5h5v4.4h-5zM1633.4 887.5h5v4.4h-5zM1644 887.5h5v4.4h-5zM1654.6 887.5h5v4.4h-5zM1665.2 887.5h5v4.4h-5zM1675.8 887.5h5v4.4h-5zM1686.4 887.5h5v4.4h-5zM1718.2 887.5h5v4.4h-5zM1485 898.1h5v4.4h-5zM1538 898.1h5v4.4h-5zM1548.6 898.1h5v4.4h-5zM1559.2 898.1h5v4.4h-5zM1569.8 898.1h5v4.4h-5zM1580.4 898.1h5v4.4h-5zM1591 898.1h5v4.4h-5zM1601.6 898.1h5v4.4h-5zM1612.2 898.1h5v4.4h-5zM1622.8 898.1h5v4.4h-5zM1633.4 898.1h5v4.4h-5zM1644 898.1h5v4.4h-5zM1654.6 898.1h5v4.4h-5zM1665.2 898.1h5v4.4h-5zM1675.8 898.1h5v4.4h-5zM1686.4 898.1h5v4.4h-5zM1697 898.1h5v4.4h-5zM1516.8 908.7h5v4.4h-5zM1538 908.7h5v4.4h-5zM1548.6 908.7h5v4.4h-5zM1559.2 908.7h5v4.4h-5zM1569.8 908.7h5v4.4h-5zM1580.4 908.7h5v4.4h-5zM1591 908.7h5v4.4h-5zM1601.6 908.7h5v4.4h-5zM1612.2 908.7h5v4.4h-5zM1622.8 908.7h5v4.4h-5zM1633.4 908.7h5v4.4h-5zM1644 908.7h5v4.4h-5zM1654.6 908.7h5v4.4h-5zM1665.2 908.7h5v4.4h-5zM1675.8 908.7h5v4.4h-5zM1686.4 908.7h5v4.4h-5zM1697 908.7h5v4.4h-5zM1538 919.3h5v4.4h-5zM1548.6 919.3h5v4.4h-5zM1559.2 919.3h5v4.4h-5zM1569.8 919.3h5v4.4h-5zM1580.4 919.3h5v4.4h-5zM1591 919.3h5v4.4h-5zM1601.6 919.3h5v4.4h-5zM1612.2 919.3h5v4.4h-5zM1622.8 919.3h5v4.4h-5zM1633.4 919.3h5v4.4h-5zM1644 919.3h5v4.4h-5zM1654.6 919.3h5v4.4h-5zM1665.2 919.3h5v4.4h-5zM1675.8 919.3h5v4.4h-5zM1686.4 919.3h5v4.4h-5zM1697 919.3h5v4.4h-5zM1707.6 919.3h5v4.4h-5zM1718.2 919.3h5v4.4h-5zM1728.8 919.3h5v4.4h-5zM1739.4 919.3h5v4.4h-5zM1538 929.9h5v4.4h-5zM1548.6 929.9h5v4.4h-5zM1559.2 929.9h5v4.4h-5zM1569.8 929.9h5v4.4h-5zM1580.4 929.9h5v4.4h-5zM1591 929.9h5v4.4h-5zM1601.6 929.9h5v4.4h-5zM1612.2 929.9h5v4.4h-5zM1622.8 929.9h5v4.4h-5zM1633.4 929.9h5v4.4h-5zM1644 929.9h5v4.4h-5zM1654.6 929.9h5v4.4h-5zM1665.2 929.9h5v4.4h-5zM1675.8 929.9h5v4.4h-5zM1686.4 929.9h5v4.4h-5zM1697 929.9h5v4.4h-5zM1707.6 929.9h5v4.4h-5zM1718.2 929.9h5v4.4h-5zM1728.8 929.9h5v4.4h-5zM1739.4 929.9h5v4.4h-5zM1548.6 940.5h5v4.4h-5zM1559.2 940.5h5v4.4h-5zM1569.8 940.5h5v4.4h-5zM1580.4 940.5h5v4.4h-5zM1591 940.5h5v4.4h-5zM1601.6 940.5h5v4.4h-5zM1612.2 940.5h5v4.4h-5zM1622.8 940.5h5v4.4h-5zM1633.4 940.5h5v4.4h-5zM1644 940.5h5v4.4h-5zM1654.6 940.5h5v4.4h-5zM1665.2 940.5h5v4.4h-5zM1675.8 940.5h5v4.4h-5zM1707.6 940.5h5v4.4h-5zM1718.2 940.5h5v4.4h-5zM1728.8 940.5h5v4.4h-5zM1739.4 940.5h5v4.4h-5zM1485 951.1h5v4.4h-5zM1559.2 951.1h5v4.4h-5zM1569.8 951.1h5v4.4h-5zM1580.4 951.1h5v4.4h-5zM1591 951.1h5v4.4h-5zM1601.6 951.1h5v4.4h-5zM1612.2 951.1h5v4.4h-5zM1622.8 951.1h5v4.4h-5zM1633.4 951.1h5v4.4h-5zM1644 951.1h5v4.4h-5zM1654.6 951.1h5v4.4h-5zM1718.2 951.1h5v4.4h-5zM1728.8 951.1h5v4.4h-5zM1739.4 951.1h5v4.4h-5zM1506.2 961.7h5v4.4h-5zM1559.2 961.7h5v4.4h-5zM1569.8 961.7h5v4.4h-5zM1580.4 961.7h5v4.4h-5zM1591 961.7h5v4.4h-5zM1601.6 961.7h5v4.4h-5zM1612.2 961.7h5v4.4h-5zM1622.8 961.7h5v4.4h-5zM1633.4 961.7h5v4.4h-5zM1644 961.7h5v4.4h-5zM1654.6 961.7h5v4.4h-5zM1686.4 961.7h5v4.4h-5zM1697 961.7h5v4.4h-5zM1718.2 961.7h5v4.4h-5zM1728.8 961.7h5v4.4h-5zM1739.4 961.7h5v4.4h-5z"/>
<path fill="#ffb85f" d="M1612.2 749.4h5v5h-5zM1675.8 887.2h5v5h-5zM1527.4 802.4h5v5h-5zM1538 717.6h5v5h-5zM1686.4 707h5v5h-5zM1665.2 738.8h5v5h-5zM1633.4 844.8h5v5h-5zM1569.8 802.4h5v5h-5zM1591 770.6h5v5h-5zM1485 760h5v5h-5zM1516.8 940.2h5v5h-5zM1485 855.4h5v5h-5zM1506.2 823.6h5v5h-5zM1601.6 855.4h5v5h-5zM1622.8 791.8h5v5h-5zM1548.6 728.2h5v5h-5zM1559.2 717.6h5v5h-5zM1707.6 707h5v5h-5zM1675.8 717.6h5v5h-5zM1739.4 887.2h5v5h-5zM1644 855.4h5v5h-5zM1675.8 813h5v5h-5zM1495.6 961.4h5v5h-5zM1527.4 728.2h5v5h-5zM1516.8 770.6h5v5h-5zM1697 940.2h5v5h-5zM1686.4 728.2h5v5h-5zM1718.2 908.4h5v5h-5zM1580.4 717.6h5v5h-5zM1633.4 866h5v5h-5zM1538 738.8h5v5h-5zM1569.8 823.6h5v5h-5zM1686.4 823.6h5v5h-5zM1580.4 813h5v5h-5zM1516.8 961.4h5v5h-5zM1506.2 749.4h5v5h-5zM1527.4 950.8h5v5h-5zM1665.2 950.8h5v5h-5zM1601.6 781.2h5v5h-5zM1485 876.6h5v5h-5zM1601.6 876.6h5v5h-5zM1495.6 791.8h5v5h-5zM1622.8 813h5v5h-5zM1654.6 770.6h5v5h-5zM1675.8 738.8h5v5h-5zM1707.6 728.2h5v5h-5zM1495.6 887.2h5v5h-5zM1739.4 908.4h5v5h-5zM1644 876.6h5v5h-5zM1591 919h5v5h-5zM1559.2 738.8h5v5h-5zM1718.2 738.8h5v5h-5zM1697 866h5v5h-5zM1718.2 834.2h5v5h-5zM1516.8 791.8h5v5h-5zM1580.4 738.8h5v5h-5zM1516.8 887.2h5v5h-5zM1633.4 887.2h5v5h-5zM1665.2 876.6h5v5h-5zM1580.4 834.2h5v5h-5zM1485 802.4h5v5h-5zM1538 950.8h5v5h-5zM1739.4 738.8h5v5h-5zM1622.8 738.8h5v5h-5zM1495.6 813h5v5h-5zM1739.4 834.2h5v5h-5zM1622.8 834.2h5v5h-5zM1495.6 908.4h5v5h-5zM1675.8 855.4h5v5h-5zM1675.8 950.8h5v5h-5zM1718.2 760h5v5h-5zM1697 791.8h5v5h-5zM1516.8 717.6h5v5h-5zM1665.2 707h5v5h-5zM1718.2 855.4h5v5h-5zM1697 887.2h5v5h-5zM1612.2 844.8h5v5h-5zM1516.8 813h5v5h-5zM1728.8 844.8h5v5h-5zM1580.4 760h5v5h-5zM1601.6 728.2h5v5h-5zM1527.4 897.8h5v5h-5zM1580.4 855.4h5v5h-5zM1495.6 738.8h5v5h-5zM1622.8 760h5v5h-5zM1591 866h5v5h-5zM1495.6 834.2h5v5h-5zM1739.4 855.4h5v5h-5zM1622.8 855.4h5v5h-5zM1654.6 813h5v5h-5zM1495.6 929.6h5v5h-5zM1506.2 919h5v5h-5zM1697 717.6h5v5h-5zM1675.8 876.6h5v5h-5zM1697 813h5v5h-5zM1718.2 781.2h5v5h-5zM1728.8 770.6h5v5h-5zM1718.2 876.6h5v5h-5zM1707.6 897.8h5v5h-5zM1728.8 866h5v5h-5zM1633.4 834.2h5v5h-5zM1516.8 929.6h5v5h-5zM1527.4 919h5v5h-5zM1580.4 876.6h5v5h-5zM1580.4 881.9h5v5h-5zM1495.6 760h5v5h-5zM1739.4 781.2h5v5h-5zM1548.6 717.6h5v5h-5zM1654.6 738.8h5v5h-5zM1675.8 707h5v5h-5zM1739.4 876.6h5v5h-5zM1675.8 802.4h5v5h-5zM1495.6 950.8h5v5h-5zM1506.2 940.2h5v5h-5zM1697 738.8h5v5h-5zM1718.2 707h5v5h-5zM1697 834.2h5v5h-5zM1516.8 760h5v5h-5zM1633.4 760h5v5h-5zM1718.2 897.8h5v5h-5zM1538 728.2h5v5h-5zM1580.4 707h5v5h-5zM1728.8 887.2h5v5h-5zM1665.2 749.4h5v5h-5zM1580.4 802.4h5v5h-5zM1516.8 950.8h5v5h-5zM1527.4 940.2h5v5h-5zM1591 717.6h5v5h-5zM1569.8 844.8h5v5h-5zM1686.4 844.8h5v5h-5zM1506.2 770.6h5v5h-5zM1686.4 940.2h5v5h-5zM1675.8 728.2h5v5h-5zM1739.4 897.8h5v5h-5zM1591 908.4h5v5h-5zM1559.2 728.2h5v5h-5zM1675.8 823.6h5v5h-5zM1718.2 728.2h5v5h-5zM1697 855.4h5v5h-5zM1718.2 823.6h5v5h-5zM1707.6 844.8h5v5h-5zM1516.8 781.2h5v5h-5zM1697 950.8h5v5h-5zM1527.4 770.6h5v5h-5zM1548.6 961.4h5v5h-5zM1580.4 728.2h5v5h-5zM1728.8 908.4h5v5h-5zM1633.4 876.6h5v5h-5zM1527.4 961.4h5v5h-5zM1591 738.8h5v5h-5zM1686.4 866h5v5h-5zM1569.8 866h5v5h-5zM1495.6 802.4h5v5h-5zM1739.4 823.6h5v5h-5zM1506.2 791.8h5v5h-5zM1654.6 781.2h5v5h-5zM1559.2 749.4h5v5h-5zM1495.6 897.8h5v5h-5zM1485 919h5v5h-5zM1601.6 919h5v5h-5zM1697 781.2h5v5h-5zM1718.2 749.4h5v5h-5zM1728.8 738.8h5v5h-5zM1612.2 738.8h5v5h-5zM1697 876.6h5v5h-5zM1718.2 844.8h5v5h-5zM1707.6 866h5v5h-5zM1728.8 834.2h5v5h-5zM1516.8 802.4h5v5h-5zM1633.4 802.4h5v5h-5zM1527.4 791.8h5v5h-5zM1707.6 961.4h5v5h-5zM1516.8 897.8h5v5h-5zM1686.4 791.8h5v5h-5zM1591 760h5v5h-5zM1739.4 749.4h5v5h-5zM1622.8 749.4h5v5h-5zM1569.8 887.2h5v5h-5zM1485 844.8h5v5h-5zM1506.2 813h5v5h-5zM1495.6 919h5v5h-5zM1485 940.2h5v5h-5zM1506.2 908.4h5v5h-5zM1697 707h5v5h-5zM1697 802.4h5v5h-5zM1718.2 770.6h5v5h-5zM1728.8 760h5v5h-5zM1707.6 887.2h5v5h-5zM1633.4 823.6h5v5h-5zM1527.4 908.4h5v5h-5zM1686.4 813h5v5h-5zM1591 781.2h5v5h-5zM1495.6 749.4h5v5h-5zM1485 770.6h5v5h-5zM1739.4 770.6h5v5h-5zM1569.8 813h5v5h-5zM1591 876.6h5v5h-5zM1495.6 844.8h5v5h-5zM1485 866h5v5h-5zM1601.6 866h5v5h-5zM1601.6 770.6h5v5h-5zM1485 961.4h5v5h-5zM1506.2 929.6h5v5h-5zM1548.6 738.8h5v5h-5zM1707.6 717.6h5v5h-5zM1644 866h5v5h-5zM1728.8 781.2h5v5h-5zM1516.8 749.4h5v5h-5zM1527.4 738.8h5v5h-5zM1707.6 908.4h5v5h-5zM1728.8 876.6h5v5h-5zM1527.4 929.6h5v5h-5zM1686.4 738.8h5v5h-5zM1591 707h5v5h-5zM1569.8 834.2h5v5h-5zM1591 802.4h5v5h-5zM1495.6 770.6h5v5h-5zM1485 791.8h5v5h-5zM1506.2 760h5v5h-5zM1538 940.2h5v5h-5zM1665.2 961.4h5v5h-5zM1580.4 823.6h5v5h-5zM1485 887.2h5v5h-5zM1601.6 791.8h5v5h-5zM1654.6 749.4h5v5h-5zM1506.2 950.8h5v5h-5zM1718.2 717.6h5v5h-5zM1644 887.2h5v5h-5zM1697 844.8h5v5h-5zM1675.8 844.8h5v5h-5zM1707.6 834.2h5v5h-5zM1612.2 802.4h5v5h-5zM1548.6 950.8h5v5h-5zM1633.4 770.6h5v5h-5zM1527.4 760h5v5h-5zM1728.8 897.8h5v5h-5zM1591 728.2h5v5h-5zM1580.4 749.4h5v5h-5zM1665.2 887.2h5v5h-5zM1686.4 855.4h5v5h-5zM1591 823.6h5v5h-5zM1580.4 844.8h5v5h-5zM1485 813h5v5h-5zM1506.2 781.2h5v5h-5zM1686.4 950.8h5v5h-5zM1538 961.4h5v5h-5zM1569.8 855.4h5v5h-5zM1485 908.4h5v5h-5zM1506.2 876.6h5v5h-5zM1601.6 813h5v5h-5zM1601.6 908.4h5v5h-5zM1739.4 844.8h5v5h-5zM1644 813h5v5h-5zM1707.6 855.4h5v5h-5zM1612.2 823.6h5v5h-5zM1728.8 823.6h5v5h-5zM1527.4 781.2h5v5h-5zM1707.6 950.8h5v5h-5zM1675.8 961.4h5v5h-5zM1665.2 717.6h5v5h-5zM1718.2 866h5v5h-5zM1538 791.8h5v5h-5zM1686.4 781.2h5v5h-5zM1591 749.4h5v5h-5zM1580.4 770.6h5v5h-5zM1485 738.8h5v5h-5zM1516.8 919h5v5h-5zM1601.6 738.8h5v5h-5zM1591 844.8h5v5h-5zM1580.4 866h5v5h-5zM1601.6 834.2h5v5h-5zM1506.2 802.4h5v5h-5zM1485 929.6h5v5h-5zM1506.2 897.8h5v5h-5zM1622.8 770.6h5v5h-5zM1739.4 866h5v5h-5zM1644 834.2h5v5h-5zM1495.6 940.2h5v5h-5z"/>
<circle cx="1683.6" cy="852.6" r="2.4" fill="#ffb85f" />
<rect x="1682.9" y="851.9" width="1.4" height="1.4" fill="#7a4a1a"/>
<circle cx="1715.4" cy="778.4" r="2.4" fill="#ffb85f" />
<rect x="1714.7" y="777.7" width="1.4" height="1.4" fill="#7a4a1a"/>
<circle cx="1620" cy="746.6" r="2.4" fill="#ffb85f" />
<rect x="1619.3" y="745.9" width="1.4" height="1.4" fill="#7a4a1a"/>
<circle cx="1736.6" cy="842" r="2.4" fill="#ffb85f" />
<rect x="1735.9" y="841.3" width="1.4" height="1.4" fill="#7a4a1a"/>
<circle cx="1524.6" cy="810.2" r="2.4" fill="#ffb85f" />
<rect x="1523.9" y="809.5" width="1.4" height="1.4" fill="#7a4a1a"/>
<circle cx="1620" cy="842" r="2.4" fill="#ffb85f" />
<rect x="1619.3" y="841.3" width="1.4" height="1.4" fill="#7a4a1a"/>
<circle cx="1524.6" cy="905.6" r="2.4" fill="#ffb85f" />
<rect x="1523.9" y="904.9" width="1.4" height="1.4" fill="#7a4a1a"/>
<circle cx="1482.2" cy="810.2" r="2.4" fill="#ffb85f" />
<rect x="1481.5" y="809.5" width="1.4" height="1.4" fill="#7a4a1a"/>
<circle cx="1694.2" cy="799.6" r="2.4" fill="#ffb85f" />
<rect x="1693.5" y="798.9" width="1.4" height="1.4" fill="#7a4a1a"/>
<circle cx="1598.8" cy="767.8" r="2.4" fill="#ffb85f" />
<rect x="1598.1" y="767.1" width="1.4" height="1.4" fill="#7a4a1a"/>
<circle cx="1747.2" cy="757.2" r="2.4" fill="#ffb85f" />
<rect x="1746.5" y="756.5" width="1.4" height="1.4" fill="#7a4a1a"/>
<circle cx="1662.4" cy="704.2" r="2.4" fill="#ffb85f" />
<rect x="1661.7" y="703.5" width="1.4" height="1.4" fill="#7a4a1a"/>
<circle cx="1694.2" cy="895" r="2.4" fill="#ffb85f" />
<rect x="1693.5" y="894.3" width="1.4" height="1.4" fill="#7a4a1a"/>
<circle cx="1598.8" cy="863.2" r="2.4" fill="#ffb85f" />
<rect x="1598.1" y="862.5" width="1.4" height="1.4" fill="#7a4a1a"/>
<circle cx="1514" cy="820.8" r="2.4" fill="#ffb85f" />
<rect x="1513.3" y="820.1" width="1.4" height="1.4" fill="#7a4a1a"/>
<circle cx="1492.8" cy="948" r="2.4" fill="#ffb85f" />
<rect x="1492.1" y="947.3" width="1.4" height="1.4" fill="#7a4a1a"/>
<circle cx="1514" cy="916.2" r="2.4" fill="#ffb85f" />
<rect x="1513.3" y="915.5" width="1.4" height="1.4" fill="#7a4a1a"/>
<circle cx="1704.8" cy="704.2" r="2.4" fill="#ffb85f" />
<rect x="1704.1" y="703.5" width="1.4" height="1.4" fill="#7a4a1a"/>
<circle cx="1736.6" cy="767.8" r="2.4" fill="#ffb85f" />
<rect x="1735.9" y="767.1" width="1.4" height="1.4" fill="#7a4a1a"/>
<circle cx="1726" cy="873.8" r="2.4" fill="#ffb85f" />
<rect x="1725.3" y="873.1" width="1.4" height="1.4" fill="#7a4a1a"/>
<circle cx="1715.4" cy="895" r="2.4" fill="#ffb85f" />
<rect x="1714.7" y="894.3" width="1.4" height="1.4" fill="#7a4a1a"/>
<circle cx="1588.2" cy="873.8" r="2.4" fill="#ffb85f" />
<rect x="1587.5" y="873.1" width="1.4" height="1.4" fill="#7a4a1a"/>
<circle cx="1535.2" cy="916.2" r="2.4" fill="#ffb85f" />
<rect x="1534.5" y="915.5" width="1.4" height="1.4" fill="#7a4a1a"/>
<circle cx="1577.6" cy="725.4" r="2.4" fill="#ffb85f" />
<rect x="1576.9" y="724.7" width="1.4" height="1.4" fill="#7a4a1a"/>
<circle cx="1577.6" cy="820.8" r="2.4" fill="#ffb85f" />
<rect x="1576.9" y="820.1" width="1.4" height="1.4" fill="#7a4a1a"/>
<circle cx="1747.2" cy="778.4" r="2.4" fill="#ffb85f" />
<rect x="1746.5" y="777.7" width="1.4" height="1.4" fill="#7a4a1a"/>
<circle cx="1482.2" cy="926.8" r="2.4" fill="#ffb85f" />
<rect x="1481.5" y="926.1" width="1.4" height="1.4" fill="#7a4a1a"/>
<circle cx="1514" cy="746.6" r="2.4" fill="#ffb85f" />
<rect x="1513.3" y="745.9" width="1.4" height="1.4" fill="#7a4a1a"/>
<circle cx="1503.4" cy="852.6" r="2.4" fill="#ffb85f" />
<rect x="1502.7" y="851.9" width="1.4" height="1.4" fill="#7a4a1a"/>
<circle cx="1492.8" cy="873.8" r="2.4" fill="#ffb85f" />
<rect x="1492.1" y="873.1" width="1.4" height="1.4" fill="#7a4a1a"/>
<circle cx="1503.4" cy="810.2" r="2.4" fill="#ffb85f" />
<rect x="1502.7" y="809.5" width="1.4" height="1.4" fill="#7a4a1a"/>
<circle cx="1556.4" cy="746.6" r="2.4" fill="#ffb85f" />
<rect x="1555.7" y="745.9" width="1.4" height="1.4" fill="#7a4a1a"/>
<circle cx="1715.4" cy="725.4" r="2.4" fill="#ffb85f" />
<rect x="1714.7" y="724.7" width="1.4" height="1.4" fill="#7a4a1a"/>
<circle cx="1704.8" cy="831.4" r="2.4" fill="#ffb85f" />
<rect x="1704.1" y="830.7" width="1.4" height="1.4" fill="#7a4a1a"/>
<circle cx="1524.6" cy="757.2" r="2.4" fill="#ffb85f" />
<rect x="1523.9" y="756.5" width="1.4" height="1.4" fill="#7a4a1a"/>
<circle cx="1545.8" cy="725.4" r="2.4" fill="#ffb85f" />
<rect x="1545.1" y="724.7" width="1.4" height="1.4" fill="#7a4a1a"/>
<circle cx="1482.2" cy="757.2" r="2.4" fill="#ffb85f" />
<rect x="1481.5" y="756.5" width="1.4" height="1.4" fill="#7a4a1a"/>
<circle cx="1598.8" cy="714.8" r="2.4" fill="#ffb85f" />
<rect x="1598.1" y="714.1" width="1.4" height="1.4" fill="#7a4a1a"/>
<circle cx="1482.2" cy="852.6" r="2.4" fill="#ffb85f" />
<rect x="1481.5" y="851.9" width="1.4" height="1.4" fill="#7a4a1a"/>
<circle cx="1694.2" cy="842" r="2.4" fill="#ffb85f" />
<rect x="1693.5" y="841.3" width="1.4" height="1.4" fill="#7a4a1a"/>
<circle cx="1577.6" cy="842" r="2.4" fill="#ffb85f" />
<rect x="1576.9" y="841.3" width="1.4" height="1.4" fill="#7a4a1a"/>
<circle cx="1503.4" cy="778.4" r="2.4" fill="#ffb85f" />
<rect x="1502.7" y="777.7" width="1.4" height="1.4" fill="#7a4a1a"/>
<circle cx="1545.8" cy="948" r="2.4" fill="#ffb85f" />
<rect x="1545.1" y="947.3" width="1.4" height="1.4" fill="#7a4a1a"/>
<circle cx="1694.2" cy="937.4" r="2.4" fill="#ffb85f" />
<rect x="1693.5" y="936.7" width="1.4" height="1.4" fill="#7a4a1a"/>
<circle cx="1514" cy="958.6" r="2.4" fill="#ffb85f" />
<rect x="1513.3" y="957.9" width="1.4" height="1.4" fill="#7a4a1a"/>
<circle cx="1588.2" cy="820.8" r="2.4" fill="#ffb85f" />
<rect x="1587.5" y="820.1" width="1.4" height="1.4" fill="#7a4a1a"/>
<circle cx="1556.4" cy="958.6" r="2.4" fill="#ffb85f" />
<rect x="1555.7" y="957.9" width="1.4" height="1.4" fill="#7a4a1a"/>
<circle cx="1736.6" cy="905.6" r="2.4" fill="#ffb85f" />
<rect x="1735.9" y="904.9" width="1.4" height="1.4" fill="#7a4a1a"/>
<circle cx="1535.2" cy="958.6" r="2.4" fill="#ffb85f" />
<rect x="1534.5" y="957.9" width="1.4" height="1.4" fill="#7a4a1a"/>
<circle cx="1577.6" cy="767.8" r="2.4" fill="#ffb85f" />
<rect x="1576.9" y="767.1" width="1.4" height="1.4" fill="#7a4a1a"/>
<circle cx="1598.8" cy="736" r="2.4" fill="#ffb85f" />
<rect x="1598.1" y="735.3" width="1.4" height="1.4" fill="#7a4a1a"/>
<circle cx="1577.6" cy="863.2" r="2.4" fill="#ffb85f" />
<rect x="1576.9" y="862.5" width="1.4" height="1.4" fill="#7a4a1a"/>
<circle cx="1598.8" cy="831.4" r="2.4" fill="#ffb85f" />
<rect x="1598.1" y="830.7" width="1.4" height="1.4" fill="#7a4a1a"/>
<circle cx="1503.4" cy="799.6" r="2.4" fill="#ffb85f" />
<rect x="1502.7" y="798.9" width="1.4" height="1.4" fill="#7a4a1a"/>
<circle cx="1514" cy="789" r="2.4" fill="#ffb85f" />
<rect x="1513.3" y="788.3" width="1.4" height="1.4" fill="#7a4a1a"/>
<circle cx="1492.8" cy="916.2" r="2.4" fill="#ffb85f" />
<rect x="1492.1" y="915.5" width="1.4" height="1.4" fill="#7a4a1a"/>
<circle cx="1514" cy="884.4" r="2.4" fill="#ffb85f" />
<rect x="1513.3" y="883.7" width="1.4" height="1.4" fill="#7a4a1a"/>
<circle cx="1651.8" cy="820.8" r="2.4" fill="#ffb85f" />
<rect x="1651.1" y="820.1" width="1.4" height="1.4" fill="#7a4a1a"/>
<circle cx="1726" cy="746.6" r="2.4" fill="#ffb85f" />
<rect x="1725.3" y="745.9" width="1.4" height="1.4" fill="#7a4a1a"/>
<circle cx="1715.4" cy="767.8" r="2.4" fill="#ffb85f" />
<rect x="1714.7" y="767.1" width="1.4" height="1.4" fill="#7a4a1a"/>
<circle cx="1588.2" cy="746.6" r="2.4" fill="#ffb85f" />
<rect x="1587.5" y="745.9" width="1.4" height="1.4" fill="#7a4a1a"/>
<circle cx="1683.6" cy="873.8" r="2.4" fill="#ffb85f" />
<rect x="1682.9" y="873.1" width="1.4" height="1.4" fill="#7a4a1a"/>
<circle cx="1715.4" cy="863.2" r="2.4" fill="#ffb85f" />
<rect x="1714.7" y="862.5" width="1.4" height="1.4" fill="#7a4a1a"/>
<circle cx="1535.2" cy="789" r="2.4" fill="#ffb85f" />
<rect x="1534.5" y="788.3" width="1.4" height="1.4" fill="#7a4a1a"/>
<circle cx="1683.6" cy="969.2" r="2.4" fill="#ffb85f" />
<rect x="1682.9" y="968.5" width="1.4" height="1.4" fill="#7a4a1a"/>
<circle cx="1673" cy="725.4" r="2.4" fill="#ffb85f" />
<rect x="1672.3" y="724.7" width="1.4" height="1.4" fill="#7a4a1a"/>
<circle cx="1694.2" cy="789" r="2.4" fill="#ffb85f" />
<rect x="1693.5" y="788.3" width="1.4" height="1.4" fill="#7a4a1a"/>
<circle cx="1598.8" cy="757.2" r="2.4" fill="#ffb85f" />
<rect x="1598.1" y="756.5" width="1.4" height="1.4" fill="#7a4a1a"/>
<circle cx="1492.8" cy="746.6" r="2.4" fill="#ffb85f" />
<rect x="1492.1" y="745.9" width="1.4" height="1.4" fill="#7a4a1a"/>
<circle cx="1482.2" cy="895" r="2.4" fill="#ffb85f" />
<rect x="1481.5" y="894.3" width="1.4" height="1.4" fill="#7a4a1a"/>
<circle cx="1524.6" cy="926.8" r="2.4" fill="#ffb85f" />
<rect x="1523.9" y="926.1" width="1.4" height="1.4" fill="#7a4a1a"/>
<circle cx="1577.6" cy="884.4" r="2.4" fill="#ffb85f" />
<rect x="1576.9" y="883.7" width="1.4" height="1.4" fill="#7a4a1a"/>
<circle cx="1492.8" cy="842" r="2.4" fill="#ffb85f" />
<rect x="1492.1" y="841.3" width="1.4" height="1.4" fill="#7a4a1a"/>
<circle cx="1609.4" cy="842" r="2.4" fill="#ffb85f" />
<rect x="1608.7" y="841.3" width="1.4" height="1.4" fill="#7a4a1a"/>
<circle cx="1514" cy="905.6" r="2.4" fill="#ffb85f" />
<rect x="1513.3" y="904.9" width="1.4" height="1.4" fill="#7a4a1a"/>
<circle cx="1747.2" cy="873.8" r="2.4" fill="#ffb85f" />
<rect x="1746.5" y="873.1" width="1.4" height="1.4" fill="#7a4a1a"/>
<circle cx="1503.4" cy="948" r="2.4" fill="#ffb85f" />
<rect x="1502.7" y="947.3" width="1.4" height="1.4" fill="#7a4a1a"/>
<circle cx="1736.6" cy="757.2" r="2.4" fill="#ffb85f" />
<rect x="1735.9" y="756.5" width="1.4" height="1.4" fill="#7a4a1a"/>
<circle cx="1588.2" cy="767.8" r="2.4" fill="#ffb85f" />
<rect x="1587.5" y="767.1" width="1.4" height="1.4" fill="#7a4a1a"/>
<circle cx="1715.4" cy="884.4" r="2.4" fill="#ffb85f" />
<rect x="1714.7" y="883.7" width="1.4" height="1.4" fill="#7a4a1a"/>
<circle cx="1736.6" cy="852.6" r="2.4" fill="#ffb85f" />
<rect x="1735.9" y="851.9" width="1.4" height="1.4" fill="#7a4a1a"/>
<circle cx="1630.6" cy="767.8" r="2.4" fill="#ffb85f" />
<rect x="1629.9" y="767.1" width="1.4" height="1.4" fill="#7a4a1a"/>
<circle cx="1577.6" cy="714.8" r="2.4" fill="#ffb85f" />
<rect x="1576.9" y="714.1" width="1.4" height="1.4" fill="#7a4a1a"/>
<circle cx="1482.2" cy="820.8" r="2.4" fill="#ffb85f" />
<rect x="1481.5" y="820.1" width="1.4" height="1.4" fill="#7a4a1a"/>
<circle cx="1577.6" cy="810.2" r="2.4" fill="#ffb85f" />
<rect x="1576.9" y="809.5" width="1.4" height="1.4" fill="#7a4a1a"/>
<circle cx="1598.8" cy="778.4" r="2.4" fill="#ffb85f" />
<rect x="1598.1" y="777.7" width="1.4" height="1.4" fill="#7a4a1a"/>
<circle cx="1492.8" cy="863.2" r="2.4" fill="#ffb85f" />
<rect x="1492.1" y="862.5" width="1.4" height="1.4" fill="#7a4a1a"/>
<circle cx="1609.4" cy="863.2" r="2.4" fill="#ffb85f" />
<rect x="1608.7" y="862.5" width="1.4" height="1.4" fill="#7a4a1a"/>
<circle cx="1492.8" cy="958.6" r="2.4" fill="#ffb85f" />
<rect x="1492.1" y="957.9" width="1.4" height="1.4" fill="#7a4a1a"/>
<circle cx="1556.4" cy="736" r="2.4" fill="#ffb85f" />
<rect x="1555.7" y="735.3" width="1.4" height="1.4" fill="#7a4a1a"/>
<circle cx="1567" cy="725.4" r="2.4" fill="#ffb85f" />
<rect x="1566.3" y="724.7" width="1.4" height="1.4" fill="#7a4a1a"/>
<circle cx="1715.4" cy="714.8" r="2.4" fill="#ffb85f" />
<rect x="1714.7" y="714.1" width="1.4" height="1.4" fill="#7a4a1a"/>
<circle cx="1683.6" cy="820.8" r="2.4" fill="#ffb85f" />
<rect x="1682.9" y="820.1" width="1.4" height="1.4" fill="#7a4a1a"/>
<circle cx="1662.4" cy="948" r="2.4" fill="#ffb85f" />
<rect x="1661.7" y="947.3" width="1.4" height="1.4" fill="#7a4a1a"/>
<circle cx="1535.2" cy="736" r="2.4" fill="#ffb85f" />
<rect x="1534.5" y="735.3" width="1.4" height="1.4" fill="#7a4a1a"/>
<circle cx="1588.2" cy="881.8" r="2.4" fill="#ffb85f" />
<rect x="1587.5" y="881" width="1.4" height="1.4" fill="#7a4a1a"/>
<circle cx="1726" cy="820.8" r="2.4" fill="#ffb85f" />
<rect x="1725.3" y="820.1" width="1.4" height="1.4" fill="#7a4a1a"/>
<circle cx="1704.8" cy="948" r="2.4" fill="#ffb85f" />
<rect x="1704.1" y="947.3" width="1.4" height="1.4" fill="#7a4a1a"/>
<circle cx="1694.2" cy="736" r="2.4" fill="#ffb85f" />
<rect x="1693.5" y="735.3" width="1.4" height="1.4" fill="#7a4a1a"/>
<circle cx="1482.2" cy="842" r="2.4" fill="#ffb85f" />
<rect x="1481.5" y="841.3" width="1.4" height="1.4" fill="#7a4a1a"/>
<circle cx="1641.2" cy="873.8" r="2.4" fill="#ffb85f" />
<rect x="1640.5" y="873.1" width="1.4" height="1.4" fill="#7a4a1a"/>
<circle cx="1577.6" cy="831.4" r="2.4" fill="#ffb85f" />
<rect x="1576.9" y="830.7" width="1.4" height="1.4" fill="#7a4a1a"/>
<circle cx="1598.8" cy="799.6" r="2.4" fill="#ffb85f" />
<rect x="1598.1" y="798.9" width="1.4" height="1.4" fill="#7a4a1a"/>
<circle cx="1492.8" cy="789" r="2.4" fill="#ffb85f" />
<rect x="1492.1" y="788.3" width="1.4" height="1.4" fill="#7a4a1a"/>
<circle cx="1482.2" cy="937.4" r="2.4" fill="#ffb85f" />
<rect x="1481.5" y="936.7" width="1.4" height="1.4" fill="#7a4a1a"/>
<circle cx="1651.8" cy="789" r="2.4" fill="#ffb85f" />
<rect x="1651.1" y="788.3" width="1.4" height="1.4" fill="#7a4a1a"/>
<circle cx="1662.4" cy="778.4" r="2.4" fill="#ffb85f" />
<rect x="1661.7" y="777.7" width="1.4" height="1.4" fill="#7a4a1a"/>
<circle cx="1503.4" cy="895" r="2.4" fill="#ffb85f" />
<rect x="1502.7" y="894.3" width="1.4" height="1.4" fill="#7a4a1a"/>
<circle cx="1747.2" cy="916.2" r="2.4" fill="#ffb85f" />
<rect x="1746.5" y="915.5" width="1.4" height="1.4" fill="#7a4a1a"/>
<circle cx="1588.2" cy="714.8" r="2.4" fill="#ffb85f" />
<rect x="1587.5" y="714.1" width="1.4" height="1.4" fill="#7a4a1a"/>
<circle cx="1704.8" cy="873.8" r="2.4" fill="#ffb85f" />
<rect x="1704.1" y="873.1" width="1.4" height="1.4" fill="#7a4a1a"/>
<circle cx="1630.6" cy="810.2" r="2.4" fill="#ffb85f" />
<rect x="1629.9" y="809.5" width="1.4" height="1.4" fill="#7a4a1a"/>
<circle cx="1482.2" cy="767.8" r="2.4" fill="#ffb85f" />
<rect x="1481.5" y="767.1" width="1.4" height="1.4" fill="#7a4a1a"/>
<circle cx="1577.6" cy="757.2" r="2.4" fill="#ffb85f" />
<rect x="1576.9" y="756.5" width="1.4" height="1.4" fill="#7a4a1a"/>
<circle cx="1598.8" cy="725.4" r="2.4" fill="#ffb85f" />
<rect x="1598.1" y="724.7" width="1.4" height="1.4" fill="#7a4a1a"/>
<circle cx="1524.6" cy="895" r="2.4" fill="#ffb85f" />
<rect x="1523.9" y="894.3" width="1.4" height="1.4" fill="#7a4a1a"/>
<circle cx="1641.2" cy="895" r="2.4" fill="#ffb85f" />
<rect x="1640.5" y="894.3" width="1.4" height="1.4" fill="#7a4a1a"/>
<circle cx="1694.2" cy="852.6" r="2.4" fill="#ffb85f" />
<rect x="1693.5" y="851.9" width="1.4" height="1.4" fill="#7a4a1a"/>
<circle cx="1577.6" cy="852.6" r="2.4" fill="#ffb85f" />
<rect x="1576.9" y="851.9" width="1.4" height="1.4" fill="#7a4a1a"/>
<circle cx="1673" cy="884.4" r="2.4" fill="#ffb85f" />
<rect x="1672.3" y="883.7" width="1.4" height="1.4" fill="#7a4a1a"/>
<circle cx="1609.4" cy="810.2" r="2.4" fill="#ffb85f" />
<rect x="1608.7" y="809.5" width="1.4" height="1.4" fill="#7a4a1a"/>
<circle cx="1747.2" cy="746.6" r="2.4" fill="#ffb85f" />
<rect x="1746.5" y="745.9" width="1.4" height="1.4" fill="#7a4a1a"/>
<circle cx="1747.2" cy="842" r="2.4" fill="#ffb85f" />
<rect x="1746.5" y="841.3" width="1.4" height="1.4" fill="#7a4a1a"/>
<circle cx="1588.2" cy="736" r="2.4" fill="#ffb85f" />
<rect x="1587.5" y="735.3" width="1.4" height="1.4" fill="#7a4a1a"/>
<circle cx="1683.6" cy="958.6" r="2.4" fill="#ffb85f" />
<rect x="1682.9" y="957.9" width="1.4" height="1.4" fill="#7a4a1a"/>
<circle cx="1524.6" cy="725.4" r="2.4" fill="#ffb85f" />
<rect x="1523.9" y="724.7" width="1.4" height="1.4" fill="#7a4a1a"/>
<circle cx="1673" cy="714.8" r="2.4" fill="#ffb85f" />
<rect x="1672.3" y="714.1" width="1.4" height="1.4" fill="#7a4a1a"/>
<circle cx="1524.6" cy="820.8" r="2.4" fill="#ffb85f" />
<rect x="1523.9" y="820.1" width="1.4" height="1.4" fill="#7a4a1a"/>
<circle cx="1641.2" cy="820.8" r="2.4" fill="#ffb85f" />
<rect x="1640.5" y="820.1" width="1.4" height="1.4" fill="#7a4a1a"/>
<circle cx="1673" cy="810.2" r="2.4" fill="#ffb85f" />
<rect x="1672.3" y="809.5" width="1.4" height="1.4" fill="#7a4a1a"/>
<circle cx="1609.4" cy="831.4" r="2.4" fill="#ffb85f" />
<rect x="1608.7" y="830.7" width="1.4" height="1.4" fill="#7a4a1a"/>
<circle cx="1598.8" cy="873.8" r="2.4" fill="#ffb85f" />
<rect x="1598.1" y="873.1" width="1.4" height="1.4" fill="#7a4a1a"/>
<circle cx="1747.2" cy="863.2" r="2.4" fill="#ffb85f" />
<rect x="1746.5" y="862.5" width="1.4" height="1.4" fill="#7a4a1a"/>
<circle cx="1503.4" cy="937.4" r="2.4" fill="#ffb85f" />
<rect x="1502.7" y="936.7" width="1.4" height="1.4" fill="#7a4a1a"/>
<circle cx="1588.2" cy="757.2" r="2.4" fill="#ffb85f" />
<rect x="1587.5" y="756.5" width="1.4" height="1.4" fill="#7a4a1a"/>
<circle cx="1704.8" cy="820.8" r="2.4" fill="#ffb85f" />
<rect x="1704.1" y="820.1" width="1.4" height="1.4" fill="#7a4a1a"/>
<circle cx="1726" cy="789" r="2.4" fill="#ffb85f" />
<rect x="1725.3" y="788.3" width="1.4" height="1.4" fill="#7a4a1a"/>
<circle cx="1524.6" cy="746.6" r="2.4" fill="#ffb85f" />
<rect x="1523.9" y="745.9" width="1.4" height="1.4" fill="#7a4a1a"/>
<circle cx="1704.8" cy="916.2" r="2.4" fill="#ffb85f" />
<rect x="1704.1" y="915.5" width="1.4" height="1.4" fill="#7a4a1a"/>
<circle cx="1726" cy="884.4" r="2.4" fill="#ffb85f" />
<rect x="1725.3" y="883.7" width="1.4" height="1.4" fill="#7a4a1a"/>
<circle cx="1630.6" cy="852.6" r="2.4" fill="#ffb85f" />
<rect x="1629.9" y="851.9" width="1.4" height="1.4" fill="#7a4a1a"/>
<circle cx="1641.2" cy="842" r="2.4" fill="#ffb85f" />
<rect x="1640.5" y="841.3" width="1.4" height="1.4" fill="#7a4a1a"/>
<circle cx="1492.8" cy="757.2" r="2.4" fill="#ffb85f" />
<rect x="1492.1" y="756.5" width="1.4" height="1.4" fill="#7a4a1a"/>
<circle cx="1524.6" cy="937.4" r="2.4" fill="#ffb85f" />
<rect x="1523.9" y="936.7" width="1.4" height="1.4" fill="#7a4a1a"/>
<circle cx="1535.2" cy="926.8" r="2.4" fill="#ffb85f" />
<rect x="1534.5" y="926.1" width="1.4" height="1.4" fill="#7a4a1a"/>
<circle cx="1503.4" cy="767.8" r="2.4" fill="#ffb85f" />
<rect x="1502.7" y="767.1" width="1.4" height="1.4" fill="#7a4a1a"/>
<circle cx="1662.4" cy="746.6" r="2.4" fill="#ffb85f" />
<rect x="1661.7" y="745.9" width="1.4" height="1.4" fill="#7a4a1a"/>
<circle cx="1683.6" cy="714.8" r="2.4" fill="#ffb85f" />
<rect x="1682.9" y="714.1" width="1.4" height="1.4" fill="#7a4a1a"/>
<circle cx="1588.2" cy="778.4" r="2.4" fill="#ffb85f" />
<rect x="1587.5" y="777.7" width="1.4" height="1.4" fill="#7a4a1a"/>
<circle cx="1704.8" cy="746.6" r="2.4" fill="#ffb85f" />
<rect x="1704.1" y="745.9" width="1.4" height="1.4" fill="#7a4a1a"/>
<circle cx="1726" cy="714.8" r="2.4" fill="#ffb85f" />
<rect x="1725.3" y="714.1" width="1.4" height="1.4" fill="#7a4a1a"/>
<circle cx="1704.8" cy="842" r="2.4" fill="#ffb85f" />
<rect x="1704.1" y="841.3" width="1.4" height="1.4" fill="#7a4a1a"/>
<circle cx="1620" cy="799.6" r="2.4" fill="#ffb85f" />
<rect x="1619.3" y="798.9" width="1.4" height="1.4" fill="#7a4a1a"/>
<circle cx="1524.6" cy="767.8" r="2.4" fill="#ffb85f" />
<rect x="1523.9" y="767.1" width="1.4" height="1.4" fill="#7a4a1a"/>
<circle cx="1694.2" cy="725.4" r="2.4" fill="#ffb85f" />
<rect x="1693.5" y="724.7" width="1.4" height="1.4" fill="#7a4a1a"/>
<circle cx="1726" cy="905.6" r="2.4" fill="#ffb85f" />
<rect x="1725.3" y="904.9" width="1.4" height="1.4" fill="#7a4a1a"/>
<circle cx="1736.6" cy="895" r="2.4" fill="#ffb85f" />
<rect x="1735.9" y="894.3" width="1.4" height="1.4" fill="#7a4a1a"/>
<circle cx="1641.2" cy="863.2" r="2.4" fill="#ffb85f" />
<rect x="1640.5" y="862.5" width="1.4" height="1.4" fill="#7a4a1a"/>
<circle cx="1630.6" cy="873.8" r="2.4" fill="#ffb85f" />
<rect x="1629.9" y="873.1" width="1.4" height="1.4" fill="#7a4a1a"/>
<circle cx="1535.2" cy="948" r="2.4" fill="#ffb85f" />
<rect x="1534.5" y="947.3" width="1.4" height="1.4" fill="#7a4a1a"/>
<circle cx="1598.8" cy="820.8" r="2.4" fill="#ffb85f" />
<rect x="1598.1" y="820.1" width="1.4" height="1.4" fill="#7a4a1a"/>
<circle cx="1683.6" cy="736" r="2.4" fill="#ffb85f" />
<rect x="1682.9" y="735.3" width="1.4" height="1.4" fill="#7a4a1a"/>
<circle cx="1503.4" cy="884.4" r="2.4" fill="#ffb85f" />
<rect x="1502.7" y="883.7" width="1.4" height="1.4" fill="#7a4a1a"/>
<circle cx="1598.8" cy="916.2" r="2.4" fill="#ffb85f" />
<rect x="1598.1" y="915.5" width="1.4" height="1.4" fill="#7a4a1a"/>
<circle cx="1514" cy="969.2" r="2.4" fill="#ffb85f" />
<rect x="1513.3" y="968.5" width="1.4" height="1.4" fill="#7a4a1a"/>
<circle cx="1662.4" cy="958.6" r="2.4" fill="#ffb85f" />
<rect x="1661.7" y="957.9" width="1.4" height="1.4" fill="#7a4a1a"/>
<circle cx="1726" cy="736" r="2.4" fill="#ffb85f" />
<rect x="1725.3" y="735.3" width="1.4" height="1.4" fill="#7a4a1a"/>
<circle cx="1704.8" cy="863.2" r="2.4" fill="#ffb85f" />
<rect x="1704.1" y="862.5" width="1.4" height="1.4" fill="#7a4a1a"/>
<circle cx="1726" cy="831.4" r="2.4" fill="#ffb85f" />
<rect x="1725.3" y="830.7" width="1.4" height="1.4" fill="#7a4a1a"/>
<circle cx="1715.4" cy="852.6" r="2.4" fill="#ffb85f" />
<rect x="1714.7" y="851.9" width="1.4" height="1.4" fill="#7a4a1a"/>
<circle cx="1620" cy="820.8" r="2.4" fill="#ffb85f" />
<rect x="1619.3" y="820.1" width="1.4" height="1.4" fill="#7a4a1a"/>
<circle cx="1556.4" cy="969.2" r="2.4" fill="#ffb85f" />
<rect x="1555.7" y="968.5" width="1.4" height="1.4" fill="#7a4a1a"/>
<circle cx="1704.8" cy="958.6" r="2.4" fill="#ffb85f" />
<rect x="1704.1" y="957.9" width="1.4" height="1.4" fill="#7a4a1a"/>
<circle cx="1535.2" cy="778.4" r="2.4" fill="#ffb85f" />
<rect x="1534.5" y="777.7" width="1.4" height="1.4" fill="#7a4a1a"/>
<circle cx="1641.2" cy="884.4" r="2.4" fill="#ffb85f" />
<rect x="1640.5" y="883.7" width="1.4" height="1.4" fill="#7a4a1a"/>
<circle cx="1577.6" cy="873.8" r="2.4" fill="#ffb85f" />
<rect x="1576.9" y="873.1" width="1.4" height="1.4" fill="#7a4a1a"/>
<circle cx="1598.8" cy="842" r="2.4" fill="#ffb85f" />
<rect x="1598.1" y="841.3" width="1.4" height="1.4" fill="#7a4a1a"/>
<circle cx="1747.2" cy="831.4" r="2.4" fill="#ffb85f" />
<rect x="1746.5" y="830.7" width="1.4" height="1.4" fill="#7a4a1a"/>
<circle cx="1514" cy="799.6" r="2.4" fill="#ffb85f" />
<rect x="1513.3" y="798.9" width="1.4" height="1.4" fill="#7a4a1a"/>
<circle cx="1588.2" cy="725.4" r="2.4" fill="#ffb85f" />
<rect x="1587.5" y="724.7" width="1.4" height="1.4" fill="#7a4a1a"/>
<circle cx="1492.8" cy="926.8" r="2.4" fill="#ffb85f" />
<rect x="1492.1" y="926.1" width="1.4" height="1.4" fill="#7a4a1a"/>
<rect x="1817.9" y="607.7" width="15" height="29.3" fill="none" stroke="#fbf2dc" stroke-width="1"/>
<polyline points="1817.9,622.5 1832.9,622.5" fill="none" stroke="#fbf2dc" stroke-width="0.8" />
<rect x="1821.9" y="611.5" width="7" height="7" rx="1" fill="#f9b268"/>
<rect x="1819.9" y="624" width="11.1" height="11.6" rx="3.6" fill="#000"/>
<rect x="1821.2" y="625.3" width="8.5" height="9" rx="2.6" fill="#ffb85f"/>
<rect x="1835.8" y="607.7" width="15" height="29.3" fill="none" stroke="#fbf2dc" stroke-width="1"/>
<polyline points="1835.8,622.5 1850.8,622.5" fill="none" stroke="#fbf2dc" stroke-width="0.8" />
<rect x="1837.8" y="609.2" width="11.1" height="11.6" rx="3.6" fill="#000"/>
<rect x="1839" y="610.5" width="8.5" height="9" rx="2.6" fill="#ffb85f"/>
<rect x="1837.8" y="624" width="11.1" height="11.6" rx="3.6" fill="#000"/>
<rect x="1839" y="625.3" width="8.5" height="9" rx="2.6" fill="#ffb85f"/>
<rect x="1851.8" y="605" width="30.4" height="33.6" fill="none" stroke="#fbf2dc" stroke-width="1.4"/>
<polyline points="1867,605 1867,638.6" fill="none" stroke="#fbf2dc" stroke-width="0.9" />
<polyline points="1851.8,622 1882.2,622" fill="none" stroke="#fbf2dc" stroke-width="0.9" />
<rect x="1853" y="620" width="9" height="17" fill="#000"/>
<rect x="1854.7" y="609.5" width="10.6" height="11.1" rx="3.6" fill="#000"/>
<rect x="1856" y="610.8" width="8" height="8.5" rx="2.6" fill="#ffb85f"/>
<rect x="1871.5" y="611.5" width="7" height="7" rx="1" fill="#f9b268"/>
<rect x="1854.7" y="624.2" width="10.6" height="11.6" rx="3.6" fill="#000"/>
<rect x="1856" y="625.5" width="8" height="9" rx="2.6" fill="#ffb85f"/>
<rect x="1871.5" y="626.5" width="7" height="7" rx="1" fill="#f9b268"/>
<circle cx="1812.3" cy="629.8" r="3" fill="#000" />
<circle cx="1812.3" cy="629.8" r="1.9" fill="#ffb85f" />
<circle cx="1812.3" cy="629.8" r="0.8" fill="#8a5a20" />
<polyline points="1815,629.8 1839,629.8" fill="none" stroke="#000" stroke-width="1.6" />
<text x="1828.5" y="603" font-size="11" fill="#ffdaf2" text-anchor="start" textLength="12" lengthAdjust="spacingAndGlyphs" transform="rotate(-90 1828.5 603)" font-weight="bold" stroke="#ffdaf2" stroke-width=".45" >R4</text>
<text x="1845" y="603" font-size="11" fill="#ffdaf2" text-anchor="start" textLength="12" lengthAdjust="spacingAndGlyphs" transform="rotate(-90 1845 603)" font-weight="bold" stroke="#ffdaf2" stroke-width=".45" >R3</text>
<text x="1889.5" y="618.3" font-size="11.5" fill="#ffdaf2" text-anchor="start" textLength="18.5" lengthAdjust="spacingAndGlyphs" font-weight="bold" stroke="#ffdaf2" stroke-width=".45" >C93</text>
<text x="1889.5" y="637" font-size="11.5" fill="#ffdaf2" text-anchor="start" textLength="18.5" lengthAdjust="spacingAndGlyphs" font-weight="bold" stroke="#ffdaf2" stroke-width=".45" >C92</text>
<rect x="1817.3" y="645.6" width="20.6" height="19.6" rx="1" fill="#000"/>
<rect x="1818.6" y="646.9" width="18" height="17" rx="0" fill="#ffb85f"/>
<rect x="1858.4" y="645.6" width="20.2" height="19.6" rx="1" fill="#000"/>
<rect x="1859.7" y="646.9" width="17.6" height="17" rx="0" fill="#ffb85f"/>
<polyline points="1827.5,643.2 1867,643.2" fill="none" stroke="#fbf2dc" stroke-width="0.9" />
<polyline points="1827.5,666.3 1867,666.3" fill="none" stroke="#fbf2dc" stroke-width="0.9" />
<polyline points="1837,651 1852,637" fill="none" stroke="#000" stroke-width="3.6" stroke-linejoin="miter" stroke-linecap="butt"/>
<polyline points="1846.3,660 1846.3,652 1860,638" fill="none" stroke="#000" stroke-width="3.4" stroke-linejoin="miter" stroke-linecap="butt"/>
<polyline points="1837,651 1852,637" fill="none" stroke="#c3f26b" stroke-width="1.2" stroke-linejoin="miter"/>
<polyline points="1846.3,660 1846.3,652 1860,638" fill="none" stroke="#c3f26b" stroke-width="1.1" stroke-linejoin="miter"/>
<circle cx="1846.3" cy="660.2" r="2.9" fill="#000" />
<circle cx="1846.3" cy="660.2" r="1.8" fill="#ffb85f" />
<circle cx="1846.3" cy="660.2" r="0.8" fill="#8a5a20" />
<circle cx="1846.3" cy="677.3" r="2.9" fill="#000" />
<circle cx="1846.3" cy="677.3" r="1.8" fill="#ffb85f" />
<circle cx="1846.3" cy="677.3" r="0.8" fill="#8a5a20" />
<circle cx="1871.2" cy="685.2" r="2.7" fill="#000" />
<circle cx="1871.2" cy="685.2" r="1.6" fill="#ffb85f" />
<circle cx="1871.2" cy="685.2" r="0.8" fill="#8a5a20" />
<text x="1805" y="661" font-size="11.5" fill="#ffdaf2" text-anchor="start" textLength="11" lengthAdjust="spacingAndGlyphs" font-weight="bold" stroke="#ffdaf2" stroke-width=".45" >J3</text>
<polyline points="1868.2,664 1868.2,686" fill="none" stroke="#000" stroke-width="1.5" />
<text x="1823.6" y="694.5" font-size="11" fill="#ffdaf2" text-anchor="start" textLength="24.8" lengthAdjust="spacingAndGlyphs" transform="rotate(-90 1823.6 694.5)" font-weight="bold" stroke="#ffdaf2" stroke-width=".45" >R248</text>
<text x="1839.4" y="694.5" font-size="11" fill="#ffdaf2" text-anchor="start" textLength="24.8" lengthAdjust="spacingAndGlyphs" transform="rotate(-90 1839.4 694.5)" font-weight="bold" stroke="#ffdaf2" stroke-width=".45" >R251</text>
<text x="1858.2" y="694.5" font-size="11" fill="#ffdaf2" text-anchor="start" textLength="18.6" lengthAdjust="spacingAndGlyphs" transform="rotate(-90 1858.2 694.5)" font-weight="bold" stroke="#ffdaf2" stroke-width=".45" >R95</text>
<text x="1879.5" y="694.5" font-size="11" fill="#ffdaf2" text-anchor="start" textLength="18.6" lengthAdjust="spacingAndGlyphs" transform="rotate(-90 1879.5 694.5)" font-weight="bold" stroke="#ffdaf2" stroke-width=".45" >FL5</text>
<text x="1900.2" y="694.5" font-size="11" fill="#ffdaf2" text-anchor="start" textLength="18.6" lengthAdjust="spacingAndGlyphs" transform="rotate(-90 1900.2 694.5)" font-weight="bold" stroke="#ffdaf2" stroke-width=".45" >FL5</text>
<text x="1920.2" y="694.5" font-size="11" fill="#ffdaf2" text-anchor="start" textLength="18.6" lengthAdjust="spacingAndGlyphs" transform="rotate(-90 1920.2 694.5)" font-weight="bold" stroke="#ffdaf2" stroke-width=".45" >C95</text>
<rect x="1794.5" y="698" width="14.1" height="29" fill="none" stroke="#fbf2dc" stroke-width="1"/>
<rect x="1811" y="698" width="14.5" height="29" fill="none" stroke="#fbf2dc" stroke-width="1"/>
<rect x="1827.5" y="698" width="16.9" height="29" fill="none" stroke="#fbf2dc" stroke-width="1"/>
<rect x="1846.7" y="698" width="13.3" height="29" fill="none" stroke="#fbf2dc" stroke-width="1"/>
<rect x="1884.4" y="698" width="20" height="29" fill="none" stroke="#fbf2dc" stroke-width="1"/>
<rect x="1907.6" y="698" width="16.9" height="29" fill="none" stroke="#fbf2dc" stroke-width="1"/>
<rect x="1866" y="698" width="14" height="32" fill="none" stroke="#fbf2dc" stroke-width="1"/>
<rect x="1828" y="700" width="14" height="10" fill="#000"/>
<rect x="1796.9" y="699.2" width="11.1" height="11.6" rx="3.6" fill="#000"/>
<rect x="1798.2" y="700.5" width="8.5" height="9" rx="2.6" fill="#ffb85f"/>
<rect x="1796.9" y="713.8" width="11.1" height="11.6" rx="3.6" fill="#000"/>
<rect x="1798.2" y="715.1" width="8.5" height="9" rx="2.6" fill="#ffb85f"/>
<rect x="1813.5" y="699.2" width="11.1" height="11.6" rx="3.6" fill="#000"/>
<rect x="1814.8" y="700.5" width="8.5" height="9" rx="2.6" fill="#ffb85f"/>
<rect x="1813.5" y="713.8" width="11.1" height="11.6" rx="3.6" fill="#000"/>
<rect x="1814.8" y="715.1" width="8.5" height="9" rx="2.6" fill="#ffb85f"/>
<rect x="1829" y="699.2" width="11.1" height="11.6" rx="3.6" fill="#000"/>
<rect x="1830.3" y="700.5" width="8.5" height="9" rx="2.6" fill="#ffb85f"/>
<rect x="1831.1" y="716.1" width="7" height="7" rx="1" fill="#f9b268"/>
<rect x="1847.8" y="699.2" width="11.1" height="11.6" rx="3.6" fill="#000"/>
<rect x="1849" y="700.5" width="8.5" height="9" rx="2.6" fill="#ffb85f"/>
<rect x="1847.8" y="713.8" width="11.1" height="11.6" rx="3.6" fill="#000"/>
<rect x="1849" y="715.1" width="8.5" height="9" rx="2.6" fill="#ffb85f"/>
<rect x="1867.3" y="697.2" width="12.6" height="14.6" rx="2.5" fill="#000"/>
<rect x="1868.6" y="698.5" width="10" height="12" rx="1.5" fill="#ffb85f"/>
<rect x="1867.3" y="715.2" width="12.6" height="13.6" rx="4" fill="#000"/>
<rect x="1868.6" y="716.5" width="10" height="11" rx="3" fill="#ffb85f"/>
<rect x="1891.8" y="702.5" width="7" height="7" rx="1" fill="#f9b268"/>
<rect x="1889" y="717.7" width="12.6" height="9.6" rx="3.6" fill="#000"/>
<rect x="1890.3" y="719" width="10" height="7" rx="2.6" fill="#ffb85f"/>
<rect x="1912.5" y="702.5" width="7" height="7" rx="1" fill="#f9b268"/>
<rect x="1910.5" y="715.2" width="11.1" height="11.6" rx="3.6" fill="#000"/>
<rect x="1911.8" y="716.5" width="8.5" height="9" rx="2.6" fill="#ffb85f"/>
<polyline points="1879,721.5 1912,721.5" fill="none" stroke="#000" stroke-width="1.6" />
<polyline points="1806,705 1815,705" fill="none" stroke="#000" stroke-width="1.4" />
<polyline points="1857,716 1868,708" fill="none" stroke="#000" stroke-width="1.4" />
<text x="1789" y="722" font-size="11" fill="#ffdaf2" text-anchor="start" textLength="24" lengthAdjust="spacingAndGlyphs" transform="rotate(-90 1789 722)" font-weight="bold" stroke="#ffdaf2" stroke-width=".45" >R121</text>
<circle cx="1770.5" cy="698" r="2.7" fill="#000" />
<circle cx="1770.5" cy="698" r="1.6" fill="#ffb85f" />
<circle cx="1770.5" cy="698" r="0.8" fill="#8a5a20" />
<circle cx="1841.5" cy="729.5" r="2.9" fill="#000" />
<circle cx="1841.5" cy="729.5" r="1.8" fill="#ffb85f" />
<circle cx="1841.5" cy="729.5" r="0.8" fill="#8a5a20" />
<polyline points="1750,734 1775,734 1798,712" fill="none" stroke="#000" stroke-width="3.4" stroke-linejoin="miter" stroke-linecap="butt"/>
<polyline points="1752,744 1782,744 1800,728 1840,728" fill="none" stroke="#000" stroke-width="3.4" stroke-linejoin="miter" stroke-linecap="butt"/>
<polyline points="1752,756 1768,756 1776,748 1776,742" fill="none" stroke="#000" stroke-width="3.4" stroke-linejoin="miter" stroke-linecap="butt"/>
<polyline points="1750,734 1775,734 1798,712" fill="none" stroke="#c3f26b" stroke-width="1.1" stroke-linejoin="miter"/>
<polyline points="1752,744 1782,744 1800,728 1840,728" fill="none" stroke="#c3f26b" stroke-width="1.1" stroke-linejoin="miter"/>
<polyline points="1752,756 1768,756 1776,748 1776,742" fill="none" stroke="#c3f26b" stroke-width="1.1" stroke-linejoin="miter"/>
<circle cx="1777" cy="744.5" r="2.9" fill="#000" />
<circle cx="1777" cy="744.5" r="1.8" fill="#ffb85f" />
<circle cx="1777" cy="744.5" r="0.8" fill="#8a5a20" />
<circle cx="1765" cy="751" r="2.9" fill="#000" />
<circle cx="1765" cy="751" r="1.8" fill="#ffb85f" />
<circle cx="1765" cy="751" r="0.8" fill="#8a5a20" />
<circle cx="1772.5" cy="758.5" r="2.9" fill="#000" />
<circle cx="1772.5" cy="758.5" r="1.8" fill="#ffb85f" />
<circle cx="1772.5" cy="758.5" r="0.8" fill="#8a5a20" />
<circle cx="1841.6" cy="744.5" r="8.2" fill="#000" />
<circle cx="1841.6" cy="744.5" r="7" fill="#ffb85f" />
<text x="1810.5" y="741" font-size="11.5" fill="#ffdaf2" text-anchor="start" textLength="23.5" lengthAdjust="spacingAndGlyphs" font-weight="bold" stroke="#ffdaf2" stroke-width=".45" >TP64</text>
<circle cx="1805" cy="768.6" r="8" fill="#000" />
<circle cx="1805" cy="768.6" r="6.8" fill="#ffb85f" />
<text x="1801" y="762" font-size="11.5" fill="#ffdaf2" text-anchor="start" textLength="23.5" lengthAdjust="spacingAndGlyphs" font-weight="bold" stroke="#ffdaf2" stroke-width=".45" >TP63</text>
<polyline points="1836,750 1822,766 1818,776" fill="none" stroke="#000" stroke-width="1.4" />
<rect x="1866" y="743.5" width="15" height="29.2" fill="none" stroke="#fbf2dc" stroke-width="1"/>
<rect x="1884.5" y="743.5" width="14.5" height="29.2" fill="none" stroke="#fbf2dc" stroke-width="1"/>
<rect x="1868.5" y="745.2" width="11.1" height="11.1" rx="1.5" fill="#000"/>
<rect x="1869.8" y="746.5" width="8.5" height="8.5" rx="0.5" fill="#ffb85f"/>
<rect x="1888.5" y="747.2" width="7" height="7" rx="1" fill="#f9b268"/>
<rect x="1868.5" y="759.4" width="11.1" height="11.6" rx="3.6" fill="#000"/>
<rect x="1869.8" y="760.7" width="8.5" height="9" rx="2.6" fill="#ffb85f"/>
<rect x="1886.5" y="759.4" width="11.1" height="11.6" rx="3.6" fill="#000"/>
<rect x="1887.8" y="760.7" width="8.5" height="9" rx="2.6" fill="#ffb85f"/>
<polyline points="1879,765.5 1888,765.5" fill="none" stroke="#000" stroke-width="1.5" />
<polyline points="1868,752 1858,762 1858,772" fill="none" stroke="#000" stroke-width="3.2" stroke-linejoin="miter" stroke-linecap="butt"/>
<polyline points="1868,752 1858,762 1858,772" fill="none" stroke="#c3f26b" stroke-width="1.1" stroke-linejoin="miter"/>
<circle cx="1863" cy="772.5" r="2.9" fill="#000" />
<circle cx="1863" cy="772.5" r="1.8" fill="#ffb85f" />
<circle cx="1863" cy="772.5" r="0.8" fill="#8a5a20" />
<text x="1910" y="766" font-size="11" fill="#ffdaf2" text-anchor="start" textLength="19" lengthAdjust="spacingAndGlyphs" transform="rotate(-90 1910 766)" font-weight="bold" stroke="#ffdaf2" stroke-width=".45" >R21</text>
<text x="1923" y="766" font-size="11" fill="#ffdaf2" text-anchor="start" textLength="19" lengthAdjust="spacingAndGlyphs" transform="rotate(-90 1923 766)" font-weight="bold" stroke="#ffdaf2" stroke-width=".45" >R22</text>
<text x="1859" y="782" font-size="11" fill="#ffdaf2" text-anchor="start" textLength="24" lengthAdjust="spacingAndGlyphs" transform="rotate(-90 1859 782)" font-weight="bold" stroke="#ffdaf2" stroke-width=".45" >TP62</text>
<polygon points="1762,800 1786,780 1826,776 1850,770 1852,790 1876,790 1876,798 1910,798 1912,816 1906,826 1890,840 1840,840 1830,846 1762,846 1756,836" fill="#000" />
<polygon points="1756,846 1780,846 1780,930 1764,930 1752,915" fill="#000" />
<circle cx="1840.6" cy="774.8" r="8.2" fill="#000" />
<circle cx="1840.6" cy="774.8" r="7" fill="#ffb85f" />
<circle cx="1795.4" cy="794" r="7.7" fill="#000" />
<circle cx="1795.4" cy="794" r="6.5" fill="#ffb85f" />
<text x="1796" y="784" font-size="11" fill="#ffdaf2" text-anchor="start" textLength="24" lengthAdjust="spacingAndGlyphs" transform="rotate(-90 1796 784)" font-weight="bold" stroke="#ffdaf2" stroke-width=".45" >TP67</text>
<rect x="1762.2" y="802.5" width="14.4" height="30.5" fill="none" stroke="#fbf2dc" stroke-width="1"/>
<rect x="1765.4" y="806.6" width="8" height="7.5" rx="1" fill="#f9b268"/>
<rect x="1763.6" y="819" width="11.6" height="12.1" rx="3.6" fill="#000"/>
<rect x="1764.9" y="820.2" width="9" height="9.5" rx="2.6" fill="#ffb85f"/>
<rect x="1778.4" y="802.5" width="14.4" height="30.5" fill="none" stroke="#fbf2dc" stroke-width="1"/>
<rect x="1781.6" y="806.6" width="8" height="7.5" rx="1" fill="#f9b268"/>
<rect x="1779.8" y="819" width="11.6" height="12.1" rx="3.6" fill="#000"/>
<rect x="1781.1" y="820.2" width="9" height="9.5" rx="2.6" fill="#ffb85f"/>
<rect x="1794.8" y="802.5" width="14.4" height="30.5" fill="none" stroke="#fbf2dc" stroke-width="1"/>
<rect x="1798" y="806.6" width="8" height="7.5" rx="1" fill="#f9b268"/>
<rect x="1796.2" y="819" width="11.6" height="12.1" rx="3.6" fill="#000"/>
<rect x="1797.5" y="820.2" width="9" height="9.5" rx="2.6" fill="#ffb85f"/>
<rect x="1812.8" y="802.5" width="14.4" height="30.5" fill="none" stroke="#fbf2dc" stroke-width="1"/>
<rect x="1816" y="806.6" width="8" height="7.5" rx="1" fill="#f9b268"/>
<rect x="1814.2" y="819" width="11.6" height="12.1" rx="3.6" fill="#000"/>
<rect x="1815.5" y="820.2" width="9" height="9.5" rx="2.6" fill="#ffb85f"/>
<text x="1769" y="800" font-size="11" fill="#ffdaf2" text-anchor="start" textLength="19" lengthAdjust="spacingAndGlyphs" transform="rotate(-90 1769 800)" font-weight="bold" stroke="#ffdaf2" stroke-width=".45" >R18</text>
<text x="1785" y="800" font-size="11" fill="#ffdaf2" text-anchor="start" textLength="19" lengthAdjust="spacingAndGlyphs" transform="rotate(-90 1785 800)" font-weight="bold" stroke="#ffdaf2" stroke-width=".45" >R20</text>
<text x="1814" y="800" font-size="11" fill="#ffdaf2" text-anchor="start" textLength="19" lengthAdjust="spacingAndGlyphs" transform="rotate(-90 1814 800)" font-weight="bold" stroke="#ffdaf2" stroke-width=".45" >R17</text>
<text x="1825" y="800" font-size="11" fill="#ffdaf2" text-anchor="start" textLength="19" lengthAdjust="spacingAndGlyphs" transform="rotate(-90 1825 800)" font-weight="bold" stroke="#ffdaf2" stroke-width=".45" >R19</text>
<rect x="1831" y="788.4" width="41.5" height="26.4" fill="none" stroke="#fbf2dc" stroke-width="2.6"/>
<text x="1842" y="810" font-size="11" fill="#ffdaf2" text-anchor="start" textLength="19" lengthAdjust="spacingAndGlyphs" transform="rotate(-90 1842 810)" font-weight="bold" stroke="#ffdaf2" stroke-width=".45" >R27</text>
<text x="1855" y="810" font-size="11" fill="#ffdaf2" text-anchor="start" textLength="19" lengthAdjust="spacingAndGlyphs" transform="rotate(-90 1855 810)" font-weight="bold" stroke="#ffdaf2" stroke-width=".45" >R25</text>
<text x="1867" y="810" font-size="11" fill="#ffdaf2" text-anchor="start" textLength="19" lengthAdjust="spacingAndGlyphs" transform="rotate(-90 1867 810)" font-weight="bold" stroke="#ffdaf2" stroke-width=".45" >R26</text>
<rect x="1876.5" y="800.6" width="15" height="29.4" fill="none" stroke="#fbf2dc" stroke-width="1"/>
<rect x="1878.2" y="802.2" width="11.6" height="12.1" rx="3.6" fill="#000"/>
<rect x="1879.5" y="803.5" width="9" height="9.5" rx="2.6" fill="#ffb85f"/>
<rect x="1878.2" y="816.2" width="11.6" height="12.1" rx="1.5" fill="#000"/>
<rect x="1879.5" y="817.5" width="9" height="9.5" rx="0.5" fill="#ffb85f"/>
<rect x="1893.8" y="800.6" width="15" height="29.4" fill="none" stroke="#fbf2dc" stroke-width="1"/>
<rect x="1897.5" y="804.5" width="7.5" height="7.5" rx="1" fill="#f9b268"/>
<rect x="1895.5" y="816.2" width="11.6" height="12.1" rx="1.5" fill="#000"/>
<rect x="1896.8" y="817.5" width="9" height="9.5" rx="0.5" fill="#ffb85f"/>
<rect x="1912.3" y="800.6" width="15" height="29.4" fill="none" stroke="#fbf2dc" stroke-width="1"/>
<rect x="1914" y="802.2" width="11.6" height="12.1" rx="3.6" fill="#000"/>
<rect x="1915.3" y="803.5" width="9" height="9.5" rx="2.6" fill="#ffb85f"/>
<rect x="1914" y="816.2" width="11.6" height="12.1" rx="3.6" fill="#000"/>
<rect x="1915.3" y="817.5" width="9" height="9.5" rx="2.6" fill="#ffb85f"/>
<rect x="1930.2" y="800.6" width="15" height="29.4" fill="none" stroke="#fbf2dc" stroke-width="1"/>
<rect x="1934" y="804.5" width="7.5" height="7.5" rx="1" fill="#f9b268"/>
<rect x="1931.9" y="816.2" width="11.6" height="12.1" rx="3.6" fill="#000"/>
<rect x="1933.2" y="817.5" width="9" height="9.5" rx="2.6" fill="#ffb85f"/>
<polyline points="1924,822.5 1933,822.5" fill="none" stroke="#000" stroke-width="1.5" />
<text x="1888" y="796" font-size="11" fill="#ffdaf2" text-anchor="start" textLength="19" lengthAdjust="spacingAndGlyphs" transform="rotate(-90 1888 796)" font-weight="bold" stroke="#ffdaf2" stroke-width=".45" >R23</text>
<text x="1906" y="796" font-size="11" fill="#ffdaf2" text-anchor="start" textLength="19" lengthAdjust="spacingAndGlyphs" transform="rotate(-90 1906 796)" font-weight="bold" stroke="#ffdaf2" stroke-width=".45" >R24</text>
<text x="1924" y="796" font-size="11" fill="#ffdaf2" text-anchor="start" textLength="19" lengthAdjust="spacingAndGlyphs" transform="rotate(-90 1924 796)" font-weight="bold" stroke="#ffdaf2" stroke-width=".45" >R31</text>
<text x="1942" y="796" font-size="11" fill="#ffdaf2" text-anchor="start" textLength="19" lengthAdjust="spacingAndGlyphs" transform="rotate(-90 1942 796)" font-weight="bold" stroke="#ffdaf2" stroke-width=".45" >R32</text>
<text x="1855" y="843" font-size="11" fill="#ffdaf2" text-anchor="start" textLength="19" lengthAdjust="spacingAndGlyphs" transform="rotate(-90 1855 843)" font-weight="bold" stroke="#ffdaf2" stroke-width=".45" >R29</text>
<text x="1873" y="843" font-size="11" fill="#ffdaf2" text-anchor="start" textLength="19" lengthAdjust="spacingAndGlyphs" transform="rotate(-90 1873 843)" font-weight="bold" stroke="#ffdaf2" stroke-width=".45" >R28</text>
<polyline points="1838,815 1838,835 1830,843" fill="none" stroke="#fbf2dc" stroke-width="1.6" />
<text x="1760.5" y="843.6" font-size="11.5" fill="#ffdaf2" text-anchor="start" textLength="23.5" lengthAdjust="spacingAndGlyphs" font-weight="bold" stroke="#ffdaf2" stroke-width=".45" >TP76</text>
<rect x="1776.5" y="846" width="52.5" height="33" fill="none" stroke="#fbf2dc" stroke-width="2.6"/>
<polyline points="1794,846 1794,879" fill="none" stroke="#fbf2dc" stroke-width="1" />
<polyline points="1811,846 1811,879" fill="none" stroke="#fbf2dc" stroke-width="1" />
<rect x="1779.8" y="849.2" width="11.6" height="12.1" rx="3.6" fill="#000"/>
<rect x="1781.1" y="850.5" width="9" height="9.5" rx="2.6" fill="#ffb85f"/>
<rect x="1779.8" y="863.4" width="11.6" height="12.1" rx="3.6" fill="#000"/>
<rect x="1781.1" y="864.6" width="9" height="9.5" rx="2.6" fill="#ffb85f"/>
<rect x="1796.2" y="849.2" width="11.6" height="12.1" rx="3.6" fill="#000"/>
<rect x="1797.5" y="850.5" width="9" height="9.5" rx="2.6" fill="#ffb85f"/>
<rect x="1796.2" y="863.4" width="11.6" height="12.1" rx="3.6" fill="#000"/>
<rect x="1797.5" y="864.6" width="9" height="9.5" rx="2.6" fill="#ffb85f"/>
<rect x="1812.7" y="849.2" width="11.6" height="12.1" rx="3.6" fill="#000"/>
<rect x="1814" y="850.5" width="9" height="9.5" rx="2.6" fill="#ffb85f"/>
<rect x="1814.8" y="865.6" width="7.5" height="7.5" rx="1" fill="#f9b268"/>
<circle cx="1767" cy="860" r="7.8" fill="#000" />
<circle cx="1767" cy="860" r="6.6" fill="#ffb85f" />
<circle cx="1767" cy="891" r="7.8" fill="#000" />
<circle cx="1767" cy="891" r="6.6" fill="#ffb85f" />
<circle cx="1767" cy="911" r="7.8" fill="#000" />
<circle cx="1767" cy="911" r="6.6" fill="#ffb85f" />
<rect x="1842" y="846" width="15.6" height="30" fill="none" stroke="#fbf2dc" stroke-width="1"/>
<rect x="1859.5" y="846" width="15" height="30" fill="none" stroke="#fbf2dc" stroke-width="1"/>
<rect x="1844.2" y="847.4" width="11.6" height="12.1" rx="3.6" fill="#000"/>
<rect x="1845.5" y="848.6" width="9" height="9.5" rx="2.6" fill="#ffb85f"/>
<rect x="1863.5" y="849.5" width="7" height="7" rx="1" fill="#f9b268"/>
<rect x="1844.2" y="862.2" width="11.6" height="11.6" rx="1.5" fill="#000"/>
<rect x="1845.5" y="863.5" width="9" height="9" rx="0.5" fill="#ffb85f"/>
<rect x="1861.2" y="862.2" width="11.6" height="11.6" rx="1.5" fill="#000"/>
<rect x="1862.5" y="863.5" width="9" height="9" rx="0.5" fill="#ffb85f"/>
<circle cx="1838.5" cy="868" r="2.7" fill="#000" />
<circle cx="1838.5" cy="868" r="1.6" fill="#ffb85f" />
<circle cx="1838.5" cy="868" r="0.8" fill="#8a5a20" />
<polyline points="1840,868 1846,868" fill="none" stroke="#000" stroke-width="1.3" />
<polyline points="1830,842 1906,842" fill="none" stroke="#000" stroke-width="3.2" stroke-linejoin="miter" stroke-linecap="butt"/>
<polyline points="1876,846 1908,846" fill="none" stroke="#000" stroke-width="3" stroke-linejoin="miter" stroke-linecap="butt"/>
<polyline points="1830,842 1906,842" fill="none" stroke="#c3f26b" stroke-width="1.1" stroke-linejoin="miter"/>
<polyline points="1876,846 1908,846" fill="none" stroke="#c3f26b" stroke-width="1" stroke-linejoin="miter"/>
<circle cx="1907" cy="846" r="2.9" fill="#000" />
<circle cx="1907" cy="846" r="1.8" fill="#ffb85f" />
<circle cx="1907" cy="846" r="0.8" fill="#8a5a20" />
<rect x="1912" y="844" width="15.5" height="30" fill="none" stroke="#fbf2dc" stroke-width="1"/>
<rect x="1930" y="844" width="15.5" height="30" fill="none" stroke="#fbf2dc" stroke-width="1"/>
<rect x="1914.2" y="845.7" width="11.1" height="11.6" rx="3.6" fill="#000"/>
<rect x="1915.5" y="847" width="8.5" height="9" rx="2.6" fill="#ffb85f"/>
<rect x="1934.2" y="848" width="7" height="7" rx="1" fill="#f9b268"/>
<rect x="1914.2" y="860.8" width="11.1" height="11.6" rx="3.6" fill="#000"/>
<rect x="1915.5" y="862.1" width="8.5" height="9" rx="2.6" fill="#ffb85f"/>
<rect x="1932.2" y="860.8" width="11.1" height="11.6" rx="3.6" fill="#000"/>
<rect x="1933.5" y="862.1" width="8.5" height="9" rx="2.6" fill="#ffb85f"/>
<polyline points="1924,866.8 1933,866.8" fill="none" stroke="#000" stroke-width="1.5" />
<circle cx="1908.5" cy="866" r="2.6" fill="#000" />
<circle cx="1908.5" cy="866" r="1.5" fill="#ffb85f" />
<circle cx="1908.5" cy="866" r="0.8" fill="#8a5a20" />
<text x="1908" y="870" font-size="11" fill="#ffdaf2" text-anchor="start" textLength="13" lengthAdjust="spacingAndGlyphs" transform="rotate(-90 1908 870)" font-weight="bold" stroke="#ffdaf2" stroke-width=".45" >R9</text>
<text x="1960" y="870" font-size="11" fill="#ffdaf2" text-anchor="start" textLength="19" lengthAdjust="spacingAndGlyphs" transform="rotate(-90 1960 870)" font-weight="bold" stroke="#ffdaf2" stroke-width=".45" >R10</text>
<polygon points="1828,888 1850,888 1858,900 1850,914 1828,910" fill="#000" />
<circle cx="1804.8" cy="895.8" r="8" fill="#000" />
<circle cx="1804.8" cy="895.8" r="6.8" fill="#ffb85f" />
<circle cx="1838.4" cy="899.6" r="8" fill="#000" />
<circle cx="1838.4" cy="899.6" r="6.8" fill="#ffb85f" />
<text x="1787" y="905" font-size="11" fill="#ffdaf2" text-anchor="start" textLength="24" lengthAdjust="spacingAndGlyphs" transform="rotate(-90 1787 905)" font-weight="bold" stroke="#ffdaf2" stroke-width=".45" >TP77</text>
<text x="1821" y="905" font-size="11" fill="#ffdaf2" text-anchor="start" textLength="18" lengthAdjust="spacingAndGlyphs" transform="rotate(-90 1821 905)" font-weight="bold" stroke="#ffdaf2" stroke-width=".45" >TP4</text>
<text x="1855" y="905" font-size="11" fill="#ffdaf2" text-anchor="start" textLength="24" lengthAdjust="spacingAndGlyphs" transform="rotate(-90 1855 905)" font-weight="bold" stroke="#ffdaf2" stroke-width=".45" >TP68</text>
<circle cx="1839.5" cy="880" r="2.9" fill="#000" />
<circle cx="1839.5" cy="880" r="1.8" fill="#ffb85f" />
<circle cx="1839.5" cy="880" r="0.8" fill="#8a5a20" />
<circle cx="1862.5" cy="890" r="2.9" fill="#000" />
<circle cx="1862.5" cy="890" r="1.8" fill="#ffb85f" />
<circle cx="1862.5" cy="890" r="0.8" fill="#8a5a20" />
<circle cx="1887" cy="884" r="2.7" fill="#000" />
<circle cx="1887" cy="884" r="1.6" fill="#ffb85f" />
<circle cx="1887" cy="884" r="0.8" fill="#8a5a20" />
<polyline points="1842,880 1858,880 1880,902 1896,902 1926,932" fill="none" stroke="#000" stroke-width="3.4" stroke-linejoin="miter" stroke-linecap="butt"/>
<polyline points="1865,890 1880,905" fill="none" stroke="#000" stroke-width="3.4" stroke-linejoin="miter" stroke-linecap="butt"/>
<polyline points="1842,880 1858,880 1880,902 1896,902 1926,932" fill="none" stroke="#c3f26b" stroke-width="1.1" stroke-linejoin="miter"/>
<polyline points="1865,890 1880,905" fill="none" stroke="#c3f26b" stroke-width="1.1" stroke-linejoin="miter"/>
<polyline points="1889,884 1928,884 1932,888" fill="none" stroke="#000" stroke-width="1.5" />
<rect x="1925.5" y="884.8" width="30" height="15" fill="none" stroke="#fbf2dc" stroke-width="1"/>
<rect x="1927.5" y="886.2" width="11.1" height="12.1" rx="1.5" fill="#000"/>
<rect x="1928.8" y="887.5" width="8.5" height="9.5" rx="0.5" fill="#ffb85f"/>
<rect x="1944.2" y="888.5" width="7.5" height="7.5" rx="1" fill="#f9b268"/>
<text x="1961" y="897.8" font-size="11.5" fill="#ffdaf2" text-anchor="start" textLength="20" lengthAdjust="spacingAndGlyphs" font-weight="bold" stroke="#ffdaf2" stroke-width=".45" >R16</text>
<rect x="1925.5" y="902.5" width="30" height="15" fill="none" stroke="#fbf2dc" stroke-width="1"/>
<rect x="1927.5" y="904" width="11.1" height="12.1" rx="1.5" fill="#000"/>
<rect x="1928.8" y="905.2" width="8.5" height="9.5" rx="0.5" fill="#ffb85f"/>
<rect x="1942.2" y="904" width="11.6" height="12.1" rx="3.6" fill="#000"/>
<rect x="1943.5" y="905.2" width="9" height="9.5" rx="2.6" fill="#ffb85f"/>
<text x="1961" y="915.5" font-size="11.5" fill="#ffdaf2" text-anchor="start" textLength="20" lengthAdjust="spacingAndGlyphs" font-weight="bold" stroke="#ffdaf2" stroke-width=".45" >R15</text>
<rect x="1925.5" y="920" width="30" height="15" fill="none" stroke="#fbf2dc" stroke-width="1"/>
<rect x="1927.5" y="921.5" width="11.1" height="12.1" rx="1.5" fill="#000"/>
<rect x="1928.8" y="922.8" width="8.5" height="9.5" rx="0.5" fill="#ffb85f"/>
<rect x="1944.2" y="923.8" width="7.5" height="7.5" rx="1" fill="#f9b268"/>
<text x="1961" y="933" font-size="11.5" fill="#ffdaf2" text-anchor="start" textLength="20" lengthAdjust="spacingAndGlyphs" font-weight="bold" stroke="#ffdaf2" stroke-width=".45" >R14</text>
<rect x="1925.5" y="936.5" width="30" height="15" fill="none" stroke="#fbf2dc" stroke-width="1"/>
<rect x="1927.5" y="938" width="11.1" height="12.1" rx="1.5" fill="#000"/>
<rect x="1928.8" y="939.2" width="8.5" height="9.5" rx="0.5" fill="#ffb85f"/>
<rect x="1942.2" y="938" width="11.6" height="12.1" rx="3.6" fill="#000"/>
<rect x="1943.5" y="939.2" width="9" height="9.5" rx="2.6" fill="#ffb85f"/>
<text x="1961" y="949.5" font-size="11.5" fill="#ffdaf2" text-anchor="start" textLength="20" lengthAdjust="spacingAndGlyphs" font-weight="bold" stroke="#ffdaf2" stroke-width=".45" >R13</text>
<polyline points="1933,897 1933,905" fill="none" stroke="#000" stroke-width="1.3" />
<polyline points="1933,932 1933,939" fill="none" stroke="#000" stroke-width="1.3" />
<polyline points="1953,912 1959,918 1959,932 1953,938" fill="none" stroke="#000" stroke-width="1.4" />
<polygon points="1783,910 1838,910 1838,944 1783,944" fill="#000" />
<rect x="1781.3" y="908.3" width="124.4" height="37.7" fill="none" stroke="#fbf2dc" stroke-width="2.6"/>
<polyline points="1800,908.3 1800,946" fill="none" stroke="#fbf2dc" stroke-width="1" />
<polyline points="1817.5,908.3 1817.5,946" fill="none" stroke="#fbf2dc" stroke-width="1" />
<polyline points="1835.5,908.3 1835.5,946" fill="none" stroke="#fbf2dc" stroke-width="1" />
<polyline points="1852.5,908.3 1852.5,946" fill="none" stroke="#fbf2dc" stroke-width="1" />
<polyline points="1870,908.3 1870,946" fill="none" stroke="#fbf2dc" stroke-width="1" />
<polyline points="1887,908.3 1887,946" fill="none" stroke="#fbf2dc" stroke-width="1" />
<rect x="1785.5" y="914" width="11.6" height="12.1" rx="3.6" fill="#000"/>
<rect x="1786.8" y="915.2" width="9" height="9.5" rx="2.6" fill="#ffb85f"/>
<rect x="1785.5" y="929" width="11.6" height="12.1" rx="1.5" fill="#000"/>
<rect x="1786.8" y="930.2" width="9" height="9.5" rx="0.5" fill="#ffb85f"/>
<rect x="1802.8" y="914" width="11.6" height="12.1" rx="3.6" fill="#000"/>
<rect x="1804.1" y="915.2" width="9" height="9.5" rx="2.6" fill="#ffb85f"/>
<rect x="1802.8" y="929" width="11.6" height="12.1" rx="3.6" fill="#000"/>
<rect x="1804.1" y="930.2" width="9" height="9.5" rx="2.6" fill="#ffb85f"/>
<rect x="1820.7" y="914" width="11.6" height="12.1" rx="1.5" fill="#000"/>
<rect x="1822" y="915.2" width="9" height="9.5" rx="0.5" fill="#ffb85f"/>
<rect x="1820.7" y="929" width="11.6" height="12.1" rx="1.5" fill="#000"/>
<rect x="1822" y="930.2" width="9" height="9.5" rx="0.5" fill="#ffb85f"/>
<rect x="1838.6" y="914" width="11.6" height="12.1" rx="3.6" fill="#000"/>
<rect x="1839.9" y="915.2" width="9" height="9.5" rx="2.6" fill="#ffb85f"/>
<rect x="1838.6" y="929" width="11.6" height="12.1" rx="3.6" fill="#000"/>
<rect x="1839.9" y="930.2" width="9" height="9.5" rx="2.6" fill="#ffb85f"/>
<rect x="1857.2" y="916.2" width="7.5" height="7.5" rx="1" fill="#f9b268"/>
<rect x="1855.2" y="929" width="11.6" height="12.1" rx="1.5" fill="#000"/>
<rect x="1856.5" y="930.2" width="9" height="9.5" rx="0.5" fill="#ffb85f"/>
<rect x="1872.9" y="914" width="11.6" height="12.1" rx="3.6" fill="#000"/>
<rect x="1874.2" y="915.2" width="9" height="9.5" rx="2.6" fill="#ffb85f"/>
<rect x="1875" y="931.2" width="7.5" height="7.5" rx="1" fill="#f9b268"/>
<rect x="1889.5" y="914" width="11.6" height="12.1" rx="1.5" fill="#000"/>
<rect x="1890.8" y="915.2" width="9" height="9.5" rx="0.5" fill="#ffb85f"/>
<rect x="1889.5" y="929" width="11.6" height="12.1" rx="1.5" fill="#000"/>
<rect x="1890.8" y="930.2" width="9" height="9.5" rx="0.5" fill="#ffb85f"/>
<rect x="1800" y="910" width="17" height="34" fill="#c3f26b"/>
<rect x="1802.8" y="914" width="11.6" height="12.1" rx="3.6" fill="#000"/>
<rect x="1804.1" y="915.2" width="9" height="9.5" rx="2.6" fill="#ffb85f"/>
<rect x="1802.8" y="929" width="11.6" height="12.1" rx="3.6" fill="#000"/>
<rect x="1804.1" y="930.2" width="9" height="9.5" rx="2.6" fill="#ffb85f"/>
<text x="1770" y="947" font-size="11" fill="#ffdaf2" text-anchor="start" textLength="24" lengthAdjust="spacingAndGlyphs" transform="rotate(-90 1770 947)" font-weight="bold" stroke="#ffdaf2" stroke-width=".45" >TP75</text>
<rect x="1891" y="965.8" width="103.8" height="32.6" fill="none" stroke="#fbf2dc" stroke-width="2.2"/>
<polyline points="1870.8,946 1891,966" fill="none" stroke="#fbf2dc" stroke-width="1.6" />
<text x="1902" y="993" font-size="11" fill="#ffdaf2" text-anchor="start" textLength="12" lengthAdjust="spacingAndGlyphs" transform="rotate(-90 1902 993)" font-weight="bold" stroke="#ffdaf2" stroke-width=".45" >R8</text>
<text x="1915" y="993" font-size="11" fill="#ffdaf2" text-anchor="start" textLength="18" lengthAdjust="spacingAndGlyphs" transform="rotate(-90 1915 993)" font-weight="bold" stroke="#ffdaf2" stroke-width=".45" >R05</text>
<text x="1929" y="993" font-size="11" fill="#ffdaf2" text-anchor="start" textLength="18" lengthAdjust="spacingAndGlyphs" transform="rotate(-90 1929 993)" font-weight="bold" stroke="#ffdaf2" stroke-width=".45" >PL2</text>
<text x="1943" y="993" font-size="11" fill="#ffdaf2" text-anchor="start" textLength="18" lengthAdjust="spacingAndGlyphs" transform="rotate(-90 1943 993)" font-weight="bold" stroke="#ffdaf2" stroke-width=".45" >R02</text>
<text x="1957" y="993" font-size="11" fill="#ffdaf2" text-anchor="start" textLength="12" lengthAdjust="spacingAndGlyphs" transform="rotate(-90 1957 993)" font-weight="bold" stroke="#ffdaf2" stroke-width=".45" >R2</text>
<text x="1971" y="993" font-size="11" fill="#ffdaf2" text-anchor="start" textLength="18" lengthAdjust="spacingAndGlyphs" transform="rotate(-90 1971 993)" font-weight="bold" stroke="#ffdaf2" stroke-width=".45" >R12</text>
<text x="1985" y="993" font-size="11" fill="#ffdaf2" text-anchor="start" textLength="18" lengthAdjust="spacingAndGlyphs" transform="rotate(-90 1985 993)" font-weight="bold" stroke="#ffdaf2" stroke-width=".45" >R11</text>
<rect x="1894.3" y="969" width="3.5" height="3.5" fill="#ffb85f"/>
<rect x="1784" y="963" width="13.5" height="29" fill="none" stroke="#fbf2dc" stroke-width="1"/>
<rect x="1785.8" y="965.1" width="11.1" height="11.6" rx="3.6" fill="#000"/>
<rect x="1787" y="966.4" width="8.5" height="9" rx="2.6" fill="#ffb85f"/>
<rect x="1785.8" y="979.8" width="11.1" height="11.6" rx="3.6" fill="#000"/>
<rect x="1787" y="981.1" width="8.5" height="9" rx="2.6" fill="#ffb85f"/>
<rect x="1818" y="963" width="14" height="29" fill="none" stroke="#fbf2dc" stroke-width="1"/>
<rect x="1819.7" y="965.1" width="11.1" height="11.6" rx="3.6" fill="#000"/>
<rect x="1821" y="966.4" width="8.5" height="9" rx="2.6" fill="#ffb85f"/>
<rect x="1819.7" y="979.8" width="11.1" height="11.6" rx="3.6" fill="#000"/>
<rect x="1821" y="981.1" width="8.5" height="9" rx="2.6" fill="#ffb85f"/>
<text x="1779" y="992" font-size="11" fill="#ffdaf2" text-anchor="start" textLength="24" lengthAdjust="spacingAndGlyphs" transform="rotate(-90 1779 992)" font-weight="bold" stroke="#ffdaf2" stroke-width=".45" >R159</text>
<text x="1845" y="987" font-size="11" fill="#ffdaf2" text-anchor="start" textLength="12" lengthAdjust="spacingAndGlyphs" transform="rotate(-90 1845 987)" font-weight="bold" stroke="#ffdaf2" stroke-width=".45" >R1</text>
<circle cx="1814.5" cy="985" r="2.7" fill="#000" />
<circle cx="1814.5" cy="985" r="1.6" fill="#ffb85f" />
<circle cx="1814.5" cy="985" r="0.8" fill="#8a5a20" />
<polyline points="1830,972.6 1891,972.6" fill="none" stroke="#000" stroke-width="2.2" />
<polyline points="1846.7,946 1846.7,968" fill="none" stroke="#000" stroke-width="1.4" />
<polyline points="1897.2,955.6 1897.2,1044" fill="none" stroke="#000" stroke-width="1.6" />
<polyline points="1897.2,955.6 1946,955.6 1950,951" fill="none" stroke="#000" stroke-width="1.6" />
<polyline points="1722,970 1722,985 1737,1000 1874,1000 1890,1012 1890,1030" fill="none" stroke="#000" stroke-width="5.2" stroke-linejoin="miter" stroke-linecap="butt"/>
<polyline points="1722,1025 1786,1025" fill="none" stroke="#000" stroke-width="3.2" stroke-linejoin="miter" stroke-linecap="butt"/>
<polyline points="1722,970 1722,985 1737,1000 1874,1000 1890,1012 1890,1030" fill="none" stroke="#c3f26b" stroke-width="1.4" stroke-linejoin="miter"/>
<polyline points="1722,1025 1786,1025" fill="none" stroke="#c3f26b" stroke-width="1.1" stroke-linejoin="miter"/>
<circle cx="1754" cy="990.5" r="2.9" fill="#000" />
<circle cx="1754" cy="990.5" r="1.8" fill="#ffb85f" />
<circle cx="1754" cy="990.5" r="0.8" fill="#8a5a20" />
<polyline points="1754,992 1754,997" fill="none" stroke="#000" stroke-width="1.3" />
<circle cx="1804.3" cy="1009" r="8" fill="#000" />
<circle cx="1804.3" cy="1009" r="6.8" fill="#ffb85f" />
<circle cx="1833" cy="1009" r="8" fill="#000" />
<circle cx="1833" cy="1009" r="6.8" fill="#ffb85f" />
<text x="1764.3" y="1013.5" font-size="11.5" fill="#ffdaf2" text-anchor="start" textLength="24" lengthAdjust="spacingAndGlyphs" font-weight="bold" stroke="#ffdaf2" stroke-width=".45" >TP78</text>
<text x="1845.4" y="1013.5" font-size="11.5" fill="#ffdaf2" text-anchor="start" textLength="24" lengthAdjust="spacingAndGlyphs" font-weight="bold" stroke="#ffdaf2" stroke-width=".45" >TP79</text>
<polyline points="1832,1020 1838,1027" fill="none" stroke="#000" stroke-width="1.2" />
<polygon points="1816,1026 1848,1026 1848,1052 1832,1052 1832,1040 1816,1040" fill="#000" />
<rect x="1783.5" y="1025" width="15.6" height="30" fill="none" stroke="#fbf2dc" stroke-width="1"/>
<rect x="1785.5" y="1027" width="11.6" height="12.1" rx="3.6" fill="#000"/>
<rect x="1786.8" y="1028.2" width="9" height="9.5" rx="2.6" fill="#ffb85f"/>
<rect x="1785.5" y="1041.4" width="11.6" height="12.1" rx="3.6" fill="#000"/>
<rect x="1786.8" y="1042.7" width="9" height="9.5" rx="2.6" fill="#ffb85f"/>
<rect x="1799.9" y="1025" width="15.6" height="30" fill="none" stroke="#fbf2dc" stroke-width="1"/>
<rect x="1801.9" y="1027" width="11.6" height="12.1" rx="3.6" fill="#000"/>
<rect x="1803.2" y="1028.2" width="9" height="9.5" rx="2.6" fill="#ffb85f"/>
<rect x="1801.9" y="1041.4" width="11.6" height="12.1" rx="3.6" fill="#000"/>
<rect x="1803.2" y="1042.7" width="9" height="9.5" rx="2.6" fill="#ffb85f"/>
<rect x="1815.9" y="1025" width="15.6" height="30" fill="none" stroke="#fbf2dc" stroke-width="1"/>
<rect x="1817.9" y="1027" width="11.6" height="12.1" rx="1.5" fill="#000"/>
<rect x="1819.2" y="1028.2" width="9" height="9.5" rx="0.5" fill="#ffb85f"/>
<rect x="1817.9" y="1041.4" width="11.6" height="12.1" rx="3.6" fill="#000"/>
<rect x="1819.2" y="1042.7" width="9" height="9.5" rx="2.6" fill="#ffb85f"/>
<rect x="1831.9" y="1025" width="15.6" height="30" fill="none" stroke="#fbf2dc" stroke-width="1"/>
<rect x="1833.9" y="1027" width="11.6" height="12.1" rx="1.5" fill="#000"/>
<rect x="1835.2" y="1028.2" width="9" height="9.5" rx="0.5" fill="#ffb85f"/>
<rect x="1833.9" y="1041.4" width="11.6" height="12.1" rx="3.6" fill="#000"/>
<rect x="1835.2" y="1042.7" width="9" height="9.5" rx="2.6" fill="#ffb85f"/>
<rect x="1848.2" y="1025" width="15.6" height="30" fill="none" stroke="#fbf2dc" stroke-width="1"/>
<rect x="1852.2" y="1029.2" width="7.5" height="7.5" rx="1" fill="#f9b268"/>
<rect x="1850.2" y="1041.4" width="11.6" height="12.1" rx="3.6" fill="#000"/>
<rect x="1851.5" y="1042.7" width="9" height="9.5" rx="2.6" fill="#ffb85f"/>
<rect x="1864.9" y="1025" width="15.6" height="30" fill="none" stroke="#fbf2dc" stroke-width="1"/>
<rect x="1866.9" y="1027" width="11.6" height="12.1" rx="1.5" fill="#000"/>
<rect x="1868.2" y="1028.2" width="9" height="9.5" rx="0.5" fill="#ffb85f"/>
<rect x="1866.9" y="1041.4" width="11.6" height="12.1" rx="1.5" fill="#000"/>
<rect x="1868.2" y="1042.7" width="9" height="9.5" rx="0.5" fill="#ffb85f"/>
<rect x="1880.9" y="1025" width="15.6" height="30" fill="none" stroke="#fbf2dc" stroke-width="1"/>
<rect x="1882.9" y="1027" width="11.6" height="12.1" rx="3.6" fill="#000"/>
<rect x="1884.2" y="1028.2" width="9" height="9.5" rx="2.6" fill="#ffb85f"/>
<rect x="1882.9" y="1041.4" width="11.6" height="12.1" rx="3.6" fill="#000"/>
<rect x="1884.2" y="1042.7" width="9" height="9.5" rx="2.6" fill="#ffb85f"/>
<circle cx="1778.8" cy="1031.7" r="2.9" fill="#000" />
<circle cx="1778.8" cy="1031.7" r="1.8" fill="#ffb85f" />
<circle cx="1778.8" cy="1031.7" r="0.8" fill="#8a5a20" />
<text x="1795" y="1086" font-size="11" fill="#ffdaf2" text-anchor="start" textLength="24" lengthAdjust="spacingAndGlyphs" transform="rotate(-90 1795 1086)" font-weight="bold" stroke="#ffdaf2" stroke-width=".45" >R157</text>
<text x="1812" y="1086" font-size="11" fill="#ffdaf2" text-anchor="start" textLength="24" lengthAdjust="spacingAndGlyphs" transform="rotate(-90 1812 1086)" font-weight="bold" stroke="#ffdaf2" stroke-width=".45" >R131</text>
<text x="1828" y="1086" font-size="11" fill="#ffdaf2" text-anchor="start" textLength="24" lengthAdjust="spacingAndGlyphs" transform="rotate(-90 1828 1086)" font-weight="bold" stroke="#ffdaf2" stroke-width=".45" >R160</text>
<text x="1844" y="1086" font-size="11" fill="#ffdaf2" text-anchor="start" textLength="24" lengthAdjust="spacingAndGlyphs" transform="rotate(-90 1844 1086)" font-weight="bold" stroke="#ffdaf2" stroke-width=".45" >R132</text>
<text x="1861" y="1073" font-size="11" fill="#ffdaf2" text-anchor="start" textLength="12" lengthAdjust="spacingAndGlyphs" transform="rotate(-90 1861 1073)" font-weight="bold" stroke="#ffdaf2" stroke-width=".45" >R6</text>
<text x="1877" y="1073" font-size="11" fill="#ffdaf2" text-anchor="start" textLength="12" lengthAdjust="spacingAndGlyphs" transform="rotate(-90 1877 1073)" font-weight="bold" stroke="#ffdaf2" stroke-width=".45" >R5</text>
<text x="1893" y="1086" font-size="11" fill="#ffdaf2" text-anchor="start" textLength="24" lengthAdjust="spacingAndGlyphs" transform="rotate(-90 1893 1086)" font-weight="bold" stroke="#ffdaf2" stroke-width=".45" >R123</text>
<polyline points="1531,972 1531,1000" fill="none" stroke="#000" stroke-width="3.4" stroke-linejoin="miter" stroke-linecap="butt"/>
<polyline points="1541,972 1541,1000" fill="none" stroke="#000" stroke-width="3.4" stroke-linejoin="miter" stroke-linecap="butt"/>
<polyline points="1551,972 1551,1000" fill="none" stroke="#000" stroke-width="3.4" stroke-linejoin="miter" stroke-linecap="butt"/>
<polyline points="1562,972 1562,1000" fill="none" stroke="#000" stroke-width="3.4" stroke-linejoin="miter" stroke-linecap="butt"/>
<polyline points="1541,972 1541,1012 1570,1040 1592,1040 1598,1046 1598,1075 1586,1088 1560,1088" fill="none" stroke="#000" stroke-width="3.4" stroke-linejoin="miter" stroke-linecap="butt"/>
<polyline points="1551,972 1551,1010 1578,1034 1596,1034 1604,1042 1604,1078 1590,1094 1520,1094 1512,1090" fill="none" stroke="#000" stroke-width="3.4" stroke-linejoin="miter" stroke-linecap="butt"/>
<polyline points="1468,1040 1468,1066 1476,1074 1510,1074" fill="none" stroke="#000" stroke-width="3.2" stroke-linejoin="miter" stroke-linecap="butt"/>
<polyline points="1531,972 1531,1000" fill="none" stroke="#c3f26b" stroke-width="1.1" stroke-linejoin="miter"/>
<polyline points="1541,972 1541,1000" fill="none" stroke="#c3f26b" stroke-width="1.1" stroke-linejoin="miter"/>
<polyline points="1551,972 1551,1000" fill="none" stroke="#c3f26b" stroke-width="1.1" stroke-linejoin="miter"/>
<polyline points="1562,972 1562,1000" fill="none" stroke="#c3f26b" stroke-width="1.1" stroke-linejoin="miter"/>
<polyline points="1541,972 1541,1012 1570,1040 1592,1040 1598,1046 1598,1075 1586,1088 1560,1088" fill="none" stroke="#c3f26b" stroke-width="1.1" stroke-linejoin="miter"/>
<polyline points="1551,972 1551,1010 1578,1034 1596,1034 1604,1042 1604,1078 1590,1094 1520,1094 1512,1090" fill="none" stroke="#c3f26b" stroke-width="1.1" stroke-linejoin="miter"/>
<polyline points="1468,1040 1468,1066 1476,1074 1510,1074" fill="none" stroke="#c3f26b" stroke-width="1.1" stroke-linejoin="miter"/>
<polygon points="1447,1014 1456,1004 1530,1004 1530,1050 1512,1062 1486,1062 1470,1050 1470,1030 1447,1030" fill="#000" />
<circle cx="1447.5" cy="1039.5" r="11.5" fill="#000"/><circle cx="1447.5" cy="1039.5" r="10.3" fill="#ffb85f"/><circle cx="1447.5" cy="1039.5" r="5.6" fill="#404040"/>
<circle cx="1488.8" cy="1039.5" r="11.5" fill="#000"/><circle cx="1488.8" cy="1039.5" r="10.3" fill="#ffb85f"/><circle cx="1488.8" cy="1039.5" r="5.6" fill="#404040"/>
<circle cx="1478.5" cy="991" r="7.7" fill="#000" />
<circle cx="1478.5" cy="991" r="6.5" fill="#ffb85f" />
<circle cx="1516.5" cy="992.5" r="7.7" fill="#000" />
<circle cx="1516.5" cy="992.5" r="6.5" fill="#ffb85f" />
<text x="1489" y="990" font-size="11.5" fill="#ffdaf2" text-anchor="start" textLength="23" lengthAdjust="spacingAndGlyphs" font-weight="bold" stroke="#ffdaf2" stroke-width=".45" >TP31</text>
<text x="1531" y="996" font-size="11.5" fill="#ffdaf2" text-anchor="start" textLength="17" lengthAdjust="spacingAndGlyphs" font-weight="bold" stroke="#ffdaf2" stroke-width=".45" >TP2</text>
<rect x="1446" y="980" width="15" height="32" fill="none" stroke="#fbf2dc" stroke-width="1"/>
<rect x="1451" y="985.5" width="7" height="7" rx="1" fill="#f9b268"/>
<rect x="1449.2" y="998.7" width="10.6" height="10.6" rx="1.5" fill="#000"/>
<rect x="1450.5" y="1000" width="8" height="8" rx="0.5" fill="#ffb85f"/>
<text x="1440" y="1011" font-size="11" fill="#ffdaf2" text-anchor="start" textLength="24" lengthAdjust="spacingAndGlyphs" transform="rotate(-90 1440 1011)" font-weight="bold" stroke="#ffdaf2" stroke-width=".45" >C163</text>
<rect x="1464.5" y="1000.5" width="29.5" height="13" fill="none" stroke="#fbf2dc" stroke-width="1"/>
<rect x="1496" y="1000.5" width="30.5" height="13" fill="none" stroke="#fbf2dc" stroke-width="1"/>
<rect x="1466.2" y="1001.7" width="10.6" height="10.6" rx="1.5" fill="#000"/>
<rect x="1467.5" y="1003" width="8" height="8" rx="0.5" fill="#ffb85f"/>
<rect x="1481.7" y="1001.7" width="10.6" height="10.6" rx="1.5" fill="#000"/>
<rect x="1483" y="1003" width="8" height="8" rx="0.5" fill="#ffb85f"/>
<rect x="1498.7" y="1001.7" width="10.6" height="10.6" rx="1.5" fill="#000"/>
<rect x="1500" y="1003" width="8" height="8" rx="0.5" fill="#ffb85f"/>
<rect x="1513.7" y="1001.7" width="10.6" height="10.6" rx="1.5" fill="#000"/>
<rect x="1515" y="1003" width="8" height="8" rx="0.5" fill="#ffb85f"/>
<text x="1531" y="1012" font-size="11.5" fill="#ffdaf2" text-anchor="start" textLength="19" lengthAdjust="spacingAndGlyphs" font-weight="bold" stroke="#ffdaf2" stroke-width=".45" >R38</text>
<text x="1469" y="1028" font-size="11.5" fill="#ffdaf2" text-anchor="start" textLength="25" lengthAdjust="spacingAndGlyphs" font-weight="bold" stroke="#ffdaf2" stroke-width=".45" >R109</text>
<rect x="1509.5" y="1017" width="16.5" height="31" fill="none" stroke="#fbf2dc" stroke-width="1.4"/>
<rect x="1513.2" y="1019.7" width="10.6" height="10.6" rx="1.5" fill="#000"/>
<rect x="1514.5" y="1021" width="8" height="8" rx="0.5" fill="#ffb85f"/>
<rect x="1513.2" y="1034.7" width="10.6" height="10.6" rx="1.5" fill="#000"/>
<rect x="1514.5" y="1036" width="8" height="8" rx="0.5" fill="#ffb85f"/>
<text x="1542" y="1046" font-size="11" fill="#ffdaf2" text-anchor="start" textLength="24" lengthAdjust="spacingAndGlyphs" transform="rotate(-90 1542 1046)" font-weight="bold" stroke="#ffdaf2" stroke-width=".45" >C105</text>
<circle cx="1504.5" cy="1046" r="2.7" fill="#000" />
<circle cx="1504.5" cy="1046" r="1.6" fill="#ffb85f" />
<circle cx="1504.5" cy="1046" r="0.8" fill="#8a5a20" />
<circle cx="1463" cy="1019" r="2.7" fill="#000" />
<circle cx="1463" cy="1019" r="1.6" fill="#ffb85f" />
<circle cx="1463" cy="1019" r="0.8" fill="#8a5a20" />
<polyline points="1500,1040 1510,1040" fill="none" stroke="#000" stroke-width="1.3" />
<rect x="1524" y="1053" width="16" height="29" fill="none" stroke="#fbf2dc" stroke-width="1"/>
<rect x="1527" y="1054.2" width="11.1" height="11.6" rx="1.5" fill="#000"/>
<rect x="1528.2" y="1055.5" width="8.5" height="9" rx="0.5" fill="#ffb85f"/>
<rect x="1527" y="1069.2" width="11.1" height="11.6" rx="1.5" fill="#000"/>
<rect x="1528.2" y="1070.5" width="8.5" height="9" rx="0.5" fill="#ffb85f"/>
<rect x="1525" y="1053" width="4" height="14" fill="#000"/>
<rect x="1542.5" y="1052" width="15" height="30" fill="none" stroke="#fbf2dc" stroke-width="1"/>
<rect x="1544.5" y="1054.2" width="11.1" height="11.6" rx="3.6" fill="#000"/>
<rect x="1545.8" y="1055.5" width="8.5" height="9" rx="2.6" fill="#ffb85f"/>
<rect x="1546.5" y="1071.5" width="7" height="7" rx="1" fill="#f9b268"/>
<polyline points="1550,1010 1550,1054" fill="none" stroke="#000" stroke-width="1.4" />
<rect x="1559" y="1052" width="15" height="30" fill="none" stroke="#fbf2dc" stroke-width="1"/>
<rect x="1561" y="1054.2" width="11.1" height="11.6" rx="3.6" fill="#000"/>
<rect x="1562.2" y="1055.5" width="8.5" height="9" rx="2.6" fill="#ffb85f"/>
<rect x="1563" y="1071.5" width="7" height="7" rx="1" fill="#f9b268"/>
<polyline points="1566.5,1010 1566.5,1054" fill="none" stroke="#000" stroke-width="1.4" />
<text x="1525" y="1081" font-size="11" fill="#ffdaf2" text-anchor="start" textLength="24" lengthAdjust="spacingAndGlyphs" transform="rotate(-90 1525 1081)" font-weight="bold" stroke="#ffdaf2" stroke-width=".45" >R122</text>
<text x="1556" y="1048" font-size="11" fill="#ffdaf2" text-anchor="start" textLength="24" lengthAdjust="spacingAndGlyphs" transform="rotate(-90 1556 1048)" font-weight="bold" stroke="#ffdaf2" stroke-width=".45" >R103</text>
<text x="1573" y="1048" font-size="11" fill="#ffdaf2" text-anchor="start" textLength="24" lengthAdjust="spacingAndGlyphs" transform="rotate(-90 1573 1048)" font-weight="bold" stroke="#ffdaf2" stroke-width=".45" >R106</text>
<circle cx="1601.5" cy="1040.5" r="2.9" fill="#000" />
<circle cx="1601.5" cy="1040.5" r="1.8" fill="#ffb85f" />
<circle cx="1601.5" cy="1040.5" r="0.8" fill="#8a5a20" />
<circle cx="1592" cy="1056.5" r="2.7" fill="#000" />
<circle cx="1592" cy="1056.5" r="1.6" fill="#ffb85f" />
<circle cx="1592" cy="1056.5" r="0.8" fill="#8a5a20" />
<circle cx="1517" cy="1089" r="2.7" fill="#000" />
<circle cx="1517" cy="1089" r="1.6" fill="#ffb85f" />
<circle cx="1517" cy="1089" r="0.8" fill="#8a5a20" />
<rect x="1612" y="1064" width="16" height="76" fill="none" stroke="#fbf2dc" stroke-width="1"/>
<rect x="1615.2" y="1065.5" width="10.6" height="11.1" rx="1.5" fill="#000"/>
<rect x="1616.5" y="1066.8" width="8" height="8.5" rx="0.5" fill="#ffb85f"/>
<rect x="1615.2" y="1080.5" width="10.6" height="11.1" rx="3.6" fill="#000"/>
<rect x="1616.5" y="1081.8" width="8" height="8.5" rx="2.6" fill="#ffb85f"/>
<rect x="1615.2" y="1111.5" width="10.6" height="11.1" rx="1.5" fill="#000"/>
<rect x="1616.5" y="1112.8" width="8" height="8.5" rx="0.5" fill="#ffb85f"/>
<rect x="1617.2" y="1127.8" width="6.5" height="6.5" rx="1" fill="#f9b268"/>
<circle cx="1620.5" cy="1101" r="7.5" fill="#000" />
<circle cx="1620.5" cy="1101" r="6.3" fill="#ffb85f" />
<polyline points="1620.5,1058 1620.5,1066" fill="none" stroke="#000" stroke-width="1.3" />
<text x="1630" y="1060" font-size="11" fill="#ffdaf2" text-anchor="start" textLength="24" lengthAdjust="spacingAndGlyphs" transform="rotate(-90 1630 1060)" font-weight="bold" stroke="#ffdaf2" stroke-width=".45" >R172</text>
<text x="1648" y="1138" font-size="11" fill="#ffdaf2" text-anchor="start" textLength="24" lengthAdjust="spacingAndGlyphs" transform="rotate(-90 1648 1138)" font-weight="bold" stroke="#ffdaf2" stroke-width=".45" >C116</text>
<rect x="1524" y="1105" width="15" height="29" fill="none" stroke="#fbf2dc" stroke-width="1"/>
<rect x="1541" y="1105" width="15" height="29" fill="none" stroke="#fbf2dc" stroke-width="1"/>
<rect x="1559.5" y="1105" width="15" height="29" fill="none" stroke="#fbf2dc" stroke-width="1"/>
<rect x="1577" y="1105" width="15" height="29" fill="none" stroke="#fbf2dc" stroke-width="1"/>
<rect x="1525.7" y="1106.5" width="11.6" height="12.1" rx="3.6" fill="#000"/>
<rect x="1527" y="1107.8" width="9" height="9.5" rx="2.6" fill="#ffb85f"/>
<rect x="1542.7" y="1106.5" width="11.6" height="12.1" rx="3.6" fill="#000"/>
<rect x="1544" y="1107.8" width="9" height="9.5" rx="2.6" fill="#ffb85f"/>
<rect x="1561.2" y="1106.7" width="11.6" height="11.6" rx="1.5" fill="#000"/>
<rect x="1562.5" y="1108" width="9" height="9" rx="0.5" fill="#ffb85f"/>
<rect x="1578.7" y="1106.5" width="11.6" height="12.1" rx="3.6" fill="#000"/>
<rect x="1580" y="1107.8" width="9" height="9.5" rx="2.6" fill="#ffb85f"/>
<rect x="1528" y="1124.5" width="7" height="7" rx="1" fill="#f9b268"/>
<rect x="1542.7" y="1122" width="11.6" height="12.1" rx="3.6" fill="#000"/>
<rect x="1544" y="1123.2" width="9" height="9.5" rx="2.6" fill="#ffb85f"/>
<rect x="1561.2" y="1122.2" width="11.6" height="11.6" rx="1.5" fill="#000"/>
<rect x="1562.5" y="1123.5" width="9" height="9" rx="0.5" fill="#ffb85f"/>
<rect x="1581" y="1124.5" width="7" height="7" rx="1" fill="#f9b268"/>
<polyline points="1536,1112.5 1544,1112.5" fill="none" stroke="#000" stroke-width="1.4" />
<polyline points="1571,1112.5 1580,1112.5" fill="none" stroke="#000" stroke-width="1.4" />
<polyline points="1553,1128 1563,1128" fill="none" stroke="#000" stroke-width="1.4" />
<polyline points="1548,1133 1544,1142" fill="none" stroke="#000" stroke-width="1.4" />
<circle cx="1543.5" cy="1143.5" r="2.8" fill="#000" />
<circle cx="1543.5" cy="1143.5" r="1.7" fill="#ffb85f" />
<circle cx="1543.5" cy="1143.5" r="0.8" fill="#8a5a20" />
<circle cx="1516.5" cy="1088.5" r="2.7" fill="#000" />
<circle cx="1516.5" cy="1088.5" r="1.6" fill="#ffb85f" />
<circle cx="1516.5" cy="1088.5" r="0.8" fill="#8a5a20" />
<text x="1537" y="1103" font-size="11.5" fill="#ffdaf2" text-anchor="start" textLength="25" lengthAdjust="spacingAndGlyphs" font-weight="bold" stroke="#ffdaf2" stroke-width=".45" >R107</text>
<text x="1558" y="1148" font-size="11.5" fill="#ffdaf2" text-anchor="start" textLength="25" lengthAdjust="spacingAndGlyphs" font-weight="bold" stroke="#ffdaf2" stroke-width=".45" >R102</text>
<text x="1514" y="1132" font-size="11" fill="#ffdaf2" text-anchor="start" textLength="24" lengthAdjust="spacingAndGlyphs" transform="rotate(-90 1514 1132)" font-weight="bold" stroke="#ffdaf2" stroke-width=".45" >R105</text>
<text x="1598" y="1132" font-size="11" fill="#ffdaf2" text-anchor="start" textLength="24" lengthAdjust="spacingAndGlyphs" transform="rotate(-90 1598 1132)" font-weight="bold" stroke="#ffdaf2" stroke-width=".45" >R104</text>
<rect x="1636" y="1002" width="17" height="30" fill="none" stroke="#fbf2dc" stroke-width="1"/>
<rect x="1639.5" y="1004.2" width="11.1" height="11.6" rx="3.6" fill="#000"/>
<rect x="1640.8" y="1005.5" width="8.5" height="9" rx="2.6" fill="#ffb85f"/>
<rect x="1641.5" y="1021.5" width="7" height="7" rx="1" fill="#f9b268"/>
<circle cx="1633" cy="1008.5" r="2.7" fill="#000" />
<circle cx="1633" cy="1008.5" r="1.6" fill="#ffb85f" />
<circle cx="1633" cy="1008.5" r="0.8" fill="#8a5a20" />
<text x="1661" y="1027" font-size="11" fill="#ffdaf2" text-anchor="start" textLength="18" lengthAdjust="spacingAndGlyphs" transform="rotate(-90 1661 1027)" font-weight="bold" stroke="#ffdaf2" stroke-width=".45" >C85</text>
<rect x="1687" y="1040" width="14" height="31" fill="none" stroke="#fbf2dc" stroke-width="1"/>
<rect x="1689" y="1042.2" width="11.1" height="11.6" rx="3.6" fill="#000"/>
<rect x="1690.2" y="1043.5" width="8.5" height="9" rx="2.6" fill="#ffb85f"/>
<rect x="1689" y="1057.2" width="11.1" height="11.6" rx="1.5" fill="#000"/>
<rect x="1690.2" y="1058.5" width="8.5" height="9" rx="0.5" fill="#ffb85f"/>
<rect x="1717" y="1031" width="14" height="31" fill="none" stroke="#fbf2dc" stroke-width="1"/>
<rect x="1718.5" y="1033.7" width="11.1" height="11.6" rx="3.6" fill="#000"/>
<rect x="1719.8" y="1035" width="8.5" height="9" rx="2.6" fill="#ffb85f"/>
<rect x="1718.5" y="1048.2" width="11.1" height="11.6" rx="1.5" fill="#000"/>
<rect x="1719.8" y="1049.5" width="8.5" height="9" rx="0.5" fill="#ffb85f"/>
<polyline points="1699,1063 1720,1063 1724,1058" fill="none" stroke="#000" stroke-width="1.5" />
<circle cx="1677.5" cy="1030" r="2.7" fill="#000" />
<circle cx="1677.5" cy="1030" r="1.6" fill="#ffb85f" />
<circle cx="1677.5" cy="1030" r="0.8" fill="#8a5a20" />
<polyline points="1679,1032 1690,1043" fill="none" stroke="#000" stroke-width="1.4" />
<text x="1698" y="1105" font-size="11" fill="#ffdaf2" text-anchor="start" textLength="24" lengthAdjust="spacingAndGlyphs" transform="rotate(-90 1698 1105)" font-weight="bold" stroke="#ffdaf2" stroke-width=".45" >R134</text>
<text x="1728" y="1027" font-size="11" fill="#ffdaf2" text-anchor="start" textLength="24" lengthAdjust="spacingAndGlyphs" transform="rotate(-90 1728 1027)" font-weight="bold" stroke="#ffdaf2" stroke-width=".45" >R130</text>
<polyline points="1634,1146 1665,1146 1733,1078 1733,1046 1728,1040" fill="none" stroke="#000" stroke-width="4.6" stroke-linejoin="miter" stroke-linecap="butt"/>
<polyline points="1634,1146 1665,1146 1733,1078 1733,1046 1728,1040" fill="none" stroke="#c3f26b" stroke-width="1.4" stroke-linejoin="miter"/>
<circle cx="1636" cy="1145.5" r="2.9" fill="#000" />
<circle cx="1636" cy="1145.5" r="1.8" fill="#ffb85f" />
<circle cx="1636" cy="1145.5" r="0.8" fill="#8a5a20" />
<rect x="1421" y="1165" width="213.5" height="48.8" fill="none" stroke="#fbf2dc" stroke-width="1.1"/>
<rect x="1433.7" y="1170" width="7.6" height="41" fill="#fbb062"/>
<rect x="1445.6" y="1148" width="10" height="64" rx="5" fill="#000"/>
<rect x="1445.6" y="1190" width="10" height="22" fill="#000"/>
<rect x="1448" y="1150.4" width="5.2" height="20" rx="2.6" fill="#c3f26b"/>
<path fill="#ffb85f" d="M1447.2 1170h6.8v41h-6.8zM1449.5 1153h2.2v2.2h-2.2z"/>
<rect x="1459.9" y="1170" width="7.6" height="41" fill="#fbb062"/>
<rect x="1471.8" y="1142" width="10" height="70" rx="5" fill="#000"/>
<rect x="1471.8" y="1190" width="10" height="22" fill="#000"/>
<rect x="1474.2" y="1144.4" width="5.2" height="26" rx="2.6" fill="#c3f26b"/>
<path fill="#ffb85f" d="M1473.4 1170h6.8v41h-6.8zM1475.7 1147h2.2v2.2h-2.2z"/>
<rect x="1486.1" y="1170" width="7.6" height="41" fill="#fbb062"/>
<rect x="1498" y="1148" width="10" height="64" rx="5" fill="#000"/>
<rect x="1498" y="1190" width="10" height="22" fill="#000"/>
<rect x="1500.4" y="1150.4" width="5.2" height="20" rx="2.6" fill="#c3f26b"/>
<path fill="#ffb85f" d="M1499.6 1170h6.8v41h-6.8zM1501.9 1153h2.2v2.2h-2.2z"/>
<rect x="1512.3" y="1170" width="7.6" height="41" fill="#fbb062"/>
<rect x="1524.2" y="1148" width="10" height="64" rx="5" fill="#000"/>
<rect x="1524.2" y="1190" width="10" height="22" fill="#000"/>
<rect x="1526.6" y="1150.4" width="5.2" height="20" rx="2.6" fill="#c3f26b"/>
<path fill="#ffb85f" d="M1525.8 1170h6.8v41h-6.8zM1528.1 1153h2.2v2.2h-2.2z"/>
<rect x="1538.5" y="1170" width="7.6" height="41" fill="#fbb062"/>
<rect x="1550.4" y="1148" width="10" height="64" rx="5" fill="#000"/>
<rect x="1550.4" y="1190" width="10" height="22" fill="#000"/>
<rect x="1552.8" y="1150.4" width="5.2" height="20" rx="2.6" fill="#c3f26b"/>
<path fill="#ffb85f" d="M1552 1170h6.8v41h-6.8zM1554.3 1153h2.2v2.2h-2.2z"/>
<rect x="1564.7" y="1170" width="7.6" height="41" fill="#fbb062"/>
<rect x="1576.6" y="1148" width="10" height="64" rx="5" fill="#000"/>
<rect x="1576.6" y="1190" width="10" height="22" fill="#000"/>
<rect x="1579" y="1150.4" width="5.2" height="20" rx="2.6" fill="#c3f26b"/>
<path fill="#ffb85f" d="M1578.2 1170h6.8v41h-6.8zM1580.5 1153h2.2v2.2h-2.2z"/>
<rect x="1590.9" y="1170" width="7.6" height="41" fill="#fbb062"/>
<rect x="1602.8" y="1148" width="10" height="64" rx="5" fill="#000"/>
<rect x="1602.8" y="1190" width="10" height="22" fill="#000"/>
<rect x="1605.2" y="1150.4" width="5.2" height="20" rx="2.6" fill="#c3f26b"/>
<path fill="#ffb85f" d="M1604.4 1170h6.8v41h-6.8zM1606.7 1153h2.2v2.2h-2.2z"/>
<rect x="1617.1" y="1170" width="7.6" height="41" fill="#fbb062"/>
<text x="1381" y="1181" font-size="12" fill="#ffdaf2" text-anchor="start" textLength="25" lengthAdjust="spacingAndGlyphs" font-weight="bold" stroke="#ffdaf2" stroke-width=".45" >CN3</text>
<path d="M1451 1059 V1068 L1459 1077 M1484 1059 V1068 L1476 1077" stroke="#fbf2dc" stroke-width="2" fill="none"/>
<path d="M1446.5 1080 H1489.5 V1195 L1481 1203.5 H1455 L1446.5 1195 Z" stroke="#fbf2dc" stroke-width="2.4" fill="none"/>
<text x="1502" y="1125" font-size="11" fill="#ffdaf2" text-anchor="start" textLength="24" lengthAdjust="spacingAndGlyphs" transform="rotate(-90 1502 1125)" font-weight="bold" stroke="#ffdaf2" stroke-width=".45" >X102</text>
<path d="M838 101.500 H2150" stroke="#8a8a8a" stroke-width="1.500"/><path d="M838.500 101 V1289" stroke="#707070" stroke-width="1.200"/>
</svg>
</body></html>
